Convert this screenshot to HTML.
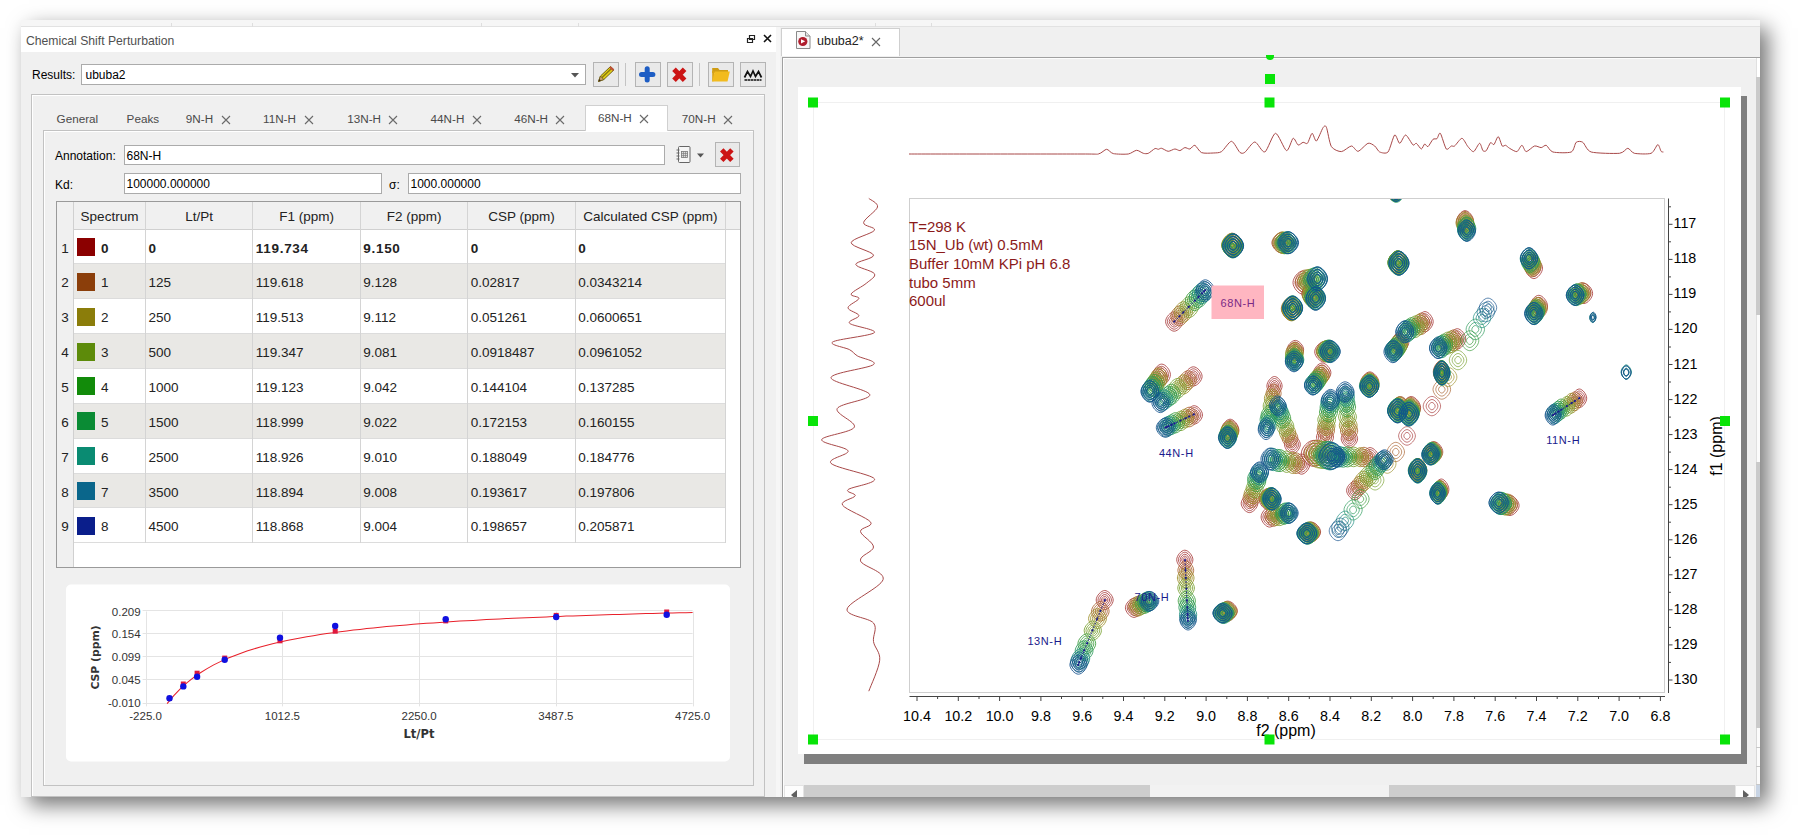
<!DOCTYPE html>
<html>
<head>
<meta charset="utf-8">
<title>Chemical Shift Perturbation</title>
<style>
html,body{margin:0;padding:0;background:#fff;}
body{width:1802px;height:839px;position:relative;overflow:hidden;font-family:"Liberation Sans",sans-serif;font-size:12px;color:#000;}
.abs{position:absolute;}
#win{position:absolute;left:21px;top:20px;width:1739px;height:777px;background:#f0f0f0;box-shadow:8px 8px 20px 0 rgba(0,0,0,0.55);overflow:hidden;}
#win *{box-sizing:border-box;}
#win svg *{box-sizing:content-box;}
.strip{position:absolute;left:0;top:0;width:1739px;height:7px;background:#f6f6f6;border-bottom:1px solid #e2e2e2;}
.titlebar{position:absolute;left:0;top:7px;width:755px;height:25px;background:#fff;}
.titlebar span{position:absolute;left:5px;top:6.500px;font-size:12.200px;color:#505050;}
.inp{position:absolute;background:#fff;border:1px solid #ababab;font-size:12px;line-height:20px;padding-left:2px;white-space:nowrap;}
.btn{position:absolute;width:26px;height:24.500px;border:1px solid #b4b4b4;background:#e9e9e9;}
.btn svg{position:absolute;left:0;top:0;}
.lbl{position:absolute;font-size:12px;white-space:nowrap;}
.tab{position:absolute;font-size:11.700px;color:#4a4a4a;white-space:nowrap;}
.th{font-size:13.500px;text-align:center;line-height:30px;color:#222;white-space:nowrap;}
.td{font-size:13.500px;white-space:nowrap;color:#222;}
.rn{font-size:13.500px;text-align:center;color:#222;}
</style>
</head>
<body>
<div id="win">
  <div class="strip"><i style="position:absolute;left:150px;top:3px;width:1px;height:4px;background:#dedede"></i><i style="position:absolute;left:231px;top:3px;width:1px;height:4px;background:#dedede"></i><i style="position:absolute;left:460px;top:3px;width:1px;height:4px;background:#dedede"></i><i style="position:absolute;left:557px;top:3px;width:1px;height:4px;background:#dedede"></i><i style="position:absolute;left:854px;top:3px;width:1px;height:4px;background:#dedede"></i><i style="position:absolute;left:910px;top:3px;width:1px;height:4px;background:#dedede"></i></div>
  <div class="titlebar"><span>Chemical Shift Perturbation</span>
    <svg class="abs" style="left:724px;top:6px" width="30" height="12" viewBox="0 0 30 12"><path d="M4.500 2.500h5v4h-5zM2.500 5.500h5v4h-5z" fill="#fff" stroke="#222" stroke-width="1.200"/><path d="M19 2l7 7M26 2l-7 7" stroke="#111" stroke-width="1.600"/></svg>
  </div>
  <div class="abs" style="left:755px;top:7px;width:4px;height:770px;background:#f6f6f6;"></div>
  <div id="left" class="abs" style="left:0;top:32px;width:755px;height:745px;overflow:hidden;">
<svg class="abs" style="left:0;top:0" width="755" height="745" viewBox="21 52 755 745">
<rect x="66" y="584.5" width="664" height="177" rx="5" fill="#fff"/>
<path d="M146.5 611.5V706.4" stroke="#e4e4e4" stroke-width="1"/>
<path d="M282.5 611.5V706.4" stroke="#e4e4e4" stroke-width="1"/>
<path d="M419.5 611.5V706.4" stroke="#e4e4e4" stroke-width="1"/>
<path d="M556.5 611.5V706.4" stroke="#e4e4e4" stroke-width="1"/>
<path d="M693.5 611.5V706.4" stroke="#e4e4e4" stroke-width="1"/>
<path d="M142.6 610.5H692.6" stroke="#e4e4e4" stroke-width="1"/>
<path d="M142.6 633.5H692.6" stroke="#e4e4e4" stroke-width="1"/>
<path d="M142.6 656.5H692.6" stroke="#e4e4e4" stroke-width="1"/>
<path d="M142.6 679.5H692.6" stroke="#e4e4e4" stroke-width="1"/>
<path d="M142.6 703.5H692.6" stroke="#e4e4e4" stroke-width="1"/>
<text x="140.6" y="615.5" text-anchor="end" font-size="11.500" fill="#333">0.209</text>
<text x="140.6" y="637.7" text-anchor="end" font-size="11.500" fill="#333">0.154</text>
<text x="140.6" y="660.8" text-anchor="end" font-size="11.500" fill="#333">0.099</text>
<text x="140.6" y="683.9" text-anchor="end" font-size="11.500" fill="#333">0.045</text>
<text x="140.6" y="707.4" text-anchor="end" font-size="11.500" fill="#333">-0.010</text>
<text x="145.6" y="719.500" text-anchor="middle" font-size="11.500" fill="#333">-225.0</text>
<text x="282.4" y="719.500" text-anchor="middle" font-size="11.500" fill="#333">1012.5</text>
<text x="419.1" y="719.500" text-anchor="middle" font-size="11.500" fill="#333">2250.0</text>
<text x="555.9" y="719.500" text-anchor="middle" font-size="11.500" fill="#333">3487.5</text>
<text x="692.6" y="719.500" text-anchor="middle" font-size="11.500" fill="#333">4725.0</text>
<text x="419" y="738" text-anchor="middle" font-size="11.500" font-weight="bold" fill="#333" font-family="'DejaVu Sans','Liberation Sans',sans-serif">Lt/Pt</text>
<text transform="translate(98.500,657.500) rotate(-90)" text-anchor="middle" font-size="10.800" font-weight="bold" fill="#333" font-family="'DejaVu Sans','Liberation Sans',sans-serif">CSP (ppm)</text>
<path d="M167.1 703.7L173.8 695.6L180.5 688.7L187.1 682.6L193.8 677.4L200.4 672.7L207.1 668.6L213.7 664.9L220.4 661.6L227.0 658.6L233.7 655.9L240.3 653.4L247.0 651.1L253.6 649.0L260.3 647.1L266.9 645.3L273.6 643.6L280.2 642.1L286.9 640.6L293.5 639.3L300.2 638.0L306.8 636.8L313.5 635.7L320.1 634.6L326.8 633.6L333.4 632.7L340.1 631.8L346.7 630.9L353.4 630.1L360.0 629.4L366.7 628.6L373.3 627.9L380.0 627.3L386.6 626.6L393.3 626.0L399.9 625.4L406.6 624.9L413.2 624.3L419.9 623.8L426.5 623.3L433.2 622.9L439.9 622.4L446.5 622.0L453.2 621.5L459.8 621.1L466.5 620.7L473.1 620.4L479.8 620.0L486.4 619.6L493.1 619.3L499.7 619.0L506.4 618.6L513.0 618.3L519.7 618.0L526.3 617.7L533.0 617.4L539.6 617.2L546.3 616.9L552.9 616.6L559.6 616.4L566.2 616.1L572.9 615.9L579.5 615.7L586.2 615.4L592.8 615.2L599.5 615.0L606.1 614.8L612.8 614.6L619.4 614.4L626.1 614.2L632.7 614.0L639.4 613.8L646.0 613.6L652.7 613.5L659.3 613.3L666.0 613.1L672.6 613.0L679.3 612.8L685.9 612.7L692.6 612.5" fill="none" stroke="#e8202a" stroke-width="1.050"/>
<rect x="167.0" y="695.9" width="5" height="5" fill="#e0183c"/>
<rect x="180.8" y="681.5" width="5" height="5" fill="#e0183c"/>
<rect x="194.6" y="670.7" width="5" height="5" fill="#e0183c"/>
<rect x="222.2" y="655.6" width="5" height="5" fill="#e0183c"/>
<rect x="277.5" y="638.3" width="5" height="5" fill="#e0183c"/>
<rect x="332.7" y="628.7" width="5" height="5" fill="#e0183c"/>
<rect x="443.2" y="618.4" width="5" height="5" fill="#e0183c"/>
<rect x="553.7" y="612.9" width="5" height="5" fill="#e0183c"/>
<rect x="664.2" y="609.5" width="5" height="5" fill="#e0183c"/>
<circle cx="169.5" cy="698.2" r="3.200" fill="#1010e0"/>
<circle cx="183.3" cy="686.4" r="3.200" fill="#1010e0"/>
<circle cx="197.1" cy="676.7" r="3.200" fill="#1010e0"/>
<circle cx="224.7" cy="659.7" r="3.200" fill="#1010e0"/>
<circle cx="280.0" cy="637.7" r="3.200" fill="#1010e0"/>
<circle cx="335.2" cy="626.0" r="3.200" fill="#1010e0"/>
<circle cx="445.7" cy="619.3" r="3.200" fill="#1010e0"/>
<circle cx="556.2" cy="617.0" r="3.200" fill="#1010e0"/>
<circle cx="666.7" cy="614.8" r="3.200" fill="#1010e0"/>
</svg>
<div class="lbl" style="left:11px;top:16px;">Results:</div>
<div class="inp" style="left:60px;top:12px;width:505px;height:21px;line-height:21px;padding-left:3.500px;">ububa2<svg style="position:absolute;right:6px;top:8px" width="8" height="5"><path d="M0 0h8L4 4.5z" fill="#555"/></svg></div>
<div class="btn" style="left:572px;top:10.2px;"><svg width="24" height="22" viewBox="0 0 24 22"><path d="M4.500 18.500l2-5.500L16.500 3.500l3.500 3.300L9.800 16.500z" fill="#e6d018" stroke="#6e6210" stroke-width="1"/><path d="M7.500 15L18 5" stroke="#8a7c0e" stroke-width="1.600"/><path d="M4.500 18.500l2-5.500 3.300 3.500z" fill="#c9a06a" stroke="#6e5a20" stroke-width=".8"/><path d="M4.500 18.500l.9-2.400 1.500 1.500z" fill="#3a2a10"/><path d="M16 4l3.500 3.300" stroke="#c0503a" stroke-width="2.200"/></svg></div>
<div class="btn" style="left:614px;top:10.2px;"><svg width="24" height="22" viewBox="0 0 24 22"><path d="M11.200 5.700v11.400M5.500 11.400h11.400" stroke="#1d5dc4" stroke-width="5" stroke-linecap="round" fill="none"/></svg></div>
<div class="btn" style="left:646px;top:10.2px;"><svg width="24" height="22" viewBox="0 0 24 22"><path d="M6 6.200l10.600 11M16.600 6.200l-10.600 11" stroke="#cc1414" stroke-width="5" stroke-linecap="butt" fill="none"/></svg></div>
<div class="btn" style="left:687px;top:10.2px;"><svg width="24" height="22" viewBox="0 0 24 22"><path d="M3.200 5h5.800l1.500 2h8.500v3H3.200z" fill="#cf9c14"/><path d="M3.200 18.500V8h2v10z" fill="#d8a317"/><path d="M3.200 18.500l2.400-10h15.200l-2.300 10z" fill="#f2bb1e"/></svg></div>
<div class="btn" style="left:719px;top:10.2px;"><svg width="24" height="22" viewBox="0 0 24 22"><path d="M3.500 14.500l3-6 3 5 2.500-5.500 2.500 5.500 3-5 3 6" fill="none" stroke="#111" stroke-width="1.700" stroke-linejoin="miter"/><path d="M3.500 17h17" stroke="#111" stroke-width="1.700" stroke-dasharray="2.600 .5"/></svg></div>
<div class="abs" style="left:604.3px;top:11px;width:1px;height:23px;background:#c4c4c4;"></div>
<div class="abs" style="left:678px;top:11px;width:1px;height:23px;background:#c4c4c4;"></div>
<div class="abs" style="left:10px;top:41.5px;width:734px;height:703.0px;border:1px solid #c2c2c2;box-shadow:inset 1px 1px 0 #fff;"></div>
<div class="abs" style="left:22px;top:77.5px;width:710.5px;height:656.0px;border:1px solid #c2c2c2;box-shadow:inset 1px 1px 0 #fff;"></div>
<div class="abs" style="left:564px;top:53px;width:83px;height:26px;background:#fff;border:1px solid #d0d0d0;border-bottom:none;"></div>
<div class="tab" style="left:35.6px;top:60px;">General</div>
<div class="tab" style="left:105.6px;top:60px;">Peaks</div>
<div class="tab" style="left:164.8px;top:60px;">9N-H</div>
<svg class="abs" style="left:199.5px;top:63.0px" width="10" height="10"><path d="M1 1l8 8M9 1l-8 8" stroke="#6a6a6a" stroke-width="1.100" fill="none"/></svg>
<div class="tab" style="left:242px;top:60px;">11N-H</div>
<svg class="abs" style="left:283px;top:63.0px" width="10" height="10"><path d="M1 1l8 8M9 1l-8 8" stroke="#6a6a6a" stroke-width="1.100" fill="none"/></svg>
<div class="tab" style="left:326.2px;top:60px;">13N-H</div>
<svg class="abs" style="left:367px;top:63.0px" width="10" height="10"><path d="M1 1l8 8M9 1l-8 8" stroke="#6a6a6a" stroke-width="1.100" fill="none"/></svg>
<div class="tab" style="left:409.6px;top:60px;">44N-H</div>
<svg class="abs" style="left:450.5px;top:63.0px" width="10" height="10"><path d="M1 1l8 8M9 1l-8 8" stroke="#6a6a6a" stroke-width="1.100" fill="none"/></svg>
<div class="tab" style="left:493.2px;top:60px;">46N-H</div>
<svg class="abs" style="left:534px;top:63.0px" width="10" height="10"><path d="M1 1l8 8M9 1l-8 8" stroke="#6a6a6a" stroke-width="1.100" fill="none"/></svg>
<div class="tab" style="left:577px;top:59px;">68N-H</div>
<svg class="abs" style="left:618px;top:62.0px" width="10" height="10"><path d="M1 1l8 8M9 1l-8 8" stroke="#6a6a6a" stroke-width="1.100" fill="none"/></svg>
<div class="tab" style="left:660.8px;top:60px;">70N-H</div>
<svg class="abs" style="left:701.5px;top:63.0px" width="10" height="10"><path d="M1 1l8 8M9 1l-8 8" stroke="#6a6a6a" stroke-width="1.100" fill="none"/></svg>
<div class="lbl" style="left:34px;top:96.5px;">Annotation:</div>
<div class="inp" style="left:102.5px;top:92.5px;width:541.0px;height:20px;">68N-H</div>
<svg class="abs" style="left:654px;top:94px" width="32" height="18" viewBox="0 0 32 18"><rect x="3.500" y=".5" width="11.500" height="16" rx="1" fill="#f6f6f6" stroke="#666"/><rect x="6.500" y="5.500" width="6" height="6" fill="#ddd" stroke="#777" stroke-width=".8"/><path d="M8.500 5.500v6M10.500 5.500v6M6.500 7.500h6M6.500 9.500h6" stroke="#777" stroke-width=".6"/><path d="M1.500 4h3M1.500 7h3M1.500 10h3M1.500 13h3" stroke="#666" stroke-width="1"/><path d="M22 7.500h7l-3.500 4z" fill="#555"/></svg>
<div class="btn" style="left:693.5px;top:90px;width:25px;height:25px;"><svg width="23" height="23" viewBox="0 0 24 22"><path d="M6 6.200l10.600 11M16.600 6.200l-10.600 11" stroke="#cc1414" stroke-width="5" stroke-linecap="butt" fill="none"/></svg></div>
<div class="lbl" style="left:34px;top:125.5px;">Kd:</div>
<div class="inp" style="left:102.5px;top:121px;width:258.0px;height:20.500px;">100000.000000</div>
<div class="lbl" style="left:368px;top:125.5px;">σ:</div>
<div class="inp" style="left:386.5px;top:121px;width:333.0px;height:20.500px;">1000.000000</div>
<div class="abs" style="left:34.5px;top:149px;width:685.0px;height:366.5px;background:#fff;border:1px solid #9a9a9a;"></div>
<div class="abs" style="left:35.5px;top:150px;width:683.0px;height:27.5px;background:#f0f0f0;border-bottom:1px solid #d0d0d0;"></div>
<div class="abs" style="left:35.5px;top:150px;width:17.0px;height:364.5px;background:#f0f0f0;border-right:1px solid #d0d0d0;"></div>
<div class="abs th" style="left:52.5px;top:150px;width:72.0px;height:27.5px;">Spectrum</div>
<div class="abs th" style="left:124.5px;top:150px;width:107.3px;height:27.5px;">Lt/Pt</div>
<div class="abs th" style="left:231.8px;top:150px;width:107.5px;height:27.5px;">F1 (ppm)</div>
<div class="abs th" style="left:339.3px;top:150px;width:107.5px;height:27.5px;">F2 (ppm)</div>
<div class="abs th" style="left:446.8px;top:150px;width:107.5px;height:27.5px;">CSP (ppm)</div>
<div class="abs th" style="left:554.3px;top:150px;width:150.2px;height:27.5px;">Calculated CSP (ppm)</div>
<div class="abs" style="left:52.5px;top:177.5px;width:652.0px;height:34.86px;background:#fff;border-bottom:1px solid #dcdcdc;"></div>
<div class="abs rn" style="left:35.5px;top:177.5px;width:17.0px;height:34.86px;line-height:37.86px;">1</div>
<div class="abs" style="left:55.7px;top:186.0px;width:18px;height:18px;background:#8b0000;"></div>
<div class="abs td" style="left:80.0px;top:177.5px;height:34.86px;line-height:37.86px;font-weight:bold;letter-spacing:.7px;">0</div>
<div class="abs td" style="left:127.5px;top:177.5px;height:34.86px;line-height:37.86px;font-weight:bold;letter-spacing:.7px;">0</div>
<div class="abs td" style="left:234.8px;top:177.5px;height:34.86px;line-height:37.86px;font-weight:bold;letter-spacing:.7px;">119.734</div>
<div class="abs td" style="left:342.3px;top:177.5px;height:34.86px;line-height:37.86px;font-weight:bold;letter-spacing:.7px;">9.150</div>
<div class="abs td" style="left:449.8px;top:177.5px;height:34.86px;line-height:37.86px;font-weight:bold;letter-spacing:.7px;">0</div>
<div class="abs td" style="left:557.3px;top:177.5px;height:34.86px;line-height:37.86px;font-weight:bold;letter-spacing:.7px;">0</div>
<div class="abs" style="left:52.5px;top:212.4px;width:652.0px;height:34.86px;background:#e9e8e5;border-bottom:1px solid #dcdcdc;"></div>
<div class="abs rn" style="left:35.5px;top:212.4px;width:17.0px;height:34.86px;line-height:37.86px;">2</div>
<div class="abs" style="left:55.7px;top:220.9px;width:18px;height:18px;background:#8b3e0a;"></div>
<div class="abs td" style="left:80.0px;top:212.4px;height:34.86px;line-height:37.86px;">1</div>
<div class="abs td" style="left:127.5px;top:212.4px;height:34.86px;line-height:37.86px;">125</div>
<div class="abs td" style="left:234.8px;top:212.4px;height:34.86px;line-height:37.86px;">119.618</div>
<div class="abs td" style="left:342.3px;top:212.4px;height:34.86px;line-height:37.86px;">9.128</div>
<div class="abs td" style="left:449.8px;top:212.4px;height:34.86px;line-height:37.86px;">0.02817</div>
<div class="abs td" style="left:557.3px;top:212.4px;height:34.86px;line-height:37.86px;">0.0343214</div>
<div class="abs" style="left:52.5px;top:247.2px;width:652.0px;height:34.86px;background:#fff;border-bottom:1px solid #dcdcdc;"></div>
<div class="abs rn" style="left:35.5px;top:247.2px;width:17.0px;height:34.86px;line-height:37.86px;">3</div>
<div class="abs" style="left:55.7px;top:255.7px;width:18px;height:18px;background:#8b7d0a;"></div>
<div class="abs td" style="left:80.0px;top:247.2px;height:34.86px;line-height:37.86px;">2</div>
<div class="abs td" style="left:127.5px;top:247.2px;height:34.86px;line-height:37.86px;">250</div>
<div class="abs td" style="left:234.8px;top:247.2px;height:34.86px;line-height:37.86px;">119.513</div>
<div class="abs td" style="left:342.3px;top:247.2px;height:34.86px;line-height:37.86px;">9.112</div>
<div class="abs td" style="left:449.8px;top:247.2px;height:34.86px;line-height:37.86px;">0.051261</div>
<div class="abs td" style="left:557.3px;top:247.2px;height:34.86px;line-height:37.86px;">0.0600651</div>
<div class="abs" style="left:52.5px;top:282.1px;width:652.0px;height:34.86px;background:#e9e8e5;border-bottom:1px solid #dcdcdc;"></div>
<div class="abs rn" style="left:35.5px;top:282.1px;width:17.0px;height:34.86px;line-height:37.86px;">4</div>
<div class="abs" style="left:55.7px;top:290.6px;width:18px;height:18px;background:#5d8b0a;"></div>
<div class="abs td" style="left:80.0px;top:282.1px;height:34.86px;line-height:37.86px;">3</div>
<div class="abs td" style="left:127.5px;top:282.1px;height:34.86px;line-height:37.86px;">500</div>
<div class="abs td" style="left:234.8px;top:282.1px;height:34.86px;line-height:37.86px;">119.347</div>
<div class="abs td" style="left:342.3px;top:282.1px;height:34.86px;line-height:37.86px;">9.081</div>
<div class="abs td" style="left:449.8px;top:282.1px;height:34.86px;line-height:37.86px;">0.0918487</div>
<div class="abs td" style="left:557.3px;top:282.1px;height:34.86px;line-height:37.86px;">0.0961052</div>
<div class="abs" style="left:52.5px;top:316.9px;width:652.0px;height:34.86px;background:#fff;border-bottom:1px solid #dcdcdc;"></div>
<div class="abs rn" style="left:35.5px;top:316.9px;width:17.0px;height:34.86px;line-height:37.86px;">5</div>
<div class="abs" style="left:55.7px;top:325.4px;width:18px;height:18px;background:#128b0a;"></div>
<div class="abs td" style="left:80.0px;top:316.9px;height:34.86px;line-height:37.86px;">4</div>
<div class="abs td" style="left:127.5px;top:316.9px;height:34.86px;line-height:37.86px;">1000</div>
<div class="abs td" style="left:234.8px;top:316.9px;height:34.86px;line-height:37.86px;">119.123</div>
<div class="abs td" style="left:342.3px;top:316.9px;height:34.86px;line-height:37.86px;">9.042</div>
<div class="abs td" style="left:449.8px;top:316.9px;height:34.86px;line-height:37.86px;">0.144104</div>
<div class="abs td" style="left:557.3px;top:316.9px;height:34.86px;line-height:37.86px;">0.137285</div>
<div class="abs" style="left:52.5px;top:351.8px;width:652.0px;height:34.86px;background:#e9e8e5;border-bottom:1px solid #dcdcdc;"></div>
<div class="abs rn" style="left:35.5px;top:351.8px;width:17.0px;height:34.86px;line-height:37.86px;">6</div>
<div class="abs" style="left:55.7px;top:360.3px;width:18px;height:18px;background:#0a8b34;"></div>
<div class="abs td" style="left:80.0px;top:351.8px;height:34.86px;line-height:37.86px;">5</div>
<div class="abs td" style="left:127.5px;top:351.8px;height:34.86px;line-height:37.86px;">1500</div>
<div class="abs td" style="left:234.8px;top:351.8px;height:34.86px;line-height:37.86px;">118.999</div>
<div class="abs td" style="left:342.3px;top:351.8px;height:34.86px;line-height:37.86px;">9.022</div>
<div class="abs td" style="left:449.8px;top:351.8px;height:34.86px;line-height:37.86px;">0.172153</div>
<div class="abs td" style="left:557.3px;top:351.8px;height:34.86px;line-height:37.86px;">0.160155</div>
<div class="abs" style="left:52.5px;top:386.7px;width:652.0px;height:34.86px;background:#fff;border-bottom:1px solid #dcdcdc;"></div>
<div class="abs rn" style="left:35.5px;top:386.7px;width:17.0px;height:34.86px;line-height:37.86px;">7</div>
<div class="abs" style="left:55.7px;top:395.2px;width:18px;height:18px;background:#0a8b72;"></div>
<div class="abs td" style="left:80.0px;top:386.7px;height:34.86px;line-height:37.86px;">6</div>
<div class="abs td" style="left:127.5px;top:386.7px;height:34.86px;line-height:37.86px;">2500</div>
<div class="abs td" style="left:234.8px;top:386.7px;height:34.86px;line-height:37.86px;">118.926</div>
<div class="abs td" style="left:342.3px;top:386.7px;height:34.86px;line-height:37.86px;">9.010</div>
<div class="abs td" style="left:449.8px;top:386.7px;height:34.86px;line-height:37.86px;">0.188049</div>
<div class="abs td" style="left:557.3px;top:386.7px;height:34.86px;line-height:37.86px;">0.184776</div>
<div class="abs" style="left:52.5px;top:421.5px;width:652.0px;height:34.86px;background:#e9e8e5;border-bottom:1px solid #dcdcdc;"></div>
<div class="abs rn" style="left:35.5px;top:421.5px;width:17.0px;height:34.86px;line-height:37.86px;">8</div>
<div class="abs" style="left:55.7px;top:430.0px;width:18px;height:18px;background:#0a668b;"></div>
<div class="abs td" style="left:80.0px;top:421.5px;height:34.86px;line-height:37.86px;">7</div>
<div class="abs td" style="left:127.5px;top:421.5px;height:34.86px;line-height:37.86px;">3500</div>
<div class="abs td" style="left:234.8px;top:421.5px;height:34.86px;line-height:37.86px;">118.894</div>
<div class="abs td" style="left:342.3px;top:421.5px;height:34.86px;line-height:37.86px;">9.008</div>
<div class="abs td" style="left:449.8px;top:421.5px;height:34.86px;line-height:37.86px;">0.193617</div>
<div class="abs td" style="left:557.3px;top:421.5px;height:34.86px;line-height:37.86px;">0.197806</div>
<div class="abs" style="left:52.5px;top:456.4px;width:652.0px;height:34.86px;background:#fff;border-bottom:1px solid #dcdcdc;"></div>
<div class="abs rn" style="left:35.5px;top:456.4px;width:17.0px;height:34.86px;line-height:37.86px;">9</div>
<div class="abs" style="left:55.7px;top:464.9px;width:18px;height:18px;background:#0a1e8b;"></div>
<div class="abs td" style="left:80.0px;top:456.4px;height:34.86px;line-height:37.86px;">8</div>
<div class="abs td" style="left:127.5px;top:456.4px;height:34.86px;line-height:37.86px;">4500</div>
<div class="abs td" style="left:234.8px;top:456.4px;height:34.86px;line-height:37.86px;">118.868</div>
<div class="abs td" style="left:342.3px;top:456.4px;height:34.86px;line-height:37.86px;">9.004</div>
<div class="abs td" style="left:449.8px;top:456.4px;height:34.86px;line-height:37.86px;">0.198657</div>
<div class="abs td" style="left:557.3px;top:456.4px;height:34.86px;line-height:37.86px;">0.205871</div>
<div class="abs" style="left:124.0px;top:150px;width:1px;height:341.2px;background:#d4d4d4;"></div>
<div class="abs" style="left:231.3px;top:150px;width:1px;height:341.2px;background:#d4d4d4;"></div>
<div class="abs" style="left:338.8px;top:150px;width:1px;height:341.2px;background:#d4d4d4;"></div>
<div class="abs" style="left:446.3px;top:150px;width:1px;height:341.2px;background:#d4d4d4;"></div>
<div class="abs" style="left:553.8px;top:150px;width:1px;height:341.2px;background:#d4d4d4;"></div>
<div class="abs" style="left:704.0px;top:150px;width:1px;height:341.2px;background:#d4d4d4;"></div>
  </div>
  <div id="right" class="abs" style="left:759px;top:7px;width:980px;height:770px;overflow:hidden;">
<div class="abs" style="left:1px;top:1px;width:119px;height:28px;background:#fff;border:1px solid #cfcfcf;border-bottom:none;"></div>
<svg class="abs" style="left:15px;top:3px" width="17" height="20" viewBox="0 0 17 20"><path d="M1.500 1.500h9l4.500 4.500v12.500h-13.500z" fill="#f7f7f7" stroke="#8a8a8a"/><path d="M10.500 1.500v4.500h4.500" fill="#e4e4e4" stroke="#8a8a8a"/><circle cx="7.800" cy="11.500" r="4.600" fill="#b01e2e"/><path d="M6 9.300l4.200 2-4.200 2.300z" fill="#fff"/></svg>
<div class="lbl" style="left:37px;top:7px;font-size:12.500px;color:#222;">ububa2*</div>
<svg class="abs" style="left:91px;top:9.5px" width="10" height="10"><path d="M1 1l8 8M9 1l-8 8" stroke="#666" stroke-width="1.100" fill="none"/></svg>
<div class="abs" style="left:2px;top:30px;width:981px;height:743px;border:1px solid #a0a0a0;background:#f0f0f0;box-shadow:inset 1px 1px 0 #fdfdfd;"></div>
<div class="abs" style="left:485.5px;top:28px;width:8px;height:5px;border-radius:0 0 4px 4px;background:#08e408;"></div>
<div class="abs" style="left:484.5px;top:47px;width:10px;height:10px;background:#08e408;"></div>
<div class="abs" style="left:24px;top:69px;width:943px;height:668px;background:#7f7f7f;"></div>
<div id="page" class="abs" style="left:18px;top:60px;width:943px;height:667px;background:#fff;overflow:hidden;"><svg class="abs" style="left:0;top:0" width="943" height="667" viewBox="798 87 943 667" font-family="'Liberation Sans',sans-serif">
<rect x="813.500" y="102.500" width="911" height="637" fill="none" stroke="#f0f0f0"/>
<rect x="909.5" y="198.5" width="755.0" height="494.0" fill="#fff" stroke="#cfcfcf"/>
<clipPath id="cp"><rect x="910.0" y="199.0" width="754.0" height="493.0"/></clipPath>
<g clip-path="url(#cp)" fill="none" stroke-width=".85">
<g stroke="#a83c3c">
<path d="M1182.8 321.5c0 4.2-4.9 9.7-8.6 9.7s-8.6-5.5-8.6-9.7 4.9-9.7 8.6-9.7 8.6 5.5 8.6 9.7zM1181 321.5c0 3.3-3.9 7.7-6.8 7.7s-6.8-4.4-6.8-7.7 3.9-7.7 6.8-7.7 6.8 4.4 6.8 7.7zM1179.2 321.5c0 2.4-2.8 5.6-5 5.6s-5-3.2-5-5.6 2.8-5.6 5-5.6 5 3.2 5 5.6zM1177.5 321.5c0 1.6-1.9 3.7-3.3 3.7s-3.3-2.1-3.3-3.7 1.9-3.7 3.3-3.7 3.3 2.1 3.3 3.7zM1176 321.5c0 .8-1 1.9-1.7 1.9s-1.7-1.1-1.7-1.9 1-1.9 1.7-1.9 1.7 1.1 1.7 1.9z"/>
<path d="M1242.1 244.6c0 4.9-5.7 11.4-9.9 11.4s-9.9-6.5-9.9-11.4 5.7-11.4 9.9-11.4 9.9 6.5 9.9 11.4zM1240 244.6c0 3.9-4.5 9-7.8 9s-7.8-5.1-7.8-9 4.5-9 7.8-9 7.8 5.1 7.8 9zM1237.9 244.6c0 2.8-3.3 6.6-5.8 6.6s-5.8-3.8-5.8-6.6 3.3-6.6 5.8-6.6 5.8 3.8 5.8 6.6zM1235.9 244.6c0 1.9-2.2 4.3-3.8 4.3s-3.8-2.5-3.8-4.3 2.2-4.3 3.8-4.3 3.8 2.5 3.8 4.3zM1234.1 244.6c0 1-1.1 2.3-2 2.3s-2-1.3-2-2.3 1.1-2.3 2-2.3 2 1.3 2 2.3z"/>
<path d="M1290.1 242.8c0 4.3-5.2 10-9.1 10s-9.1-5.7-9.1-10 5.2-10 9.1-10 9.1 5.7 9.1 10zM1288.2 242.8c0 3.4-4.1 7.9-7.2 7.9s-7.2-4.5-7.2-7.9 4.1-7.9 7.2-7.9 7.2 4.5 7.2 7.9zM1286.3 242.8c0 2.5-3 5.8-5.3 5.8s-5.3-3.3-5.3-5.8 3-5.8 5.3-5.8 5.3 3.3 5.3 5.8zM1284.5 242.8c0 1.6-2 3.8-3.5 3.8s-3.5-2.2-3.5-3.8 2-3.8 3.5-3.8 3.5 2.2 3.5 3.8zM1282.9 242.8c0 .9-1 2-1.8 2s-1.8-1.1-1.8-2 1-2 1.8-2 1.8 1.1 1.8 2z"/>
<path d="M1406.7 262c0 4.8-5.3 11.1-9.2 11.1s-9.2-6.3-9.2-11.1 5.3-11.1 9.2-11.1 9.2 6.3 9.2 11.1zM1404.8 262c0 3.8-4.2 8.8-7.3 8.8s-7.3-5-7.3-8.8 4.2-8.8 7.3-8.8 7.3 5 7.3 8.8zM1402.9 262c0 2.8-3.1 6.4-5.4 6.4s-5.4-3.7-5.4-6.4 3.1-6.4 5.4-6.4 5.4 3.7 5.4 6.4zM1401 262c0 1.8-2 4.2-3.5 4.2s-3.5-2.4-3.5-4.2 2-4.2 3.5-4.2 3.5 2.4 3.5 4.2zM1399.3 262c0 1-1.1 2.2-1.8 2.2s-1.8-1.3-1.8-2.2 1.1-2.2 1.8-2.2 1.8 1.3 1.8 2.2z"/>
<path d="M1312.2 282.6c0 5-5.5 11.5-9.6 11.5s-9.6-6.6-9.6-11.5 5.5-11.5 9.6-11.5 9.6 6.6 9.6 11.5zM1310.2 282.6c0 3.9-4.3 9.1-7.6 9.1s-7.6-5.2-7.6-9.1 4.3-9.1 7.6-9.1 7.6 5.2 7.6 9.1zM1308.1 282.6c0 2.9-3.2 6.7-5.6 6.7s-5.6-3.8-5.6-6.7 3.2-6.7 5.6-6.7 5.6 3.8 5.6 6.7zM1306.2 282.6c0 1.9-2.1 4.4-3.6 4.4s-3.6-2.5-3.6-4.4 2.1-4.4 3.6-4.4 3.6 2.5 3.6 4.4zM1304.5 282.6c0 1-1.1 2.3-1.9 2.3s-1.9-1.3-1.9-2.3 1.1-2.3 1.9-2.3 1.9 1.3 1.9 2.3z"/>
<path d="M1320.3 293.4c0 4.7-5.2 11-9.2 11s-9.2-6.3-9.2-11 5.2-11 9.2-11 9.2 6.3 9.2 11zM1318.4 293.4c0 3.7-4.1 8.7-7.3 8.7s-7.3-5-7.3-8.7 4.1-8.7 7.3-8.7 7.3 5 7.3 8.7zM1316.5 293.4c0 2.8-3 6.4-5.3 6.4s-5.3-3.6-5.3-6.4 3-6.4 5.3-6.4 5.3 3.6 5.3 6.4zM1314.6 293.4c0 1.8-2 4.2-3.5 4.2s-3.5-2.4-3.5-4.2 2-4.2 3.5-4.2 3.5 2.4 3.5 4.2zM1313 293.4c0 .9-1 2.2-1.8 2.2s-1.8-1.3-1.8-2.2 1-2.2 1.8-2.2 1.8 1.3 1.8 2.2z"/>
<path d="M1300.7 309.2c0 4.9-5.4 11.3-9.4 11.3s-9.4-6.4-9.4-11.3 5.4-11.3 9.4-11.3 9.4 6.4 9.4 11.3zM1298.7 309.2c0 3.8-4.2 8.9-7.4 8.9s-7.4-5.1-7.4-8.9 4.2-8.9 7.4-8.9 7.4 5.1 7.4 8.9zM1296.7 309.2c0 2.8-3.1 6.6-5.5 6.6s-5.5-3.7-5.5-6.6 3.1-6.6 5.5-6.6 5.5 3.7 5.5 6.6zM1294.8 309.2c0 1.8-2 4.3-3.6 4.3s-3.6-2.4-3.6-4.3 2-4.3 3.6-4.3 3.6 2.4 3.6 4.3zM1293.1 309.2c0 1-1.1 2.3-1.9 2.3s-1.9-1.3-1.9-2.3 1.1-2.3 1.9-2.3 1.9 1.3 1.9 2.3z"/>
<path d="M1433.2 321.7c0 4.3-4.7 10.1-8.2 10.1s-8.2-5.7-8.2-10.1 4.7-10.1 8.2-10.1 8.2 5.7 8.2 10.1zM1431.5 321.7c0 3.4-3.7 7.9-6.5 7.9s-6.5-4.5-6.5-7.9 3.7-7.9 6.5-7.9 6.5 4.5 6.5 7.9zM1429.7 321.7c0 2.5-2.7 5.8-4.8 5.8s-4.8-3.3-4.8-5.8 2.7-5.8 4.8-5.8 4.8 3.3 4.8 5.8zM1428.1 321.7c0 1.6-1.8 3.8-3.1 3.8s-3.1-2.2-3.1-3.8 1.8-3.8 3.1-3.8 3.1 2.2 3.1 3.8zM1426.6 321.7c0 .9-.9 2-1.6 2s-1.6-1.1-1.6-2 .9-2 1.6-2 1.6 1.1 1.6 2z"/>
<path d="M1402 192.4c0 3.6-4.2 8.4-7.4 8.4s-7.4-4.8-7.4-8.4 4.2-8.4 7.4-8.4 7.4 4.8 7.4 8.4zM1400.4 192.4c0 2.8-3.3 6.6-5.9 6.6s-5.9-3.8-5.9-6.6 3.3-6.6 5.9-6.6 5.9 3.8 5.9 6.6zM1398.8 192.4c0 2.1-2.5 4.8-4.3 4.8s-4.3-2.8-4.3-4.8 2.5-4.8 4.3-4.8 4.3 2.8 4.3 4.8zM1397.4 192.4c0 1.4-1.6 3.2-2.8 3.2s-2.8-1.8-2.8-3.2 1.6-3.2 2.8-3.2 2.8 1.8 2.8 3.2zM1396 192.4c0 .7-.8 1.7-1.5 1.7s-1.5-1-1.5-1.7 .8-1.7 1.5-1.7 1.5 1 1.5 1.7z"/>
<path d="M1473.5 220.9c0 4.4-4.8 10.3-8.4 10.3s-8.4-5.9-8.4-10.3 4.8-10.3 8.4-10.3 8.4 5.9 8.4 10.3zM1471.7 220.9c0 3.5-3.8 8.2-6.7 8.2s-6.7-4.6-6.7-8.2 3.8-8.2 6.7-8.2 6.7 4.6 6.7 8.2zM1469.9 220.9c0 2.6-2.8 6-4.9 6s-4.9-3.4-4.9-6 2.8-6 4.9-6 4.9 3.4 4.9 6zM1468.2 220.9c0 1.7-1.8 3.9-3.2 3.9s-3.2-2.2-3.2-3.9 1.8-3.9 3.2-3.9 3.2 2.2 3.2 3.9zM1466.7 220.9c0 .9-1 2.1-1.7 2.1s-1.7-1.2-1.7-2.1 1-2.1 1.7-2.1 1.7 1.2 1.7 2.1z"/>
<path d="M1542.5 268.1c0 4.5-4.9 10.5-8.6 10.5s-8.6-6-8.6-10.5 4.9-10.5 8.6-10.5 8.6 6 8.6 10.5zM1540.7 268.1c0 3.6-3.9 8.3-6.8 8.3s-6.8-4.7-6.8-8.3 3.9-8.3 6.8-8.3 6.8 4.7 6.8 8.3zM1538.9 268.1c0 2.6-2.8 6.1-5 6.1s-5-3.5-5-6.1 2.8-6.1 5-6.1 5 3.5 5 6.1zM1537.2 268.1c0 1.7-1.9 4-3.3 4s-3.3-2.3-3.3-4 1.9-4 3.3-4 3.3 2.3 3.3 4zM1535.6 268.1c0 .9-1 2.1-1.7 2.1s-1.7-1.2-1.7-2.1 1-2.1 1.7-2.1 1.7 1.2 1.7 2.1z"/>
<path d="M1592.6 293.4c0 4.3-4.9 10.1-8.6 10.1s-8.6-5.7-8.6-10.1 4.9-10.1 8.6-10.1 8.6 5.7 8.6 10.1zM1590.8 293.4c0 3.4-3.9 7.9-6.8 7.9s-6.8-4.5-6.8-7.9 3.9-7.9 6.8-7.9 6.8 4.5 6.8 7.9zM1588.9 293.4c0 2.5-2.9 5.8-5 5.8s-5-3.3-5-5.8 2.9-5.8 5-5.8 5 3.3 5 5.8zM1587.2 293.4c0 1.6-1.9 3.8-3.3 3.8s-3.3-2.2-3.3-3.8 1.9-3.8 3.3-3.8 3.3 2.2 3.3 3.8zM1585.7 293.4c0 .9-1 2-1.7 2s-1.7-1.1-1.7-2 1-2 1.7-2 1.7 1.1 1.7 2z"/>
<path d="M1547.5 305.9c0 4.6-4.9 10.6-8.7 10.6s-8.7-6-8.7-10.6 4.9-10.6 8.7-10.6 8.7 6 8.7 10.6zM1545.6 305.9c0 3.6-3.9 8.4-6.8 8.4s-6.8-4.8-6.8-8.4 3.9-8.4 6.8-8.4 6.8 4.8 6.8 8.4zM1543.8 305.9c0 2.6-2.9 6.1-5 6.1s-5-3.5-5-6.1 2.9-6.1 5-6.1 5 3.5 5 6.1zM1542.1 305.9c0 1.7-1.9 4-3.3 4s-3.3-2.3-3.3-4 1.9-4 3.3-4 3.3 2.3 3.3 4zM1540.5 305.9c0 .9-1 2.1-1.7 2.1s-1.7-1.2-1.7-2.1 1-2.1 1.7-2.1 1.7 1.2 1.7 2.1z"/>
<path d="M1440.6 406.1c0 4.2-5 9.7-8.7 9.7s-8.7-5.5-8.7-9.7 5-9.7 8.7-9.7 8.7 5.5 8.7 9.7zM1437.9 406.1c0 2.8-3.4 6.6-5.9 6.6s-5.9-3.8-5.9-6.6 3.4-6.6 5.9-6.6 5.9 3.8 5.9 6.6zM1435.2 406.1c0 1.6-1.9 3.7-3.3 3.7s-3.3-2.1-3.3-3.7 1.9-3.7 3.3-3.7 3.3 2.1 3.3 3.7z" stroke-opacity=".8"/>
<path d="M1415.4 435.9c0 4-4.8 9.3-8.4 9.3s-8.4-5.3-8.4-9.3 4.8-9.3 8.4-9.3 8.4 5.3 8.4 9.3zM1412.7 435.9c0 2.7-3.2 6.3-5.7 6.3s-5.7-3.6-5.7-6.3 3.2-6.3 5.7-6.3 5.7 3.6 5.7 6.3zM1410.2 435.9c0 1.5-1.8 3.5-3.2 3.5s-3.2-2-3.2-3.5 1.8-3.5 3.2-3.5 3.2 2 3.2 3.5z" stroke-opacity=".8"/>
<path d="M1465.7 338.9c0 4.4-4.8 10.2-8.4 10.2s-8.4-5.8-8.4-10.2 4.8-10.2 8.4-10.2 8.4 5.8 8.4 10.2zM1463.9 338.9c0 3.5-3.8 8.1-6.6 8.1s-6.6-4.6-6.6-8.1 3.8-8.1 6.6-8.1 6.6 4.6 6.6 8.1zM1462.1 338.9c0 2.6-2.8 5.9-4.9 5.9s-4.9-3.4-4.9-5.9 2.8-5.9 4.9-5.9 4.9 3.4 4.9 5.9zM1460.5 338.9c0 1.7-1.8 3.9-3.2 3.9s-3.2-2.2-3.2-3.9 1.8-3.9 3.2-3.9 3.2 2.2 3.2 3.9zM1459 338.9c0 .9-1 2-1.7 2s-1.7-1.2-1.7-2 1-2 1.7-2 1.7 1.2 1.7 2z"/>
<path d="M1170.4 374.7c0 4.6-4.9 10.6-8.7 10.6s-8.7-6-8.7-10.6 4.9-10.6 8.7-10.6 8.7 6 8.7 10.6zM1168.5 374.7c0 3.6-3.9 8.4-6.9 8.4s-6.9-4.8-6.9-8.4 3.9-8.4 6.9-8.4 6.9 4.8 6.9 8.4zM1166.7 374.7c0 2.6-2.9 6.2-5 6.2s-5-3.5-5-6.2 2.9-6.2 5-6.2 5 3.5 5 6.2zM1165 374.7c0 1.7-1.9 4-3.3 4s-3.3-2.3-3.3-4 1.9-4 3.3-4 3.3 2.3 3.3 4zM1163.4 374.7c0 .9-1 2.1-1.7 2.1s-1.7-1.2-1.7-2.1 1-2.1 1.7-2.1 1.7 1.2 1.7 2.1z"/>
<path d="M1202.1 376.4c0 4.1-4.9 9.6-8.7 9.6s-8.7-5.5-8.7-9.6 4.9-9.6 8.7-9.6 8.7 5.5 8.7 9.6zM1200.3 376.4c0 3.3-3.9 7.6-6.8 7.6s-6.8-4.3-6.8-7.6 3.9-7.6 6.8-7.6 6.8 4.3 6.8 7.6zM1198.5 376.4c0 2.4-2.9 5.6-5 5.6s-5-3.2-5-5.6 2.9-5.6 5-5.6 5 3.2 5 5.6zM1196.8 376.4c0 1.6-1.9 3.7-3.3 3.7s-3.3-2.1-3.3-3.7 1.9-3.7 3.3-3.7 3.3 2.1 3.3 3.7zM1195.2 376.4c0 .8-1 1.9-1.7 1.9s-1.7-1.1-1.7-1.9 1-1.9 1.7-1.9 1.7 1.1 1.7 1.9z"/>
<path d="M1202.5 414.9c0 4-4.7 9.2-8.3 9.2s-8.3-5.2-8.3-9.2 4.7-9.2 8.3-9.2 8.3 5.2 8.3 9.2zM1200.8 414.9c0 3.1-3.7 7.3-6.5 7.3s-6.5-4.1-6.5-7.3 3.7-7.3 6.5-7.3 6.5 4.1 6.5 7.3zM1199.1 414.9c0 2.3-2.7 5.3-4.8 5.3s-4.8-3-4.8-5.3 2.7-5.3 4.8-5.3 4.8 3 4.8 5.3zM1197.4 414.9c0 1.5-1.8 3.5-3.1 3.5s-3.1-2-3.1-3.5 1.8-3.5 3.1-3.5 3.1 2 3.1 3.5zM1195.9 414.9c0 .8-.9 1.8-1.7 1.8s-1.7-1-1.7-1.8 .9-1.8 1.7-1.8 1.7 1 1.7 1.8z"/>
<path d="M1238.8 429.8c0 4.6-4.9 10.6-8.7 10.6s-8.7-6-8.7-10.6 4.9-10.6 8.7-10.6 8.7 6 8.7 10.6zM1237 429.8c0 3.6-3.9 8.4-6.9 8.4s-6.9-4.8-6.9-8.4 3.9-8.4 6.9-8.4 6.9 4.8 6.9 8.4zM1235.2 429.8c0 2.6-2.9 6.2-5 6.2s-5-3.5-5-6.2 2.9-6.2 5-6.2 5 3.5 5 6.2zM1233.5 429.8c0 1.7-1.9 4-3.3 4s-3.3-2.3-3.3-4 1.9-4 3.3-4 3.3 2.3 3.3 4zM1231.9 429.8c0 .9-1 2.1-1.7 2.1s-1.7-1.2-1.7-2.1 1-2.1 1.7-2.1 1.7 1.2 1.7 2.1z"/>
<path d="M1303.6 349.6c0 4-4.7 9.2-8.3 9.2s-8.3-5.3-8.3-9.2 4.7-9.2 8.3-9.2 8.3 5.3 8.3 9.2zM1301.9 349.6c0 3.1-3.7 7.3-6.6 7.3s-6.6-4.2-6.6-7.3 3.7-7.3 6.6-7.3 6.6 4.2 6.6 7.3zM1300.1 349.6c0 2.3-2.7 5.4-4.8 5.4s-4.8-3.1-4.8-5.4 2.7-5.4 4.8-5.4 4.8 3.1 4.8 5.4zM1298.5 349.6c0 1.5-1.8 3.5-3.2 3.5s-3.2-2-3.2-3.5 1.8-3.5 3.2-3.5 3.2 2 3.2 3.5zM1297 349.6c0 .8-.9 1.8-1.7 1.8s-1.7-1.1-1.7-1.8 .9-1.8 1.7-1.8 1.7 1.1 1.7 1.8z"/>
<path d="M1333.3 351.8c0 4.4-5.3 10.2-9.3 10.2s-9.3-5.8-9.3-10.2 5.3-10.2 9.3-10.2 9.3 5.8 9.3 10.2zM1331.4 351.8c0 3.5-4.2 8.1-7.3 8.1s-7.3-4.6-7.3-8.1 4.2-8.1 7.3-8.1 7.3 4.6 7.3 8.1zM1329.4 351.8c0 2.5-3.1 5.9-5.4 5.9s-5.4-3.4-5.4-5.9 3.1-5.9 5.4-5.9 5.4 3.4 5.4 5.9zM1327.6 351.8c0 1.7-2 3.9-3.5 3.9s-3.5-2.2-3.5-3.9 2-3.9 3.5-3.9 3.5 2.2 3.5 3.9zM1325.9 351.8c0 .9-1.1 2-1.9 2s-1.9-1.2-1.9-2 1.1-2 1.9-2 1.9 1.2 1.9 2z"/>
<path d="M1330.9 372.7c0 4.2-5 9.7-8.7 9.7s-8.7-5.5-8.7-9.7 5-9.7 8.7-9.7 8.7 5.5 8.7 9.7zM1329.1 372.7c0 3.3-3.9 7.7-6.9 7.7s-6.9-4.4-6.9-7.7 3.9-7.7 6.9-7.7 6.9 4.4 6.9 7.7zM1327.2 372.7c0 2.4-2.9 5.6-5.1 5.6s-5.1-3.2-5.1-5.6 2.9-5.6 5.1-5.6 5.1 3.2 5.1 5.6zM1325.5 372.7c0 1.6-1.9 3.7-3.3 3.7s-3.3-2.1-3.3-3.7 1.9-3.7 3.3-3.7 3.3 2.1 3.3 3.7zM1323.9 372.7c0 .8-1 1.9-1.7 1.9s-1.7-1.1-1.7-1.9 1-1.9 1.7-1.9 1.7 1.1 1.7 1.9z"/>
<path d="M1408.9 341.8c0 4.4-4.8 10.3-8.4 10.3s-8.4-5.9-8.4-10.3 4.8-10.3 8.4-10.3 8.4 5.9 8.4 10.3zM1407.1 341.8c0 3.5-3.8 8.1-6.6 8.1s-6.6-4.6-6.6-8.1 3.8-8.1 6.6-8.1 6.6 4.6 6.6 8.1zM1405.3 341.8c0 2.6-2.8 6-4.9 6s-4.9-3.4-4.9-6 2.8-6 4.9-6 4.9 3.4 4.9 6zM1403.6 341.8c0 1.7-1.8 3.9-3.2 3.9s-3.2-2.2-3.2-3.9 1.8-3.9 3.2-3.9 3.2 2.2 3.2 3.9zM1402.1 341.8c0 .9-1 2.1-1.7 2.1s-1.7-1.2-1.7-2.1 1-2.1 1.7-2.1 1.7 1.2 1.7 2.1z"/>
<path d="M1378.9 382.4c0 4.5-5.2 10.5-9.1 10.5s-9.1-6-9.1-10.5 5.2-10.5 9.1-10.5 9.1 6 9.1 10.5zM1376.9 382.4c0 3.6-4.1 8.3-7.2 8.3s-7.2-4.7-7.2-8.3 4.1-8.3 7.2-8.3 7.2 4.7 7.2 8.3zM1375 382.4c0 2.6-3 6.1-5.3 6.1s-5.3-3.5-5.3-6.1 3-6.1 5.3-6.1 5.3 3.5 5.3 6.1zM1373.2 382.4c0 1.7-2 4-3.5 4s-3.5-2.3-3.5-4 2-4 3.5-4 3.5 2.3 3.5 4zM1371.6 382.4c0 .9-1 2.1-1.8 2.1s-1.8-1.2-1.8-2.1 1-2.1 1.8-2.1 1.8 1.2 1.8 2.1z"/>
<path d="M1282.1 386c0 4.1-4.3 9.5-7.6 9.5s-7.6-5.4-7.6-9.5 4.3-9.5 7.6-9.5 7.6 5.4 7.6 9.5zM1280.5 386c0 3.2-3.4 7.5-6 7.5s-6-4.3-6-7.5 3.4-7.5 6-7.5 6 4.3 6 7.5zM1278.9 386c0 2.4-2.5 5.5-4.4 5.5s-4.4-3.1-4.4-5.5 2.5-5.5 4.4-5.5 4.4 3.1 4.4 5.5zM1277.4 386c0 1.5-1.6 3.6-2.9 3.6s-2.9-2.1-2.9-3.6 1.6-3.6 2.9-3.6 2.9 2.1 2.9 3.6zM1276.1 386c0 .8-.9 1.9-1.5 1.9s-1.5-1.1-1.5-1.9 .9-1.9 1.5-1.9 1.5 1.1 1.5 1.9z"/>
<path d="M1300.3 444.5c0 4-4.5 9.3-7.9 9.3s-7.9-5.3-7.9-9.3 4.5-9.3 7.9-9.3 7.9 5.3 7.9 9.3zM1298.6 444.5c0 3.2-3.6 7.3-6.2 7.3s-6.2-4.2-6.2-7.3 3.6-7.3 6.2-7.3 6.2 4.2 6.2 7.3zM1297 444.5c0 2.3-2.6 5.4-4.6 5.4s-4.6-3.1-4.6-5.4 2.6-5.4 4.6-5.4 4.6 3.1 4.6 5.4zM1295.4 444.5c0 1.5-1.7 3.5-3 3.5s-3-2-3-3.5 1.7-3.5 3-3.5 3 2 3 3.5zM1294 444.5c0 .8-.9 1.9-1.6 1.9s-1.6-1.1-1.6-1.9 .9-1.9 1.6-1.9 1.6 1.1 1.6 1.9z"/>
<path d="M1333.5 437.1c0 4-4.8 9.4-8.5 9.4s-8.5-5.4-8.5-9.4 4.8-9.4 8.5-9.4 8.5 5.4 8.5 9.4zM1331.7 437.1c0 3.2-3.8 7.4-6.7 7.4s-6.7-4.2-6.7-7.4 3.8-7.4 6.7-7.4 6.7 4.2 6.7 7.4zM1329.9 437.1c0 2.3-2.8 5.5-4.9 5.5s-4.9-3.1-4.9-5.5 2.8-5.5 4.9-5.5 4.9 3.1 4.9 5.5zM1328.2 437.1c0 1.5-1.8 3.6-3.2 3.6s-3.2-2-3.2-3.6 1.8-3.6 3.2-3.6 3.2 2 3.2 3.6zM1326.7 437.1c0 .8-1 1.9-1.7 1.9s-1.7-1.1-1.7-1.9 1-1.9 1.7-1.9 1.7 1.1 1.7 1.9z"/>
<path d="M1357.6 438.7c0 3.9-4.7 9.1-8.2 9.1s-8.2-5.2-8.2-9.1 4.7-9.1 8.2-9.1 8.2 5.2 8.2 9.1zM1355.9 438.7c0 3.1-3.7 7.2-6.5 7.2s-6.5-4.1-6.5-7.2 3.7-7.2 6.5-7.2 6.5 4.1 6.5 7.2zM1354.2 438.7c0 2.3-2.7 5.3-4.8 5.3s-4.8-3-4.8-5.3 2.7-5.3 4.8-5.3 4.8 3 4.8 5.3zM1352.5 438.7c0 1.5-1.8 3.5-3.1 3.5s-3.1-2-3.1-3.5 1.8-3.5 3.1-3.5 3.1 2 3.1 3.5zM1351 438.7c0 .8-.9 1.8-1.6 1.8s-1.6-1-1.6-1.8 .9-1.8 1.6-1.8 1.6 1 1.6 1.8z"/>
<path d="M1309.9 464.1c0 4.4-4.7 10.1-8.3 10.1s-8.3-5.8-8.3-10.1 4.7-10.1 8.3-10.1 8.3 5.8 8.3 10.1zM1308.2 464.1c0 3.4-3.7 8-6.6 8s-6.6-4.6-6.6-8 3.7-8 6.6-8 6.6 4.6 6.6 8zM1306.4 464.1c0 2.5-2.7 5.9-4.8 5.9s-4.8-3.4-4.8-5.9 2.7-5.9 4.8-5.9 4.8 3.4 4.8 5.9zM1304.8 464.1c0 1.7-1.8 3.9-3.2 3.9s-3.2-2.2-3.2-3.9 1.8-3.9 3.2-3.9 3.2 2.2 3.2 3.9zM1303.3 464.1c0 .9-.9 2-1.7 2s-1.7-1.2-1.7-2 .9-2 1.7-2 1.7 1.2 1.7 2z"/>
<path d="M1257.8 503.4c0 4-4.7 9.2-8.3 9.2s-8.3-5.2-8.3-9.2 4.7-9.2 8.3-9.2 8.3 5.2 8.3 9.2zM1256.1 503.4c0 3.1-3.7 7.3-6.5 7.3s-6.5-4.1-6.5-7.3 3.7-7.3 6.5-7.3 6.5 4.1 6.5 7.3zM1254.3 503.4c0 2.3-2.7 5.3-4.8 5.3s-4.8-3-4.8-5.3 2.7-5.3 4.8-5.3 4.8 3 4.8 5.3zM1252.7 503.4c0 1.5-1.8 3.5-3.1 3.5s-3.1-2-3.1-3.5 1.8-3.5 3.1-3.5 3.1 2 3.1 3.5zM1251.2 503.4c0 .8-.9 1.8-1.7 1.8s-1.7-1-1.7-1.8 .9-1.8 1.7-1.8 1.7 1 1.7 1.8z"/>
<path d="M1325.5 453.4c0 5.6-6.9 13-12.1 13s-12.1-7.4-12.1-13 6.9-13 12.1-13 12.1 7.4 12.1 13zM1323 453.4c0 4.4-5.4 10.3-9.5 10.3s-9.5-5.9-9.5-10.3 5.4-10.3 9.5-10.3 9.5 5.9 9.5 10.3zM1320.5 453.4c0 3.2-4 7.5-7 7.5s-7-4.3-7-7.5 4-7.5 7-7.5 7 4.3 7 7.5zM1318 453.4c0 2.1-2.6 4.9-4.6 4.9s-4.6-2.8-4.6-4.9 2.6-4.9 4.6-4.9 4.6 2.8 4.6 4.9zM1315.9 453.4c0 1.1-1.4 2.6-2.4 2.6s-2.4-1.5-2.4-2.6 1.4-2.6 2.4-2.6 2.4 1.5 2.4 2.6z"/>
<path d="M1363.4 490.5c0 4-4.8 9.3-8.4 9.3s-8.4-5.3-8.4-9.3 4.8-9.3 8.4-9.3 8.4 5.3 8.4 9.3zM1361.6 490.5c0 3.2-3.8 7.4-6.6 7.4s-6.6-4.2-6.6-7.4 3.8-7.4 6.6-7.4 6.6 4.2 6.6 7.4zM1359.8 490.5c0 2.3-2.8 5.4-4.9 5.4s-4.9-3.1-4.9-5.4 2.8-5.4 4.9-5.4 4.9 3.1 4.9 5.4zM1358.2 490.5c0 1.5-1.8 3.5-3.2 3.5s-3.2-2-3.2-3.5 1.8-3.5 3.2-3.5 3.2 2 3.2 3.5zM1356.6 490.5c0 .8-1 1.9-1.7 1.9s-1.7-1.1-1.7-1.9 1-1.9 1.7-1.9 1.7 1.1 1.7 1.9z"/>
<path d="M1378.6 457.1c0 4.1-4.9 9.5-8.5 9.5s-8.5-5.4-8.5-9.5 4.9-9.5 8.5-9.5 8.5 5.4 8.5 9.5zM1376.8 457.1c0 3.2-3.8 7.5-6.7 7.5s-6.7-4.3-6.7-7.5 3.8-7.5 6.7-7.5 6.7 4.3 6.7 7.5zM1375 457.1c0 2.4-2.8 5.5-5 5.5s-5-3.1-5-5.5 2.8-5.5 5-5.5 5 3.1 5 5.5zM1373.3 457.1c0 1.6-1.8 3.6-3.2 3.6s-3.2-2.1-3.2-3.6 1.8-3.6 3.2-3.6 3.2 2.1 3.2 3.6zM1371.8 457.1c0 .8-1 1.9-1.7 1.9s-1.7-1.1-1.7-1.9 1-1.9 1.7-1.9 1.7 1.1 1.7 1.9z"/>
<path d="M1409.9 408c0 4.9-5.4 11.4-9.5 11.4s-9.5-6.5-9.5-11.4 5.4-11.4 9.5-11.4 9.5 6.5 9.5 11.4zM1407.9 408c0 3.9-4.3 9-7.5 9s-7.5-5.1-7.5-9 4.3-9 7.5-9 7.5 5.1 7.5 9zM1405.9 408c0 2.8-3.1 6.6-5.5 6.6s-5.5-3.8-5.5-6.6 3.1-6.6 5.5-6.6 5.5 3.8 5.5 6.6zM1404 408c0 1.9-2.1 4.3-3.6 4.3s-3.6-2.5-3.6-4.3 2.1-4.3 3.6-4.3 3.6 2.5 3.6 4.3zM1402.3 408c0 1-1.1 2.3-1.9 2.3s-1.9-1.3-1.9-2.3 1.1-2.3 1.9-2.3 1.9 1.3 1.9 2.3z"/>
<path d="M1420.6 407.7c0 4.8-5.3 11.2-9.4 11.2s-9.4-6.4-9.4-11.2 5.3-11.2 9.4-11.2 9.4 6.4 9.4 11.2zM1418.6 407.7c0 3.8-4.2 8.9-7.4 8.9s-7.4-5.1-7.4-8.9 4.2-8.9 7.4-8.9 7.4 5.1 7.4 8.9zM1416.6 407.7c0 2.8-3.1 6.5-5.4 6.5s-5.4-3.7-5.4-6.5 3.1-6.5 5.4-6.5 5.4 3.7 5.4 6.5zM1414.8 407.7c0 1.8-2 4.3-3.6 4.3s-3.6-2.4-3.6-4.3 2-4.3 3.6-4.3 3.6 2.4 3.6 4.3zM1413.1 407.7c0 1-1.1 2.2-1.9 2.2s-1.9-1.3-1.9-2.2 1.1-2.2 1.9-2.2 1.9 1.3 1.9 2.2z"/>
<path d="M1442.8 452c0 4.4-4.8 10.2-8.4 10.2s-8.4-5.8-8.4-10.2 4.8-10.2 8.4-10.2 8.4 5.8 8.4 10.2zM1441.1 452c0 3.5-3.8 8.1-6.6 8.1s-6.6-4.6-6.6-8.1 3.8-8.1 6.6-8.1 6.6 4.6 6.6 8.1zM1439.3 452c0 2.5-2.8 5.9-4.8 5.9s-4.8-3.4-4.8-5.9 2.8-5.9 4.8-5.9 4.8 3.4 4.8 5.9zM1437.7 452c0 1.7-1.8 3.9-3.2 3.9s-3.2-2.2-3.2-3.9 1.8-3.9 3.2-3.9 3.2 2.2 3.2 3.9zM1436.1 452c0 .9-1 2-1.7 2s-1.7-1.2-1.7-2 1-2 1.7-2 1.7 1.2 1.7 2z"/>
<path d="M1426 469.9c0 4.9-4.8 11.3-8.5 11.3s-8.5-6.4-8.5-11.3 4.8-11.3 8.5-11.3 8.5 6.4 8.5 11.3zM1424.2 469.9c0 3.8-3.8 8.9-6.7 8.9s-6.7-5.1-6.7-8.9 3.8-8.9 6.7-8.9 6.7 5.1 6.7 8.9zM1422.4 469.9c0 2.8-2.8 6.6-4.9 6.6s-4.9-3.7-4.9-6.6 2.8-6.6 4.9-6.6 4.9 3.7 4.9 6.6zM1420.7 469.9c0 1.8-1.8 4.3-3.2 4.3s-3.2-2.5-3.2-4.3 1.8-4.3 3.2-4.3 3.2 2.5 3.2 4.3zM1419.2 469.9c0 1-1 2.3-1.7 2.3s-1.7-1.3-1.7-2.3 1-2.3 1.7-2.3 1.7 1.3 1.7 2.3z"/>
<path d="M1276 499.1c0 4.5-4.8 10.4-8.5 10.4s-8.5-5.9-8.5-10.4 4.8-10.4 8.5-10.4 8.5 5.9 8.5 10.4zM1274.2 499.1c0 3.5-3.8 8.2-6.7 8.2s-6.7-4.7-6.7-8.2 3.8-8.2 6.7-8.2 6.7 4.7 6.7 8.2zM1272.5 499.1c0 2.6-2.8 6-4.9 6s-4.9-3.4-4.9-6 2.8-6 4.9-6 4.9 3.4 4.9 6zM1270.8 499.1c0 1.7-1.8 3.9-3.2 3.9s-3.2-2.3-3.2-3.9 1.8-3.9 3.2-3.9 3.2 2.3 3.2 3.9zM1269.2 499.1c0 .9-1 2.1-1.7 2.1s-1.7-1.2-1.7-2.1 1-2.1 1.7-2.1 1.7 1.2 1.7 2.1z"/>
<path d="M1278.1 517.1c0 4.3-4.9 10-8.5 10s-8.5-5.7-8.5-10 4.9-10 8.5-10 8.5 5.7 8.5 10zM1276.3 517.1c0 3.4-3.8 7.9-6.7 7.9s-6.7-4.5-6.7-7.9 3.8-7.9 6.7-7.9 6.7 4.5 6.7 7.9zM1274.5 517.1c0 2.5-2.8 5.8-4.9 5.8s-4.9-3.3-4.9-5.8 2.8-5.8 4.9-5.8 4.9 3.3 4.9 5.8zM1272.8 517.1c0 1.6-1.8 3.8-3.2 3.8s-3.2-2.2-3.2-3.8 1.8-3.8 3.2-3.8 3.2 2.2 3.2 3.8zM1271.3 517.1c0 .9-1 2-1.7 2s-1.7-1.1-1.7-2 1-2 1.7-2 1.7 1.1 1.7 2z"/>
<path d="M1320.6 531.9c0 4.2-5.3 9.8-9.4 9.8s-9.4-5.6-9.4-9.8 5.3-9.8 9.4-9.8 9.4 5.6 9.4 9.8zM1318.6 531.9c0 3.3-4.2 7.8-7.4 7.8s-7.4-4.4-7.4-7.8 4.2-7.8 7.4-7.8 7.4 4.4 7.4 7.8zM1316.6 531.9c0 2.5-3.1 5.7-5.4 5.7s-5.4-3.3-5.4-5.7 3.1-5.7 5.4-5.7 5.4 3.3 5.4 5.7zM1314.7 531.9c0 1.6-2 3.7-3.6 3.7s-3.6-2.1-3.6-3.7 2-3.7 3.6-3.7 3.6 2.1 3.6 3.7zM1313.1 531.9c0 .8-1.1 2-1.9 2s-1.9-1.1-1.9-2 1.1-2 1.9-2 1.9 1.1 1.9 2z"/>
<path d="M1448.9 489.5c0 4.5-4.3 10.5-7.6 10.5s-7.6-6-7.6-10.5 4.3-10.5 7.6-10.5 7.6 6 7.6 10.5zM1447.3 489.5c0 3.6-3.4 8.3-6 8.3s-6-4.7-6-8.3 3.4-8.3 6-8.3 6 4.7 6 8.3zM1445.7 489.5c0 2.6-2.5 6.1-4.4 6.1s-4.4-3.5-4.4-6.1 2.5-6.1 4.4-6.1 4.4 3.5 4.4 6.1zM1444.1 489.5c0 1.7-1.7 4-2.9 4s-2.9-2.3-2.9-4 1.7-4 2.9-4 2.9 2.3 2.9 4zM1442.8 489.5c0 .9-.9 2.1-1.5 2.1s-1.5-1.2-1.5-2.1 .9-2.1 1.5-2.1 1.5 1.2 1.5 2.1z"/>
<path d="M1519.1 505.5c0 4.3-5.2 10-9.1 10s-9.1-5.7-9.1-10 5.2-10 9.1-10 9.1 5.7 9.1 10zM1517.2 505.5c0 3.4-4.1 7.9-7.2 7.9s-7.2-4.5-7.2-7.9 4.1-7.9 7.2-7.9 7.2 4.5 7.2 7.9zM1515.3 505.5c0 2.5-3 5.8-5.3 5.8s-5.3-3.3-5.3-5.8 3-5.8 5.3-5.8 5.3 3.3 5.3 5.8zM1513.4 505.5c0 1.6-2 3.8-3.5 3.8s-3.5-2.2-3.5-3.8 2-3.8 3.5-3.8 3.5 2.2 3.5 3.8zM1511.8 505.5c0 .9-1 2-1.8 2s-1.8-1.1-1.8-2 1-2 1.8-2 1.8 1.1 1.8 2z"/>
<path d="M1586.7 398.3c0 4-4.2 9.3-7.4 9.3s-7.4-5.3-7.4-9.3 4.2-9.3 7.4-9.3 7.4 5.3 7.4 9.3zM1585.1 398.3c0 3.1-3.3 7.3-5.8 7.3s-5.8-4.2-5.8-7.3 3.3-7.3 5.8-7.3 5.8 4.2 5.8 7.3zM1583.5 398.3c0 2.3-2.4 5.4-4.3 5.4s-4.3-3.1-4.3-5.4 2.4-5.4 4.3-5.4 4.3 3.1 4.3 5.4zM1582.1 398.3c0 1.5-1.6 3.5-2.8 3.5s-2.8-2-2.8-3.5 1.6-3.5 2.8-3.5 2.8 2 2.8 3.5zM1580.7 398.3c0 .8-.8 1.9-1.5 1.9s-1.5-1.1-1.5-1.9 .8-1.9 1.5-1.9 1.5 1.1 1.5 1.9z"/>
<path d="M1448.3 371.9c0 4.8-4.2 11.2-7.5 11.2s-7.5-6.4-7.5-11.2 4.2-11.2 7.5-11.2 7.5 6.4 7.5 11.2zM1446.7 371.9c0 3.8-3.4 8.8-5.9 8.8s-5.9-5-5.9-8.8 3.4-8.8 5.9-8.8 5.9 5 5.9 8.8zM1445.1 371.9c0 2.8-2.5 6.5-4.3 6.5s-4.3-3.7-4.3-6.5 2.5-6.5 4.3-6.5 4.3 3.7 4.3 6.5zM1443.6 371.9c0 1.8-1.6 4.2-2.8 4.2s-2.8-2.4-2.8-4.2 1.6-4.2 2.8-4.2 2.8 2.4 2.8 4.2zM1442.3 371.9c0 1-.8 2.2-1.5 2.2s-1.5-1.3-1.5-2.2 .8-2.2 1.5-2.2 1.5 1.3 1.5 2.2z"/>
<path d="M1113.2 600c0 4.1-4.9 9.5-8.5 9.5s-8.5-5.4-8.5-9.5 4.9-9.5 8.5-9.5 8.5 5.4 8.5 9.5zM1111.4 600c0 3.2-3.8 7.5-6.7 7.5s-6.7-4.3-6.7-7.5 3.8-7.5 6.7-7.5 6.7 4.3 6.7 7.5zM1109.6 600c0 2.4-2.8 5.5-4.9 5.5s-4.9-3.1-4.9-5.5 2.8-5.5 4.9-5.5 4.9 3.1 4.9 5.5zM1107.9 600c0 1.5-1.8 3.6-3.2 3.6s-3.2-2-3.2-3.6 1.8-3.6 3.2-3.6 3.2 2 3.2 3.6zM1106.4 600c0 .8-1 1.9-1.7 1.9s-1.7-1.1-1.7-1.9 1-1.9 1.7-1.9 1.7 1.1 1.7 1.9z"/>
<path d="M1142.6 607.8c0 4.1-4.9 9.6-8.6 9.6s-8.6-5.5-8.6-9.6 4.9-9.6 8.6-9.6 8.6 5.5 8.6 9.6zM1140.8 607.8c0 3.2-3.9 7.6-6.8 7.6s-6.8-4.3-6.8-7.6 3.9-7.6 6.8-7.6 6.8 4.3 6.8 7.6zM1139 607.8c0 2.4-2.8 5.5-5 5.5s-5-3.2-5-5.5 2.8-5.5 5-5.5 5 3.2 5 5.5zM1137.3 607.8c0 1.6-1.9 3.6-3.3 3.6s-3.3-2.1-3.3-3.6 1.9-3.6 3.3-3.6 3.3 2.1 3.3 3.6zM1135.7 607.8c0 .8-1 1.9-1.7 1.9s-1.7-1.1-1.7-1.9 1-1.9 1.7-1.9 1.7 1.1 1.7 1.9z"/>
<path d="M1192.9 559.7c0 4.1-4.6 9.5-8.1 9.5s-8.1-5.4-8.1-9.5 4.6-9.5 8.1-9.5 8.1 5.4 8.1 9.5zM1191.2 559.7c0 3.2-3.7 7.5-6.4 7.5s-6.4-4.3-6.4-7.5 3.7-7.5 6.4-7.5 6.4 4.3 6.4 7.5zM1189.5 559.7c0 2.4-2.7 5.5-4.7 5.5s-4.7-3.2-4.7-5.5 2.7-5.5 4.7-5.5 4.7 3.2 4.7 5.5zM1187.9 559.7c0 1.6-1.8 3.6-3.1 3.6s-3.1-2.1-3.1-3.6 1.8-3.6 3.1-3.6 3.1 2.1 3.1 3.6zM1186.4 559.7c0 .8-.9 1.9-1.6 1.9s-1.6-1.1-1.6-1.9 .9-1.9 1.6-1.9 1.6 1.1 1.6 1.9z"/>
<path d="M1237.3 610.7c0 4.1-5.5 9.6-9.6 9.6s-9.6-5.5-9.6-9.6 5.5-9.6 9.6-9.6 9.6 5.5 9.6 9.6zM1235.3 610.7c0 3.3-4.3 7.6-7.6 7.6s-7.6-4.3-7.6-7.6 4.3-7.6 7.6-7.6 7.6 4.3 7.6 7.6zM1233.3 610.7c0 2.4-3.2 5.6-5.6 5.6s-5.6-3.2-5.6-5.6 3.2-5.6 5.6-5.6 5.6 3.2 5.6 5.6zM1231.4 610.7c0 1.6-2.1 3.6-3.6 3.6s-3.6-2.1-3.6-3.6 2.1-3.6 3.6-3.6 3.6 2.1 3.6 3.6zM1229.7 610.7c0 .8-1.1 1.9-1.9 1.9s-1.9-1.1-1.9-1.9 1.1-1.9 1.9-1.9 1.9 1.1 1.9 1.9z"/>
</g>
<g stroke="#a8602c">
<path d="M1188.4 315.9c0 4.3-5 10-8.8 10s-8.8-5.7-8.8-10 5-10 8.8-10 8.8 5.7 8.8 10zM1186.6 315.9c0 3.4-4 7.9-7 7.9s-7-4.5-7-7.9 4-7.9 7-7.9 7 4.5 7 7.9zM1184.7 315.9c0 2.5-2.9 5.8-5.1 5.8s-5.1-3.3-5.1-5.8 2.9-5.8 5.1-5.8 5.1 3.3 5.1 5.8zM1182.9 315.9c0 1.6-1.9 3.8-3.4 3.8s-3.4-2.2-3.4-3.8 1.9-3.8 3.4-3.8 3.4 2.2 3.4 3.8zM1181.4 315.9c0 .9-1 2-1.8 2s-1.8-1.1-1.8-2 1-2 1.8-2 1.8 1.1 1.8 2z"/>
<path d="M1241.9 245.5c0 4.9-5.6 11.3-9.9 11.3s-9.9-6.4-9.9-11.3 5.6-11.3 9.9-11.3 9.9 6.4 9.9 11.3zM1239.8 245.5c0 3.8-4.5 8.9-7.8 8.9s-7.8-5.1-7.8-8.9 4.5-8.9 7.8-8.9 7.8 5.1 7.8 8.9zM1237.7 245.5c0 2.8-3.3 6.6-5.7 6.6s-5.7-3.7-5.7-6.6 3.3-6.6 5.7-6.6 5.7 3.7 5.7 6.6zM1235.8 245.5c0 1.8-2.1 4.3-3.8 4.3s-3.8-2.4-3.8-4.3 2.1-4.3 3.8-4.3 3.8 2.4 3.8 4.3zM1234 245.5c0 1-1.1 2.3-2 2.3s-2-1.3-2-2.3 1.1-2.3 2-2.3 2 1.3 2 2.3z"/>
<path d="M1291.8 242.7c0 4.5-5.4 10.4-9.5 10.4s-9.5-5.9-9.5-10.4 5.4-10.4 9.5-10.4 9.5 5.9 9.5 10.4zM1289.8 242.7c0 3.5-4.3 8.2-7.5 8.2s-7.5-4.7-7.5-8.2 4.3-8.2 7.5-8.2 7.5 4.7 7.5 8.2zM1287.8 242.7c0 2.6-3.1 6.1-5.5 6.1s-5.5-3.4-5.5-6.1 3.1-6.1 5.5-6.1 5.5 3.4 5.5 6.1zM1285.9 242.7c0 1.7-2.1 4-3.6 4s-3.6-2.3-3.6-4 2.1-4 3.6-4 3.6 2.3 3.6 4zM1284.2 242.7c0 .9-1.1 2.1-1.9 2.1s-1.9-1.2-1.9-2.1 1.1-2.1 1.9-2.1 1.9 1.2 1.9 2.1z"/>
<path d="M1406.9 262.6c0 4.9-5.4 11.3-9.4 11.3s-9.4-6.4-9.4-11.3 5.4-11.3 9.4-11.3 9.4 6.4 9.4 11.3zM1404.9 262.6c0 3.8-4.2 8.9-7.4 8.9s-7.4-5.1-7.4-8.9 4.2-8.9 7.4-8.9 7.4 5.1 7.4 8.9zM1402.9 262.6c0 2.8-3.1 6.6-5.5 6.6s-5.5-3.7-5.5-6.6 3.1-6.6 5.5-6.6 5.5 3.7 5.5 6.6zM1401.1 262.6c0 1.8-2 4.3-3.6 4.3s-3.6-2.4-3.6-4.3 2-4.3 3.6-4.3 3.6 2.4 3.6 4.3zM1399.4 262.6c0 1-1.1 2.3-1.9 2.3s-1.9-1.3-1.9-2.3 1.1-2.3 1.9-2.3 1.9 1.3 1.9 2.3z"/>
<path d="M1314.4 281.5c0 4.9-5.4 11.4-9.5 11.4s-9.5-6.5-9.5-11.4 5.4-11.4 9.5-11.4 9.5 6.5 9.5 11.4zM1312.4 281.5c0 3.9-4.3 9-7.5 9s-7.5-5.1-7.5-9 4.3-9 7.5-9 7.5 5.1 7.5 9zM1310.4 281.5c0 2.8-3.1 6.6-5.5 6.6s-5.5-3.8-5.5-6.6 3.1-6.6 5.5-6.6 5.5 3.8 5.5 6.6zM1308.5 281.5c0 1.9-2.1 4.3-3.6 4.3s-3.6-2.5-3.6-4.3 2.1-4.3 3.6-4.3 3.6 2.5 3.6 4.3zM1306.8 281.5c0 1-1.1 2.3-1.9 2.3s-1.9-1.3-1.9-2.3 1.1-2.3 1.9-2.3 1.9 1.3 1.9 2.3z"/>
<path d="M1321.1 294.3c0 4.9-5.4 11.4-9.5 11.4s-9.5-6.5-9.5-11.4 5.4-11.4 9.5-11.4 9.5 6.5 9.5 11.4zM1319.1 294.3c0 3.9-4.3 9-7.5 9s-7.5-5.2-7.5-9 4.3-9 7.5-9 7.5 5.2 7.5 9zM1317.1 294.3c0 2.9-3.2 6.6-5.5 6.6s-5.5-3.8-5.5-6.6 3.2-6.6 5.5-6.6 5.5 3.8 5.5 6.6zM1315.2 294.3c0 1.9-2.1 4.3-3.6 4.3s-3.6-2.5-3.6-4.3 2.1-4.3 3.6-4.3 3.6 2.5 3.6 4.3zM1313.4 294.3c0 1-1.1 2.3-1.9 2.3s-1.9-1.3-1.9-2.3 1.1-2.3 1.9-2.3 1.9 1.3 1.9 2.3z"/>
<path d="M1300.7 308.6c0 5-5.5 11.7-9.7 11.7s-9.7-6.7-9.7-11.7 5.5-11.7 9.7-11.7 9.7 6.7 9.7 11.7zM1298.6 308.6c0 4-4.4 9.2-7.7 9.2s-7.7-5.3-7.7-9.2 4.4-9.2 7.7-9.2 7.7 5.3 7.7 9.2zM1296.6 308.6c0 2.9-3.2 6.8-5.6 6.8s-5.6-3.9-5.6-6.8 3.2-6.8 5.6-6.8 5.6 3.9 5.6 6.8zM1294.7 308.6c0 1.9-2.1 4.4-3.7 4.4s-3.7-2.5-3.7-4.4 2.1-4.4 3.7-4.4 3.7 2.5 3.7 4.4zM1292.9 308.6c0 1-1.1 2.3-1.9 2.3s-1.9-1.3-1.9-2.3 1.1-2.3 1.9-2.3 1.9 1.3 1.9 2.3z"/>
<path d="M1430.2 323.7c0 4.6-5 10.7-8.7 10.7s-8.7-6.1-8.7-10.7 5-10.7 8.7-10.7 8.7 6.1 8.7 10.7zM1428.4 323.7c0 3.6-3.9 8.4-6.9 8.4s-6.9-4.8-6.9-8.4 3.9-8.4 6.9-8.4 6.9 4.8 6.9 8.4zM1426.6 323.7c0 2.7-2.9 6.2-5.1 6.2s-5.1-3.5-5.1-6.2 2.9-6.2 5.1-6.2 5.1 3.5 5.1 6.2zM1424.8 323.7c0 1.7-1.9 4.1-3.3 4.1s-3.3-2.3-3.3-4.1 1.9-4.1 3.3-4.1 3.3 2.3 3.3 4.1zM1423.2 323.7c0 .9-1 2.1-1.7 2.1s-1.7-1.2-1.7-2.1 1-2.1 1.7-2.1 1.7 1.2 1.7 2.1z"/>
<path d="M1402.3 192c0 3.6-4.3 8.5-7.5 8.5s-7.5-4.8-7.5-8.5 4.3-8.5 7.5-8.5 7.5 4.8 7.5 8.5zM1400.8 192c0 2.9-3.4 6.7-6 6.7s-6-3.8-6-6.7 3.4-6.7 6-6.7 6 3.8 6 6.7zM1399.2 192c0 2.1-2.5 4.9-4.4 4.9s-4.4-2.8-4.4-4.9 2.5-4.9 4.4-4.9 4.4 2.8 4.4 4.9zM1397.7 192c0 1.4-1.6 3.2-2.9 3.2s-2.9-1.8-2.9-3.2 1.6-3.2 2.9-3.2 2.9 1.8 2.9 3.2zM1396.3 192c0 .7-.9 1.7-1.5 1.7s-1.5-1-1.5-1.7 .9-1.7 1.5-1.7 1.5 1 1.5 1.7z"/>
<path d="M1473.6 222.1c0 4.6-5 10.7-8.7 10.7s-8.7-6.1-8.7-10.7 5-10.7 8.7-10.7 8.7 6.1 8.7 10.7zM1471.8 222.1c0 3.6-3.9 8.4-6.9 8.4s-6.9-4.8-6.9-8.4 3.9-8.4 6.9-8.4 6.9 4.8 6.9 8.4zM1470 222.1c0 2.7-2.9 6.2-5.1 6.2s-5.1-3.5-5.1-6.2 2.9-6.2 5.1-6.2 5.1 3.5 5.1 6.2zM1468.2 222.1c0 1.7-1.9 4.1-3.3 4.1s-3.3-2.3-3.3-4.1 1.9-4.1 3.3-4.1 3.3 2.3 3.3 4.1zM1466.7 222.1c0 .9-1 2.1-1.7 2.1s-1.7-1.2-1.7-2.1 1-2.1 1.7-2.1 1.7 1.2 1.7 2.1z"/>
<path d="M1541.1 266.4c0 4.5-4.9 10.4-8.5 10.4s-8.5-5.9-8.5-10.4 4.9-10.4 8.5-10.4 8.5 5.9 8.5 10.4zM1539.4 266.4c0 3.5-3.8 8.2-6.7 8.2s-6.7-4.7-6.7-8.2 3.8-8.2 6.7-8.2 6.7 4.7 6.7 8.2zM1537.6 266.4c0 2.6-2.8 6-4.9 6s-4.9-3.4-4.9-6 2.8-6 4.9-6 4.9 3.4 4.9 6zM1535.9 266.4c0 1.7-1.8 4-3.2 4s-3.2-2.3-3.2-4 1.8-4 3.2-4 3.2 2.3 3.2 4zM1534.3 266.4c0 .9-1 2.1-1.7 2.1s-1.7-1.2-1.7-2.1 1-2.1 1.7-2.1 1.7 1.2 1.7 2.1z"/>
<path d="M1590.9 292.8c0 4.4-5 10.3-8.8 10.3s-8.8-5.8-8.8-10.3 5-10.3 8.8-10.3 8.8 5.8 8.8 10.3zM1589 292.8c0 3.5-4 8.1-6.9 8.1s-6.9-4.6-6.9-8.1 4-8.1 6.9-8.1 6.9 4.6 6.9 8.1zM1587.2 292.8c0 2.6-2.9 6-5.1 6s-5.1-3.4-5.1-6 2.9-6 5.1-6 5.1 3.4 5.1 6zM1585.4 292.8c0 1.7-1.9 3.9-3.3 3.9s-3.3-2.2-3.3-3.9 1.9-3.9 3.3-3.9 3.3 2.2 3.3 3.9zM1583.8 292.8c0 .9-1 2.1-1.8 2.1s-1.8-1.2-1.8-2.1 1-2.1 1.8-2.1 1.8 1.2 1.8 2.1z"/>
<path d="M1547.4 308.1c0 4.6-5 10.8-8.8 10.8s-8.8-6.1-8.8-10.8 5-10.8 8.8-10.8 8.8 6.1 8.8 10.8zM1545.6 308.1c0 3.7-4 8.5-7 8.5s-7-4.8-7-8.5 4-8.5 7-8.5 7 4.8 7 8.5zM1543.7 308.1c0 2.7-2.9 6.2-5.1 6.2s-5.1-3.6-5.1-6.2 2.9-6.2 5.1-6.2 5.1 3.6 5.1 6.2zM1542 308.1c0 1.8-1.9 4.1-3.3 4.1s-3.3-2.3-3.3-4.1 1.9-4.1 3.3-4.1 3.3 2.3 3.3 4.1zM1540.4 308.1c0 .9-1 2.2-1.8 2.2s-1.8-1.2-1.8-2.2 1-2.2 1.8-2.2 1.8 1.2 1.8 2.2z"/>
<path d="M1450.6 389.4c0 4.2-5 9.8-8.8 9.8s-8.8-5.6-8.8-9.8 5-9.8 8.8-9.8 8.8 5.6 8.8 9.8zM1447.8 389.4c0 2.9-3.4 6.7-6 6.7s-6-3.8-6-6.7 3.4-6.7 6-6.7 6 3.8 6 6.7zM1445.1 389.4c0 1.6-1.9 3.7-3.3 3.7s-3.3-2.1-3.3-3.7 1.9-3.7 3.3-3.7 3.3 2.1 3.3 3.7z" stroke-opacity=".8"/>
<path d="M1404.5 452c0 4.2-5 9.7-8.7 9.7s-8.7-5.5-8.7-9.7 5-9.7 8.7-9.7 8.7 5.5 8.7 9.7zM1401.7 452c0 2.8-3.4 6.6-5.9 6.6s-5.9-3.7-5.9-6.6 3.4-6.6 5.9-6.6 5.9 3.7 5.9 6.6zM1399.1 452c0 1.6-1.9 3.7-3.3 3.7s-3.3-2.1-3.3-3.7 1.9-3.7 3.3-3.7 3.3 2.1 3.3 3.7z" stroke-opacity=".8"/>
<path d="M1462.4 340.3c0 4.5-4.9 10.5-8.6 10.5s-8.6-6-8.6-10.5 4.9-10.5 8.6-10.5 8.6 6 8.6 10.5zM1460.6 340.3c0 3.6-3.9 8.3-6.8 8.3s-6.8-4.7-6.8-8.3 3.9-8.3 6.8-8.3 6.8 4.7 6.8 8.3zM1458.8 340.3c0 2.6-2.8 6.1-5 6.1s-5-3.5-5-6.1 2.8-6.1 5-6.1 5 3.5 5 6.1zM1457 340.3c0 1.7-1.9 4-3.3 4s-3.3-2.3-3.3-4 1.9-4 3.3-4 3.3 2.3 3.3 4zM1455.5 340.3c0 .9-1 2.1-1.7 2.1s-1.7-1.2-1.7-2.1 1-2.1 1.7-2.1 1.7 1.2 1.7 2.1z"/>
<path d="M1167.6 377.3c0 4.4-4.8 10.3-8.4 10.3s-8.4-5.9-8.4-10.3 4.8-10.3 8.4-10.3 8.4 5.9 8.4 10.3zM1165.8 377.3c0 3.5-3.8 8.1-6.7 8.1s-6.7-4.6-6.7-8.1 3.8-8.1 6.7-8.1 6.7 4.6 6.7 8.1zM1164 377.3c0 2.6-2.8 6-4.9 6s-4.9-3.4-4.9-6 2.8-6 4.9-6 4.9 3.4 4.9 6zM1162.3 377.3c0 1.7-1.8 3.9-3.2 3.9s-3.2-2.2-3.2-3.9 1.8-3.9 3.2-3.9 3.2 2.2 3.2 3.9zM1160.8 377.3c0 .9-1 2.1-1.7 2.1s-1.7-1.2-1.7-2.1 1-2.1 1.7-2.1 1.7 1.2 1.7 2.1z"/>
<path d="M1196.3 380.2c0 4-4.8 9.4-8.5 9.4s-8.5-5.4-8.5-9.4 4.8-9.4 8.5-9.4 8.5 5.4 8.5 9.4zM1194.6 380.2c0 3.2-3.8 7.4-6.7 7.4s-6.7-4.2-6.7-7.4 3.8-7.4 6.7-7.4 6.7 4.2 6.7 7.4zM1192.8 380.2c0 2.3-2.8 5.4-4.9 5.4s-4.9-3.1-4.9-5.4 2.8-5.4 4.9-5.4 4.9 3.1 4.9 5.4zM1191.1 380.2c0 1.5-1.8 3.6-3.2 3.6s-3.2-2-3.2-3.6 1.8-3.6 3.2-3.6 3.2 2 3.2 3.6zM1189.6 380.2c0 .8-1 1.9-1.7 1.9s-1.7-1.1-1.7-1.9 1-1.9 1.7-1.9 1.7 1.1 1.7 1.9z"/>
<path d="M1198.1 417c0 4.2-5 9.8-8.8 9.8s-8.8-5.6-8.8-9.8 5-9.8 8.8-9.8 8.8 5.6 8.8 9.8zM1196.3 417c0 3.3-4 7.7-6.9 7.7s-6.9-4.4-6.9-7.7 4-7.7 6.9-7.7 6.9 4.4 6.9 7.7zM1194.4 417c0 2.4-2.9 5.7-5.1 5.7s-5.1-3.2-5.1-5.7 2.9-5.7 5.1-5.7 5.1 3.2 5.1 5.7zM1192.7 417c0 1.6-1.9 3.7-3.3 3.7s-3.3-2.1-3.3-3.7 1.9-3.7 3.3-3.7 3.3 2.1 3.3 3.7zM1191.1 417c0 .8-1 2-1.8 2s-1.8-1.1-1.8-2 1-2 1.8-2 1.8 1.1 1.8 2z"/>
<path d="M1238.8 431.1c0 4.6-5 10.7-8.8 10.7s-8.8-6.1-8.8-10.7 5-10.7 8.8-10.7 8.8 6.1 8.8 10.7zM1237 431.1c0 3.6-4 8.5-6.9 8.5s-6.9-4.8-6.9-8.5 4-8.5 6.9-8.5 6.9 4.8 6.9 8.5zM1235.1 431.1c0 2.7-2.9 6.2-5.1 6.2s-5.1-3.5-5.1-6.2 2.9-6.2 5.1-6.2 5.1 3.5 5.1 6.2zM1233.4 431.1c0 1.8-1.9 4.1-3.3 4.1s-3.3-2.3-3.3-4.1 1.9-4.1 3.3-4.1 3.3 2.3 3.3 4.1zM1231.8 431.1c0 .9-1 2.1-1.8 2.1s-1.8-1.2-1.8-2.1 1-2.1 1.8-2.1 1.8 1.2 1.8 2.1z"/>
<path d="M1303.4 351.3c0 4-4.7 9.2-8.3 9.2s-8.3-5.3-8.3-9.2 4.7-9.2 8.3-9.2 8.3 5.3 8.3 9.2zM1301.6 351.3c0 3.1-3.7 7.3-6.6 7.3s-6.6-4.2-6.6-7.3 3.7-7.3 6.6-7.3 6.6 4.2 6.6 7.3zM1299.9 351.3c0 2.3-2.7 5.4-4.8 5.4s-4.8-3.1-4.8-5.4 2.7-5.4 4.8-5.4 4.8 3.1 4.8 5.4zM1298.2 351.3c0 1.5-1.8 3.5-3.2 3.5s-3.2-2-3.2-3.5 1.8-3.5 3.2-3.5 3.2 2 3.2 3.5zM1296.7 351.3c0 .8-.9 1.8-1.7 1.8s-1.7-1.1-1.7-1.8 .9-1.8 1.7-1.8 1.7 1.1 1.7 1.8z"/>
<path d="M1335 351.4c0 4.4-5.4 10.3-9.4 10.3s-9.4-5.9-9.4-10.3 5.4-10.3 9.4-10.3 9.4 5.9 9.4 10.3zM1333.1 351.4c0 3.5-4.2 8.2-7.4 8.2s-7.4-4.7-7.4-8.2 4.2-8.2 7.4-8.2 7.4 4.7 7.4 8.2zM1331.1 351.4c0 2.6-3.1 6-5.5 6s-5.5-3.4-5.5-6 3.1-6 5.5-6 5.5 3.4 5.5 6zM1329.2 351.4c0 1.7-2 3.9-3.6 3.9s-3.6-2.2-3.6-3.9 2-3.9 3.6-3.9 3.6 2.2 3.6 3.9zM1327.5 351.4c0 .9-1.1 2.1-1.9 2.1s-1.9-1.2-1.9-2.1 1.1-2.1 1.9-2.1 1.9 1.2 1.9 2.1z"/>
<path d="M1330 374.7c0 4.1-4.9 9.5-8.5 9.5s-8.5-5.4-8.5-9.5 4.9-9.5 8.5-9.5 8.5 5.4 8.5 9.5zM1328.2 374.7c0 3.2-3.8 7.5-6.7 7.5s-6.7-4.3-6.7-7.5 3.8-7.5 6.7-7.5 6.7 4.3 6.7 7.5zM1326.4 374.7c0 2.4-2.8 5.5-4.9 5.5s-4.9-3.1-4.9-5.5 2.8-5.5 4.9-5.5 4.9 3.1 4.9 5.5zM1324.7 374.7c0 1.5-1.8 3.6-3.2 3.6s-3.2-2.1-3.2-3.6 1.8-3.6 3.2-3.6 3.2 2.1 3.2 3.6zM1323.2 374.7c0 .8-1 1.9-1.7 1.9s-1.7-1.1-1.7-1.9 1-1.9 1.7-1.9 1.7 1.1 1.7 1.9z"/>
<path d="M1407.8 343.9c0 4.5-4.8 10.4-8.5 10.4s-8.5-5.9-8.5-10.4 4.8-10.4 8.5-10.4 8.5 5.9 8.5 10.4zM1406 343.9c0 3.5-3.8 8.2-6.7 8.2s-6.7-4.7-6.7-8.2 3.8-8.2 6.7-8.2 6.7 4.7 6.7 8.2zM1404.2 343.9c0 2.6-2.8 6-4.9 6s-4.9-3.4-4.9-6 2.8-6 4.9-6 4.9 3.4 4.9 6zM1402.5 343.9c0 1.7-1.8 3.9-3.2 3.9s-3.2-2.2-3.2-3.9 1.8-3.9 3.2-3.9 3.2 2.2 3.2 3.9zM1401 343.9c0 .9-1 2.1-1.7 2.1s-1.7-1.2-1.7-2.1 1-2.1 1.7-2.1 1.7 1.2 1.7 2.1z"/>
<path d="M1378.7 383.4c0 4.5-5.1 10.5-9 10.5s-9-6-9-10.5 5.1-10.5 9-10.5 9 6 9 10.5zM1376.8 383.4c0 3.6-4.1 8.3-7.1 8.3s-7.1-4.7-7.1-8.3 4.1-8.3 7.1-8.3 7.1 4.7 7.1 8.3zM1374.9 383.4c0 2.6-3 6.1-5.2 6.1s-5.2-3.5-5.2-6.1 3-6.1 5.2-6.1 5.2 3.5 5.2 6.1zM1373.1 383.4c0 1.7-2 4-3.4 4s-3.4-2.3-3.4-4 2-4 3.4-4 3.4 2.3 3.4 4zM1371.5 383.4c0 .9-1 2.1-1.8 2.1s-1.8-1.2-1.8-2.1 1-2.1 1.8-2.1 1.8 1.2 1.8 2.1z"/>
<path d="M1281.1 393.4c0 4-4.3 9.3-7.5 9.3s-7.5-5.3-7.5-9.3 4.3-9.3 7.5-9.3 7.5 5.3 7.5 9.3zM1279.5 393.4c0 3.2-3.4 7.4-5.9 7.4s-5.9-4.2-5.9-7.4 3.4-7.4 5.9-7.4 5.9 4.2 5.9 7.4zM1277.9 393.4c0 2.3-2.5 5.4-4.3 5.4s-4.3-3.1-4.3-5.4 2.5-5.4 4.3-5.4 4.3 3.1 4.3 5.4zM1276.4 393.4c0 1.5-1.6 3.5-2.8 3.5s-2.8-2-2.8-3.5 1.6-3.5 2.8-3.5 2.8 2 2.8 3.5zM1275.1 393.4c0 .8-.9 1.9-1.5 1.9s-1.5-1.1-1.5-1.9 .9-1.9 1.5-1.9 1.5 1.1 1.5 1.9z"/>
<path d="M1297.8 438c0 4-4.5 9.3-7.9 9.3s-7.9-5.3-7.9-9.3 4.5-9.3 7.9-9.3 7.9 5.3 7.9 9.3zM1296.2 438c0 3.2-3.6 7.4-6.3 7.4s-6.3-4.2-6.3-7.4 3.6-7.4 6.3-7.4 6.3 4.2 6.3 7.4zM1294.5 438c0 2.3-2.6 5.4-4.6 5.4s-4.6-3.1-4.6-5.4 2.6-5.4 4.6-5.4 4.6 3.1 4.6 5.4zM1292.9 438c0 1.5-1.7 3.5-3 3.5s-3-2-3-3.5 1.7-3.5 3-3.5 3 2 3 3.5zM1291.5 438c0 .8-.9 1.9-1.6 1.9s-1.6-1.1-1.6-1.9 .9-1.9 1.6-1.9 1.6 1.1 1.6 1.9z"/>
<path d="M1334.5 430.4c0 4.2-5 9.7-8.7 9.7s-8.7-5.5-8.7-9.7 5-9.7 8.7-9.7 8.7 5.5 8.7 9.7zM1332.7 430.4c0 3.3-3.9 7.7-6.9 7.7s-6.9-4.4-6.9-7.7 3.9-7.7 6.9-7.7 6.9 4.4 6.9 7.7zM1330.9 430.4c0 2.4-2.9 5.6-5.1 5.6s-5.1-3.2-5.1-5.6 2.9-5.6 5.1-5.6 5.1 3.2 5.1 5.6zM1329.1 430.4c0 1.6-1.9 3.7-3.3 3.7s-3.3-2.1-3.3-3.7 1.9-3.7 3.3-3.7 3.3 2.1 3.3 3.7zM1327.5 430.4c0 .8-1 1.9-1.7 1.9s-1.7-1.1-1.7-1.9 1-1.9 1.7-1.9 1.7 1.1 1.7 1.9z"/>
<path d="M1357.7 430.8c0 4.1-4.9 9.6-8.6 9.6s-8.6-5.5-8.6-9.6 4.9-9.6 8.6-9.6 8.6 5.5 8.6 9.6zM1355.9 430.8c0 3.3-3.9 7.6-6.8 7.6s-6.8-4.3-6.8-7.6 3.9-7.6 6.8-7.6 6.8 4.3 6.8 7.6zM1354 430.8c0 2.4-2.9 5.6-5 5.6s-5-3.2-5-5.6 2.9-5.6 5-5.6 5 3.2 5 5.6zM1352.3 430.8c0 1.6-1.9 3.6-3.3 3.6s-3.3-2.1-3.3-3.6 1.9-3.6 3.3-3.6 3.3 2.1 3.3 3.6zM1350.8 430.8c0 .8-1 1.9-1.7 1.9s-1.7-1.1-1.7-1.9 1-1.9 1.7-1.9 1.7 1.1 1.7 1.9z"/>
<path d="M1304.6 463.2c0 4.4-4.8 10.3-8.4 10.3s-8.4-5.9-8.4-10.3 4.8-10.3 8.4-10.3 8.4 5.9 8.4 10.3zM1302.8 463.2c0 3.5-3.8 8.2-6.7 8.2s-6.7-4.6-6.7-8.2 3.8-8.2 6.7-8.2 6.7 4.6 6.7 8.2zM1301.1 463.2c0 2.6-2.8 6-4.9 6s-4.9-3.4-4.9-6 2.8-6 4.9-6 4.9 3.4 4.9 6zM1299.4 463.2c0 1.7-1.8 3.9-3.2 3.9s-3.2-2.2-3.2-3.9 1.8-3.9 3.2-3.9 3.2 2.2 3.2 3.9zM1297.9 463.2c0 .9-1 2.1-1.7 2.1s-1.7-1.2-1.7-2.1 1-2.1 1.7-2.1 1.7 1.2 1.7 2.1z"/>
<path d="M1260.1 498c0 4.1-4.9 9.5-8.5 9.5s-8.5-5.4-8.5-9.5 4.9-9.5 8.5-9.5 8.5 5.4 8.5 9.5zM1258.3 498c0 3.2-3.8 7.5-6.7 7.5s-6.7-4.3-6.7-7.5 3.8-7.5 6.7-7.5 6.7 4.3 6.7 7.5zM1256.5 498c0 2.4-2.8 5.5-4.9 5.5s-4.9-3.1-4.9-5.5 2.8-5.5 4.9-5.5 4.9 3.1 4.9 5.5zM1254.8 498c0 1.5-1.8 3.6-3.2 3.6s-3.2-2.1-3.2-3.6 1.8-3.6 3.2-3.6 3.2 2.1 3.2 3.6zM1253.3 498c0 .8-1 1.9-1.7 1.9s-1.7-1.1-1.7-1.9 1-1.9 1.7-1.9 1.7 1.1 1.7 1.9z"/>
<path d="M1327.7 453.1c0 5.6-6.8 12.9-12 12.9s-12-7.4-12-12.9 6.8-12.9 12-12.9 12 7.4 12 12.9zM1325.2 453.1c0 4.4-5.4 10.2-9.5 10.2s-9.5-5.8-9.5-10.2 5.4-10.2 9.5-10.2 9.5 5.8 9.5 10.2zM1322.7 453.1c0 3.2-4 7.5-7 7.5s-7-4.3-7-7.5 4-7.5 7-7.5 7 4.3 7 7.5zM1320.3 453.1c0 2.1-2.6 4.9-4.6 4.9s-4.6-2.8-4.6-4.9 2.6-4.9 4.6-4.9 4.6 2.8 4.6 4.9zM1318.1 453.1c0 1.1-1.4 2.6-2.4 2.6s-2.4-1.5-2.4-2.6 1.4-2.6 2.4-2.6 2.4 1.5 2.4 2.6z"/>
<path d="M1367.9 485.7c0 4-4.8 9.3-8.4 9.3s-8.4-5.3-8.4-9.3 4.8-9.3 8.4-9.3 8.4 5.3 8.4 9.3zM1366.1 485.7c0 3.2-3.8 7.3-6.6 7.3s-6.6-4.2-6.6-7.3 3.8-7.3 6.6-7.3 6.6 4.2 6.6 7.3zM1364.4 485.7c0 2.3-2.8 5.4-4.9 5.4s-4.9-3.1-4.9-5.4 2.8-5.4 4.9-5.4 4.9 3.1 4.9 5.4zM1362.7 485.7c0 1.5-1.8 3.5-3.2 3.5s-3.2-2-3.2-3.5 1.8-3.5 3.2-3.5 3.2 2 3.2 3.5zM1361.2 485.7c0 .8-1 1.9-1.7 1.9s-1.7-1.1-1.7-1.9 1-1.9 1.7-1.9 1.7 1.1 1.7 1.9z"/>
<path d="M1372.7 457c0 4.2-5 9.7-8.8 9.7s-8.8-5.5-8.8-9.7 5-9.7 8.8-9.7 8.8 5.5 8.8 9.7zM1370.8 457c0 3.3-3.9 7.7-6.9 7.7s-6.9-4.4-6.9-7.7 3.9-7.7 6.9-7.7 6.9 4.4 6.9 7.7zM1369 457c0 2.4-2.9 5.6-5.1 5.6s-5.1-3.2-5.1-5.6 2.9-5.6 5.1-5.6 5.1 3.2 5.1 5.6zM1367.2 457c0 1.6-1.9 3.7-3.3 3.7s-3.3-2.1-3.3-3.7 1.9-3.7 3.3-3.7 3.3 2.1 3.3 3.7zM1365.7 457c0 .8-1 1.9-1.8 1.9s-1.8-1.1-1.8-1.9 1-1.9 1.8-1.9 1.8 1.1 1.8 1.9z"/>
<path d="M1408.8 408.4c0 4.9-5.4 11.3-9.4 11.3s-9.4-6.4-9.4-11.3 5.4-11.3 9.4-11.3 9.4 6.4 9.4 11.3zM1406.8 408.4c0 3.8-4.2 8.9-7.4 8.9s-7.4-5.1-7.4-8.9 4.2-8.9 7.4-8.9 7.4 5.1 7.4 8.9zM1404.8 408.4c0 2.8-3.1 6.5-5.5 6.5s-5.5-3.7-5.5-6.5 3.1-6.5 5.5-6.5 5.5 3.7 5.5 6.5zM1402.9 408.4c0 1.8-2 4.3-3.6 4.3s-3.6-2.4-3.6-4.3 2-4.3 3.6-4.3 3.6 2.4 3.6 4.3zM1401.2 408.4c0 1-1.1 2.3-1.9 2.3s-1.9-1.3-1.9-2.3 1.1-2.3 1.9-2.3 1.9 1.3 1.9 2.3z"/>
<path d="M1420.3 408.9c0 5-5.5 11.5-9.6 11.5s-9.6-6.6-9.6-11.5 5.5-11.5 9.6-11.5 9.6 6.6 9.6 11.5zM1418.3 408.9c0 3.9-4.3 9.1-7.6 9.1s-7.6-5.2-7.6-9.1 4.3-9.1 7.6-9.1 7.6 5.2 7.6 9.1zM1416.3 408.9c0 2.9-3.2 6.7-5.6 6.7s-5.6-3.8-5.6-6.7 3.2-6.7 5.6-6.7 5.6 3.8 5.6 6.7zM1414.4 408.9c0 1.9-2.1 4.4-3.7 4.4s-3.7-2.5-3.7-4.4 2.1-4.4 3.7-4.4 3.7 2.5 3.7 4.4zM1412.6 408.9c0 1-1.1 2.3-1.9 2.3s-1.9-1.3-1.9-2.3 1.1-2.3 1.9-2.3 1.9 1.3 1.9 2.3z"/>
<path d="M1441.6 452c0 4.4-4.8 10.3-8.4 10.3s-8.4-5.9-8.4-10.3 4.8-10.3 8.4-10.3 8.4 5.9 8.4 10.3zM1439.9 452c0 3.5-3.8 8.1-6.6 8.1s-6.6-4.6-6.6-8.1 3.8-8.1 6.6-8.1 6.6 4.6 6.6 8.1zM1438.1 452c0 2.6-2.8 6-4.9 6s-4.9-3.4-4.9-6 2.8-6 4.9-6 4.9 3.4 4.9 6zM1436.4 452c0 1.7-1.8 3.9-3.2 3.9s-3.2-2.2-3.2-3.9 1.8-3.9 3.2-3.9 3.2 2.2 3.2 3.9zM1434.9 452c0 .9-1 2.1-1.7 2.1s-1.7-1.2-1.7-2.1 1-2.1 1.7-2.1 1.7 1.2 1.7 2.1z"/>
<path d="M1426.7 470c0 4.9-4.9 11.5-8.6 11.5s-8.6-6.5-8.6-11.5 4.9-11.5 8.6-11.5 8.6 6.5 8.6 11.5zM1424.9 470c0 3.9-3.9 9.1-6.8 9.1s-6.8-5.2-6.8-9.1 3.9-9.1 6.8-9.1 6.8 5.2 6.8 9.1zM1423.1 470c0 2.9-2.8 6.6-5 6.6s-5-3.8-5-6.6 2.8-6.6 5-6.6 5 3.8 5 6.6zM1421.3 470c0 1.9-1.9 4.4-3.3 4.4s-3.3-2.5-3.3-4.4 1.9-4.4 3.3-4.4 3.3 2.5 3.3 4.4zM1419.8 470c0 1-1 2.3-1.7 2.3s-1.7-1.3-1.7-2.3 1-2.3 1.7-2.3 1.7 1.3 1.7 2.3z"/>
<path d="M1276.7 498.9c0 4.4-4.8 10.2-8.3 10.2s-8.3-5.8-8.3-10.2 4.8-10.2 8.3-10.2 8.3 5.8 8.3 10.2zM1274.9 498.9c0 3.5-3.8 8.1-6.6 8.1s-6.6-4.6-6.6-8.1 3.8-8.1 6.6-8.1 6.6 4.6 6.6 8.1zM1273.2 498.9c0 2.5-2.8 5.9-4.8 5.9s-4.8-3.4-4.8-5.9 2.8-5.9 4.8-5.9 4.8 3.4 4.8 5.9zM1271.5 498.9c0 1.7-1.8 3.9-3.2 3.9s-3.2-2.2-3.2-3.9 1.8-3.9 3.2-3.9 3.2 2.2 3.2 3.9zM1270 498.9c0 .9-1 2-1.7 2s-1.7-1.2-1.7-2 1-2 1.7-2 1.7 1.2 1.7 2z"/>
<path d="M1282.2 516.2c0 4.3-4.9 10.1-8.6 10.1s-8.6-5.7-8.6-10.1 4.9-10.1 8.6-10.1 8.6 5.7 8.6 10.1zM1280.4 516.2c0 3.4-3.9 7.9-6.8 7.9s-6.8-4.5-6.8-7.9 3.9-7.9 6.8-7.9 6.8 4.5 6.8 7.9zM1278.6 516.2c0 2.5-2.9 5.8-5 5.8s-5-3.3-5-5.8 2.9-5.8 5-5.8 5 3.3 5 5.8zM1276.9 516.2c0 1.6-1.9 3.8-3.3 3.8s-3.3-2.2-3.3-3.8 1.9-3.8 3.3-3.8 3.3 2.2 3.3 3.8zM1275.3 516.2c0 .9-1 2-1.7 2s-1.7-1.1-1.7-2 1-2 1.7-2 1.7 1.1 1.7 2z"/>
<path d="M1320.1 532.2c0 4.4-5.5 10.2-9.7 10.2s-9.7-5.8-9.7-10.2 5.5-10.2 9.7-10.2 9.7 5.8 9.7 10.2zM1318 532.2c0 3.5-4.4 8-7.7 8s-7.7-4.6-7.7-8 4.4-8 7.7-8 7.7 4.6 7.7 8zM1316 532.2c0 2.5-3.2 5.9-5.6 5.9s-5.6-3.4-5.6-5.9 3.2-5.9 5.6-5.9 5.6 3.4 5.6 5.9zM1314 532.2c0 1.7-2.1 3.9-3.7 3.9s-3.7-2.2-3.7-3.9 2.1-3.9 3.7-3.9 3.7 2.2 3.7 3.9zM1312.3 532.2c0 .9-1.1 2-1.9 2s-1.9-1.2-1.9-2 1.1-2 1.9-2 1.9 1.2 1.9 2z"/>
<path d="M1447.9 490.8c0 4.5-4.3 10.4-7.6 10.4s-7.6-5.9-7.6-10.4 4.3-10.4 7.6-10.4 7.6 5.9 7.6 10.4zM1446.3 490.8c0 3.5-3.4 8.2-6 8.2s-6-4.7-6-8.2 3.4-8.2 6-8.2 6 4.7 6 8.2zM1444.8 490.8c0 2.6-2.5 6-4.4 6s-4.4-3.4-4.4-6 2.5-6 4.4-6 4.4 3.4 4.4 6zM1443.2 490.8c0 1.7-1.6 3.9-2.9 3.9s-2.9-2.2-2.9-3.9 1.6-3.9 2.9-3.9 2.9 2.2 2.9 3.9zM1441.9 490.8c0 .9-.9 2.1-1.5 2.1s-1.5-1.2-1.5-2.1 .9-2.1 1.5-2.1 1.5 1.2 1.5 2.1z"/>
<path d="M1517.6 504.6c0 4.5-5.4 10.4-9.5 10.4s-9.5-5.9-9.5-10.4 5.4-10.4 9.5-10.4 9.5 5.9 9.5 10.4zM1515.6 504.6c0 3.5-4.3 8.2-7.5 8.2s-7.5-4.7-7.5-8.2 4.3-8.2 7.5-8.2 7.5 4.7 7.5 8.2zM1513.6 504.6c0 2.6-3.1 6-5.5 6s-5.5-3.4-5.5-6 3.1-6 5.5-6 5.5 3.4 5.5 6zM1511.7 504.6c0 1.7-2.1 4-3.6 4s-3.6-2.3-3.6-4 2.1-4 3.6-4 3.6 2.3 3.6 4zM1510 504.6c0 .9-1.1 2.1-1.9 2.1s-1.9-1.2-1.9-2.1 1.1-2.1 1.9-2.1 1.9 1.2 1.9 2.1z"/>
<path d="M1582.4 401.3c0 4-4.3 9.4-7.5 9.4s-7.5-5.3-7.5-9.4 4.3-9.4 7.5-9.4 7.5 5.3 7.5 9.4zM1580.8 401.3c0 3.2-3.4 7.4-5.9 7.4s-5.9-4.2-5.9-7.4 3.4-7.4 5.9-7.4 5.9 4.2 5.9 7.4zM1579.2 401.3c0 2.3-2.5 5.4-4.3 5.4s-4.3-3.1-4.3-5.4 2.5-5.4 4.3-5.4 4.3 3.1 4.3 5.4zM1577.7 401.3c0 1.5-1.6 3.6-2.8 3.6s-2.8-2-2.8-3.6 1.6-3.6 2.8-3.6 2.8 2 2.8 3.6zM1576.4 401.3c0 .8-.9 1.9-1.5 1.9s-1.5-1.1-1.5-1.9 .9-1.9 1.5-1.9 1.5 1.1 1.5 1.9z"/>
<path d="M1448.7 372.6c0 4.9-4.3 11.4-7.6 11.4s-7.6-6.5-7.6-11.4 4.3-11.4 7.6-11.4 7.6 6.5 7.6 11.4zM1447.1 372.6c0 3.9-3.4 9-6 9s-6-5.1-6-9 3.4-9 6-9 6 5.1 6 9zM1445.5 372.6c0 2.8-2.5 6.6-4.4 6.6s-4.4-3.8-4.4-6.6 2.5-6.6 4.4-6.6 4.4 3.8 4.4 6.6zM1444 372.6c0 1.9-1.6 4.3-2.9 4.3s-2.9-2.5-2.9-4.3 1.6-4.3 2.9-4.3 2.9 2.5 2.9 4.3zM1442.6 372.6c0 1-.9 2.3-1.5 2.3s-1.5-1.3-1.5-2.3 .9-2.3 1.5-2.3 1.5 1.3 1.5 2.3z"/>
<path d="M1109.1 611.3c0 4.2-5 9.8-8.8 9.8s-8.8-5.6-8.8-9.8 5-9.8 8.8-9.8 8.8 5.6 8.8 9.8zM1107.3 611.3c0 3.3-4 7.7-7 7.7s-7-4.4-7-7.7 4-7.7 7-7.7 7 4.4 7 7.7zM1105.4 611.3c0 2.4-2.9 5.7-5.1 5.7s-5.1-3.2-5.1-5.7 2.9-5.7 5.1-5.7 5.1 3.2 5.1 5.7zM1103.7 611.3c0 1.6-1.9 3.7-3.3 3.7s-3.3-2.1-3.3-3.7 1.9-3.7 3.3-3.7 3.3 2.1 3.3 3.7zM1102.1 611.3c0 .8-1 2-1.8 2s-1.8-1.1-1.8-2 1-2 1.8-2 1.8 1.1 1.8 2z"/>
<path d="M1145.5 606.5c0 4.2-5 9.7-8.7 9.7s-8.7-5.5-8.7-9.7 5-9.7 8.7-9.7 8.7 5.5 8.7 9.7zM1143.7 606.5c0 3.3-3.9 7.7-6.9 7.7s-6.9-4.4-6.9-7.7 3.9-7.7 6.9-7.7 6.9 4.4 6.9 7.7zM1141.9 606.5c0 2.4-2.9 5.6-5.1 5.6s-5.1-3.2-5.1-5.6 2.9-5.6 5.1-5.6 5.1 3.2 5.1 5.6zM1140.1 606.5c0 1.6-1.9 3.7-3.3 3.7s-3.3-2.1-3.3-3.7 1.9-3.7 3.3-3.7 3.3 2.1 3.3 3.7zM1138.5 606.5c0 .8-1 1.9-1.7 1.9s-1.7-1.1-1.7-1.9 1-1.9 1.7-1.9 1.7 1.1 1.7 1.9z"/>
<path d="M1193.7 570.3c0 4-4.5 9.3-7.9 9.3s-7.9-5.3-7.9-9.3 4.5-9.3 7.9-9.3 7.9 5.3 7.9 9.3zM1192 570.3c0 3.2-3.6 7.3-6.2 7.3s-6.2-4.2-6.2-7.3 3.6-7.3 6.2-7.3 6.2 4.2 6.2 7.3zM1190.4 570.3c0 2.3-2.6 5.4-4.6 5.4s-4.6-3.1-4.6-5.4 2.6-5.4 4.6-5.4 4.6 3.1 4.6 5.4zM1188.8 570.3c0 1.5-1.7 3.5-3 3.5s-3-2-3-3.5 1.7-3.5 3-3.5 3 2 3 3.5zM1187.4 570.3c0 .8-.9 1.9-1.6 1.9s-1.6-1.1-1.6-1.9 .9-1.9 1.6-1.9 1.6 1.1 1.6 1.9z"/>
<path d="M1237.1 611.6c0 4.2-5.6 9.8-9.8 9.8s-9.8-5.6-9.8-9.8 5.6-9.8 9.8-9.8 9.8 5.6 9.8 9.8zM1235 611.6c0 3.3-4.4 7.7-7.7 7.7s-7.7-4.4-7.7-7.7 4.4-7.7 7.7-7.7 7.7 4.4 7.7 7.7zM1233 611.6c0 2.4-3.2 5.7-5.7 5.7s-5.7-3.2-5.7-5.7 3.2-5.7 5.7-5.7 5.7 3.2 5.7 5.7zM1231 611.6c0 1.6-2.1 3.7-3.7 3.7s-3.7-2.1-3.7-3.7 2.1-3.7 3.7-3.7 3.7 2.1 3.7 3.7zM1229.3 611.6c0 .8-1.1 2-2 2s-2-1.1-2-2 1.1-2 2-2 2 1.1 2 2z"/>
</g>
<g stroke="#9c8e28">
<path d="M1192.4 312c0 4.4-5.2 10.3-9.1 10.3s-9.1-5.9-9.1-10.3 5.2-10.3 9.1-10.3 9.1 5.9 9.1 10.3zM1190.5 312c0 3.5-4.1 8.1-7.2 8.1s-7.2-4.6-7.2-8.1 4.1-8.1 7.2-8.1 7.2 4.6 7.2 8.1zM1188.6 312c0 2.6-3 6-5.3 6s-5.3-3.4-5.3-6 3-6 5.3-6 5.3 3.4 5.3 6zM1186.8 312c0 1.7-2 3.9-3.5 3.9s-3.5-2.2-3.5-3.9 2-3.9 3.5-3.9 3.5 2.2 3.5 3.9zM1185.2 312c0 .9-1 2.1-1.8 2.1s-1.8-1.2-1.8-2.1 1-2.1 1.8-2.1 1.8 1.2 1.8 2.1zM1184.3 312c0 .5-.6 1.1-1 1.1s-1-.6-1-1.1 .6-1.1 1-1.1 1 .6 1 1.1z"/>
<path d="M1242 244.9c0 5-5.8 11.6-10.2 11.6s-10.2-6.6-10.2-11.6 5.8-11.6 10.2-11.6 10.2 6.6 10.2 11.6zM1239.8 244.9c0 4-4.6 9.2-8 9.2s-8-5.2-8-9.2 4.6-9.2 8-9.2 8 5.2 8 9.2zM1237.7 244.9c0 2.9-3.4 6.7-5.9 6.7s-5.9-3.8-5.9-6.7 3.4-6.7 5.9-6.7 5.9 3.8 5.9 6.7zM1235.7 244.9c0 1.9-2.2 4.4-3.9 4.4s-3.9-2.5-3.9-4.4 2.2-4.4 3.9-4.4 3.9 2.5 3.9 4.4zM1233.8 244.9c0 1-1.2 2.3-2 2.3s-2-1.3-2-2.3 1.2-2.3 2-2.3 2 1.3 2 2.3zM1232.9 244.9c0 .6-.6 1.3-1.1 1.3s-1.1-.7-1.1-1.3 .6-1.3 1.1-1.3 1.1 .7 1.1 1.3z"/>
<path d="M1292.3 242.6c0 4.6-5.6 10.8-9.8 10.8s-9.8-6.1-9.8-10.8 5.6-10.8 9.8-10.8 9.8 6.1 9.8 10.8zM1290.2 242.6c0 3.7-4.4 8.5-7.7 8.5s-7.7-4.9-7.7-8.5 4.4-8.5 7.7-8.5 7.7 4.9 7.7 8.5zM1288.2 242.6c0 2.7-3.2 6.3-5.7 6.3s-5.7-3.6-5.7-6.3 3.2-6.3 5.7-6.3 5.7 3.6 5.7 6.3zM1286.2 242.6c0 1.8-2.1 4.1-3.7 4.1s-3.7-2.3-3.7-4.1 2.1-4.1 3.7-4.1 3.7 2.3 3.7 4.1zM1284.4 242.6c0 .9-1.1 2.2-2 2.2s-2-1.2-2-2.2 1.1-2.2 2-2.2 2 1.2 2 2.2zM1283.5 242.6c0 .5-.6 1.2-1.1 1.2s-1.1-.7-1.1-1.2 .6-1.2 1.1-1.2 1.1 .7 1.1 1.2z"/>
<path d="M1407.4 262.1c0 4.9-5.4 11.3-9.4 11.3s-9.4-6.4-9.4-11.3 5.4-11.3 9.4-11.3 9.4 6.4 9.4 11.3zM1405.4 262.1c0 3.8-4.2 8.9-7.4 8.9s-7.4-5.1-7.4-8.9 4.2-8.9 7.4-8.9 7.4 5.1 7.4 8.9zM1403.4 262.1c0 2.8-3.1 6.5-5.5 6.5s-5.5-3.7-5.5-6.5 3.1-6.5 5.5-6.5 5.5 3.7 5.5 6.5zM1401.5 262.1c0 1.8-2 4.3-3.6 4.3s-3.6-2.4-3.6-4.3 2-4.3 3.6-4.3 3.6 2.4 3.6 4.3zM1399.8 262.1c0 1-1.1 2.3-1.9 2.3s-1.9-1.3-1.9-2.3 1.1-2.3 1.9-2.3 1.9 1.3 1.9 2.3zM1399 262.1c0 .5-.6 1.2-1 1.2s-1-.7-1-1.2 .6-1.2 1-1.2 1 .7 1 1.2z"/>
<path d="M1316.8 281c0 4.8-5.3 11.2-9.4 11.2s-9.4-6.4-9.4-11.2 5.3-11.2 9.4-11.2 9.4 6.4 9.4 11.2zM1314.8 281c0 3.8-4.2 8.9-7.4 8.9s-7.4-5.1-7.4-8.9 4.2-8.9 7.4-8.9 7.4 5.1 7.4 8.9zM1312.8 281c0 2.8-3.1 6.5-5.4 6.5s-5.4-3.7-5.4-6.5 3.1-6.5 5.4-6.5 5.4 3.7 5.4 6.5zM1311 281c0 1.8-2 4.3-3.6 4.3s-3.6-2.4-3.6-4.3 2-4.3 3.6-4.3 3.6 2.4 3.6 4.3zM1309.3 281c0 1-1.1 2.2-1.9 2.2s-1.9-1.3-1.9-2.2 1.1-2.2 1.9-2.2 1.9 1.3 1.9 2.2zM1308.4 281c0 .5-.6 1.2-1 1.2s-1-.7-1-1.2 .6-1.2 1-1.2 1 .7 1 1.2z"/>
<path d="M1322.5 295c0 5.1-5.6 11.8-9.8 11.8s-9.8-6.7-9.8-11.8 5.6-11.8 9.8-11.8 9.8 6.7 9.8 11.8zM1320.4 295c0 4-4.4 9.3-7.8 9.3s-7.8-5.3-7.8-9.3 4.4-9.3 7.8-9.3 7.8 5.3 7.8 9.3zM1318.3 295c0 2.9-3.3 6.9-5.7 6.9s-5.7-3.9-5.7-6.9 3.3-6.9 5.7-6.9 5.7 3.9 5.7 6.9zM1316.4 295c0 1.9-2.1 4.5-3.7 4.5s-3.7-2.6-3.7-4.5 2.1-4.5 3.7-4.5 3.7 2.6 3.7 4.5zM1314.6 295c0 1-1.1 2.4-2 2.4s-2-1.3-2-2.4 1.1-2.4 2-2.4 2 1.3 2 2.4zM1313.7 295c0 .6-.6 1.3-1.1 1.3s-1.1-.7-1.1-1.3 .6-1.3 1.1-1.3 1.1 .7 1.1 1.3z"/>
<path d="M1301.5 309c0 5.1-5.6 11.9-9.9 11.9s-9.9-6.8-9.9-11.9 5.6-11.9 9.9-11.9 9.9 6.8 9.9 11.9zM1299.4 309c0 4-4.5 9.4-7.8 9.4s-7.8-5.4-7.8-9.4 4.5-9.4 7.8-9.4 7.8 5.4 7.8 9.4zM1297.3 309c0 3-3.3 6.9-5.7 6.9s-5.7-3.9-5.7-6.9 3.3-6.9 5.7-6.9 5.7 3.9 5.7 6.9zM1295.3 309c0 1.9-2.1 4.5-3.8 4.5s-3.8-2.6-3.8-4.5 2.1-4.5 3.8-4.5 3.8 2.6 3.8 4.5zM1293.6 309c0 1-1.1 2.4-2 2.4s-2-1.4-2-2.4 1.1-2.4 2-2.4 2 1.4 2 2.4zM1292.7 309c0 .6-.6 1.3-1.1 1.3s-1.1-.7-1.1-1.3 .6-1.3 1.1-1.3 1.1 .7 1.1 1.3z"/>
<path d="M1427.5 324.7c0 4.4-4.8 10.3-8.4 10.3s-8.4-5.9-8.4-10.3 4.8-10.3 8.4-10.3 8.4 5.9 8.4 10.3zM1425.8 324.7c0 3.5-3.8 8.1-6.7 8.1s-6.7-4.6-6.7-8.1 3.8-8.1 6.7-8.1 6.7 4.6 6.7 8.1zM1424 324.7c0 2.6-2.8 6-4.9 6s-4.9-3.4-4.9-6 2.8-6 4.9-6 4.9 3.4 4.9 6zM1422.3 324.7c0 1.7-1.8 3.9-3.2 3.9s-3.2-2.2-3.2-3.9 1.8-3.9 3.2-3.9 3.2 2.2 3.2 3.9zM1420.8 324.7c0 .9-1 2.1-1.7 2.1s-1.7-1.2-1.7-2.1 1-2.1 1.7-2.1 1.7 1.2 1.7 2.1zM1420 324.7c0 .5-.5 1.1-.9 1.1s-.9-.6-.9-1.1 .5-1.1 .9-1.1 .9 .6 .9 1.1z"/>
<path d="M1402.7 192.5c0 3.8-4.5 8.8-7.8 8.8s-7.8-5-7.8-8.8 4.5-8.8 7.8-8.8 7.8 5 7.8 8.8zM1401.1 192.5c0 3-3.5 6.9-6.2 6.9s-6.2-4-6.2-6.9 3.5-6.9 6.2-6.9 6.2 4 6.2 6.9zM1399.4 192.5c0 2.2-2.6 5.1-4.5 5.1s-4.5-2.9-4.5-5.1 2.6-5.1 4.5-5.1 4.5 2.9 4.5 5.1zM1397.9 192.5c0 1.4-1.7 3.3-3 3.3s-3-1.9-3-3.3 1.7-3.3 3-3.3 3 1.9 3 3.3zM1396.5 192.5c0 .8-.9 1.8-1.6 1.8s-1.6-1-1.6-1.8 .9-1.8 1.6-1.8 1.6 1 1.6 1.8zM1395.8 192.5c0 .4-.5 1-.9 1s-.9-.6-.9-1 .5-1 .9-1 .9 .6 .9 1z"/>
<path d="M1473.9 223.4c0 4.7-5.1 10.9-8.9 10.9s-8.9-6.2-8.9-10.9 5.1-10.9 8.9-10.9 8.9 6.2 8.9 10.9zM1472 223.4c0 3.7-4 8.6-7 8.6s-7-4.9-7-8.6 4-8.6 7-8.6 7 4.9 7 8.6zM1470.1 223.4c0 2.7-2.9 6.3-5.2 6.3s-5.2-3.6-5.2-6.3 2.9-6.3 5.2-6.3 5.2 3.6 5.2 6.3zM1468.3 223.4c0 1.8-1.9 4.1-3.4 4.1s-3.4-2.4-3.4-4.1 1.9-4.1 3.4-4.1 3.4 2.4 3.4 4.1zM1466.7 223.4c0 .9-1 2.2-1.8 2.2s-1.8-1.2-1.8-2.2 1-2.2 1.8-2.2 1.8 1.2 1.8 2.2zM1465.9 223.4c0 .5-.6 1.2-1 1.2s-1-.7-1-1.2 .6-1.2 1-1.2 1 .7 1 1.2z"/>
<path d="M1541.1 264.9c0 4.6-5 10.6-8.7 10.6s-8.7-6.1-8.7-10.6 5-10.6 8.7-10.6 8.7 6.1 8.7 10.6zM1539.3 264.9c0 3.6-3.9 8.4-6.9 8.4s-6.9-4.8-6.9-8.4 3.9-8.4 6.9-8.4 6.9 4.8 6.9 8.4zM1537.5 264.9c0 2.7-2.9 6.2-5.1 6.2s-5.1-3.5-5.1-6.2 2.9-6.2 5.1-6.2 5.1 3.5 5.1 6.2zM1535.7 264.9c0 1.7-1.9 4-3.3 4s-3.3-2.3-3.3-4 1.9-4 3.3-4 3.3 2.3 3.3 4zM1534.2 264.9c0 .9-1 2.1-1.7 2.1s-1.7-1.2-1.7-2.1 1-2.1 1.7-2.1 1.7 1.2 1.7 2.1zM1533.4 264.9c0 .5-.5 1.2-1 1.2s-1-.7-1-1.2 .5-1.2 1-1.2 1 .7 1 1.2z"/>
<path d="M1589.5 293.7c0 4.3-4.8 9.9-8.5 9.9s-8.5-5.7-8.5-9.9 4.8-9.9 8.5-9.9 8.5 5.7 8.5 9.9zM1587.7 293.7c0 3.4-3.8 7.8-6.7 7.8s-6.7-4.5-6.7-7.8 3.8-7.8 6.7-7.8 6.7 4.5 6.7 7.8zM1585.9 293.7c0 2.5-2.8 5.8-4.9 5.8s-4.9-3.3-4.9-5.8 2.8-5.8 4.9-5.8 4.9 3.3 4.9 5.8zM1584.2 293.7c0 1.6-1.8 3.8-3.2 3.8s-3.2-2.1-3.2-3.8 1.8-3.8 3.2-3.8 3.2 2.1 3.2 3.8zM1582.7 293.7c0 .9-1 2-1.7 2s-1.7-1.1-1.7-2 1-2 1.7-2 1.7 1.1 1.7 2zM1581.9 293.7c0 .5-.5 1.1-.9 1.1s-.9-.6-.9-1.1 .5-1.1 .9-1.1 .9 .6 .9 1.1z"/>
<path d="M1546.2 308.4c0 4.6-5 10.8-8.8 10.8s-8.8-6.1-8.8-10.8 5-10.8 8.8-10.8 8.8 6.1 8.8 10.8zM1544.4 308.4c0 3.7-4 8.5-7 8.5s-7-4.9-7-8.5 4-8.5 7-8.5 7 4.9 7 8.5zM1542.5 308.4c0 2.7-2.9 6.2-5.1 6.2s-5.1-3.6-5.1-6.2 2.9-6.2 5.1-6.2 5.1 3.6 5.1 6.2zM1540.8 308.4c0 1.8-1.9 4.1-3.3 4.1s-3.3-2.3-3.3-4.1 1.9-4.1 3.3-4.1 3.3 2.3 3.3 4.1zM1539.2 308.4c0 .9-1 2.2-1.8 2.2s-1.8-1.2-1.8-2.2 1-2.2 1.8-2.2 1.8 1.2 1.8 2.2zM1538.4 308.4c0 .5-.6 1.2-1 1.2s-1-.7-1-1.2 .6-1.2 1-1.2 1 .7 1 1.2z"/>
<path d="M1456.9 377c0 4.1-4.9 9.6-8.6 9.6s-8.6-5.4-8.6-9.6 4.9-9.6 8.6-9.6 8.6 5.4 8.6 9.6zM1454.1 377c0 2.8-3.3 6.5-5.8 6.5s-5.8-3.7-5.8-6.5 3.3-6.5 5.8-6.5 5.8 3.7 5.8 6.5zM1451.5 377c0 1.6-1.9 3.6-3.3 3.6s-3.3-2.1-3.3-3.6 1.9-3.6 3.3-3.6 3.3 2.1 3.3 3.6z" stroke-opacity=".8"/>
<path d="M1396 463.7c0 4.1-4.9 9.6-8.7 9.6s-8.7-5.5-8.7-9.6 4.9-9.6 8.7-9.6 8.7 5.5 8.7 9.6zM1393.2 463.7c0 2.8-3.4 6.6-5.9 6.6s-5.9-3.7-5.9-6.6 3.4-6.6 5.9-6.6 5.9 3.7 5.9 6.6zM1390.6 463.7c0 1.6-1.9 3.7-3.3 3.7s-3.3-2.1-3.3-3.7 1.9-3.7 3.3-3.7 3.3 2.1 3.3 3.7z" stroke-opacity=".8"/>
<path d="M1460.1 341.8c0 4.6-5 10.8-8.8 10.8s-8.8-6.1-8.8-10.8 5-10.8 8.8-10.8 8.8 6.1 8.8 10.8zM1458.2 341.8c0 3.7-4 8.5-7 8.5s-7-4.8-7-8.5 4-8.5 7-8.5 7 4.8 7 8.5zM1456.4 341.8c0 2.7-2.9 6.2-5.1 6.2s-5.1-3.6-5.1-6.2 2.9-6.2 5.1-6.2 5.1 3.6 5.1 6.2zM1454.6 341.8c0 1.8-1.9 4.1-3.3 4.1s-3.3-2.3-3.3-4.1 1.9-4.1 3.3-4.1 3.3 2.3 3.3 4.1zM1453 341.8c0 .9-1 2.2-1.8 2.2s-1.8-1.2-1.8-2.2 1-2.2 1.8-2.2 1.8 1.2 1.8 2.2zM1452.2 341.8c0 .5-.6 1.2-1 1.2s-1-.7-1-1.2 .6-1.2 1-1.2 1 .7 1 1.2z"/>
<path d="M1167.1 379.3c0 4.6-5 10.8-8.8 10.8s-8.8-6.1-8.8-10.8 5-10.8 8.8-10.8 8.8 6.1 8.8 10.8zM1165.3 379.3c0 3.7-4 8.5-7 8.5s-7-4.9-7-8.5 4-8.5 7-8.5 7 4.9 7 8.5zM1163.4 379.3c0 2.7-2.9 6.2-5.1 6.2s-5.1-3.6-5.1-6.2 2.9-6.2 5.1-6.2 5.1 3.6 5.1 6.2zM1161.7 379.3c0 1.8-1.9 4.1-3.3 4.1s-3.3-2.3-3.3-4.1 1.9-4.1 3.3-4.1 3.3 2.3 3.3 4.1zM1160.1 379.3c0 .9-1 2.2-1.8 2.2s-1.8-1.2-1.8-2.2 1-2.2 1.8-2.2 1.8 1.2 1.8 2.2zM1159.3 379.3c0 .5-.6 1.2-1 1.2s-1-.7-1-1.2 .6-1.2 1-1.2 1 .7 1 1.2z"/>
<path d="M1192.3 384.4c0 4.1-4.9 9.6-8.7 9.6s-8.7-5.5-8.7-9.6 4.9-9.6 8.7-9.6 8.7 5.5 8.7 9.6zM1190.5 384.4c0 3.3-3.9 7.6-6.8 7.6s-6.8-4.3-6.8-7.6 3.9-7.6 6.8-7.6 6.8 4.3 6.8 7.6zM1188.7 384.4c0 2.4-2.9 5.6-5 5.6s-5-3.2-5-5.6 2.9-5.6 5-5.6 5 3.2 5 5.6zM1186.9 384.4c0 1.6-1.9 3.7-3.3 3.7s-3.3-2.1-3.3-3.7 1.9-3.7 3.3-3.7 3.3 2.1 3.3 3.7zM1185.4 384.4c0 .8-1 1.9-1.7 1.9s-1.7-1.1-1.7-1.9 1-1.9 1.7-1.9 1.7 1.1 1.7 1.9zM1184.6 384.4c0 .5-.5 1.1-1 1.1s-1-.6-1-1.1 .5-1.1 1-1.1 1 .6 1 1.1z"/>
<path d="M1193.6 418.5c0 4.1-4.8 9.4-8.5 9.4s-8.5-5.4-8.5-9.4 4.8-9.4 8.5-9.4 8.5 5.4 8.5 9.4zM1191.8 418.5c0 3.2-3.8 7.4-6.7 7.4s-6.7-4.2-6.7-7.4 3.8-7.4 6.7-7.4 6.7 4.2 6.7 7.4zM1190.1 418.5c0 2.4-2.8 5.5-4.9 5.5s-4.9-3.1-4.9-5.5 2.8-5.5 4.9-5.5 4.9 3.1 4.9 5.5zM1188.4 418.5c0 1.5-1.8 3.6-3.2 3.6s-3.2-2-3.2-3.6 1.8-3.6 3.2-3.6 3.2 2 3.2 3.6zM1186.8 418.5c0 .8-1 1.9-1.7 1.9s-1.7-1.1-1.7-1.9 1-1.9 1.7-1.9 1.7 1.1 1.7 1.9zM1186.1 418.5c0 .4-.5 1-.9 1s-.9-.6-.9-1 .5-1 .9-1 .9 .6 .9 1z"/>
<path d="M1238.2 432.1c0 4.7-5.1 10.9-8.9 10.9s-8.9-6.2-8.9-10.9 5.1-10.9 8.9-10.9 8.9 6.2 8.9 10.9zM1236.3 432.1c0 3.7-4 8.6-7 8.6s-7-4.9-7-8.6 4-8.6 7-8.6 7 4.9 7 8.6zM1234.5 432.1c0 2.7-2.9 6.3-5.2 6.3s-5.2-3.6-5.2-6.3 2.9-6.3 5.2-6.3 5.2 3.6 5.2 6.3zM1232.7 432.1c0 1.8-1.9 4.1-3.4 4.1s-3.4-2.4-3.4-4.1 1.9-4.1 3.4-4.1 3.4 2.4 3.4 4.1zM1231.1 432.1c0 .9-1 2.2-1.8 2.2s-1.8-1.2-1.8-2.2 1-2.2 1.8-2.2 1.8 1.2 1.8 2.2zM1230.3 432.1c0 .5-.6 1.2-1 1.2s-1-.7-1-1.2 .6-1.2 1-1.2 1 .7 1 1.2z"/>
<path d="M1303.2 352.9c0 4.2-5 9.8-8.8 9.8s-8.8-5.6-8.8-9.8 5-9.8 8.8-9.8 8.8 5.6 8.8 9.8zM1301.3 352.9c0 3.3-4 7.7-6.9 7.7s-6.9-4.4-6.9-7.7 4-7.7 6.9-7.7 6.9 4.4 6.9 7.7zM1299.5 352.9c0 2.4-2.9 5.7-5.1 5.7s-5.1-3.2-5.1-5.7 2.9-5.7 5.1-5.7 5.1 3.2 5.1 5.7zM1297.7 352.9c0 1.6-1.9 3.7-3.3 3.7s-3.3-2.1-3.3-3.7 1.9-3.7 3.3-3.7 3.3 2.1 3.3 3.7zM1296.2 352.9c0 .8-1 2-1.8 2s-1.8-1.1-1.8-2 1-2 1.8-2 1.8 1.1 1.8 2zM1295.4 352.9c0 .5-.6 1.1-1 1.1s-1-.6-1-1.1 .6-1.1 1-1.1 1 .6 1 1.1z"/>
<path d="M1335.7 351.2c0 4.5-5.4 10.4-9.5 10.4s-9.5-5.9-9.5-10.4 5.4-10.4 9.5-10.4 9.5 5.9 9.5 10.4zM1333.8 351.2c0 3.5-4.3 8.2-7.5 8.2s-7.5-4.7-7.5-8.2 4.3-8.2 7.5-8.2 7.5 4.7 7.5 8.2zM1331.8 351.2c0 2.6-3.1 6-5.5 6s-5.5-3.4-5.5-6 3.1-6 5.5-6 5.5 3.4 5.5 6zM1329.9 351.2c0 1.7-2 4-3.6 4s-3.6-2.3-3.6-4 2-4 3.6-4 3.6 2.3 3.6 4zM1328.2 351.2c0 .9-1.1 2.1-1.9 2.1s-1.9-1.2-1.9-2.1 1.1-2.1 1.9-2.1 1.9 1.2 1.9 2.1zM1327.3 351.2c0 .5-.6 1.1-1 1.1s-1-.7-1-1.1 .6-1.1 1-1.1 1 .7 1 1.1z"/>
<path d="M1328.5 376.8c0 4.1-4.9 9.5-8.5 9.5s-8.5-5.4-8.5-9.5 4.9-9.5 8.5-9.5 8.5 5.4 8.5 9.5zM1326.8 376.8c0 3.2-3.8 7.5-6.7 7.5s-6.7-4.3-6.7-7.5 3.8-7.5 6.7-7.5 6.7 4.3 6.7 7.5zM1325 376.8c0 2.4-2.8 5.5-4.9 5.5s-4.9-3.1-4.9-5.5 2.8-5.5 4.9-5.5 4.9 3.1 4.9 5.5zM1323.3 376.8c0 1.5-1.8 3.6-3.2 3.6s-3.2-2.1-3.2-3.6 1.8-3.6 3.2-3.6 3.2 2.1 3.2 3.6zM1321.7 376.8c0 .8-1 1.9-1.7 1.9s-1.7-1.1-1.7-1.9 1-1.9 1.7-1.9 1.7 1.1 1.7 1.9zM1321 376.8c0 .4-.5 1-.9 1s-.9-.6-.9-1 .5-1 .9-1 .9 .6 .9 1z"/>
<path d="M1407.4 344.7c0 4.5-4.9 10.5-8.6 10.5s-8.6-6-8.6-10.5 4.9-10.5 8.6-10.5 8.6 6 8.6 10.5zM1405.6 344.7c0 3.6-3.9 8.3-6.8 8.3s-6.8-4.7-6.8-8.3 3.9-8.3 6.8-8.3 6.8 4.7 6.8 8.3zM1403.8 344.7c0 2.6-2.8 6.1-5 6.1s-5-3.5-5-6.1 2.8-6.1 5-6.1 5 3.5 5 6.1zM1402 344.7c0 1.7-1.9 4-3.3 4s-3.3-2.3-3.3-4 1.9-4 3.3-4 3.3 2.3 3.3 4zM1400.5 344.7c0 .9-1 2.1-1.7 2.1s-1.7-1.2-1.7-2.1 1-2.1 1.7-2.1 1.7 1.2 1.7 2.1zM1399.7 344.7c0 .5-.5 1.2-.9 1.2s-.9-.7-.9-1.2 .5-1.2 .9-1.2 .9 .7 .9 1.2z"/>
<path d="M1378.8 383.8c0 4.7-5.3 10.8-9.4 10.8s-9.4-6.2-9.4-10.8 5.3-10.8 9.4-10.8 9.4 6.2 9.4 10.8zM1376.9 383.8c0 3.7-4.2 8.6-7.4 8.6s-7.4-4.9-7.4-8.6 4.2-8.6 7.4-8.6 7.4 4.9 7.4 8.6zM1374.9 383.8c0 2.7-3.1 6.3-5.4 6.3s-5.4-3.6-5.4-6.3 3.1-6.3 5.4-6.3 5.4 3.6 5.4 6.3zM1373 383.8c0 1.8-2 4.1-3.6 4.1s-3.6-2.3-3.6-4.1 2-4.1 3.6-4.1 3.6 2.3 3.6 4.1zM1371.4 383.8c0 .9-1.1 2.2-1.9 2.2s-1.9-1.2-1.9-2.2 1.1-2.2 1.9-2.2 1.9 1.2 1.9 2.2zM1370.5 383.8c0 .5-.6 1.2-1 1.2s-1-.7-1-1.2 .6-1.2 1-1.2 1 .7 1 1.2z"/>
<path d="M1279.6 398.6c0 4.1-4.3 9.5-7.6 9.5s-7.6-5.4-7.6-9.5 4.3-9.5 7.6-9.5 7.6 5.4 7.6 9.5zM1278 398.6c0 3.2-3.4 7.5-6 7.5s-6-4.3-6-7.5 3.4-7.5 6-7.5 6 4.3 6 7.5zM1276.4 398.6c0 2.4-2.5 5.5-4.4 5.5s-4.4-3.1-4.4-5.5 2.5-5.5 4.4-5.5 4.4 3.1 4.4 5.5zM1274.9 398.6c0 1.5-1.6 3.6-2.9 3.6s-2.9-2.1-2.9-3.6 1.6-3.6 2.9-3.6 2.9 2.1 2.9 3.6zM1273.5 398.6c0 .8-.9 1.9-1.5 1.9s-1.5-1.1-1.5-1.9 .9-1.9 1.5-1.9 1.5 1.1 1.5 1.9zM1272.8 398.6c0 .4-.5 1-.8 1s-.8-.6-.8-1 .5-1 .8-1 .8 .6 .8 1z"/>
<path d="M1295.7 432.7c0 4.1-4.6 9.6-8.1 9.6s-8.1-5.5-8.1-9.6 4.6-9.6 8.1-9.6 8.1 5.5 8.1 9.6zM1294 432.7c0 3.3-3.7 7.6-6.4 7.6s-6.4-4.3-6.4-7.6 3.7-7.6 6.4-7.6 6.4 4.3 6.4 7.6zM1292.2 432.7c0 2.4-2.7 5.6-4.7 5.6s-4.7-3.2-4.7-5.6 2.7-5.6 4.7-5.6 4.7 3.2 4.7 5.6zM1290.6 432.7c0 1.6-1.8 3.6-3.1 3.6s-3.1-2.1-3.1-3.6 1.8-3.6 3.1-3.6 3.1 2.1 3.1 3.6zM1289.2 432.7c0 .8-.9 1.9-1.6 1.9s-1.6-1.1-1.6-1.9 .9-1.9 1.6-1.9 1.6 1.1 1.6 1.9zM1288.4 432.7c0 .5-.5 1.1-.9 1.1s-.9-.6-.9-1.1 .5-1.1 .9-1.1 .9 .6 .9 1.1z"/>
<path d="M1335 425.8c0 4.1-4.9 9.5-8.6 9.5s-8.6-5.4-8.6-9.5 4.9-9.5 8.6-9.5 8.6 5.4 8.6 9.5zM1333.2 425.8c0 3.2-3.9 7.5-6.8 7.5s-6.8-4.3-6.8-7.5 3.9-7.5 6.8-7.5 6.8 4.3 6.8 7.5zM1331.4 425.8c0 2.4-2.8 5.5-5 5.5s-5-3.2-5-5.5 2.8-5.5 5-5.5 5 3.2 5 5.5zM1329.7 425.8c0 1.6-1.9 3.6-3.3 3.6s-3.3-2.1-3.3-3.6 1.9-3.6 3.3-3.6 3.3 2.1 3.3 3.6zM1328.2 425.8c0 .8-1 1.9-1.7 1.9s-1.7-1.1-1.7-1.9 1-1.9 1.7-1.9 1.7 1.1 1.7 1.9zM1327.4 425.8c0 .5-.5 1-.9 1s-.9-.6-.9-1 .5-1 .9-1 .9 .6 .9 1z"/>
<path d="M1357.1 425.4c0 4.3-5.1 9.9-8.9 9.9s-8.9-5.7-8.9-9.9 5.1-9.9 8.9-9.9 8.9 5.7 8.9 9.9zM1355.2 425.4c0 3.4-4 7.8-7.1 7.8s-7.1-4.5-7.1-7.8 4-7.8 7.1-7.8 7.1 4.5 7.1 7.8zM1353.4 425.4c0 2.5-3 5.8-5.2 5.8s-5.2-3.3-5.2-5.8 3-5.8 5.2-5.8 5.2 3.3 5.2 5.8zM1351.6 425.4c0 1.6-1.9 3.8-3.4 3.8s-3.4-2.2-3.4-3.8 1.9-3.8 3.4-3.8 3.4 2.2 3.4 3.8zM1350 425.4c0 .9-1 2-1.8 2s-1.8-1.1-1.8-2 1-2 1.8-2 1.8 1.1 1.8 2zM1349.2 425.4c0 .5-.6 1.1-1 1.1s-1-.6-1-1.1 .6-1.1 1-1.1 1 .6 1 1.1z"/>
<path d="M1301.4 462.9c0 4.6-4.9 10.6-8.7 10.6s-8.7-6-8.7-10.6 4.9-10.6 8.7-10.6 8.7 6 8.7 10.6zM1299.6 462.9c0 3.6-3.9 8.4-6.8 8.4s-6.8-4.8-6.8-8.4 3.9-8.4 6.8-8.4 6.8 4.8 6.8 8.4zM1297.8 462.9c0 2.6-2.9 6.1-5 6.1s-5-3.5-5-6.1 2.9-6.1 5-6.1 5 3.5 5 6.1zM1296.1 462.9c0 1.7-1.9 4-3.3 4s-3.3-2.3-3.3-4 1.9-4 3.3-4 3.3 2.3 3.3 4zM1294.5 462.9c0 .9-1 2.1-1.7 2.1s-1.7-1.2-1.7-2.1 1-2.1 1.7-2.1 1.7 1.2 1.7 2.1zM1293.7 462.9c0 .5-.5 1.2-1 1.2s-1-.7-1-1.2 .5-1.2 1-1.2 1 .7 1 1.2z"/>
<path d="M1261.5 494c0 4.2-5 9.7-8.7 9.7s-8.7-5.5-8.7-9.7 5-9.7 8.7-9.7 8.7 5.5 8.7 9.7zM1259.7 494c0 3.3-3.9 7.6-6.9 7.6s-6.9-4.4-6.9-7.6 3.9-7.6 6.9-7.6 6.9 4.4 6.9 7.6zM1257.9 494c0 2.4-2.9 5.6-5 5.6s-5-3.2-5-5.6 2.9-5.6 5-5.6 5 3.2 5 5.6zM1256.1 494c0 1.6-1.9 3.7-3.3 3.7s-3.3-2.1-3.3-3.7 1.9-3.7 3.3-3.7 3.3 2.1 3.3 3.7zM1254.6 494c0 .8-1 1.9-1.7 1.9s-1.7-1.1-1.7-1.9 1-1.9 1.7-1.9 1.7 1.1 1.7 1.9zM1253.8 494c0 .5-.5 1.1-1 1.1s-1-.6-1-1.1 .5-1.1 1-1.1 1 .6 1 1.1z"/>
<path d="M1331.3 454.1c0 5.9-7.3 13.8-12.8 13.8s-12.8-7.9-12.8-13.8 7.3-13.8 12.8-13.8 12.8 7.9 12.8 13.8zM1328.6 454.1c0 4.7-5.8 10.9-10.1 10.9s-10.1-6.2-10.1-10.9 5.8-10.9 10.1-10.9 10.1 6.2 10.1 10.9zM1325.9 454.1c0 3.4-4.2 8-7.4 8s-7.4-4.6-7.4-8 4.2-8 7.4-8 7.4 4.6 7.4 8zM1323.3 454.1c0 2.3-2.8 5.2-4.9 5.2s-4.9-3-4.9-5.2 2.8-5.2 4.9-5.2 4.9 3 4.9 5.2zM1321 454.1c0 1.2-1.5 2.8-2.6 2.8s-2.6-1.6-2.6-2.8 1.5-2.8 2.6-2.8 2.6 1.6 2.6 2.8zM1319.9 454.1c0 .7-.8 1.5-1.4 1.5s-1.4-.9-1.4-1.5 .8-1.5 1.4-1.5 1.4 .9 1.4 1.5z"/>
<path d="M1372.5 481c0 4.3-5.1 9.9-8.9 9.9s-8.9-5.7-8.9-9.9 5.1-9.9 8.9-9.9 8.9 5.7 8.9 9.9zM1370.7 481c0 3.4-4 7.8-7.1 7.8s-7.1-4.5-7.1-7.8 4-7.8 7.1-7.8 7.1 4.5 7.1 7.8zM1368.8 481c0 2.5-3 5.8-5.2 5.8s-5.2-3.3-5.2-5.8 3-5.8 5.2-5.8 5.2 3.3 5.2 5.8zM1367 481c0 1.6-1.9 3.8-3.4 3.8s-3.4-2.1-3.4-3.8 1.9-3.8 3.4-3.8 3.4 2.1 3.4 3.8zM1365.4 481c0 .9-1 2-1.8 2s-1.8-1.1-1.8-2 1-2 1.8-2 1.8 1.1 1.8 2zM1364.6 481c0 .5-.6 1.1-1 1.1s-1-.6-1-1.1 .6-1.1 1-1.1 1 .6 1 1.1z"/>
<path d="M1368.8 457.2c0 4.1-4.9 9.5-8.5 9.5s-8.5-5.4-8.5-9.5 4.9-9.5 8.5-9.5 8.5 5.4 8.5 9.5zM1367 457.2c0 3.2-3.8 7.5-6.7 7.5s-6.7-4.3-6.7-7.5 3.8-7.5 6.7-7.5 6.7 4.3 6.7 7.5zM1365.2 457.2c0 2.4-2.8 5.5-4.9 5.5s-4.9-3.1-4.9-5.5 2.8-5.5 4.9-5.5 4.9 3.1 4.9 5.5zM1363.5 457.2c0 1.5-1.8 3.6-3.2 3.6s-3.2-2.1-3.2-3.6 1.8-3.6 3.2-3.6 3.2 2.1 3.2 3.6zM1362 457.2c0 .8-1 1.9-1.7 1.9s-1.7-1.1-1.7-1.9 1-1.9 1.7-1.9 1.7 1.1 1.7 1.9zM1361.2 457.2c0 .4-.5 1-.9 1s-.9-.6-.9-1 .5-1 .9-1 .9 .6 .9 1z"/>
<path d="M1409.5 408.7c0 5.1-5.7 11.9-9.9 11.9s-9.9-6.8-9.9-11.9 5.7-11.9 9.9-11.9 9.9 6.8 9.9 11.9zM1407.4 408.7c0 4-4.5 9.4-7.8 9.4s-7.8-5.4-7.8-9.4 4.5-9.4 7.8-9.4 7.8 5.4 7.8 9.4zM1405.3 408.7c0 3-3.3 6.9-5.8 6.9s-5.8-3.9-5.8-6.9 3.3-6.9 5.8-6.9 5.8 3.9 5.8 6.9zM1403.3 408.7c0 1.9-2.1 4.5-3.8 4.5s-3.8-2.6-3.8-4.5 2.1-4.5 3.8-4.5 3.8 2.6 3.8 4.5zM1401.5 408.7c0 1-1.1 2.4-2 2.4s-2-1.4-2-2.4 1.1-2.4 2-2.4 2 1.4 2 2.4zM1400.7 408.7c0 .6-.6 1.3-1.1 1.3s-1.1-.7-1.1-1.3 .6-1.3 1.1-1.3 1.1 .7 1.1 1.3z"/>
<path d="M1419.5 409.5c0 4.9-5.4 11.3-9.5 11.3s-9.5-6.5-9.5-11.3 5.4-11.3 9.5-11.3 9.5 6.5 9.5 11.3zM1417.6 409.5c0 3.9-4.3 9-7.5 9s-7.5-5.1-7.5-9 4.3-9 7.5-9 7.5 5.1 7.5 9zM1415.6 409.5c0 2.8-3.1 6.6-5.5 6.6s-5.5-3.8-5.5-6.6 3.1-6.6 5.5-6.6 5.5 3.8 5.5 6.6zM1413.7 409.5c0 1.9-2 4.3-3.6 4.3s-3.6-2.5-3.6-4.3 2-4.3 3.6-4.3 3.6 2.5 3.6 4.3zM1412 409.5c0 1-1.1 2.3-1.9 2.3s-1.9-1.3-1.9-2.3 1.1-2.3 1.9-2.3 1.9 1.3 1.9 2.3zM1411.1 409.5c0 .5-.6 1.2-1 1.2s-1-.7-1-1.2 .6-1.2 1-1.2 1 .7 1 1.2z"/>
<path d="M1442.1 453.1c0 4.6-5 10.7-8.8 10.7s-8.8-6.1-8.8-10.7 5-10.7 8.8-10.7 8.8 6.1 8.8 10.7zM1440.3 453.1c0 3.6-4 8.5-6.9 8.5s-6.9-4.8-6.9-8.5 4-8.5 6.9-8.5 6.9 4.8 6.9 8.5zM1438.4 453.1c0 2.7-2.9 6.2-5.1 6.2s-5.1-3.6-5.1-6.2 2.9-6.2 5.1-6.2 5.1 3.6 5.1 6.2zM1436.7 453.1c0 1.8-1.9 4.1-3.3 4.1s-3.3-2.3-3.3-4.1 1.9-4.1 3.3-4.1 3.3 2.3 3.3 4.1zM1435.1 453.1c0 .9-1 2.1-1.8 2.1s-1.8-1.2-1.8-2.1 1-2.1 1.8-2.1 1.8 1.2 1.8 2.1zM1434.3 453.1c0 .5-.6 1.2-1 1.2s-1-.7-1-1.2 .6-1.2 1-1.2 1 .7 1 1.2z"/>
<path d="M1426.7 470.1c0 4.9-4.9 11.4-8.5 11.4s-8.5-6.5-8.5-11.4 4.9-11.4 8.5-11.4 8.5 6.5 8.5 11.4zM1424.9 470.1c0 3.9-3.8 9-6.7 9s-6.7-5.1-6.7-9 3.8-9 6.7-9 6.7 5.1 6.7 9zM1423.1 470.1c0 2.8-2.8 6.6-5 6.6s-5-3.8-5-6.6 2.8-6.6 5-6.6 5 3.8 5 6.6zM1421.4 470.1c0 1.9-1.9 4.3-3.2 4.3s-3.2-2.5-3.2-4.3 1.9-4.3 3.2-4.3 3.2 2.5 3.2 4.3zM1419.8 470.1c0 1-1 2.3-1.7 2.3s-1.7-1.3-1.7-2.3 1-2.3 1.7-2.3 1.7 1.3 1.7 2.3zM1419.1 470.1c0 .5-.5 1.3-.9 1.3s-.9-.7-.9-1.3 .5-1.3 .9-1.3 .9 .7 .9 1.3z"/>
<path d="M1278 498.6c0 4.5-4.9 10.6-8.6 10.6s-8.6-6-8.6-10.6 4.9-10.6 8.6-10.6 8.6 6 8.6 10.6zM1276.2 498.6c0 3.6-3.9 8.3-6.8 8.3s-6.8-4.8-6.8-8.3 3.9-8.3 6.8-8.3 6.8 4.8 6.8 8.3zM1274.4 498.6c0 2.6-2.9 6.1-5 6.1s-5-3.5-5-6.1 2.9-6.1 5-6.1 5 3.5 5 6.1zM1272.7 498.6c0 1.7-1.9 4-3.3 4s-3.3-2.3-3.3-4 1.9-4 3.3-4 3.3 2.3 3.3 4zM1271.1 498.6c0 .9-1 2.1-1.7 2.1s-1.7-1.2-1.7-2.1 1-2.1 1.7-2.1 1.7 1.2 1.7 2.1zM1270.3 498.6c0 .5-.5 1.2-.9 1.2s-.9-.7-.9-1.2 .5-1.2 .9-1.2 .9 .7 .9 1.2z"/>
<path d="M1284.6 515.6c0 4.2-4.8 9.9-8.5 9.9s-8.5-5.6-8.5-9.9 4.8-9.9 8.5-9.9 8.5 5.6 8.5 9.9zM1282.9 515.6c0 3.4-3.8 7.8-6.7 7.8s-6.7-4.4-6.7-7.8 3.8-7.8 6.7-7.8 6.7 4.4 6.7 7.8zM1281.1 515.6c0 2.5-2.8 5.7-4.9 5.7s-4.9-3.3-4.9-5.7 2.8-5.7 4.9-5.7 4.9 3.3 4.9 5.7zM1279.4 515.6c0 1.6-1.8 3.7-3.2 3.7s-3.2-2.1-3.2-3.7 1.8-3.7 3.2-3.7 3.2 2.1 3.2 3.7zM1277.9 515.6c0 .8-1 2-1.7 2s-1.7-1.1-1.7-2 1-2 1.7-2 1.7 1.1 1.7 2zM1277.1 515.6c0 .5-.5 1.1-.9 1.1s-.9-.6-.9-1.1 .5-1.1 .9-1.1 .9 .6 .9 1.1z"/>
<path d="M1319.3 532.6c0 4.3-5.4 10-9.6 10s-9.6-5.7-9.6-10 5.4-10 9.6-10 9.6 5.7 9.6 10zM1317.3 532.6c0 3.4-4.3 7.9-7.5 7.9s-7.5-4.5-7.5-7.9 4.3-7.9 7.5-7.9 7.5 4.5 7.5 7.9zM1315.3 532.6c0 2.5-3.2 5.8-5.5 5.8s-5.5-3.3-5.5-5.8 3.2-5.8 5.5-5.8 5.5 3.3 5.5 5.8zM1313.4 532.6c0 1.6-2.1 3.8-3.6 3.8s-3.6-2.2-3.6-3.8 2.1-3.8 3.6-3.8 3.6 2.2 3.6 3.8zM1311.6 532.6c0 .9-1.1 2-1.9 2s-1.9-1.1-1.9-2 1.1-2 1.9-2 1.9 1.1 1.9 2zM1310.8 532.6c0 .5-.6 1.1-1.1 1.1s-1.1-.6-1.1-1.1 .6-1.1 1.1-1.1 1.1 .6 1.1 1.1z"/>
<path d="M1447.2 491c0 4.4-4.3 10.3-7.5 10.3s-7.5-5.9-7.5-10.3 4.3-10.3 7.5-10.3 7.5 5.9 7.5 10.3zM1445.7 491c0 3.5-3.4 8.1-5.9 8.1s-5.9-4.6-5.9-8.1 3.4-8.1 5.9-8.1 5.9 4.6 5.9 8.1zM1444.1 491c0 2.6-2.5 6-4.3 6s-4.3-3.4-4.3-6 2.5-6 4.3-6 4.3 3.4 4.3 6zM1442.6 491c0 1.7-1.6 3.9-2.8 3.9s-2.8-2.2-2.8-3.9 1.6-3.9 2.8-3.9 2.8 2.2 2.8 3.9zM1441.2 491c0 .9-.9 2.1-1.5 2.1s-1.5-1.2-1.5-2.1 .9-2.1 1.5-2.1 1.5 1.2 1.5 2.1zM1440.6 491c0 .5-.5 1.1-.8 1.1s-.8-.6-.8-1.1 .5-1.1 .8-1.1 .8 .6 .8 1.1z"/>
<path d="M1515.8 504.5c0 4.6-5.5 10.6-9.6 10.6s-9.6-6-9.6-10.6 5.5-10.6 9.6-10.6 9.6 6 9.6 10.6zM1513.8 504.5c0 3.6-4.3 8.4-7.6 8.4s-7.6-4.8-7.6-8.4 4.3-8.4 7.6-8.4 7.6 4.8 7.6 8.4zM1511.8 504.5c0 2.6-3.2 6.1-5.6 6.1s-5.6-3.5-5.6-6.1 3.2-6.1 5.6-6.1 5.6 3.5 5.6 6.1zM1509.8 504.5c0 1.7-2.1 4-3.7 4s-3.7-2.3-3.7-4 2.1-4 3.7-4 3.7 2.3 3.7 4zM1508.1 504.5c0 .9-1.1 2.1-1.9 2.1s-1.9-1.2-1.9-2.1 1.1-2.1 1.9-2.1 1.9 1.2 1.9 2.1zM1507.2 504.5c0 .5-.6 1.2-1.1 1.2s-1.1-.7-1.1-1.2 .6-1.2 1.1-1.2 1.1 .7 1.1 1.2z"/>
<path d="M1579.3 403.2c0 4.3-4.5 9.9-7.9 9.9s-7.9-5.7-7.9-9.9 4.5-9.9 7.9-9.9 7.9 5.7 7.9 9.9zM1577.7 403.2c0 3.4-3.6 7.8-6.3 7.8s-6.3-4.5-6.3-7.8 3.6-7.8 6.3-7.8 6.3 4.5 6.3 7.8zM1576 403.2c0 2.5-2.6 5.7-4.6 5.7s-4.6-3.3-4.6-5.7 2.6-5.7 4.6-5.7 4.6 3.3 4.6 5.7zM1574.4 403.2c0 1.6-1.7 3.8-3 3.8s-3-2.1-3-3.8 1.7-3.8 3-3.8 3 2.1 3 3.8zM1573 403.2c0 .9-.9 2-1.6 2s-1.6-1.1-1.6-2 .9-2 1.6-2 1.6 1.1 1.6 2zM1572.3 403.2c0 .5-.5 1.1-.9 1.1s-.9-.6-.9-1.1 .5-1.1 .9-1.1 .9 .6 .9 1.1z"/>
<path d="M1449.1 372c0 4.9-4.3 11.4-7.6 11.4s-7.6-6.5-7.6-11.4 4.3-11.4 7.6-11.4 7.6 6.5 7.6 11.4zM1447.5 372c0 3.9-3.4 9-6 9s-6-5.1-6-9 3.4-9 6-9 6 5.1 6 9zM1445.9 372c0 2.8-2.5 6.6-4.4 6.6s-4.4-3.8-4.4-6.6 2.5-6.6 4.4-6.6 4.4 3.8 4.4 6.6zM1444.3 372c0 1.9-1.6 4.3-2.9 4.3s-2.9-2.5-2.9-4.3 1.6-4.3 2.9-4.3 2.9 2.5 2.9 4.3zM1443 372c0 1-.9 2.3-1.5 2.3s-1.5-1.3-1.5-2.3 .9-2.3 1.5-2.3 1.5 1.3 1.5 2.3zM1442.3 372c0 .5-.5 1.3-.8 1.3s-.8-.7-.8-1.3 .5-1.3 .8-1.3 .8 .7 .8 1.3z"/>
<path d="M1106.4 618.6c0 4.2-5.1 9.9-8.9 9.9s-8.9-5.6-8.9-9.9 5.1-9.9 8.9-9.9 8.9 5.6 8.9 9.9zM1104.5 618.6c0 3.4-4 7.8-7 7.8s-7-4.4-7-7.8 4-7.8 7-7.8 7 4.4 7 7.8zM1102.7 618.6c0 2.5-2.9 5.7-5.2 5.7s-5.2-3.3-5.2-5.7 2.9-5.7 5.2-5.7 5.2 3.3 5.2 5.7zM1100.9 618.6c0 1.6-1.9 3.8-3.4 3.8s-3.4-2.1-3.4-3.8 1.9-3.8 3.4-3.8 3.4 2.1 3.4 3.8zM1099.3 618.6c0 .8-1 2-1.8 2s-1.8-1.1-1.8-2 1-2 1.8-2 1.8 1.1 1.8 2zM1098.5 618.6c0 .5-.6 1.1-1 1.1s-1-.6-1-1.1 .6-1.1 1-1.1 1 .6 1 1.1z"/>
<path d="M1147.7 606c0 4.3-5.1 9.9-8.9 9.9s-8.9-5.6-8.9-9.9 5.1-9.9 8.9-9.9 8.9 5.6 8.9 9.9zM1145.9 606c0 3.4-4 7.8-7 7.8s-7-4.5-7-7.8 4-7.8 7-7.8 7 4.5 7 7.8zM1144 606c0 2.5-2.9 5.7-5.2 5.7s-5.2-3.3-5.2-5.7 2.9-5.7 5.2-5.7 5.2 3.3 5.2 5.7zM1142.2 606c0 1.6-1.9 3.8-3.4 3.8s-3.4-2.1-3.4-3.8 1.9-3.8 3.4-3.8 3.4 2.1 3.4 3.8zM1140.6 606c0 .9-1 2-1.8 2s-1.8-1.1-1.8-2 1-2 1.8-2 1.8 1.1 1.8 2zM1139.8 606c0 .5-.6 1.1-1 1.1s-1-.6-1-1.1 .6-1.1 1-1.1 1 .6 1 1.1z"/>
<path d="M1194 578c0 4.2-4.7 9.8-8.3 9.8s-8.3-5.6-8.3-9.8 4.7-9.8 8.3-9.8 8.3 5.6 8.3 9.8zM1192.2 578c0 3.3-3.7 7.7-6.6 7.7s-6.6-4.4-6.6-7.7 3.7-7.7 6.6-7.7 6.6 4.4 6.6 7.7zM1190.5 578c0 2.4-2.8 5.7-4.8 5.7s-4.8-3.2-4.8-5.7 2.8-5.7 4.8-5.7 4.8 3.2 4.8 5.7zM1188.8 578c0 1.6-1.8 3.7-3.2 3.7s-3.2-2.1-3.2-3.7 1.8-3.7 3.2-3.7 3.2 2.1 3.2 3.7zM1187.3 578c0 .8-.9 2-1.7 2s-1.7-1.1-1.7-2 .9-2 1.7-2 1.7 1.1 1.7 2zM1186.6 578c0 .5-.5 1.1-.9 1.1s-.9-.6-.9-1.1 .5-1.1 .9-1.1 .9 .6 .9 1.1z"/>
<path d="M1236.3 611.5c0 4.2-5.5 9.7-9.7 9.7s-9.7-5.5-9.7-9.7 5.5-9.7 9.7-9.7 9.7 5.5 9.7 9.7zM1234.3 611.5c0 3.3-4.4 7.7-7.7 7.7s-7.7-4.4-7.7-7.7 4.4-7.7 7.7-7.7 7.7 4.4 7.7 7.7zM1232.3 611.5c0 2.4-3.2 5.6-5.6 5.6s-5.6-3.2-5.6-5.6 3.2-5.6 5.6-5.6 5.6 3.2 5.6 5.6zM1230.3 611.5c0 1.6-2.1 3.7-3.7 3.7s-3.7-2.1-3.7-3.7 2.1-3.7 3.7-3.7 3.7 2.1 3.7 3.7zM1228.6 611.5c0 .8-1.1 1.9-1.9 1.9s-1.9-1.1-1.9-1.9 1.1-1.9 1.9-1.9 1.9 1.1 1.9 1.9zM1227.7 611.5c0 .5-.6 1.1-1.1 1.1s-1.1-.6-1.1-1.1 .6-1.1 1.1-1.1 1.1 .6 1.1 1.1z"/>
</g>
<g stroke="#78a030">
<path d="M1198.4 307.1c0 4.5-5.3 10.4-9.2 10.4s-9.2-5.9-9.2-10.4 5.3-10.4 9.2-10.4 9.2 5.9 9.2 10.4zM1196.5 307.1c0 3.5-4.2 8.2-7.3 8.2s-7.3-4.7-7.3-8.2 4.2-8.2 7.3-8.2 7.3 4.7 7.3 8.2zM1194.5 307.1c0 2.6-3 6-5.3 6s-5.3-3.4-5.3-6 3-6 5.3-6 5.3 3.4 5.3 6zM1192.7 307.1c0 1.7-2 4-3.5 4s-3.5-2.3-3.5-4 2-4 3.5-4 3.5 2.3 3.5 4zM1191 307.1c0 .9-1.1 2.1-1.8 2.1s-1.8-1.2-1.8-2.1 1.1-2.1 1.8-2.1 1.8 1.2 1.8 2.1zM1190.2 307.1c0 .5-.6 1.1-1 1.1s-1-.7-1-1.1 .6-1.1 1-1.1 1 .7 1 1.1z"/>
<path d="M1242.4 245.5c0 5-5.9 11.7-10.3 11.7s-10.3-6.7-10.3-11.7 5.9-11.7 10.3-11.7 10.3 6.7 10.3 11.7zM1240.2 245.5c0 4-4.6 9.3-8.1 9.3s-8.1-5.3-8.1-9.3 4.6-9.3 8.1-9.3 8.1 5.3 8.1 9.3zM1238 245.5c0 2.9-3.4 6.8-6 6.8s-6-3.9-6-6.8 3.4-6.8 6-6.8 6 3.9 6 6.8zM1236 245.5c0 1.9-2.2 4.5-3.9 4.5s-3.9-2.5-3.9-4.5 2.2-4.5 3.9-4.5 3.9 2.5 3.9 4.5zM1234.1 245.5c0 1-1.2 2.3-2.1 2.3s-2.1-1.3-2.1-2.3 1.2-2.3 2.1-2.3 2.1 1.3 2.1 2.3zM1233.2 245.5c0 .6-.6 1.3-1.1 1.3s-1.1-.7-1.1-1.3 .6-1.3 1.1-1.3 1.1 .7 1.1 1.3z"/>
<path d="M1294.1 243.2c0 4.6-5.5 10.6-9.7 10.6s-9.7-6.1-9.7-10.6 5.5-10.6 9.7-10.6 9.7 6.1 9.7 10.6zM1292.1 243.2c0 3.6-4.4 8.4-7.6 8.4s-7.6-4.8-7.6-8.4 4.4-8.4 7.6-8.4 7.6 4.8 7.6 8.4zM1290.1 243.2c0 2.7-3.2 6.2-5.6 6.2s-5.6-3.5-5.6-6.2 3.2-6.2 5.6-6.2 5.6 3.5 5.6 6.2zM1288.1 243.2c0 1.7-2.1 4-3.7 4s-3.7-2.3-3.7-4 2.1-4 3.7-4 3.7 2.3 3.7 4zM1286.4 243.2c0 .9-1.1 2.1-1.9 2.1s-1.9-1.2-1.9-2.1 1.1-2.1 1.9-2.1 1.9 1.2 1.9 2.1zM1285.5 243.2c0 .5-.6 1.2-1.1 1.2s-1.1-.7-1.1-1.2 .6-1.2 1.1-1.2 1.1 .7 1.1 1.2z"/>
<path d="M1407.4 262.8c0 5.1-5.6 11.8-9.8 11.8s-9.8-6.7-9.8-11.8 5.6-11.8 9.8-11.8 9.8 6.7 9.8 11.8zM1405.4 262.8c0 4-4.4 9.3-7.7 9.3s-7.7-5.3-7.7-9.3 4.4-9.3 7.7-9.3 7.7 5.3 7.7 9.3zM1403.3 262.8c0 2.9-3.2 6.8-5.7 6.8s-5.7-3.9-5.7-6.8 3.2-6.8 5.7-6.8 5.7 3.9 5.7 6.8zM1401.3 262.8c0 1.9-2.1 4.5-3.7 4.5s-3.7-2.5-3.7-4.5 2.1-4.5 3.7-4.5 3.7 2.5 3.7 4.5zM1399.6 262.8c0 1-1.1 2.4-2 2.4s-2-1.3-2-2.4 1.1-2.4 2-2.4 2 1.3 2 2.4zM1398.7 262.8c0 .6-.6 1.3-1.1 1.3s-1.1-.7-1.1-1.3 .6-1.3 1.1-1.3 1.1 .7 1.1 1.3z"/>
<path d="M1319.3 281.1c0 5.1-5.6 11.8-9.8 11.8s-9.8-6.7-9.8-11.8 5.6-11.8 9.8-11.8 9.8 6.7 9.8 11.8zM1317.2 281.1c0 4-4.4 9.3-7.8 9.3s-7.8-5.3-7.8-9.3 4.4-9.3 7.8-9.3 7.8 5.3 7.8 9.3zM1315.1 281.1c0 2.9-3.3 6.8-5.7 6.8s-5.7-3.9-5.7-6.8 3.3-6.8 5.7-6.8 5.7 3.9 5.7 6.8zM1313.2 281.1c0 1.9-2.1 4.5-3.7 4.5s-3.7-2.6-3.7-4.5 2.1-4.5 3.7-4.5 3.7 2.6 3.7 4.5zM1311.4 281.1c0 1-1.1 2.4-2 2.4s-2-1.3-2-2.4 1.1-2.4 2-2.4 2 1.3 2 2.4zM1310.5 281.1c0 .6-.6 1.3-1.1 1.3s-1.1-.7-1.1-1.3 .6-1.3 1.1-1.3 1.1 .7 1.1 1.3z"/>
<path d="M1322.8 296.1c0 5.1-5.6 11.8-9.9 11.8s-9.9-6.7-9.9-11.8 5.6-11.8 9.9-11.8 9.9 6.7 9.9 11.8zM1320.7 296.1c0 4-4.4 9.3-7.8 9.3s-7.8-5.3-7.8-9.3 4.4-9.3 7.8-9.3 7.8 5.3 7.8 9.3zM1318.7 296.1c0 2.9-3.3 6.9-5.7 6.9s-5.7-3.9-5.7-6.9 3.3-6.9 5.7-6.9 5.7 3.9 5.7 6.9zM1316.7 296.1c0 1.9-2.1 4.5-3.7 4.5s-3.7-2.6-3.7-4.5 2.1-4.5 3.7-4.5 3.7 2.6 3.7 4.5zM1314.9 296.1c0 1-1.1 2.4-2 2.4s-2-1.3-2-2.4 1.1-2.4 2-2.4 2 1.3 2 2.4zM1314 296.1c0 .6-.6 1.3-1.1 1.3s-1.1-.7-1.1-1.3 .6-1.3 1.1-1.3 1.1 .7 1.1 1.3z"/>
<path d="M1301.2 308.7c0 4.9-5.4 11.5-9.5 11.5s-9.5-6.5-9.5-11.5 5.4-11.5 9.5-11.5 9.5 6.5 9.5 11.5zM1299.2 308.7c0 3.9-4.3 9-7.5 9s-7.5-5.2-7.5-9 4.3-9 7.5-9 7.5 5.2 7.5 9zM1297.2 308.7c0 2.9-3.2 6.6-5.5 6.6s-5.5-3.8-5.5-6.6 3.2-6.6 5.5-6.6 5.5 3.8 5.5 6.6zM1295.3 308.7c0 1.9-2.1 4.4-3.6 4.4s-3.6-2.5-3.6-4.4 2.1-4.4 3.6-4.4 3.6 2.5 3.6 4.4zM1293.5 308.7c0 1-1.1 2.3-1.9 2.3s-1.9-1.3-1.9-2.3 1.1-2.3 1.9-2.3 1.9 1.3 1.9 2.3zM1292.7 308.7c0 .5-.6 1.3-1 1.3s-1-.7-1-1.3 .6-1.3 1-1.3 1 .7 1 1.3z"/>
<path d="M1424.2 326.7c0 4.6-5 10.8-8.8 10.8s-8.8-6.2-8.8-10.8 5-10.8 8.8-10.8 8.8 6.2 8.8 10.8zM1422.3 326.7c0 3.7-4 8.5-7 8.5s-7-4.9-7-8.5 4-8.5 7-8.5 7 4.9 7 8.5zM1420.5 326.7c0 2.7-2.9 6.3-5.1 6.3s-5.1-3.6-5.1-6.3 2.9-6.3 5.1-6.3 5.1 3.6 5.1 6.3zM1418.7 326.7c0 1.8-1.9 4.1-3.4 4.1s-3.4-2.3-3.4-4.1 1.9-4.1 3.4-4.1 3.4 2.3 3.4 4.1zM1417.1 326.7c0 .9-1 2.2-1.8 2.2s-1.8-1.2-1.8-2.2 1-2.2 1.8-2.2 1.8 1.2 1.8 2.2zM1416.3 326.7c0 .5-.6 1.2-1 1.2s-1-.7-1-1.2 .6-1.2 1-1.2 1 .7 1 1.2z"/>
<path d="M1403.1 192.1c0 3.8-4.4 8.8-7.8 8.8s-7.8-5-7.8-8.8 4.4-8.8 7.8-8.8 7.8 5 7.8 8.8zM1401.4 192.1c0 3-3.5 6.9-6.2 6.9s-6.2-3.9-6.2-6.9 3.5-6.9 6.2-6.9 6.2 3.9 6.2 6.9zM1399.8 192.1c0 2.2-2.6 5.1-4.5 5.1s-4.5-2.9-4.5-5.1 2.6-5.1 4.5-5.1 4.5 2.9 4.5 5.1zM1398.2 192.1c0 1.4-1.7 3.3-3 3.3s-3-1.9-3-3.3 1.7-3.3 3-3.3 3 1.9 3 3.3zM1396.8 192.1c0 .8-.9 1.8-1.6 1.8s-1.6-1-1.6-1.8 .9-1.8 1.6-1.8 1.6 1 1.6 1.8zM1396.1 192.1c0 .4-.5 1-.9 1s-.9-.5-.9-1 .5-1 .9-1 .9 .5 .9 1z"/>
<path d="M1474.5 225.7c0 4.5-4.9 10.5-8.6 10.5s-8.6-6-8.6-10.5 4.9-10.5 8.6-10.5 8.6 6 8.6 10.5zM1472.7 225.7c0 3.6-3.9 8.3-6.8 8.3s-6.8-4.7-6.8-8.3 3.9-8.3 6.8-8.3 6.8 4.7 6.8 8.3zM1470.9 225.7c0 2.6-2.8 6.1-5 6.1s-5-3.5-5-6.1 2.8-6.1 5-6.1 5 3.5 5 6.1zM1469.2 225.7c0 1.7-1.9 4-3.2 4s-3.2-2.3-3.2-4 1.9-4 3.2-4 3.2 2.3 3.2 4zM1467.7 225.7c0 .9-1 2.1-1.7 2.1s-1.7-1.2-1.7-2.1 1-2.1 1.7-2.1 1.7 1.2 1.7 2.1zM1466.9 225.7c0 .5-.5 1.1-.9 1.1s-.9-.7-.9-1.1 .5-1.1 .9-1.1 .9 .7 .9 1.1z"/>
<path d="M1540.3 263.2c0 4.6-5 10.8-8.8 10.8s-8.8-6.1-8.8-10.8 5-10.8 8.8-10.8 8.8 6.1 8.8 10.8zM1538.5 263.2c0 3.7-4 8.5-7 8.5s-7-4.8-7-8.5 4-8.5 7-8.5 7 4.8 7 8.5zM1536.6 263.2c0 2.7-2.9 6.2-5.1 6.2s-5.1-3.6-5.1-6.2 2.9-6.2 5.1-6.2 5.1 3.6 5.1 6.2zM1534.8 263.2c0 1.8-1.9 4.1-3.3 4.1s-3.3-2.3-3.3-4.1 1.9-4.1 3.3-4.1 3.3 2.3 3.3 4.1zM1533.3 263.2c0 .9-1 2.2-1.8 2.2s-1.8-1.2-1.8-2.2 1-2.2 1.8-2.2 1.8 1.2 1.8 2.2zM1532.5 263.2c0 .5-.6 1.2-1 1.2s-1-.7-1-1.2 .6-1.2 1-1.2 1 .7 1 1.2z"/>
<path d="M1588.1 294.3c0 4.3-4.9 10.1-8.7 10.1s-8.7-5.8-8.7-10.1 4.9-10.1 8.7-10.1 8.7 5.8 8.7 10.1zM1586.3 294.3c0 3.4-3.9 8-6.8 8s-6.8-4.5-6.8-8 3.9-8 6.8-8 6.8 4.5 6.8 8zM1584.5 294.3c0 2.5-2.9 5.9-5 5.9s-5-3.3-5-5.9 2.9-5.9 5-5.9 5 3.3 5 5.9zM1582.7 294.3c0 1.7-1.9 3.8-3.3 3.8s-3.3-2.2-3.3-3.8 1.9-3.8 3.3-3.8 3.3 2.2 3.3 3.8zM1581.2 294.3c0 .9-1 2-1.7 2s-1.7-1.2-1.7-2 1-2 1.7-2 1.7 1.2 1.7 2zM1580.4 294.3c0 .5-.5 1.1-1 1.1s-1-.6-1-1.1 .5-1.1 1-1.1 1 .6 1 1.1z"/>
<path d="M1545.1 309.6c0 4.5-4.9 10.4-8.5 10.4s-8.5-5.9-8.5-10.4 4.9-10.4 8.5-10.4 8.5 5.9 8.5 10.4zM1543.3 309.6c0 3.5-3.8 8.2-6.7 8.2s-6.7-4.7-6.7-8.2 3.8-8.2 6.7-8.2 6.7 4.7 6.7 8.2zM1541.5 309.6c0 2.6-2.8 6.1-5 6.1s-5-3.4-5-6.1 2.8-6.1 5-6.1 5 3.4 5 6.1zM1539.8 309.6c0 1.7-1.8 4-3.2 4s-3.2-2.3-3.2-4 1.8-4 3.2-4 3.2 2.3 3.2 4zM1538.3 309.6c0 .9-1 2.1-1.7 2.1s-1.7-1.2-1.7-2.1 1-2.1 1.7-2.1 1.7 1.2 1.7 2.1zM1537.5 309.6c0 .5-.5 1.1-.9 1.1s-.9-.7-.9-1.1 .5-1.1 .9-1.1 .9 .7 .9 1.1z"/>
<path d="M1466.7 360.1c0 4.2-5 9.7-8.7 9.7s-8.7-5.5-8.7-9.7 5-9.7 8.7-9.7 8.7 5.5 8.7 9.7zM1463.9 360.1c0 2.8-3.4 6.6-5.9 6.6s-5.9-3.7-5.9-6.6 3.4-6.6 5.9-6.6 5.9 3.7 5.9 6.6zM1461.3 360.1c0 1.6-1.9 3.7-3.3 3.7s-3.3-2.1-3.3-3.7 1.9-3.7 3.3-3.7 3.3 2.1 3.3 3.7z" stroke-opacity=".8"/>
<path d="M1383.9 480.2c0 4.2-5 9.8-8.8 9.8s-8.8-5.6-8.8-9.8 5-9.8 8.8-9.8 8.8 5.6 8.8 9.8zM1381 480.2c0 2.9-3.4 6.7-6 6.7s-6-3.8-6-6.7 3.4-6.7 6-6.7 6 3.8 6 6.7zM1378.4 480.2c0 1.6-1.9 3.7-3.3 3.7s-3.3-2.1-3.3-3.7 1.9-3.7 3.3-3.7 3.3 2.1 3.3 3.7z" stroke-opacity=".8"/>
<path d="M1456.8 343.1c0 4.7-5.1 11-9 11s-9-6.3-9-11 5.1-11 9-11 9 6.3 9 11zM1454.9 343.1c0 3.7-4 8.7-7.1 8.7s-7.1-4.9-7.1-8.7 4-8.7 7.1-8.7 7.1 4.9 7.1 8.7zM1453 343.1c0 2.7-3 6.4-5.2 6.4s-5.2-3.6-5.2-6.4 3-6.4 5.2-6.4 5.2 3.6 5.2 6.4zM1451.3 343.1c0 1.8-1.9 4.2-3.4 4.2s-3.4-2.4-3.4-4.2 1.9-4.2 3.4-4.2 3.4 2.4 3.4 4.2zM1449.6 343.1c0 .9-1 2.2-1.8 2.2s-1.8-1.3-1.8-2.2 1-2.2 1.8-2.2 1.8 1.3 1.8 2.2zM1448.8 343.1c0 .5-.6 1.2-1 1.2s-1-.7-1-1.2 .6-1.2 1-1.2 1 .7 1 1.2z"/>
<path d="M1164.3 382.6c0 4.5-4.9 10.5-8.6 10.5s-8.6-6-8.6-10.5 4.9-10.5 8.6-10.5 8.6 6 8.6 10.5zM1162.5 382.6c0 3.6-3.9 8.3-6.8 8.3s-6.8-4.7-6.8-8.3 3.9-8.3 6.8-8.3 6.8 4.7 6.8 8.3zM1160.7 382.6c0 2.6-2.8 6.1-5 6.1s-5-3.5-5-6.1 2.8-6.1 5-6.1 5 3.5 5 6.1zM1159 382.6c0 1.7-1.9 4-3.3 4s-3.3-2.3-3.3-4 1.9-4 3.3-4 3.3 2.3 3.3 4zM1157.5 382.6c0 .9-1 2.1-1.7 2.1s-1.7-1.2-1.7-2.1 1-2.1 1.7-2.1 1.7 1.2 1.7 2.1zM1156.7 382.6c0 .5-.5 1.2-.9 1.2s-.9-.7-.9-1.2 .5-1.2 .9-1.2 .9 .7 .9 1.2z"/>
<path d="M1186.4 388.4c0 4.3-5.1 9.9-8.9 9.9s-8.9-5.6-8.9-9.9 5.1-9.9 8.9-9.9 8.9 5.6 8.9 9.9zM1184.5 388.4c0 3.4-4 7.8-7 7.8s-7-4.5-7-7.8 4-7.8 7-7.8 7 4.5 7 7.8zM1182.7 388.4c0 2.5-2.9 5.7-5.2 5.7s-5.2-3.3-5.2-5.7 2.9-5.7 5.2-5.7 5.2 3.3 5.2 5.7zM1180.9 388.4c0 1.6-1.9 3.8-3.4 3.8s-3.4-2.1-3.4-3.8 1.9-3.8 3.4-3.8 3.4 2.1 3.4 3.8zM1179.3 388.4c0 .9-1 2-1.8 2s-1.8-1.1-1.8-2 1-2 1.8-2 1.8 1.1 1.8 2zM1178.5 388.4c0 .5-.6 1.1-1 1.1s-1-.6-1-1.1 .6-1.1 1-1.1 1 .6 1 1.1z"/>
<path d="M1189.5 420.9c0 4.2-5 9.7-8.7 9.7s-8.7-5.5-8.7-9.7 5-9.7 8.7-9.7 8.7 5.5 8.7 9.7zM1187.7 420.9c0 3.3-3.9 7.7-6.9 7.7s-6.9-4.4-6.9-7.7 3.9-7.7 6.9-7.7 6.9 4.4 6.9 7.7zM1185.9 420.9c0 2.4-2.9 5.6-5.1 5.6s-5.1-3.2-5.1-5.6 2.9-5.6 5.1-5.6 5.1 3.2 5.1 5.6zM1184.1 420.9c0 1.6-1.9 3.7-3.3 3.7s-3.3-2.1-3.3-3.7 1.9-3.7 3.3-3.7 3.3 2.1 3.3 3.7zM1182.5 420.9c0 .8-1 1.9-1.7 1.9s-1.7-1.1-1.7-1.9 1-1.9 1.7-1.9 1.7 1.1 1.7 1.9zM1181.7 420.9c0 .5-.5 1.1-1 1.1s-1-.6-1-1.1 .5-1.1 1-1.1 1 .6 1 1.1z"/>
<path d="M1237.8 433.3c0 4.7-5.1 10.9-8.9 10.9s-8.9-6.2-8.9-10.9 5.1-10.9 8.9-10.9 8.9 6.2 8.9 10.9zM1235.9 433.3c0 3.7-4 8.6-7 8.6s-7-4.9-7-8.6 4-8.6 7-8.6 7 4.9 7 8.6zM1234.1 433.3c0 2.7-2.9 6.3-5.2 6.3s-5.2-3.6-5.2-6.3 2.9-6.3 5.2-6.3 5.2 3.6 5.2 6.3zM1232.3 433.3c0 1.8-1.9 4.1-3.4 4.1s-3.4-2.4-3.4-4.1 1.9-4.1 3.4-4.1 3.4 2.4 3.4 4.1zM1230.7 433.3c0 .9-1 2.2-1.8 2.2s-1.8-1.2-1.8-2.2 1-2.2 1.8-2.2 1.8 1.2 1.8 2.2zM1229.9 433.3c0 .5-.6 1.2-1 1.2s-1-.7-1-1.2 .6-1.2 1-1.2 1 .7 1 1.2z"/>
<path d="M1303 355.4c0 4.2-5 9.7-8.7 9.7s-8.7-5.5-8.7-9.7 5-9.7 8.7-9.7 8.7 5.5 8.7 9.7zM1301.1 355.4c0 3.3-3.9 7.7-6.9 7.7s-6.9-4.4-6.9-7.7 3.9-7.7 6.9-7.7 6.9 4.4 6.9 7.7zM1299.3 355.4c0 2.4-2.9 5.6-5.1 5.6s-5.1-3.2-5.1-5.6 2.9-5.6 5.1-5.6 5.1 3.2 5.1 5.6zM1297.5 355.4c0 1.6-1.9 3.7-3.3 3.7s-3.3-2.1-3.3-3.7 1.9-3.7 3.3-3.7 3.3 2.1 3.3 3.7zM1296 355.4c0 .8-1 1.9-1.7 1.9s-1.7-1.1-1.7-1.9 1-1.9 1.7-1.9 1.7 1.1 1.7 1.9zM1295.2 355.4c0 .5-.5 1.1-1 1.1s-1-.6-1-1.1 .5-1.1 1-1.1 1 .6 1 1.1z"/>
<path d="M1336.7 351.2c0 4.6-5.6 10.8-9.8 10.8s-9.8-6.1-9.8-10.8 5.6-10.8 9.8-10.8 9.8 6.1 9.8 10.8zM1334.7 351.2c0 3.7-4.4 8.5-7.7 8.5s-7.7-4.9-7.7-8.5 4.4-8.5 7.7-8.5 7.7 4.9 7.7 8.5zM1332.6 351.2c0 2.7-3.2 6.3-5.7 6.3s-5.7-3.6-5.7-6.3 3.2-6.3 5.7-6.3 5.7 3.6 5.7 6.3zM1330.6 351.2c0 1.8-2.1 4.1-3.7 4.1s-3.7-2.3-3.7-4.1 2.1-4.1 3.7-4.1 3.7 2.3 3.7 4.1zM1328.9 351.2c0 .9-1.1 2.2-2 2.2s-2-1.2-2-2.2 1.1-2.2 2-2.2 2 1.2 2 2.2zM1328 351.2c0 .5-.6 1.2-1.1 1.2s-1.1-.7-1.1-1.2 .6-1.2 1.1-1.2 1.1 .7 1.1 1.2z"/>
<path d="M1326.6 379c0 4.3-5.1 9.9-8.9 9.9s-8.9-5.7-8.9-9.9 5.1-9.9 8.9-9.9 8.9 5.7 8.9 9.9zM1324.8 379c0 3.4-4 7.8-7.1 7.8s-7.1-4.5-7.1-7.8 4-7.8 7.1-7.8 7.1 4.5 7.1 7.8zM1322.9 379c0 2.5-3 5.8-5.2 5.8s-5.2-3.3-5.2-5.8 3-5.8 5.2-5.8 5.2 3.3 5.2 5.8zM1321.1 379c0 1.6-1.9 3.8-3.4 3.8s-3.4-2.2-3.4-3.8 1.9-3.8 3.4-3.8 3.4 2.2 3.4 3.8zM1319.5 379c0 .9-1 2-1.8 2s-1.8-1.1-1.8-2 1-2 1.8-2 1.8 1.1 1.8 2zM1318.7 379c0 .5-.6 1.1-1 1.1s-1-.6-1-1.1 .6-1.1 1-1.1 1 .6 1 1.1z"/>
<path d="M1406.7 346.3c0 4.7-5.1 11-9 11s-9-6.3-9-11 5.1-11 9-11 9 6.3 9 11zM1404.8 346.3c0 3.7-4.1 8.7-7.1 8.7s-7.1-5-7.1-8.7 4.1-8.7 7.1-8.7 7.1 5 7.1 8.7zM1402.9 346.3c0 2.7-3 6.4-5.2 6.4s-5.2-3.6-5.2-6.4 3-6.4 5.2-6.4 5.2 3.6 5.2 6.4zM1401.1 346.3c0 1.8-1.9 4.2-3.4 4.2s-3.4-2.4-3.4-4.2 1.9-4.2 3.4-4.2 3.4 2.4 3.4 4.2zM1399.5 346.3c0 .9-1 2.2-1.8 2.2s-1.8-1.3-1.8-2.2 1-2.2 1.8-2.2 1.8 1.3 1.8 2.2zM1398.7 346.3c0 .5-.6 1.2-1 1.2s-1-.7-1-1.2 .6-1.2 1-1.2 1 .7 1 1.2z"/>
<path d="M1378.8 384.8c0 4.6-5.3 10.8-9.3 10.8s-9.3-6.1-9.3-10.8 5.3-10.8 9.3-10.8 9.3 6.1 9.3 10.8zM1376.8 384.8c0 3.7-4.2 8.5-7.3 8.5s-7.3-4.9-7.3-8.5 4.2-8.5 7.3-8.5 7.3 4.9 7.3 8.5zM1374.9 384.8c0 2.7-3.1 6.2-5.4 6.2s-5.4-3.6-5.4-6.2 3.1-6.2 5.4-6.2 5.4 3.6 5.4 6.2zM1373 384.8c0 1.8-2 4.1-3.5 4.1s-3.5-2.3-3.5-4.1 2-4.1 3.5-4.1 3.5 2.3 3.5 4.1zM1371.3 384.8c0 .9-1.1 2.2-1.9 2.2s-1.9-1.2-1.9-2.2 1.1-2.2 1.9-2.2 1.9 1.2 1.9 2.2zM1370.5 384.8c0 .5-.6 1.2-1 1.2s-1-.7-1-1.2 .6-1.2 1-1.2 1 .7 1 1.2z"/>
<path d="M1279.2 406.1c0 4.3-4.6 10-8 10s-8-5.7-8-10 4.6-10 8-10 8 5.7 8 10zM1277.5 406.1c0 3.4-3.6 7.9-6.3 7.9s-6.3-4.5-6.3-7.9 3.6-7.9 6.3-7.9 6.3 4.5 6.3 7.9zM1275.8 406.1c0 2.5-2.7 5.8-4.7 5.8s-4.7-3.3-4.7-5.8 2.7-5.8 4.7-5.8 4.7 3.3 4.7 5.8zM1274.2 406.1c0 1.6-1.7 3.8-3.1 3.8s-3.1-2.2-3.1-3.8 1.7-3.8 3.1-3.8 3.1 2.2 3.1 3.8zM1272.8 406.1c0 .9-.9 2-1.6 2s-1.6-1.1-1.6-2 .9-2 1.6-2 1.6 1.1 1.6 2zM1272.1 406.1c0 .5-.5 1.1-.9 1.1s-.9-.6-.9-1.1 .5-1.1 .9-1.1 .9 .6 .9 1.1z"/>
<path d="M1293.8 426.3c0 4.3-4.8 10-8.5 10s-8.5-5.7-8.5-10 4.8-10 8.5-10 8.5 5.7 8.5 10zM1292.1 426.3c0 3.4-3.8 7.9-6.7 7.9s-6.7-4.5-6.7-7.9 3.8-7.9 6.7-7.9 6.7 4.5 6.7 7.9zM1290.3 426.3c0 2.5-2.8 5.8-4.9 5.8s-4.9-3.3-4.9-5.8 2.8-5.8 4.9-5.8 4.9 3.3 4.9 5.8zM1288.6 426.3c0 1.6-1.8 3.8-3.2 3.8s-3.2-2.2-3.2-3.8 1.8-3.8 3.2-3.8 3.2 2.2 3.2 3.8zM1287 426.3c0 .9-1 2-1.7 2s-1.7-1.1-1.7-2 1-2 1.7-2 1.7 1.1 1.7 2zM1286.3 426.3c0 .5-.5 1.1-.9 1.1s-.9-.6-.9-1.1 .5-1.1 .9-1.1 .9 .6 .9 1.1z"/>
<path d="M1335.6 419.7c0 4.3-5.1 9.9-8.9 9.9s-8.9-5.6-8.9-9.9 5.1-9.9 8.9-9.9 8.9 5.6 8.9 9.9zM1333.7 419.7c0 3.4-4 7.8-7 7.8s-7-4.5-7-7.8 4-7.8 7-7.8 7 4.5 7 7.8zM1331.9 419.7c0 2.5-2.9 5.7-5.2 5.7s-5.2-3.3-5.2-5.7 2.9-5.7 5.2-5.7 5.2 3.3 5.2 5.7zM1330.1 419.7c0 1.6-1.9 3.8-3.4 3.8s-3.4-2.1-3.4-3.8 1.9-3.8 3.4-3.8 3.4 2.1 3.4 3.8zM1328.5 419.7c0 .9-1 2-1.8 2s-1.8-1.1-1.8-2 1-2 1.8-2 1.8 1.1 1.8 2zM1327.7 419.7c0 .5-.6 1.1-1 1.1s-1-.6-1-1.1 .6-1.1 1-1.1 1 .6 1 1.1z"/>
<path d="M1356.4 416.9c0 4.2-5.1 9.9-8.9 9.9s-8.9-5.6-8.9-9.9 5.1-9.9 8.9-9.9 8.9 5.6 8.9 9.9zM1354.5 416.9c0 3.3-4 7.8-7 7.8s-7-4.4-7-7.8 4-7.8 7-7.8 7 4.4 7 7.8zM1352.7 416.9c0 2.5-2.9 5.7-5.1 5.7s-5.1-3.3-5.1-5.7 2.9-5.7 5.1-5.7 5.1 3.3 5.1 5.7zM1350.9 416.9c0 1.6-1.9 3.7-3.4 3.7s-3.4-2.1-3.4-3.7 1.9-3.7 3.4-3.7 3.4 2.1 3.4 3.7zM1349.3 416.9c0 .8-1 2-1.8 2s-1.8-1.1-1.8-2 1-2 1.8-2 1.8 1.1 1.8 2zM1348.5 416.9c0 .5-.6 1.1-1 1.1s-1-.6-1-1.1 .6-1.1 1-1.1 1 .6 1 1.1z"/>
<path d="M1295.4 461.7c0 4.6-5 10.7-8.8 10.7s-8.8-6.1-8.8-10.7 5-10.7 8.8-10.7 8.8 6.1 8.8 10.7zM1293.5 461.7c0 3.6-3.9 8.5-6.9 8.5s-6.9-4.8-6.9-8.5 3.9-8.5 6.9-8.5 6.9 4.8 6.9 8.5zM1291.7 461.7c0 2.7-2.9 6.2-5.1 6.2s-5.1-3.5-5.1-6.2 2.9-6.2 5.1-6.2 5.1 3.5 5.1 6.2zM1289.9 461.7c0 1.8-1.9 4.1-3.3 4.1s-3.3-2.3-3.3-4.1 1.9-4.1 3.3-4.1 3.3 2.3 3.3 4.1zM1288.3 461.7c0 .9-1 2.1-1.8 2.1s-1.8-1.2-1.8-2.1 1-2.1 1.8-2.1 1.8 1.2 1.8 2.1zM1287.6 461.7c0 .5-.5 1.2-1 1.2s-1-.7-1-1.2 .5-1.2 1-1.2 1 .7 1 1.2z"/>
<path d="M1263.1 488.4c0 4.1-4.9 9.5-8.5 9.5s-8.5-5.4-8.5-9.5 4.9-9.5 8.5-9.5 8.5 5.4 8.5 9.5zM1261.3 488.4c0 3.2-3.8 7.5-6.7 7.5s-6.7-4.3-6.7-7.5 3.8-7.5 6.7-7.5 6.7 4.3 6.7 7.5zM1259.5 488.4c0 2.4-2.8 5.5-4.9 5.5s-4.9-3.1-4.9-5.5 2.8-5.5 4.9-5.5 4.9 3.1 4.9 5.5zM1257.8 488.4c0 1.5-1.8 3.6-3.2 3.6s-3.2-2.1-3.2-3.6 1.8-3.6 3.2-3.6 3.2 2.1 3.2 3.6zM1256.2 488.4c0 .8-1 1.9-1.7 1.9s-1.7-1.1-1.7-1.9 1-1.9 1.7-1.9 1.7 1.1 1.7 1.9zM1255.5 488.4c0 .4-.5 1-.9 1s-.9-.6-.9-1 .5-1 .9-1 .9 .6 .9 1z"/>
<path d="M1334.6 454.9c0 5.9-7.2 13.6-12.6 13.6s-12.6-7.8-12.6-13.6 7.2-13.6 12.6-13.6 12.6 7.8 12.6 13.6zM1331.9 454.9c0 4.6-5.7 10.8-10 10.8s-10-6.1-10-10.8 5.7-10.8 10-10.8 10 6.1 10 10.8zM1329.3 454.9c0 3.4-4.2 7.9-7.3 7.9s-7.3-4.5-7.3-7.9 4.2-7.9 7.3-7.9 7.3 4.5 7.3 7.9zM1326.7 454.9c0 2.2-2.7 5.2-4.8 5.2s-4.8-2.9-4.8-5.2 2.7-5.2 4.8-5.2 4.8 2.9 4.8 5.2zM1324.5 454.9c0 1.2-1.4 2.7-2.5 2.7s-2.5-1.6-2.5-2.7 1.4-2.7 2.5-2.7 2.5 1.6 2.5 2.7zM1323.3 454.9c0 .6-.8 1.5-1.4 1.5s-1.4-.9-1.4-1.5 .8-1.5 1.4-1.5 1.4 .9 1.4 1.5z"/>
<path d="M1377.5 476.1c0 4.3-5.1 10-9 10s-9-5.7-9-10 5.1-10 9-10 9 5.7 9 10zM1375.6 476.1c0 3.4-4.1 7.9-7.1 7.9s-7.1-4.5-7.1-7.9 4.1-7.9 7.1-7.9 7.1 4.5 7.1 7.9zM1373.7 476.1c0 2.5-3 5.8-5.2 5.8s-5.2-3.3-5.2-5.8 3-5.8 5.2-5.8 5.2 3.3 5.2 5.8zM1371.9 476.1c0 1.6-1.9 3.8-3.4 3.8s-3.4-2.2-3.4-3.8 1.9-3.8 3.4-3.8 3.4 2.2 3.4 3.8zM1370.3 476.1c0 .9-1 2-1.8 2s-1.8-1.1-1.8-2 1-2 1.8-2 1.8 1.1 1.8 2zM1369.4 476.1c0 .5-.6 1.1-1 1.1s-1-.6-1-1.1 .6-1.1 1-1.1 1 .6 1 1.1z"/>
<path d="M1362.5 456.9c0 4.2-5 9.8-8.9 9.8s-8.9-5.6-8.9-9.8 5-9.8 8.9-9.8 8.9 5.6 8.9 9.8zM1360.7 456.9c0 3.3-4 7.8-7 7.8s-7-4.4-7-7.8 4-7.8 7-7.8 7 4.4 7 7.8zM1358.8 456.9c0 2.5-2.9 5.7-5.1 5.7s-5.1-3.3-5.1-5.7 2.9-5.7 5.1-5.7 5.1 3.3 5.1 5.7zM1357 456.9c0 1.6-1.9 3.7-3.4 3.7s-3.4-2.1-3.4-3.7 1.9-3.7 3.4-3.7 3.4 2.1 3.4 3.7zM1355.4 456.9c0 .8-1 2-1.8 2s-1.8-1.1-1.8-2 1-2 1.8-2 1.8 1.1 1.8 2zM1354.6 456.9c0 .5-.6 1.1-1 1.1s-1-.6-1-1.1 .6-1.1 1-1.1 1 .6 1 1.1z"/>
<path d="M1407.9 409.6c0 5-5.5 11.5-9.6 11.5s-9.6-6.6-9.6-11.5 5.5-11.5 9.6-11.5 9.6 6.6 9.6 11.5zM1405.9 409.6c0 3.9-4.3 9.1-7.6 9.1s-7.6-5.2-7.6-9.1 4.3-9.1 7.6-9.1 7.6 5.2 7.6 9.1zM1403.9 409.6c0 2.9-3.2 6.7-5.6 6.7s-5.6-3.8-5.6-6.7 3.2-6.7 5.6-6.7 5.6 3.8 5.6 6.7zM1402 409.6c0 1.9-2.1 4.4-3.6 4.4s-3.6-2.5-3.6-4.4 2.1-4.4 3.6-4.4 3.6 2.5 3.6 4.4zM1400.2 409.6c0 1-1.1 2.3-1.9 2.3s-1.9-1.3-1.9-2.3 1.1-2.3 1.9-2.3 1.9 1.3 1.9 2.3zM1399.4 409.6c0 .5-.6 1.3-1.1 1.3s-1.1-.7-1.1-1.3 .6-1.3 1.1-1.3 1.1 .7 1.1 1.3z"/>
<path d="M1419.8 411.3c0 5.2-5.7 12-10 12s-10-6.9-10-12 5.7-12 10-12 10 6.9 10 12zM1417.7 411.3c0 4.1-4.5 9.5-7.9 9.5s-7.9-5.4-7.9-9.5 4.5-9.5 7.9-9.5 7.9 5.4 7.9 9.5zM1415.6 411.3c0 3-3.3 7-5.8 7s-5.8-4-5.8-7 3.3-7 5.8-7 5.8 4 5.8 7zM1413.6 411.3c0 2-2.2 4.6-3.8 4.6s-3.8-2.6-3.8-4.6 2.2-4.6 3.8-4.6 3.8 2.6 3.8 4.6zM1411.8 411.3c0 1-1.1 2.4-2 2.4s-2-1.4-2-2.4 1.1-2.4 2-2.4 2 1.4 2 2.4zM1410.9 411.3c0 .6-.6 1.3-1.1 1.3s-1.1-.8-1.1-1.3 .6-1.3 1.1-1.3 1.1 .8 1.1 1.3z"/>
<path d="M1440.9 453.5c0 4.7-5.1 10.9-8.9 10.9s-8.9-6.2-8.9-10.9 5.1-10.9 8.9-10.9 8.9 6.2 8.9 10.9zM1439 453.5c0 3.7-4 8.6-7 8.6s-7-4.9-7-8.6 4-8.6 7-8.6 7 4.9 7 8.6zM1437.2 453.5c0 2.7-2.9 6.3-5.2 6.3s-5.2-3.6-5.2-6.3 2.9-6.3 5.2-6.3 5.2 3.6 5.2 6.3zM1435.4 453.5c0 1.8-1.9 4.1-3.4 4.1s-3.4-2.4-3.4-4.1 1.9-4.1 3.4-4.1 3.4 2.4 3.4 4.1zM1433.8 453.5c0 .9-1 2.2-1.8 2.2s-1.8-1.2-1.8-2.2 1-2.2 1.8-2.2 1.8 1.2 1.8 2.2zM1433 453.5c0 .5-.6 1.2-1 1.2s-1-.7-1-1.2 .6-1.2 1-1.2 1 .7 1 1.2z"/>
<path d="M1426.9 470.7c0 5.1-5 11.8-8.8 11.8s-8.8-6.7-8.8-11.8 5-11.8 8.8-11.8 8.8 6.7 8.8 11.8zM1425 470.7c0 4-4 9.3-7 9.3s-7-5.3-7-9.3 4-9.3 7-9.3 7 5.3 7 9.3zM1423.2 470.7c0 2.9-2.9 6.8-5.1 6.8s-5.1-3.9-5.1-6.8 2.9-6.8 5.1-6.8 5.1 3.9 5.1 6.8zM1421.4 470.7c0 1.9-1.9 4.5-3.4 4.5s-3.4-2.6-3.4-4.5 1.9-4.5 3.4-4.5 3.4 2.6 3.4 4.5zM1419.8 470.7c0 1-1 2.4-1.8 2.4s-1.8-1.3-1.8-2.4 1-2.4 1.8-2.4 1.8 1.3 1.8 2.4zM1419 470.7c0 .6-.6 1.3-1 1.3s-1-.7-1-1.3 .6-1.3 1-1.3 1 .7 1 1.3z"/>
<path d="M1278.6 499.3c0 4.7-5.1 10.9-8.9 10.9s-8.9-6.2-8.9-10.9 5.1-10.9 8.9-10.9 8.9 6.2 8.9 10.9zM1276.8 499.3c0 3.7-4 8.6-7 8.6s-7-4.9-7-8.6 4-8.6 7-8.6 7 4.9 7 8.6zM1274.9 499.3c0 2.7-2.9 6.3-5.2 6.3s-5.2-3.6-5.2-6.3 2.9-6.3 5.2-6.3 5.2 3.6 5.2 6.3zM1273.1 499.3c0 1.8-1.9 4.1-3.4 4.1s-3.4-2.4-3.4-4.1 1.9-4.1 3.4-4.1 3.4 2.4 3.4 4.1zM1271.5 499.3c0 .9-1 2.2-1.8 2.2s-1.8-1.2-1.8-2.2 1-2.2 1.8-2.2 1.8 1.2 1.8 2.2zM1270.7 499.3c0 .5-.6 1.2-1 1.2s-1-.7-1-1.2 .6-1.2 1-1.2 1 .7 1 1.2z"/>
<path d="M1288.7 515.1c0 4.5-5.1 10.5-9 10.5s-9-6-9-10.5 5.1-10.5 9-10.5 9 6 9 10.5zM1286.8 515.1c0 3.6-4.1 8.3-7.1 8.3s-7.1-4.7-7.1-8.3 4.1-8.3 7.1-8.3 7.1 4.7 7.1 8.3zM1284.9 515.1c0 2.6-3 6.1-5.2 6.1s-5.2-3.5-5.2-6.1 3-6.1 5.2-6.1 5.2 3.5 5.2 6.1zM1283.1 515.1c0 1.7-2 4-3.4 4s-3.4-2.3-3.4-4 2-4 3.4-4 3.4 2.3 3.4 4zM1281.5 515.1c0 .9-1 2.1-1.8 2.1s-1.8-1.2-1.8-2.1 1-2.1 1.8-2.1 1.8 1.2 1.8 2.1zM1280.7 515.1c0 .5-.6 1.2-1 1.2s-1-.7-1-1.2 .6-1.2 1-1.2 1 .7 1 1.2z"/>
<path d="M1318.8 532.3c0 4.5-5.7 10.4-9.9 10.4s-9.9-5.9-9.9-10.4 5.7-10.4 9.9-10.4 9.9 5.9 9.9 10.4zM1316.7 532.3c0 3.5-4.5 8.2-7.8 8.2s-7.8-4.7-7.8-8.2 4.5-8.2 7.8-8.2 7.8 4.7 7.8 8.2zM1314.6 532.3c0 2.6-3.3 6-5.8 6s-5.8-3.4-5.8-6 3.3-6 5.8-6 5.8 3.4 5.8 6zM1312.6 532.3c0 1.7-2.1 4-3.8 4s-3.8-2.3-3.8-4 2.1-4 3.8-4 3.8 2.3 3.8 4zM1310.8 532.3c0 .9-1.1 2.1-2 2.1s-2-1.2-2-2.1 1.1-2.1 2-2.1 2 1.2 2 2.1zM1309.9 532.3c0 .5-.6 1.1-1.1 1.1s-1.1-.7-1.1-1.1 .6-1.1 1.1-1.1 1.1 .7 1.1 1.1z"/>
<path d="M1446.4 491.3c0 4.5-4.3 10.4-7.6 10.4s-7.6-5.9-7.6-10.4 4.3-10.4 7.6-10.4 7.6 5.9 7.6 10.4zM1444.8 491.3c0 3.5-3.4 8.2-6 8.2s-6-4.7-6-8.2 3.4-8.2 6-8.2 6 4.7 6 8.2zM1443.3 491.3c0 2.6-2.5 6.1-4.4 6.1s-4.4-3.4-4.4-6.1 2.5-6.1 4.4-6.1 4.4 3.4 4.4 6.1zM1441.7 491.3c0 1.7-1.6 4-2.9 4s-2.9-2.3-2.9-4 1.6-4 2.9-4 2.9 2.3 2.9 4zM1440.4 491.3c0 .9-.9 2.1-1.5 2.1s-1.5-1.2-1.5-2.1 .9-2.1 1.5-2.1 1.5 1.2 1.5 2.1zM1439.7 491.3c0 .5-.5 1.1-.8 1.1s-.8-.7-.8-1.1 .5-1.1 .8-1.1 .8 .7 .8 1.1z"/>
<path d="M1514 504.3c0 4.5-5.4 10.5-9.6 10.5s-9.6-6-9.6-10.5 5.4-10.5 9.6-10.5 9.6 6 9.6 10.5zM1512 504.3c0 3.6-4.3 8.3-7.5 8.3s-7.5-4.7-7.5-8.3 4.3-8.3 7.5-8.3 7.5 4.7 7.5 8.3zM1510 504.3c0 2.6-3.2 6.1-5.5 6.1s-5.5-3.5-5.5-6.1 3.2-6.1 5.5-6.1 5.5 3.5 5.5 6.1zM1508.1 504.3c0 1.7-2.1 4-3.6 4s-3.6-2.3-3.6-4 2.1-4 3.6-4 3.6 2.3 3.6 4zM1506.4 504.3c0 .9-1.1 2.1-1.9 2.1s-1.9-1.2-1.9-2.1 1.1-2.1 1.9-2.1 1.9 1.2 1.9 2.1zM1505.5 504.3c0 .5-.6 1.2-1.1 1.2s-1.1-.7-1.1-1.2 .6-1.2 1.1-1.2 1.1 .7 1.1 1.2z"/>
<path d="M1574.6 406.3c0 4.2-4.5 9.8-7.8 9.8s-7.8-5.6-7.8-9.8 4.5-9.8 7.8-9.8 7.8 5.6 7.8 9.8zM1572.9 406.3c0 3.3-3.5 7.7-6.2 7.7s-6.2-4.4-6.2-7.7 3.5-7.7 6.2-7.7 6.2 4.4 6.2 7.7zM1571.3 406.3c0 2.4-2.6 5.7-4.5 5.7s-4.5-3.2-4.5-5.7 2.6-5.7 4.5-5.7 4.5 3.2 4.5 5.7zM1569.7 406.3c0 1.6-1.7 3.7-3 3.7s-3-2.1-3-3.7 1.7-3.7 3-3.7 3 2.1 3 3.7zM1568.3 406.3c0 .8-.9 2-1.6 2s-1.6-1.1-1.6-2 .9-2 1.6-2 1.6 1.1 1.6 2zM1567.6 406.3c0 .5-.5 1.1-.9 1.1s-.9-.6-.9-1.1 .5-1.1 .9-1.1 .9 .6 .9 1.1z"/>
<path d="M1449.5 372.6c0 5-4.4 11.7-7.8 11.7s-7.8-6.7-7.8-11.7 4.4-11.7 7.8-11.7 7.8 6.7 7.8 11.7zM1447.9 372.6c0 4-3.5 9.2-6.2 9.2s-6.2-5.3-6.2-9.2 3.5-9.2 6.2-9.2 6.2 5.3 6.2 9.2zM1446.2 372.6c0 2.9-2.6 6.8-4.5 6.8s-4.5-3.9-4.5-6.8 2.6-6.8 4.5-6.8 4.5 3.9 4.5 6.8zM1444.7 372.6c0 1.9-1.7 4.4-3 4.4s-3-2.5-3-4.4 1.7-4.4 3-4.4 3 2.5 3 4.4zM1443.3 372.6c0 1-.9 2.3-1.6 2.3s-1.6-1.3-1.6-2.3 .9-2.3 1.6-2.3 1.6 1.3 1.6 2.3zM1442.6 372.6c0 .6-.5 1.3-.9 1.3s-.9-.7-.9-1.3 .5-1.3 .9-1.3 .9 .7 .9 1.3z"/>
<path d="M1101.4 630.6c0 4.1-4.9 9.6-8.6 9.6s-8.6-5.5-8.6-9.6 4.9-9.6 8.6-9.6 8.6 5.5 8.6 9.6zM1099.6 630.6c0 3.3-3.9 7.6-6.8 7.6s-6.8-4.3-6.8-7.6 3.9-7.6 6.8-7.6 6.8 4.3 6.8 7.6zM1097.8 630.6c0 2.4-2.8 5.5-5 5.5s-5-3.2-5-5.5 2.8-5.5 5-5.5 5 3.2 5 5.5zM1096.1 630.6c0 1.6-1.9 3.6-3.3 3.6s-3.3-2.1-3.3-3.6 1.9-3.6 3.3-3.6 3.3 2.1 3.3 3.6zM1094.6 630.6c0 .8-1 1.9-1.7 1.9s-1.7-1.1-1.7-1.9 1-1.9 1.7-1.9 1.7 1.1 1.7 1.9zM1093.8 630.6c0 .5-.5 1.1-.9 1.1s-.9-.6-.9-1.1 .5-1.1 .9-1.1 .9 .6 .9 1.1z"/>
<path d="M1150.2 604.6c0 4.2-5 9.7-8.7 9.7s-8.7-5.5-8.7-9.7 5-9.7 8.7-9.7 8.7 5.5 8.7 9.7zM1148.4 604.6c0 3.3-3.9 7.6-6.9 7.6s-6.9-4.4-6.9-7.6 3.9-7.6 6.9-7.6 6.9 4.4 6.9 7.6zM1146.5 604.6c0 2.4-2.9 5.6-5.1 5.6s-5.1-3.2-5.1-5.6 2.9-5.6 5.1-5.6 5.1 3.2 5.1 5.6zM1144.8 604.6c0 1.6-1.9 3.7-3.3 3.7s-3.3-2.1-3.3-3.7 1.9-3.7 3.3-3.7 3.3 2.1 3.3 3.7zM1143.2 604.6c0 .8-1 1.9-1.7 1.9s-1.7-1.1-1.7-1.9 1-1.9 1.7-1.9 1.7 1.1 1.7 1.9zM1142.4 604.6c0 .5-.5 1.1-1 1.1s-1-.6-1-1.1 .5-1.1 1-1.1 1 .6 1 1.1z"/>
<path d="M1194.4 588c0 4.2-4.8 9.8-8.3 9.8s-8.3-5.6-8.3-9.8 4.8-9.8 8.3-9.8 8.3 5.6 8.3 9.8zM1192.7 588c0 3.3-3.8 7.8-6.6 7.8s-6.6-4.4-6.6-7.8 3.8-7.8 6.6-7.8 6.6 4.4 6.6 7.8zM1190.9 588c0 2.4-2.8 5.7-4.8 5.7s-4.8-3.2-4.8-5.7 2.8-5.7 4.8-5.7 4.8 3.2 4.8 5.7zM1189.2 588c0 1.6-1.8 3.7-3.2 3.7s-3.2-2.1-3.2-3.7 1.8-3.7 3.2-3.7 3.2 2.1 3.2 3.7zM1187.7 588c0 .8-1 2-1.7 2s-1.7-1.1-1.7-2 1-2 1.7-2 1.7 1.1 1.7 2zM1187 588c0 .5-.5 1.1-.9 1.1s-.9-.6-.9-1.1 .5-1.1 .9-1.1 .9 .6 .9 1.1z"/>
<path d="M1235.2 611.8c0 4.1-5.5 9.6-9.6 9.6s-9.6-5.5-9.6-9.6 5.5-9.6 9.6-9.6 9.6 5.5 9.6 9.6zM1233.1 611.8c0 3.3-4.3 7.6-7.6 7.6s-7.6-4.3-7.6-7.6 4.3-7.6 7.6-7.6 7.6 4.3 7.6 7.6zM1231.1 611.8c0 2.4-3.2 5.6-5.6 5.6s-5.6-3.2-5.6-5.6 3.2-5.6 5.6-5.6 5.6 3.2 5.6 5.6zM1229.2 611.8c0 1.6-2.1 3.6-3.6 3.6s-3.6-2.1-3.6-3.6 2.1-3.6 3.6-3.6 3.6 2.1 3.6 3.6zM1227.5 611.8c0 .8-1.1 1.9-1.9 1.9s-1.9-1.1-1.9-1.9 1.1-1.9 1.9-1.9 1.9 1.1 1.9 1.9zM1226.6 611.8c0 .5-.6 1.1-1.1 1.1s-1.1-.6-1.1-1.1 .6-1.1 1.1-1.1 1.1 .6 1.1 1.1z"/>
</g>
<g stroke="#3c9c3c">
<path d="M1203.8 300.3c0 4.4-5.2 10.3-9.2 10.3s-9.2-5.9-9.2-10.3 5.2-10.3 9.2-10.3 9.2 5.9 9.2 10.3zM1201.9 300.3c0 3.5-4.1 8.2-7.2 8.2s-7.2-4.7-7.2-8.2 4.1-8.2 7.2-8.2 7.2 4.7 7.2 8.2zM1200 300.3c0 2.6-3 6-5.3 6s-5.3-3.4-5.3-6 3-6 5.3-6 5.3 3.4 5.3 6zM1198.1 300.3c0 1.7-2 3.9-3.5 3.9s-3.5-2.2-3.5-3.9 2-3.9 3.5-3.9 3.5 2.2 3.5 3.9zM1196.5 300.3c0 .9-1 2.1-1.8 2.1s-1.8-1.2-1.8-2.1 1-2.1 1.8-2.1 1.8 1.2 1.8 2.1z"/>
<path d="M1242.7 245.3c0 5-5.8 11.6-10.2 11.6s-10.2-6.6-10.2-11.6 5.8-11.6 10.2-11.6 10.2 6.6 10.2 11.6zM1240.6 245.3c0 3.9-4.6 9.2-8 9.2s-8-5.2-8-9.2 4.6-9.2 8-9.2 8 5.2 8 9.2zM1238.5 245.3c0 2.9-3.4 6.7-5.9 6.7s-5.9-3.8-5.9-6.7 3.4-6.7 5.9-6.7 5.9 3.8 5.9 6.7zM1236.4 245.3c0 1.9-2.2 4.4-3.9 4.4s-3.9-2.5-3.9-4.4 2.2-4.4 3.9-4.4 3.9 2.5 3.9 4.4zM1234.6 245.3c0 1-1.2 2.3-2 2.3s-2-1.3-2-2.3 1.2-2.3 2-2.3 2 1.3 2 2.3z"/>
<path d="M1295 242.7c0 4.5-5.5 10.6-9.6 10.6s-9.6-6-9.6-10.6 5.5-10.6 9.6-10.6 9.6 6 9.6 10.6zM1293 242.7c0 3.6-4.3 8.3-7.6 8.3s-7.6-4.8-7.6-8.3 4.3-8.3 7.6-8.3 7.6 4.8 7.6 8.3zM1290.9 242.7c0 2.6-3.2 6.1-5.6 6.1s-5.6-3.5-5.6-6.1 3.2-6.1 5.6-6.1 5.6 3.5 5.6 6.1zM1289 242.7c0 1.7-2.1 4-3.6 4s-3.6-2.3-3.6-4 2.1-4 3.6-4 3.6 2.3 3.6 4zM1287.3 242.7c0 .9-1.1 2.1-1.9 2.1s-1.9-1.2-1.9-2.1 1.1-2.1 1.9-2.1 1.9 1.2 1.9 2.1z"/>
<path d="M1407.8 262.5c0 5.1-5.6 11.8-9.9 11.8s-9.9-6.8-9.9-11.8 5.6-11.8 9.9-11.8 9.9 6.8 9.9 11.8zM1405.7 262.5c0 4-4.4 9.4-7.8 9.4s-7.8-5.3-7.8-9.4 4.4-9.4 7.8-9.4 7.8 5.3 7.8 9.4zM1403.6 262.5c0 3-3.3 6.9-5.7 6.9s-5.7-3.9-5.7-6.9 3.3-6.9 5.7-6.9 5.7 3.9 5.7 6.9zM1401.6 262.5c0 1.9-2.1 4.5-3.8 4.5s-3.8-2.6-3.8-4.5 2.1-4.5 3.8-4.5 3.8 2.6 3.8 4.5zM1399.9 262.5c0 1-1.1 2.4-2 2.4s-2-1.4-2-2.4 1.1-2.4 2-2.4 2 1.4 2 2.4z"/>
<path d="M1322.6 280.2c0 5.1-5.6 11.8-9.8 11.8s-9.8-6.7-9.8-11.8 5.6-11.8 9.8-11.8 9.8 6.7 9.8 11.8zM1320.5 280.2c0 4-4.4 9.3-7.8 9.3s-7.8-5.3-7.8-9.3 4.4-9.3 7.8-9.3 7.8 5.3 7.8 9.3zM1318.4 280.2c0 2.9-3.3 6.9-5.7 6.9s-5.7-3.9-5.7-6.9 3.3-6.9 5.7-6.9 5.7 3.9 5.7 6.9zM1316.5 280.2c0 1.9-2.1 4.5-3.7 4.5s-3.7-2.6-3.7-4.5 2.1-4.5 3.7-4.5 3.7 2.6 3.7 4.5zM1314.7 280.2c0 1-1.1 2.4-2 2.4s-2-1.3-2-2.4 1.1-2.4 2-2.4 2 1.3 2 2.4z"/>
<path d="M1323.8 296.7c0 5-5.5 11.5-9.6 11.5s-9.6-6.6-9.6-11.5 5.5-11.5 9.6-11.5 9.6 6.6 9.6 11.5zM1321.8 296.7c0 3.9-4.3 9.1-7.6 9.1s-7.6-5.2-7.6-9.1 4.3-9.1 7.6-9.1 7.6 5.2 7.6 9.1zM1319.8 296.7c0 2.9-3.2 6.7-5.6 6.7s-5.6-3.8-5.6-6.7 3.2-6.7 5.6-6.7 5.6 3.8 5.6 6.7zM1317.9 296.7c0 1.9-2.1 4.4-3.7 4.4s-3.7-2.5-3.7-4.4 2.1-4.4 3.7-4.4 3.7 2.5 3.7 4.4zM1316.2 296.7c0 1-1.1 2.3-1.9 2.3s-1.9-1.3-1.9-2.3 1.1-2.3 1.9-2.3 1.9 1.3 1.9 2.3z"/>
<path d="M1302.2 308c0 5-5.5 11.5-9.6 11.5s-9.6-6.6-9.6-11.5 5.5-11.5 9.6-11.5 9.6 6.6 9.6 11.5zM1300.2 308c0 3.9-4.3 9.1-7.6 9.1s-7.6-5.2-7.6-9.1 4.3-9.1 7.6-9.1 7.6 5.2 7.6 9.1zM1298.2 308c0 2.9-3.2 6.7-5.6 6.7s-5.6-3.8-5.6-6.7 3.2-6.7 5.6-6.7 5.6 3.8 5.6 6.7zM1296.2 308c0 1.9-2.1 4.4-3.6 4.4s-3.6-2.5-3.6-4.4 2.1-4.4 3.6-4.4 3.6 2.5 3.6 4.4zM1294.5 308c0 1-1.1 2.3-1.9 2.3s-1.9-1.3-1.9-2.3 1.1-2.3 1.9-2.3 1.9 1.3 1.9 2.3z"/>
<path d="M1419.9 328.3c0 4.6-4.9 10.6-8.7 10.6s-8.7-6-8.7-10.6 4.9-10.6 8.7-10.6 8.7 6 8.7 10.6zM1418.1 328.3c0 3.6-3.9 8.4-6.9 8.4s-6.9-4.8-6.9-8.4 3.9-8.4 6.9-8.4 6.9 4.8 6.9 8.4zM1416.3 328.3c0 2.6-2.9 6.1-5 6.1s-5-3.5-5-6.1 2.9-6.1 5-6.1 5 3.5 5 6.1zM1414.6 328.3c0 1.7-1.9 4-3.3 4s-3.3-2.3-3.3-4 1.9-4 3.3-4 3.3 2.3 3.3 4zM1413 328.3c0 .9-1 2.1-1.7 2.1s-1.7-1.2-1.7-2.1 1-2.1 1.7-2.1 1.7 1.2 1.7 2.1z"/>
<path d="M1403.5 192.3c0 3.9-4.5 9-8 9s-8-5.1-8-9 4.5-9 8-9 8 5.1 8 9zM1401.8 192.3c0 3-3.6 7.1-6.3 7.1s-6.3-4-6.3-7.1 3.6-7.1 6.3-7.1 6.3 4 6.3 7.1zM1400.1 192.3c0 2.2-2.6 5.2-4.6 5.2s-4.6-3-4.6-5.2 2.6-5.2 4.6-5.2 4.6 3 4.6 5.2zM1398.5 192.3c0 1.5-1.7 3.4-3 3.4s-3-1.9-3-3.4 1.7-3.4 3-3.4 3 1.9 3 3.4zM1397.1 192.3c0 .8-.9 1.8-1.6 1.8s-1.6-1-1.6-1.8 .9-1.8 1.6-1.8 1.6 1 1.6 1.8z"/>
<path d="M1475 227.3c0 4.5-4.9 10.6-8.7 10.6s-8.7-6-8.7-10.6 4.9-10.6 8.7-10.6 8.7 6 8.7 10.6zM1473.2 227.3c0 3.6-3.9 8.4-6.8 8.4s-6.8-4.8-6.8-8.4 3.9-8.4 6.8-8.4 6.8 4.8 6.8 8.4zM1471.4 227.3c0 2.6-2.9 6.1-5 6.1s-5-3.5-5-6.1 2.9-6.1 5-6.1 5 3.5 5 6.1zM1469.6 227.3c0 1.7-1.9 4-3.3 4s-3.3-2.3-3.3-4 1.9-4 3.3-4 3.3 2.3 3.3 4zM1468.1 227.3c0 .9-1 2.1-1.7 2.1s-1.7-1.2-1.7-2.1 1-2.1 1.7-2.1 1.7 1.2 1.7 2.1z"/>
<path d="M1539.3 261.6c0 4.8-5.2 11.1-9 11.1s-9-6.3-9-11.1 5.2-11.1 9-11.1 9 6.3 9 11.1zM1537.4 261.6c0 3.8-4.1 8.7-7.1 8.7s-7.1-5-7.1-8.7 4.1-8.7 7.1-8.7 7.1 5 7.1 8.7zM1535.5 261.6c0 2.8-3 6.4-5.2 6.4s-5.2-3.7-5.2-6.4 3-6.4 5.2-6.4 5.2 3.7 5.2 6.4zM1533.7 261.6c0 1.8-2 4.2-3.4 4.2s-3.4-2.4-3.4-4.2 2-4.2 3.4-4.2 3.4 2.4 3.4 4.2zM1532.1 261.6c0 1-1 2.2-1.8 2.2s-1.8-1.3-1.8-2.2 1-2.2 1.8-2.2 1.8 1.3 1.8 2.2z"/>
<path d="M1586.2 294c0 4.4-5 10.2-8.8 10.2s-8.8-5.8-8.8-10.2 5-10.2 8.8-10.2 8.8 5.8 8.8 10.2zM1584.4 294c0 3.5-4 8.1-6.9 8.1s-6.9-4.6-6.9-8.1 4-8.1 6.9-8.1 6.9 4.6 6.9 8.1zM1582.5 294c0 2.6-2.9 5.9-5.1 5.9s-5.1-3.4-5.1-5.9 2.9-5.9 5.1-5.9 5.1 3.4 5.1 5.9zM1580.8 294c0 1.7-1.9 3.9-3.3 3.9s-3.3-2.2-3.3-3.9 1.9-3.9 3.3-3.9 3.3 2.2 3.3 3.9zM1579.2 294c0 .9-1 2-1.8 2s-1.8-1.2-1.8-2 1-2 1.8-2 1.8 1.2 1.8 2z"/>
<path d="M1544.6 311.3c0 4.8-5.2 11.1-9.1 11.1s-9.1-6.3-9.1-11.1 5.2-11.1 9.1-11.1 9.1 6.3 9.1 11.1zM1542.7 311.3c0 3.8-4.1 8.7-7.2 8.7s-7.2-5-7.2-8.7 4.1-8.7 7.2-8.7 7.2 5 7.2 8.7zM1540.8 311.3c0 2.8-3 6.4-5.3 6.4s-5.3-3.7-5.3-6.4 3-6.4 5.3-6.4 5.3 3.7 5.3 6.4zM1539 311.3c0 1.8-2 4.2-3.4 4.2s-3.4-2.4-3.4-4.2 2-4.2 3.4-4.2 3.4 2.4 3.4 4.2zM1537.3 311.3c0 1-1 2.2-1.8 2.2s-1.8-1.3-1.8-2.2 1-2.2 1.8-2.2 1.8 1.3 1.8 2.2z"/>
<path d="M1478.8 340.7c0 4.3-5.1 10-9 10s-9-5.7-9-10 5.1-10 9-10 9 5.7 9 10zM1475.9 340.7c0 2.9-3.5 6.8-6.1 6.8s-6.1-3.9-6.1-6.8 3.5-6.8 6.1-6.8 6.1 3.9 6.1 6.8zM1473.2 340.7c0 1.6-1.9 3.8-3.4 3.8s-3.4-2.2-3.4-3.8 1.9-3.8 3.4-3.8 3.4 2.2 3.4 3.8z" stroke-opacity=".8"/>
<path d="M1369.1 499c0 4.1-4.9 9.6-8.6 9.6s-8.6-5.5-8.6-9.6 4.9-9.6 8.6-9.6 8.6 5.5 8.6 9.6zM1366.4 499c0 2.8-3.3 6.5-5.9 6.5s-5.9-3.7-5.9-6.5 3.3-6.5 5.9-6.5 5.9 3.7 5.9 6.5zM1363.8 499c0 1.6-1.9 3.6-3.3 3.6s-3.3-2.1-3.3-3.6 1.9-3.6 3.3-3.6 3.3 2.1 3.3 3.6z" stroke-opacity=".8"/>
<path d="M1452.6 344.8c0 4.6-5 10.7-8.7 10.7s-8.7-6.1-8.7-10.7 5-10.7 8.7-10.7 8.7 6.1 8.7 10.7zM1450.8 344.8c0 3.6-3.9 8.4-6.9 8.4s-6.9-4.8-6.9-8.4 3.9-8.4 6.9-8.4 6.9 4.8 6.9 8.4zM1449 344.8c0 2.7-2.9 6.2-5.1 6.2s-5.1-3.5-5.1-6.2 2.9-6.2 5.1-6.2 5.1 3.5 5.1 6.2zM1447.2 344.8c0 1.7-1.9 4-3.3 4s-3.3-2.3-3.3-4 1.9-4 3.3-4 3.3 2.3 3.3 4zM1445.7 344.8c0 .9-1 2.1-1.7 2.1s-1.7-1.2-1.7-2.1 1-2.1 1.7-2.1 1.7 1.2 1.7 2.1z"/>
<path d="M1163.2 385.5c0 4.7-5.1 11-9 11s-9-6.3-9-11 5.1-11 9-11 9 6.3 9 11zM1161.3 385.5c0 3.7-4 8.7-7.1 8.7s-7.1-4.9-7.1-8.7 4-8.7 7.1-8.7 7.1 4.9 7.1 8.7zM1159.4 385.5c0 2.7-3 6.4-5.2 6.4s-5.2-3.6-5.2-6.4 3-6.4 5.2-6.4 5.2 3.6 5.2 6.4zM1157.6 385.5c0 1.8-1.9 4.2-3.4 4.2s-3.4-2.4-3.4-4.2 1.9-4.2 3.4-4.2 3.4 2.4 3.4 4.2zM1156 385.5c0 .9-1 2.2-1.8 2.2s-1.8-1.3-1.8-2.2 1-2.2 1.8-2.2 1.8 1.3 1.8 2.2z"/>
<path d="M1180.4 394.4c0 4.4-5.2 10.2-9.1 10.2s-9.1-5.8-9.1-10.2 5.2-10.2 9.1-10.2 9.1 5.8 9.1 10.2zM1178.5 394.4c0 3.5-4.1 8-7.2 8s-7.2-4.6-7.2-8 4.1-8 7.2-8 7.2 4.6 7.2 8zM1176.6 394.4c0 2.5-3 5.9-5.3 5.9s-5.3-3.4-5.3-5.9 3-5.9 5.3-5.9 5.3 3.4 5.3 5.9zM1174.8 394.4c0 1.7-2 3.9-3.5 3.9s-3.5-2.2-3.5-3.9 2-3.9 3.5-3.9 3.5 2.2 3.5 3.9zM1173.1 394.4c0 .9-1 2-1.8 2s-1.8-1.2-1.8-2 1-2 1.8-2 1.8 1.2 1.8 2z"/>
<path d="M1184.4 422.8c0 4.4-5.2 10.1-9.1 10.1s-9.1-5.8-9.1-10.1 5.2-10.1 9.1-10.1 9.1 5.8 9.1 10.1zM1182.5 422.8c0 3.4-4.1 8-7.2 8s-7.2-4.6-7.2-8 4.1-8 7.2-8 7.2 4.6 7.2 8zM1180.6 422.8c0 2.5-3 5.9-5.3 5.9s-5.3-3.3-5.3-5.9 3-5.9 5.3-5.9 5.3 3.3 5.3 5.9zM1178.7 422.8c0 1.7-2 3.8-3.5 3.8s-3.5-2.2-3.5-3.8 2-3.8 3.5-3.8 3.5 2.2 3.5 3.8zM1177.1 422.8c0 .9-1 2-1.8 2s-1.8-1.2-1.8-2 1-2 1.8-2 1.8 1.2 1.8 2z"/>
<path d="M1237.1 435.8c0 4.6-5 10.7-8.8 10.7s-8.8-6.1-8.8-10.7 5-10.7 8.8-10.7 8.8 6.1 8.8 10.7zM1235.3 435.8c0 3.6-4 8.5-6.9 8.5s-6.9-4.8-6.9-8.5 4-8.5 6.9-8.5 6.9 4.8 6.9 8.5zM1233.4 435.8c0 2.7-2.9 6.2-5.1 6.2s-5.1-3.6-5.1-6.2 2.9-6.2 5.1-6.2 5.1 3.6 5.1 6.2zM1231.7 435.8c0 1.8-1.9 4.1-3.3 4.1s-3.3-2.3-3.3-4.1 1.9-4.1 3.3-4.1 3.3 2.3 3.3 4.1zM1230.1 435.8c0 .9-1 2.1-1.8 2.1s-1.8-1.2-1.8-2.1 1-2.1 1.8-2.1 1.8 1.2 1.8 2.1z"/>
<path d="M1302.8 358.2c0 4.1-4.9 9.6-8.7 9.6s-8.7-5.5-8.7-9.6 4.9-9.6 8.7-9.6 8.7 5.5 8.7 9.6zM1301 358.2c0 3.3-3.9 7.6-6.8 7.6s-6.8-4.3-6.8-7.6 3.9-7.6 6.8-7.6 6.8 4.3 6.8 7.6zM1299.2 358.2c0 2.4-2.9 5.6-5 5.6s-5-3.2-5-5.6 2.9-5.6 5-5.6 5 3.2 5 5.6zM1297.4 358.2c0 1.6-1.9 3.7-3.3 3.7s-3.3-2.1-3.3-3.7 1.9-3.7 3.3-3.7 3.3 2.1 3.3 3.7zM1295.9 358.2c0 .8-1 1.9-1.7 1.9s-1.7-1.1-1.7-1.9 1-1.9 1.7-1.9 1.7 1.1 1.7 1.9z"/>
<path d="M1337.9 351.2c0 4.6-5.5 10.6-9.6 10.6s-9.6-6-9.6-10.6 5.5-10.6 9.6-10.6 9.6 6 9.6 10.6zM1335.9 351.2c0 3.6-4.3 8.4-7.6 8.4s-7.6-4.8-7.6-8.4 4.3-8.4 7.6-8.4 7.6 4.8 7.6 8.4zM1333.9 351.2c0 2.6-3.2 6.2-5.6 6.2s-5.6-3.5-5.6-6.2 3.2-6.2 5.6-6.2 5.6 3.5 5.6 6.2zM1331.9 351.2c0 1.7-2.1 4-3.7 4s-3.7-2.3-3.7-4 2.1-4 3.7-4 3.7 2.3 3.7 4zM1330.2 351.2c0 .9-1.1 2.1-1.9 2.1s-1.9-1.2-1.9-2.1 1.1-2.1 1.9-2.1 1.9 1.2 1.9 2.1z"/>
<path d="M1325.7 381c0 4.3-5.1 10-9 10s-9-5.7-9-10 5.1-10 9-10 9 5.7 9 10zM1323.8 381c0 3.4-4 7.9-7.1 7.9s-7.1-4.5-7.1-7.9 4-7.9 7.1-7.9 7.1 4.5 7.1 7.9zM1321.9 381c0 2.5-3 5.8-5.2 5.8s-5.2-3.3-5.2-5.8 3-5.8 5.2-5.8 5.2 3.3 5.2 5.8zM1320.1 381c0 1.6-1.9 3.8-3.4 3.8s-3.4-2.2-3.4-3.8 1.9-3.8 3.4-3.8 3.4 2.2 3.4 3.8zM1318.5 381c0 .9-1 2-1.8 2s-1.8-1.1-1.8-2 1-2 1.8-2 1.8 1.1 1.8 2z"/>
<path d="M1405 348.6c0 4.7-5.1 11-9 11s-9-6.3-9-11 5.1-11 9-11 9 6.3 9 11zM1403.1 348.6c0 3.7-4.1 8.7-7.1 8.7s-7.1-5-7.1-8.7 4.1-8.7 7.1-8.7 7.1 5 7.1 8.7zM1401.2 348.6c0 2.7-3 6.4-5.2 6.4s-5.2-3.6-5.2-6.4 3-6.4 5.2-6.4 5.2 3.6 5.2 6.4zM1399.4 348.6c0 1.8-2 4.2-3.4 4.2s-3.4-2.4-3.4-4.2 2-4.2 3.4-4.2 3.4 2.4 3.4 4.2zM1397.8 348.6c0 .9-1 2.2-1.8 2.2s-1.8-1.3-1.8-2.2 1-2.2 1.8-2.2 1.8 1.3 1.8 2.2z"/>
<path d="M1379.2 385.3c0 4.7-5.4 10.9-9.4 10.9s-9.4-6.2-9.4-10.9 5.4-10.9 9.4-10.9 9.4 6.2 9.4 10.9zM1377.3 385.3c0 3.7-4.2 8.6-7.4 8.6s-7.4-4.9-7.4-8.6 4.2-8.6 7.4-8.6 7.4 4.9 7.4 8.6zM1375.3 385.3c0 2.7-3.1 6.3-5.5 6.3s-5.5-3.6-5.5-6.3 3.1-6.3 5.5-6.3 5.5 3.6 5.5 6.3zM1373.4 385.3c0 1.8-2 4.1-3.6 4.1s-3.6-2.4-3.6-4.1 2-4.1 3.6-4.1 3.6 2.4 3.6 4.1zM1371.7 385.3c0 .9-1.1 2.2-1.9 2.2s-1.9-1.2-1.9-2.2 1.1-2.2 1.9-2.2 1.9 1.2 1.9 2.2z"/>
<path d="M1276.9 415.3c0 4.2-4.5 9.8-7.9 9.8s-7.9-5.6-7.9-9.8 4.5-9.8 7.9-9.8 7.9 5.6 7.9 9.8zM1275.2 415.3c0 3.3-3.5 7.8-6.2 7.8s-6.2-4.4-6.2-7.8 3.5-7.8 6.2-7.8 6.2 4.4 6.2 7.8zM1273.6 415.3c0 2.5-2.6 5.7-4.6 5.7s-4.6-3.2-4.6-5.7 2.6-5.7 4.6-5.7 4.6 3.2 4.6 5.7zM1272 415.3c0 1.6-1.7 3.7-3 3.7s-3-2.1-3-3.7 1.7-3.7 3-3.7 3 2.1 3 3.7zM1270.6 415.3c0 .8-.9 2-1.6 2s-1.6-1.1-1.6-2 .9-2 1.6-2 1.6 1.1 1.6 2z"/>
<path d="M1290.7 418.2c0 4.2-4.8 9.9-8.4 9.9s-8.4-5.6-8.4-9.9 4.8-9.9 8.4-9.9 8.4 5.6 8.4 9.9zM1288.9 418.2c0 3.4-3.8 7.8-6.6 7.8s-6.6-4.4-6.6-7.8 3.8-7.8 6.6-7.8 6.6 4.4 6.6 7.8zM1287.2 418.2c0 2.5-2.8 5.7-4.9 5.7s-4.9-3.3-4.9-5.7 2.8-5.7 4.9-5.7 4.9 3.3 4.9 5.7zM1285.5 418.2c0 1.6-1.8 3.7-3.2 3.7s-3.2-2.1-3.2-3.7 1.8-3.7 3.2-3.7 3.2 2.1 3.2 3.7zM1284 418.2c0 .8-1 2-1.7 2s-1.7-1.1-1.7-2 1-2 1.7-2 1.7 1.1 1.7 2z"/>
<path d="M1337.5 412c0 4.3-5.1 10-9 10s-9-5.7-9-10 5.1-10 9-10 9 5.7 9 10zM1335.6 412c0 3.4-4.1 7.9-7.1 7.9s-7.1-4.5-7.1-7.9 4.1-7.9 7.1-7.9 7.1 4.5 7.1 7.9zM1333.7 412c0 2.5-3 5.8-5.2 5.8s-5.2-3.3-5.2-5.8 3-5.8 5.2-5.8 5.2 3.3 5.2 5.8zM1331.9 412c0 1.6-2 3.8-3.4 3.8s-3.4-2.2-3.4-3.8 2-3.8 3.4-3.8 3.4 2.2 3.4 3.8zM1330.3 412c0 .9-1 2-1.8 2s-1.8-1.1-1.8-2 1-2 1.8-2 1.8 1.1 1.8 2z"/>
<path d="M1355.6 407c0 4.2-5 9.8-8.8 9.8s-8.8-5.6-8.8-9.8 5-9.8 8.8-9.8 8.8 5.6 8.8 9.8zM1353.7 407c0 3.3-4 7.8-7 7.8s-7-4.4-7-7.8 4-7.8 7-7.8 7 4.4 7 7.8zM1351.9 407c0 2.4-2.9 5.7-5.1 5.7s-5.1-3.2-5.1-5.7 2.9-5.7 5.1-5.7 5.1 3.2 5.1 5.7zM1350.1 407c0 1.6-1.9 3.7-3.4 3.7s-3.4-2.1-3.4-3.7 1.9-3.7 3.4-3.7 3.4 2.1 3.4 3.7zM1348.5 407c0 .8-1 2-1.8 2s-1.8-1.1-1.8-2 1-2 1.8-2 1.8 1.1 1.8 2z"/>
<path d="M1289.1 460.6c0 4.7-5.1 11-9 11s-9-6.3-9-11 5.1-11 9-11 9 6.3 9 11zM1287.2 460.6c0 3.7-4.1 8.7-7.1 8.7s-7.1-5-7.1-8.7 4.1-8.7 7.1-8.7 7.1 5 7.1 8.7zM1285.3 460.6c0 2.7-3 6.4-5.2 6.4s-5.2-3.6-5.2-6.4 3-6.4 5.2-6.4 5.2 3.6 5.2 6.4zM1283.5 460.6c0 1.8-2 4.2-3.4 4.2s-3.4-2.4-3.4-4.2 2-4.2 3.4-4.2 3.4 2.4 3.4 4.2zM1281.9 460.6c0 .9-1 2.2-1.8 2.2s-1.8-1.3-1.8-2.2 1-2.2 1.8-2.2 1.8 1.3 1.8 2.2z"/>
<path d="M1265.7 481.6c0 4.3-5.1 10-9 10s-9-5.7-9-10 5.1-10 9-10 9 5.7 9 10zM1263.8 481.6c0 3.4-4.1 7.9-7.1 7.9s-7.1-4.5-7.1-7.9 4.1-7.9 7.1-7.9 7.1 4.5 7.1 7.9zM1261.9 481.6c0 2.5-3 5.8-5.2 5.8s-5.2-3.3-5.2-5.8 3-5.8 5.2-5.8 5.2 3.3 5.2 5.8zM1260.1 481.6c0 1.6-2 3.8-3.4 3.8s-3.4-2.2-3.4-3.8 2-3.8 3.4-3.8 3.4 2.2 3.4 3.8zM1258.5 481.6c0 .9-1 2-1.8 2s-1.8-1.1-1.8-2 1-2 1.8-2 1.8 1.1 1.8 2z"/>
<path d="M1338.7 455.1c0 5.9-7.2 13.6-12.6 13.6s-12.6-7.8-12.6-13.6 7.2-13.6 12.6-13.6 12.6 7.8 12.6 13.6zM1336 455.1c0 4.6-5.7 10.8-10 10.8s-10-6.1-10-10.8 5.7-10.8 10-10.8 10 6.1 10 10.8zM1333.3 455.1c0 3.4-4.2 7.9-7.3 7.9s-7.3-4.5-7.3-7.9 4.2-7.9 7.3-7.9 7.3 4.5 7.3 7.9zM1330.8 455.1c0 2.2-2.7 5.2-4.8 5.2s-4.8-2.9-4.8-5.2 2.7-5.2 4.8-5.2 4.8 2.9 4.8 5.2zM1328.5 455.1c0 1.2-1.4 2.7-2.5 2.7s-2.5-1.6-2.5-2.7 1.4-2.7 2.5-2.7 2.5 1.6 2.5 2.7z"/>
<path d="M1384.2 469.4c0 4.3-5.2 10.1-9.1 10.1s-9.1-5.8-9.1-10.1 5.2-10.1 9.1-10.1 9.1 5.8 9.1 10.1zM1382.3 469.4c0 3.4-4.1 8-7.2 8s-7.2-4.6-7.2-8 4.1-8 7.2-8 7.2 4.6 7.2 8zM1380.4 469.4c0 2.5-3 5.9-5.3 5.9s-5.3-3.3-5.3-5.9 3-5.9 5.3-5.9 5.3 3.3 5.3 5.9zM1378.6 469.4c0 1.7-2 3.8-3.5 3.8s-3.5-2.2-3.5-3.8 2-3.8 3.5-3.8 3.5 2.2 3.5 3.8zM1376.9 469.4c0 .9-1 2-1.8 2s-1.8-1.2-1.8-2 1-2 1.8-2 1.8 1.2 1.8 2z"/>
<path d="M1356.7 456.8c0 4.4-5.2 10.1-9.1 10.1s-9.1-5.8-9.1-10.1 5.2-10.1 9.1-10.1 9.1 5.8 9.1 10.1zM1354.7 456.8c0 3.4-4.1 8-7.2 8s-7.2-4.6-7.2-8 4.1-8 7.2-8 7.2 4.6 7.2 8zM1352.8 456.8c0 2.5-3 5.9-5.3 5.9s-5.3-3.3-5.3-5.9 3-5.9 5.3-5.9 5.3 3.3 5.3 5.9zM1351 456.8c0 1.7-2 3.8-3.5 3.8s-3.5-2.2-3.5-3.8 2-3.8 3.5-3.8 3.5 2.2 3.5 3.8zM1349.4 456.8c0 .9-1 2-1.8 2s-1.8-1.2-1.8-2 1-2 1.8-2 1.8 1.2 1.8 2z"/>
<path d="M1407.6 410.2c0 5.1-5.6 11.8-9.8 11.8s-9.8-6.7-9.8-11.8 5.6-11.8 9.8-11.8 9.8 6.7 9.8 11.8zM1405.5 410.2c0 4-4.4 9.3-7.7 9.3s-7.7-5.3-7.7-9.3 4.4-9.3 7.7-9.3 7.7 5.3 7.7 9.3zM1403.5 410.2c0 2.9-3.2 6.8-5.7 6.8s-5.7-3.9-5.7-6.8 3.2-6.8 5.7-6.8 5.7 3.9 5.7 6.8zM1401.5 410.2c0 1.9-2.1 4.5-3.7 4.5s-3.7-2.5-3.7-4.5 2.1-4.5 3.7-4.5 3.7 2.5 3.7 4.5zM1399.7 410.2c0 1-1.1 2.4-2 2.4s-2-1.3-2-2.4 1.1-2.4 2-2.4 2 1.3 2 2.4z"/>
<path d="M1419.2 412.3c0 5.2-5.8 12.2-10.2 12.2s-10.2-6.9-10.2-12.2 5.8-12.2 10.2-12.2 10.2 6.9 10.2 12.2zM1417.1 412.3c0 4.1-4.6 9.6-8 9.6s-8-5.5-8-9.6 4.6-9.6 8-9.6 8 5.5 8 9.6zM1415 412.3c0 3-3.4 7.1-5.9 7.1s-5.9-4-5.9-7.1 3.4-7.1 5.9-7.1 5.9 4 5.9 7.1zM1412.9 412.3c0 2-2.2 4.6-3.9 4.6s-3.9-2.6-3.9-4.6 2.2-4.6 3.9-4.6 3.9 2.6 3.9 4.6zM1411.1 412.3c0 1-1.2 2.4-2 2.4s-2-1.4-2-2.4 1.2-2.4 2-2.4 2 1.4 2 2.4z"/>
<path d="M1439.9 453.7c0 4.6-4.9 10.6-8.7 10.6s-8.7-6-8.7-10.6 4.9-10.6 8.7-10.6 8.7 6 8.7 10.6zM1438.1 453.7c0 3.6-3.9 8.4-6.9 8.4s-6.9-4.8-6.9-8.4 3.9-8.4 6.9-8.4 6.9 4.8 6.9 8.4zM1436.3 453.7c0 2.6-2.9 6.2-5 6.2s-5-3.5-5-6.2 2.9-6.2 5-6.2 5 3.5 5 6.2zM1434.5 453.7c0 1.7-1.9 4-3.3 4s-3.3-2.3-3.3-4 1.9-4 3.3-4 3.3 2.3 3.3 4zM1433 453.7c0 .9-1 2.1-1.7 2.1s-1.7-1.2-1.7-2.1 1-2.1 1.7-2.1 1.7 1.2 1.7 2.1z"/>
<path d="M1425.8 470.3c0 5-5 11.7-8.8 11.7s-8.8-6.7-8.8-11.7 5-11.7 8.8-11.7 8.8 6.7 8.8 11.7zM1423.9 470.3c0 4-3.9 9.2-6.9 9.2s-6.9-5.3-6.9-9.2 3.9-9.2 6.9-9.2 6.9 5.3 6.9 9.2zM1422.1 470.3c0 2.9-2.9 6.8-5.1 6.8s-5.1-3.9-5.1-6.8 2.9-6.8 5.1-6.8 5.1 3.9 5.1 6.8zM1420.3 470.3c0 1.9-1.9 4.4-3.3 4.4s-3.3-2.5-3.3-4.4 1.9-4.4 3.3-4.4 3.3 2.5 3.3 4.4zM1418.8 470.3c0 1-1 2.3-1.8 2.3s-1.8-1.3-1.8-2.3 1-2.3 1.8-2.3 1.8 1.3 1.8 2.3z"/>
<path d="M1279.7 498.5c0 4.7-5.1 11-9 11s-9-6.2-9-11 5.1-11 9-11 9 6.2 9 11zM1277.8 498.5c0 3.7-4 8.7-7.1 8.7s-7.1-4.9-7.1-8.7 4-8.7 7.1-8.7 7.1 4.9 7.1 8.7zM1276 498.5c0 2.7-3 6.4-5.2 6.4s-5.2-3.6-5.2-6.4 3-6.4 5.2-6.4 5.2 3.6 5.2 6.4zM1274.2 498.5c0 1.8-1.9 4.2-3.4 4.2s-3.4-2.4-3.4-4.2 1.9-4.2 3.4-4.2 3.4 2.4 3.4 4.2zM1272.5 498.5c0 .9-1 2.2-1.8 2.2s-1.8-1.2-1.8-2.2 1-2.2 1.8-2.2 1.8 1.2 1.8 2.2z"/>
<path d="M1292.6 514.1c0 4.4-5 10.2-8.7 10.2s-8.7-5.8-8.7-10.2 5-10.2 8.7-10.2 8.7 5.8 8.7 10.2zM1290.7 514.1c0 3.5-3.9 8.1-6.9 8.1s-6.9-4.6-6.9-8.1 3.9-8.1 6.9-8.1 6.9 4.6 6.9 8.1zM1288.9 514.1c0 2.5-2.9 5.9-5.1 5.9s-5.1-3.4-5.1-5.9 2.9-5.9 5.1-5.9 5.1 3.4 5.1 5.9zM1287.1 514.1c0 1.7-1.9 3.9-3.3 3.9s-3.3-2.2-3.3-3.9 1.9-3.9 3.3-3.9 3.3 2.2 3.3 3.9zM1285.6 514.1c0 .9-1 2-1.7 2s-1.7-1.2-1.7-2 1-2 1.7-2 1.7 1.2 1.7 2z"/>
<path d="M1317.8 533.3c0 4.5-5.7 10.4-9.9 10.4s-9.9-5.9-9.9-10.4 5.7-10.4 9.9-10.4 9.9 5.9 9.9 10.4zM1315.7 533.3c0 3.5-4.5 8.2-7.8 8.2s-7.8-4.7-7.8-8.2 4.5-8.2 7.8-8.2 7.8 4.7 7.8 8.2zM1313.6 533.3c0 2.6-3.3 6-5.8 6s-5.8-3.4-5.8-6 3.3-6 5.8-6 5.8 3.4 5.8 6zM1311.6 533.3c0 1.7-2.1 4-3.8 4s-3.8-2.3-3.8-4 2.1-4 3.8-4 3.8 2.3 3.8 4zM1309.8 533.3c0 .9-1.1 2.1-2 2.1s-2-1.2-2-2.1 1.1-2.1 2-2.1 2 1.2 2 2.1z"/>
<path d="M1446.8 492.4c0 4.7-4.5 10.9-8 10.9s-8-6.2-8-10.9 4.5-10.9 8-10.9 8 6.2 8 10.9zM1445.1 492.4c0 3.7-3.6 8.6-6.3 8.6s-6.3-4.9-6.3-8.6 3.6-8.6 6.3-8.6 6.3 4.9 6.3 8.6zM1443.4 492.4c0 2.7-2.6 6.3-4.6 6.3s-4.6-3.6-4.6-6.3 2.6-6.3 4.6-6.3 4.6 3.6 4.6 6.3zM1441.8 492.4c0 1.8-1.7 4.2-3 4.2s-3-2.4-3-4.2 1.7-4.2 3-4.2 3 2.4 3 4.2zM1440.4 492.4c0 .9-.9 2.2-1.6 2.2s-1.6-1.2-1.6-2.2 .9-2.2 1.6-2.2 1.6 1.2 1.6 2.2z"/>
<path d="M1511.6 503.2c0 4.6-5.5 10.7-9.7 10.7s-9.7-6.1-9.7-10.7 5.5-10.7 9.7-10.7 9.7 6.1 9.7 10.7zM1509.5 503.2c0 3.6-4.4 8.4-7.7 8.4s-7.7-4.8-7.7-8.4 4.4-8.4 7.7-8.4 7.7 4.8 7.7 8.4zM1507.5 503.2c0 2.7-3.2 6.2-5.6 6.2s-5.6-3.5-5.6-6.2 3.2-6.2 5.6-6.2 5.6 3.5 5.6 6.2zM1505.6 503.2c0 1.7-2.1 4.1-3.7 4.1s-3.7-2.3-3.7-4.1 2.1-4.1 3.7-4.1 3.7 2.3 3.7 4.1zM1503.8 503.2c0 .9-1.1 2.1-1.9 2.1s-1.9-1.2-1.9-2.1 1.1-2.1 1.9-2.1 1.9 1.2 1.9 2.1z"/>
<path d="M1569.2 409.1c0 4.3-4.6 10.1-8.1 10.1s-8.1-5.7-8.1-10.1 4.6-10.1 8.1-10.1 8.1 5.7 8.1 10.1zM1567.5 409.1c0 3.4-3.6 8-6.4 8s-6.4-4.5-6.4-8 3.6-8 6.4-8 6.4 4.5 6.4 8zM1565.8 409.1c0 2.5-2.7 5.8-4.7 5.8s-4.7-3.3-4.7-5.8 2.7-5.8 4.7-5.8 4.7 3.3 4.7 5.8zM1564.2 409.1c0 1.6-1.7 3.8-3.1 3.8s-3.1-2.2-3.1-3.8 1.7-3.8 3.1-3.8 3.1 2.2 3.1 3.8zM1562.7 409.1c0 .9-.9 2-1.6 2s-1.6-1.1-1.6-2 .9-2 1.6-2 1.6 1.1 1.6 2z"/>
<path d="M1449.8 372.5c0 5-4.4 11.6-7.8 11.6s-7.8-6.6-7.8-11.6 4.4-11.6 7.8-11.6 7.8 6.6 7.8 11.6zM1448.2 372.5c0 4-3.5 9.2-6.1 9.2s-6.1-5.2-6.1-9.2 3.5-9.2 6.1-9.2 6.1 5.2 6.1 9.2zM1446.6 372.5c0 2.9-2.6 6.8-4.5 6.8s-4.5-3.8-4.5-6.8 2.6-6.8 4.5-6.8 4.5 3.8 4.5 6.8zM1445 372.5c0 1.9-1.7 4.4-2.9 4.4s-2.9-2.5-2.9-4.4 1.7-4.4 2.9-4.4 2.9 2.5 2.9 4.4zM1443.6 372.5c0 1-.9 2.3-1.6 2.3s-1.6-1.3-1.6-2.3 .9-2.3 1.6-2.3 1.6 1.3 1.6 2.3z"/>
<path d="M1095.7 643.7c0 4.2-5.1 9.9-8.9 9.9s-8.9-5.6-8.9-9.9 5.1-9.9 8.9-9.9 8.9 5.6 8.9 9.9zM1093.8 643.7c0 3.3-4 7.8-7 7.8s-7-4.4-7-7.8 4-7.8 7-7.8 7 4.4 7 7.8zM1092 643.7c0 2.5-2.9 5.7-5.1 5.7s-5.1-3.3-5.1-5.7 2.9-5.7 5.1-5.7 5.1 3.3 5.1 5.7zM1090.2 643.7c0 1.6-1.9 3.7-3.4 3.7s-3.4-2.1-3.4-3.7 1.9-3.7 3.4-3.7 3.4 2.1 3.4 3.7zM1088.6 643.7c0 .8-1 2-1.8 2s-1.8-1.1-1.8-2 1-2 1.8-2 1.8 1.1 1.8 2z"/>
<path d="M1153.7 603.5c0 4.3-5.1 9.9-9 9.9s-9-5.7-9-9.9 5.1-9.9 9-9.9 9 5.7 9 9.9zM1151.9 603.5c0 3.4-4 7.9-7.1 7.9s-7.1-4.5-7.1-7.9 4-7.9 7.1-7.9 7.1 4.5 7.1 7.9zM1150 603.5c0 2.5-3 5.8-5.2 5.8s-5.2-3.3-5.2-5.8 3-5.8 5.2-5.8 5.2 3.3 5.2 5.8zM1148.2 603.5c0 1.6-1.9 3.8-3.4 3.8s-3.4-2.2-3.4-3.8 1.9-3.8 3.4-3.8 3.4 2.2 3.4 3.8zM1146.6 603.5c0 .9-1 2-1.8 2s-1.8-1.1-1.8-2 1-2 1.8-2 1.8 1.1 1.8 2z"/>
<path d="M1195.4 600.8c0 4.3-4.9 10.1-8.6 10.1s-8.6-5.8-8.6-10.1 4.9-10.1 8.6-10.1 8.6 5.8 8.6 10.1zM1193.6 600.8c0 3.4-3.9 8-6.8 8s-6.8-4.5-6.8-8 3.9-8 6.8-8 6.8 4.5 6.8 8zM1191.8 600.8c0 2.5-2.8 5.9-5 5.9s-5-3.3-5-5.9 2.8-5.9 5-5.9 5 3.3 5 5.9zM1190 600.8c0 1.7-1.9 3.8-3.3 3.8s-3.3-2.2-3.3-3.8 1.9-3.8 3.3-3.8 3.3 2.2 3.3 3.8zM1188.5 600.8c0 .9-1 2-1.7 2s-1.7-1.2-1.7-2 1-2 1.7-2 1.7 1.2 1.7 2z"/>
<path d="M1233.6 612.9c0 4.2-5.6 9.8-9.8 9.8s-9.8-5.6-9.8-9.8 5.6-9.8 9.8-9.8 9.8 5.6 9.8 9.8zM1231.5 612.9c0 3.3-4.4 7.8-7.8 7.8s-7.8-4.4-7.8-7.8 4.4-7.8 7.8-7.8 7.8 4.4 7.8 7.8zM1229.5 612.9c0 2.5-3.3 5.7-5.7 5.7s-5.7-3.3-5.7-5.7 3.3-5.7 5.7-5.7 5.7 3.3 5.7 5.7zM1227.5 612.9c0 1.6-2.1 3.7-3.7 3.7s-3.7-2.1-3.7-3.7 2.1-3.7 3.7-3.7 3.7 2.1 3.7 3.7zM1225.7 612.9c0 .8-1.1 2-2 2s-2-1.1-2-2 1.1-2 2-2 2 1.1 2 2z"/>
</g>
<g stroke="#289858">
<path d="M1208.1 296.8c0 4.5-5.3 10.6-9.4 10.6s-9.4-6-9.4-10.6 5.3-10.6 9.4-10.6 9.4 6 9.4 10.6zM1206.1 296.8c0 3.6-4.2 8.3-7.4 8.3s-7.4-4.8-7.4-8.3 4.2-8.3 7.4-8.3 7.4 4.8 7.4 8.3zM1204.1 296.8c0 2.6-3.1 6.1-5.4 6.1s-5.4-3.5-5.4-6.1 3.1-6.1 5.4-6.1 5.4 3.5 5.4 6.1zM1202.3 296.8c0 1.7-2 4-3.6 4s-3.6-2.3-3.6-4 2-4 3.6-4 3.6 2.3 3.6 4zM1200.6 296.8c0 .9-1.1 2.1-1.9 2.1s-1.9-1.2-1.9-2.1 1.1-2.1 1.9-2.1 1.9 1.2 1.9 2.1z"/>
<path d="M1243.3 246c0 5.2-6 12-10.5 12s-10.5-6.9-10.5-12 6-12 10.5-12 10.5 6.9 10.5 12zM1241.1 246c0 4.1-4.7 9.5-8.3 9.5s-8.3-5.4-8.3-9.5 4.7-9.5 8.3-9.5 8.3 5.4 8.3 9.5zM1238.8 246c0 3-3.5 7-6.1 7s-6.1-4-6.1-7 3.5-7 6.1-7 6.1 4 6.1 7zM1236.7 246c0 2-2.3 4.6-4 4.6s-4-2.6-4-4.6 2.3-4.6 4-4.6 4 2.6 4 4.6zM1234.8 246c0 1-1.2 2.4-2.1 2.4s-2.1-1.4-2.1-2.4 1.2-2.4 2.1-2.4 2.1 1.4 2.1 2.4z"/>
<path d="M1296.2 243c0 4.6-5.6 10.7-9.7 10.7s-9.7-6.1-9.7-10.7 5.6-10.7 9.7-10.7 9.7 6.1 9.7 10.7zM1294.2 243c0 3.6-4.4 8.5-7.7 8.5s-7.7-4.8-7.7-8.5 4.4-8.5 7.7-8.5 7.7 4.8 7.7 8.5zM1292.1 243c0 2.7-3.2 6.2-5.7 6.2s-5.7-3.5-5.7-6.2 3.2-6.2 5.7-6.2 5.7 3.5 5.7 6.2zM1290.2 243c0 1.8-2.1 4.1-3.7 4.1s-3.7-2.3-3.7-4.1 2.1-4.1 3.7-4.1 3.7 2.3 3.7 4.1zM1288.4 243c0 .9-1.1 2.1-1.9 2.1s-1.9-1.2-1.9-2.1 1.1-2.1 1.9-2.1 1.9 1.2 1.9 2.1z"/>
<path d="M1408.4 263.3c0 5-5.6 11.7-9.7 11.7s-9.7-6.7-9.7-11.7 5.6-11.7 9.7-11.7 9.7 6.7 9.7 11.7zM1406.3 263.3c0 4-4.4 9.2-7.7 9.2s-7.7-5.3-7.7-9.2 4.4-9.2 7.7-9.2 7.7 5.3 7.7 9.2zM1404.3 263.3c0 2.9-3.2 6.8-5.7 6.8s-5.7-3.9-5.7-6.8 3.2-6.8 5.7-6.8 5.7 3.9 5.7 6.8zM1402.3 263.3c0 1.9-2.1 4.4-3.7 4.4s-3.7-2.5-3.7-4.4 2.1-4.4 3.7-4.4 3.7 2.5 3.7 4.4zM1400.6 263.3c0 1-1.1 2.3-1.9 2.3s-1.9-1.3-1.9-2.3 1.1-2.3 1.9-2.3 1.9 1.3 1.9 2.3z"/>
<path d="M1324.6 279.6c0 5.1-5.7 11.9-10 11.9s-10-6.8-10-11.9 5.7-11.9 10-11.9 10 6.8 10 11.9zM1322.5 279.6c0 4.1-4.5 9.4-7.9 9.4s-7.9-5.4-7.9-9.4 4.5-9.4 7.9-9.4 7.9 5.4 7.9 9.4zM1320.4 279.6c0 3-3.3 6.9-5.8 6.9s-5.8-3.9-5.8-6.9 3.3-6.9 5.8-6.9 5.8 3.9 5.8 6.9zM1318.4 279.6c0 2-2.2 4.5-3.8 4.5s-3.8-2.6-3.8-4.5 2.2-4.5 3.8-4.5 3.8 2.6 3.8 4.5zM1316.6 279.6c0 1-1.1 2.4-2 2.4s-2-1.4-2-2.4 1.1-2.4 2-2.4 2 1.4 2 2.4z"/>
<path d="M1324.6 297.9c0 5.1-5.6 11.8-9.8 11.8s-9.8-6.7-9.8-11.8 5.6-11.8 9.8-11.8 9.8 6.7 9.8 11.8zM1322.5 297.9c0 4-4.4 9.3-7.8 9.3s-7.8-5.3-7.8-9.3 4.4-9.3 7.8-9.3 7.8 5.3 7.8 9.3zM1320.4 297.9c0 2.9-3.2 6.8-5.7 6.8s-5.7-3.9-5.7-6.8 3.2-6.8 5.7-6.8 5.7 3.9 5.7 6.8zM1318.5 297.9c0 1.9-2.1 4.5-3.7 4.5s-3.7-2.6-3.7-4.5 2.1-4.5 3.7-4.5 3.7 2.6 3.7 4.5zM1316.7 297.9c0 1-1.1 2.4-2 2.4s-2-1.3-2-2.4 1.1-2.4 2-2.4 2 1.3 2 2.4z"/>
<path d="M1302.2 307.7c0 5.1-5.6 11.9-9.9 11.9s-9.9-6.8-9.9-11.9 5.6-11.9 9.9-11.9 9.9 6.8 9.9 11.9zM1300.1 307.7c0 4-4.5 9.4-7.8 9.4s-7.8-5.4-7.8-9.4 4.5-9.4 7.8-9.4 7.8 5.4 7.8 9.4zM1298 307.7c0 3-3.3 6.9-5.7 6.9s-5.7-3.9-5.7-6.9 3.3-6.9 5.7-6.9 5.7 3.9 5.7 6.9zM1296 307.7c0 1.9-2.1 4.5-3.8 4.5s-3.8-2.6-3.8-4.5 2.1-4.5 3.8-4.5 3.8 2.6 3.8 4.5zM1294.2 307.7c0 1-1.1 2.4-2 2.4s-2-1.4-2-2.4 1.1-2.4 2-2.4 2 1.4 2 2.4z"/>
<path d="M1417.6 330.2c0 4.6-5 10.8-8.8 10.8s-8.8-6.2-8.8-10.8 5-10.8 8.8-10.8 8.8 6.2 8.8 10.8zM1415.7 330.2c0 3.7-4 8.5-7 8.5s-7-4.9-7-8.5 4-8.5 7-8.5 7 4.9 7 8.5zM1413.9 330.2c0 2.7-2.9 6.3-5.1 6.3s-5.1-3.6-5.1-6.3 2.9-6.3 5.1-6.3 5.1 3.6 5.1 6.3zM1412.1 330.2c0 1.8-1.9 4.1-3.4 4.1s-3.4-2.3-3.4-4.1 1.9-4.1 3.4-4.1 3.4 2.3 3.4 4.1zM1410.5 330.2c0 .9-1 2.2-1.8 2.2s-1.8-1.2-1.8-2.2 1-2.2 1.8-2.2 1.8 1.2 1.8 2.2z"/>
<path d="M1404.3 193.3c0 3.9-4.6 9.1-8.1 9.1s-8.1-5.2-8.1-9.1 4.6-9.1 8.1-9.1 8.1 5.2 8.1 9.1zM1402.6 193.3c0 3.1-3.7 7.2-6.4 7.2s-6.4-4.1-6.4-7.2 3.7-7.2 6.4-7.2 6.4 4.1 6.4 7.2zM1400.9 193.3c0 2.3-2.7 5.3-4.7 5.3s-4.7-3-4.7-5.3 2.7-5.3 4.7-5.3 4.7 3 4.7 5.3zM1399.2 193.3c0 1.5-1.8 3.5-3.1 3.5s-3.1-2-3.1-3.5 1.8-3.5 3.1-3.5 3.1 2 3.1 3.5zM1397.8 193.3c0 .8-.9 1.8-1.6 1.8s-1.6-1-1.6-1.8 .9-1.8 1.6-1.8 1.6 1 1.6 1.8z"/>
<path d="M1475.8 228.7c0 4.8-5.2 11.1-9.1 11.1s-9.1-6.3-9.1-11.1 5.2-11.1 9.1-11.1 9.1 6.3 9.1 11.1zM1473.9 228.7c0 3.8-4.1 8.7-7.2 8.7s-7.2-5-7.2-8.7 4.1-8.7 7.2-8.7 7.2 5 7.2 8.7zM1472 228.7c0 2.8-3 6.4-5.3 6.4s-5.3-3.7-5.3-6.4 3-6.4 5.3-6.4 5.3 3.7 5.3 6.4zM1470.2 228.7c0 1.8-2 4.2-3.4 4.2s-3.4-2.4-3.4-4.2 2-4.2 3.4-4.2 3.4 2.4 3.4 4.2zM1468.6 228.7c0 1-1 2.2-1.8 2.2s-1.8-1.3-1.8-2.2 1-2.2 1.8-2.2 1.8 1.3 1.8 2.2z"/>
<path d="M1539.2 260.4c0 4.7-5.1 10.9-9 10.9s-9-6.2-9-10.9 5.1-10.9 9-10.9 9 6.2 9 10.9zM1537.3 260.4c0 3.7-4 8.6-7.1 8.6s-7.1-4.9-7.1-8.6 4-8.6 7.1-8.6 7.1 4.9 7.1 8.6zM1535.4 260.4c0 2.7-3 6.3-5.2 6.3s-5.2-3.6-5.2-6.3 3-6.3 5.2-6.3 5.2 3.6 5.2 6.3zM1533.6 260.4c0 1.8-1.9 4.2-3.4 4.2s-3.4-2.4-3.4-4.2 1.9-4.2 3.4-4.2 3.4 2.4 3.4 4.2zM1532 260.4c0 .9-1 2.2-1.8 2.2s-1.8-1.2-1.8-2.2 1-2.2 1.8-2.2 1.8 1.2 1.8 2.2z"/>
<path d="M1585.8 294.8c0 4.6-5.3 10.8-9.2 10.8s-9.2-6.1-9.2-10.8 5.3-10.8 9.2-10.8 9.2 6.1 9.2 10.8zM1583.9 294.8c0 3.7-4.2 8.5-7.3 8.5s-7.3-4.9-7.3-8.5 4.2-8.5 7.3-8.5 7.3 4.9 7.3 8.5zM1582 294.8c0 2.7-3.1 6.3-5.4 6.3s-5.4-3.6-5.4-6.3 3.1-6.3 5.4-6.3 5.4 3.6 5.4 6.3zM1580.1 294.8c0 1.8-2 4.1-3.5 4.1s-3.5-2.3-3.5-4.1 2-4.1 3.5-4.1 3.5 2.3 3.5 4.1zM1578.4 294.8c0 .9-1.1 2.2-1.8 2.2s-1.8-1.2-1.8-2.2 1.1-2.2 1.8-2.2 1.8 1.2 1.8 2.2z"/>
<path d="M1544.2 312.7c0 4.7-5.1 10.9-8.9 10.9s-8.9-6.2-8.9-10.9 5.1-10.9 8.9-10.9 8.9 6.2 8.9 10.9zM1542.3 312.7c0 3.7-4 8.6-7.1 8.6s-7.1-4.9-7.1-8.6 4-8.6 7.1-8.6 7.1 4.9 7.1 8.6zM1540.5 312.7c0 2.7-3 6.3-5.2 6.3s-5.2-3.6-5.2-6.3 3-6.3 5.2-6.3 5.2 3.6 5.2 6.3zM1538.7 312.7c0 1.8-1.9 4.2-3.4 4.2s-3.4-2.4-3.4-4.2 1.9-4.2 3.4-4.2 3.4 2.4 3.4 4.2zM1537.1 312.7c0 .9-1 2.2-1.8 2.2s-1.8-1.2-1.8-2.2 1-2.2 1.8-2.2 1.8 1.2 1.8 2.2z"/>
<path d="M1484.5 329.4c0 4.4-5.3 10.3-9.2 10.3s-9.2-5.8-9.2-10.3 5.3-10.3 9.2-10.3 9.2 5.8 9.2 10.3zM1481.5 329.4c0 3-3.6 7-6.3 7s-6.3-4-6.3-7 3.6-7 6.3-7 6.3 4 6.3 7zM1478.8 329.4c0 1.7-2 3.9-3.5 3.9s-3.5-2.2-3.5-3.9 2-3.9 3.5-3.9 3.5 2.2 3.5 3.9z" stroke-opacity=".8"/>
<path d="M1362.2 509.9c0 4.4-5.2 10.1-9.1 10.1s-9.1-5.8-9.1-10.1 5.2-10.1 9.1-10.1 9.1 5.8 9.1 10.1zM1359.3 509.9c0 3-3.5 6.9-6.2 6.9s-6.2-3.9-6.2-6.9 3.5-6.9 6.2-6.9 6.2 3.9 6.2 6.9zM1356.6 509.9c0 1.7-2 3.9-3.5 3.9s-3.5-2.2-3.5-3.9 2-3.9 3.5-3.9 3.5 2.2 3.5 3.9z" stroke-opacity=".8"/>
<path d="M1450.9 346.6c0 4.8-5.2 11.1-9.1 11.1s-9.1-6.3-9.1-11.1 5.2-11.1 9.1-11.1 9.1 6.3 9.1 11.1zM1449 346.6c0 3.8-4.1 8.8-7.2 8.8s-7.2-5-7.2-8.8 4.1-8.8 7.2-8.8 7.2 5 7.2 8.8zM1447.1 346.6c0 2.8-3 6.4-5.3 6.4s-5.3-3.7-5.3-6.4 3-6.4 5.3-6.4 5.3 3.7 5.3 6.4zM1445.3 346.6c0 1.8-2 4.2-3.4 4.2s-3.4-2.4-3.4-4.2 2-4.2 3.4-4.2 3.4 2.4 3.4 4.2zM1443.6 346.6c0 1-1 2.2-1.8 2.2s-1.8-1.3-1.8-2.2 1-2.2 1.8-2.2 1.8 1.3 1.8 2.2z"/>
<path d="M1161.4 387.5c0 4.7-5.1 10.9-8.9 10.9s-8.9-6.2-8.9-10.9 5.1-10.9 8.9-10.9 8.9 6.2 8.9 10.9zM1159.5 387.5c0 3.7-4 8.6-7 8.6s-7-4.9-7-8.6 4-8.6 7-8.6 7 4.9 7 8.6zM1157.6 387.5c0 2.7-2.9 6.3-5.1 6.3s-5.1-3.6-5.1-6.3 2.9-6.3 5.1-6.3 5.1 3.6 5.1 6.3zM1155.9 387.5c0 1.8-1.9 4.1-3.4 4.1s-3.4-2.4-3.4-4.1 1.9-4.1 3.4-4.1 3.4 2.4 3.4 4.1zM1154.3 387.5c0 .9-1 2.2-1.8 2.2s-1.8-1.2-1.8-2.2 1-2.2 1.8-2.2 1.8 1.2 1.8 2.2z"/>
<path d="M1177.1 396.8c0 4.4-5.2 10.1-9.1 10.1s-9.1-5.8-9.1-10.1 5.2-10.1 9.1-10.1 9.1 5.8 9.1 10.1zM1175.2 396.8c0 3.4-4.1 8-7.2 8s-7.2-4.6-7.2-8 4.1-8 7.2-8 7.2 4.6 7.2 8zM1173.3 396.8c0 2.5-3 5.9-5.3 5.9s-5.3-3.4-5.3-5.9 3-5.9 5.3-5.9 5.3 3.4 5.3 5.9zM1171.4 396.8c0 1.7-2 3.9-3.5 3.9s-3.5-2.2-3.5-3.9 2-3.9 3.5-3.9 3.5 2.2 3.5 3.9zM1169.8 396.8c0 .9-1 2-1.8 2s-1.8-1.2-1.8-2 1-2 1.8-2 1.8 1.2 1.8 2z"/>
<path d="M1180.2 424.7c0 4.2-5 9.8-8.8 9.8s-8.8-5.6-8.8-9.8 5-9.8 8.8-9.8 8.8 5.6 8.8 9.8zM1178.4 424.7c0 3.3-4 7.7-6.9 7.7s-6.9-4.4-6.9-7.7 4-7.7 6.9-7.7 6.9 4.4 6.9 7.7zM1176.5 424.7c0 2.4-2.9 5.7-5.1 5.7s-5.1-3.2-5.1-5.7 2.9-5.7 5.1-5.7 5.1 3.2 5.1 5.7zM1174.8 424.7c0 1.6-1.9 3.7-3.3 3.7s-3.3-2.1-3.3-3.7 1.9-3.7 3.3-3.7 3.3 2.1 3.3 3.7zM1173.2 424.7c0 .8-1 2-1.8 2s-1.8-1.1-1.8-2 1-2 1.8-2 1.8 1.1 1.8 2z"/>
<path d="M1236.3 436.6c0 4.6-5 10.7-8.8 10.7s-8.8-6.1-8.8-10.7 5-10.7 8.8-10.7 8.8 6.1 8.8 10.7zM1234.5 436.6c0 3.6-3.9 8.5-6.9 8.5s-6.9-4.8-6.9-8.5 3.9-8.5 6.9-8.5 6.9 4.8 6.9 8.5zM1232.7 436.6c0 2.7-2.9 6.2-5.1 6.2s-5.1-3.5-5.1-6.2 2.9-6.2 5.1-6.2 5.1 3.5 5.1 6.2zM1230.9 436.6c0 1.8-1.9 4.1-3.3 4.1s-3.3-2.3-3.3-4.1 1.9-4.1 3.3-4.1 3.3 2.3 3.3 4.1zM1229.3 436.6c0 .9-1 2.1-1.8 2.1s-1.8-1.2-1.8-2.1 1-2.1 1.8-2.1 1.8 1.2 1.8 2.1z"/>
<path d="M1303.8 359.7c0 4.4-5.2 10.1-9.1 10.1s-9.1-5.8-9.1-10.1 5.2-10.1 9.1-10.1 9.1 5.8 9.1 10.1zM1301.9 359.7c0 3.4-4.1 8-7.2 8s-7.2-4.6-7.2-8 4.1-8 7.2-8 7.2 4.6 7.2 8zM1300 359.7c0 2.5-3 5.9-5.3 5.9s-5.3-3.3-5.3-5.9 3-5.9 5.3-5.9 5.3 3.3 5.3 5.9zM1298.2 359.7c0 1.7-2 3.8-3.5 3.8s-3.5-2.2-3.5-3.8 2-3.8 3.5-3.8 3.5 2.2 3.5 3.8zM1296.5 359.7c0 .9-1 2-1.8 2s-1.8-1.2-1.8-2 1-2 1.8-2 1.8 1.2 1.8 2z"/>
<path d="M1339.1 351.1c0 4.8-5.8 11.2-10.2 11.2s-10.2-6.4-10.2-11.2 5.8-11.2 10.2-11.2 10.2 6.4 10.2 11.2zM1337 351.1c0 3.8-4.6 8.9-8.1 8.9s-8.1-5.1-8.1-8.9 4.6-8.9 8.1-8.9 8.1 5.1 8.1 8.9zM1334.8 351.1c0 2.8-3.4 6.5-5.9 6.5s-5.9-3.7-5.9-6.5 3.4-6.5 5.9-6.5 5.9 3.7 5.9 6.5zM1332.8 351.1c0 1.8-2.2 4.3-3.9 4.3s-3.9-2.4-3.9-4.3 2.2-4.3 3.9-4.3 3.9 2.4 3.9 4.3zM1330.9 351.1c0 1-1.2 2.2-2 2.2s-2-1.3-2-2.2 1.2-2.2 2-2.2 2 1.3 2 2.2z"/>
<path d="M1324.1 382.9c0 4.3-5.1 9.9-8.9 9.9s-8.9-5.6-8.9-9.9 5.1-9.9 8.9-9.9 8.9 5.6 8.9 9.9zM1322.2 382.9c0 3.4-4 7.8-7 7.8s-7-4.5-7-7.8 4-7.8 7-7.8 7 4.5 7 7.8zM1320.3 382.9c0 2.5-2.9 5.7-5.2 5.7s-5.2-3.3-5.2-5.7 2.9-5.7 5.2-5.7 5.2 3.3 5.2 5.7zM1318.6 382.9c0 1.6-1.9 3.8-3.4 3.8s-3.4-2.1-3.4-3.8 1.9-3.8 3.4-3.8 3.4 2.1 3.4 3.8zM1317 382.9c0 .9-1 2-1.8 2s-1.8-1.1-1.8-2 1-2 1.8-2 1.8 1.1 1.8 2z"/>
<path d="M1403.8 349.7c0 4.7-5.1 11-9 11s-9-6.3-9-11 5.1-11 9-11 9 6.3 9 11zM1401.9 349.7c0 3.7-4.1 8.7-7.1 8.7s-7.1-5-7.1-8.7 4.1-8.7 7.1-8.7 7.1 5 7.1 8.7zM1400 349.7c0 2.8-3 6.4-5.2 6.4s-5.2-3.6-5.2-6.4 3-6.4 5.2-6.4 5.2 3.6 5.2 6.4zM1398.2 349.7c0 1.8-2 4.2-3.4 4.2s-3.4-2.4-3.4-4.2 2-4.2 3.4-4.2 3.4 2.4 3.4 4.2zM1396.6 349.7c0 .9-1 2.2-1.8 2.2s-1.8-1.3-1.8-2.2 1-2.2 1.8-2.2 1.8 1.3 1.8 2.2z"/>
<path d="M1378.7 386.2c0 4.7-5.3 10.9-9.4 10.9s-9.4-6.2-9.4-10.9 5.3-10.9 9.4-10.9 9.4 6.2 9.4 10.9zM1376.8 386.2c0 3.7-4.2 8.6-7.4 8.6s-7.4-4.9-7.4-8.6 4.2-8.6 7.4-8.6 7.4 4.9 7.4 8.6zM1374.8 386.2c0 2.7-3.1 6.3-5.4 6.3s-5.4-3.6-5.4-6.3 3.1-6.3 5.4-6.3 5.4 3.6 5.4 6.3zM1372.9 386.2c0 1.8-2 4.1-3.6 4.1s-3.6-2.4-3.6-4.1 2-4.1 3.6-4.1 3.6 2.4 3.6 4.1zM1371.2 386.2c0 .9-1.1 2.2-1.9 2.2s-1.9-1.2-1.9-2.2 1.1-2.2 1.9-2.2 1.9 1.2 1.9 2.2z"/>
<path d="M1276.3 419.6c0 4.4-4.6 10.2-8.1 10.2s-8.1-5.8-8.1-10.2 4.6-10.2 8.1-10.2 8.1 5.8 8.1 10.2zM1274.5 419.6c0 3.5-3.7 8-6.4 8s-6.4-4.6-6.4-8 3.7-8 6.4-8 6.4 4.6 6.4 8zM1272.8 419.6c0 2.5-2.7 5.9-4.7 5.9s-4.7-3.4-4.7-5.9 2.7-5.9 4.7-5.9 4.7 3.4 4.7 5.9zM1271.2 419.6c0 1.7-1.8 3.9-3.1 3.9s-3.1-2.2-3.1-3.9 1.8-3.9 3.1-3.9 3.1 2.2 3.1 3.9zM1269.7 419.6c0 .9-.9 2-1.6 2s-1.6-1.2-1.6-2 .9-2 1.6-2 1.6 1.2 1.6 2z"/>
<path d="M1289.1 413.9c0 4.4-4.9 10.2-8.7 10.2s-8.7-5.8-8.7-10.2 4.9-10.2 8.7-10.2 8.7 5.8 8.7 10.2zM1287.3 413.9c0 3.5-3.9 8-6.8 8s-6.8-4.6-6.8-8 3.9-8 6.8-8 6.8 4.6 6.8 8zM1285.5 413.9c0 2.5-2.9 5.9-5 5.9s-5-3.4-5-5.9 2.9-5.9 5-5.9 5 3.4 5 5.9zM1283.8 413.9c0 1.7-1.9 3.9-3.3 3.9s-3.3-2.2-3.3-3.9 1.9-3.9 3.3-3.9 3.3 2.2 3.3 3.9zM1282.2 413.9c0 .9-1 2-1.7 2s-1.7-1.2-1.7-2 1-2 1.7-2 1.7 1.2 1.7 2z"/>
<path d="M1338.1 407.2c0 4.3-5.1 10-9 10s-9-5.7-9-10 5.1-10 9-10 9 5.7 9 10zM1336.2 407.2c0 3.4-4.1 7.9-7.1 7.9s-7.1-4.5-7.1-7.9 4.1-7.9 7.1-7.9 7.1 4.5 7.1 7.9zM1334.3 407.2c0 2.5-3 5.8-5.2 5.8s-5.2-3.3-5.2-5.8 3-5.8 5.2-5.8 5.2 3.3 5.2 5.8zM1332.5 407.2c0 1.6-2 3.8-3.4 3.8s-3.4-2.2-3.4-3.8 2-3.8 3.4-3.8 3.4 2.2 3.4 3.8zM1330.9 407.2c0 .9-1 2-1.8 2s-1.8-1.1-1.8-2 1-2 1.8-2 1.8 1.1 1.8 2z"/>
<path d="M1354.8 402.4c0 4.2-5 9.7-8.8 9.7s-8.8-5.5-8.8-9.7 5-9.7 8.8-9.7 8.8 5.5 8.8 9.7zM1353 402.4c0 3.3-3.9 7.7-6.9 7.7s-6.9-4.4-6.9-7.7 3.9-7.7 6.9-7.7 6.9 4.4 6.9 7.7zM1351.1 402.4c0 2.4-2.9 5.6-5.1 5.6s-5.1-3.2-5.1-5.6 2.9-5.6 5.1-5.6 5.1 3.2 5.1 5.6zM1349.4 402.4c0 1.6-1.9 3.7-3.3 3.7s-3.3-2.1-3.3-3.7 1.9-3.7 3.3-3.7 3.3 2.1 3.3 3.7zM1347.8 402.4c0 .8-1 1.9-1.8 1.9s-1.8-1.1-1.8-1.9 1-1.9 1.8-1.9 1.8 1.1 1.8 1.9z"/>
<path d="M1286.5 460.4c0 4.7-5.1 11-9 11s-9-6.3-9-11 5.1-11 9-11 9 6.3 9 11zM1284.6 460.4c0 3.7-4 8.7-7.1 8.7s-7.1-4.9-7.1-8.7 4-8.7 7.1-8.7 7.1 4.9 7.1 8.7zM1282.7 460.4c0 2.7-3 6.4-5.2 6.4s-5.2-3.6-5.2-6.4 3-6.4 5.2-6.4 5.2 3.6 5.2 6.4zM1280.9 460.4c0 1.8-1.9 4.2-3.4 4.2s-3.4-2.4-3.4-4.2 1.9-4.2 3.4-4.2 3.4 2.4 3.4 4.2zM1279.3 460.4c0 .9-1 2.2-1.8 2.2s-1.8-1.3-1.8-2.2 1-2.2 1.8-2.2 1.8 1.3 1.8 2.2z"/>
<path d="M1266.3 478.2c0 4.4-5.3 10.3-9.3 10.3s-9.3-5.9-9.3-10.3 5.3-10.3 9.3-10.3 9.3 5.9 9.3 10.3zM1264.4 478.2c0 3.5-4.2 8.1-7.3 8.1s-7.3-4.6-7.3-8.1 4.2-8.1 7.3-8.1 7.3 4.6 7.3 8.1zM1262.5 478.2c0 2.6-3.1 6-5.4 6s-5.4-3.4-5.4-6 3.1-6 5.4-6 5.4 3.4 5.4 6zM1260.6 478.2c0 1.7-2 3.9-3.5 3.9s-3.5-2.2-3.5-3.9 2-3.9 3.5-3.9 3.5 2.2 3.5 3.9zM1258.9 478.2c0 .9-1.1 2.1-1.9 2.1s-1.9-1.2-1.9-2.1 1.1-2.1 1.9-2.1 1.9 1.2 1.9 2.1z"/>
<path d="M1340.3 455.2c0 5.8-7.2 13.6-12.6 13.6s-12.6-7.7-12.6-13.6 7.2-13.6 12.6-13.6 12.6 7.7 12.6 13.6zM1337.7 455.2c0 4.6-5.7 10.7-10 10.7s-10-6.1-10-10.7 5.7-10.7 10-10.7 10 6.1 10 10.7zM1335 455.2c0 3.4-4.2 7.9-7.3 7.9s-7.3-4.5-7.3-7.9 4.2-7.9 7.3-7.9 7.3 4.5 7.3 7.9zM1332.5 455.2c0 2.2-2.7 5.2-4.8 5.2s-4.8-2.9-4.8-5.2 2.7-5.2 4.8-5.2 4.8 2.9 4.8 5.2zM1330.2 455.2c0 1.2-1.4 2.7-2.5 2.7s-2.5-1.5-2.5-2.7 1.4-2.7 2.5-2.7 2.5 1.5 2.5 2.7z"/>
<path d="M1386.8 465.6c0 4.2-5 9.7-8.8 9.7s-8.8-5.5-8.8-9.7 5-9.7 8.8-9.7 8.8 5.5 8.8 9.7zM1385 465.6c0 3.3-3.9 7.7-6.9 7.7s-6.9-4.4-6.9-7.7 3.9-7.7 6.9-7.7 6.9 4.4 6.9 7.7zM1383.2 465.6c0 2.4-2.9 5.6-5.1 5.6s-5.1-3.2-5.1-5.6 2.9-5.6 5.1-5.6 5.1 3.2 5.1 5.6zM1381.4 465.6c0 1.6-1.9 3.7-3.3 3.7s-3.3-2.1-3.3-3.7 1.9-3.7 3.3-3.7 3.3 2.1 3.3 3.7zM1379.8 465.6c0 .8-1 1.9-1.8 1.9s-1.8-1.1-1.8-1.9 1-1.9 1.8-1.9 1.8 1.1 1.8 1.9z"/>
<path d="M1352.2 457.3c0 4.3-5.1 9.9-8.9 9.9s-8.9-5.6-8.9-9.9 5.1-9.9 8.9-9.9 8.9 5.6 8.9 9.9zM1350.3 457.3c0 3.4-4 7.8-7 7.8s-7-4.5-7-7.8 4-7.8 7-7.8 7 4.5 7 7.8zM1348.5 457.3c0 2.5-2.9 5.7-5.2 5.7s-5.2-3.3-5.2-5.7 2.9-5.7 5.2-5.7 5.2 3.3 5.2 5.7zM1346.7 457.3c0 1.6-1.9 3.8-3.4 3.8s-3.4-2.1-3.4-3.8 1.9-3.8 3.4-3.8 3.4 2.1 3.4 3.8zM1345.1 457.3c0 .9-1 2-1.8 2s-1.8-1.1-1.8-2 1-2 1.8-2 1.8 1.1 1.8 2z"/>
<path d="M1407.6 410.2c0 5.1-5.7 11.9-10 11.9s-10-6.8-10-11.9 5.7-11.9 10-11.9 10 6.8 10 11.9zM1405.5 410.2c0 4.1-4.5 9.4-7.9 9.4s-7.9-5.4-7.9-9.4 4.5-9.4 7.9-9.4 7.9 5.4 7.9 9.4zM1403.4 410.2c0 3-3.3 6.9-5.8 6.9s-5.8-3.9-5.8-6.9 3.3-6.9 5.8-6.9 5.8 3.9 5.8 6.9zM1401.4 410.2c0 2-2.2 4.5-3.8 4.5s-3.8-2.6-3.8-4.5 2.2-4.5 3.8-4.5 3.8 2.6 3.8 4.5zM1399.6 410.2c0 1-1.1 2.4-2 2.4s-2-1.4-2-2.4 1.1-2.4 2-2.4 2 1.4 2 2.4z"/>
<path d="M1419.3 413.1c0 5.1-5.7 11.9-10 11.9s-10-6.8-10-11.9 5.7-11.9 10-11.9 10 6.8 10 11.9zM1417.2 413.1c0 4.1-4.5 9.4-7.9 9.4s-7.9-5.4-7.9-9.4 4.5-9.4 7.9-9.4 7.9 5.4 7.9 9.4zM1415.1 413.1c0 3-3.3 6.9-5.8 6.9s-5.8-4-5.8-6.9 3.3-6.9 5.8-6.9 5.8 4 5.8 6.9zM1413.1 413.1c0 2-2.2 4.5-3.8 4.5s-3.8-2.6-3.8-4.5 2.2-4.5 3.8-4.5 3.8 2.6 3.8 4.5zM1411.3 413.1c0 1-1.1 2.4-2 2.4s-2-1.4-2-2.4 1.1-2.4 2-2.4 2 1.4 2 2.4z"/>
<path d="M1440.8 453.6c0 4.8-5.3 11.3-9.2 11.3s-9.2-6.4-9.2-11.3 5.3-11.3 9.2-11.3 9.2 6.4 9.2 11.3zM1438.9 453.6c0 3.8-4.2 8.9-7.3 8.9s-7.3-5.1-7.3-8.9 4.2-8.9 7.3-8.9 7.3 5.1 7.3 8.9zM1436.9 453.6c0 2.8-3 6.5-5.3 6.5s-5.3-3.7-5.3-6.5 3-6.5 5.3-6.5 5.3 3.7 5.3 6.5zM1435.1 453.6c0 1.8-2 4.3-3.5 4.3s-3.5-2.4-3.5-4.3 2-4.3 3.5-4.3 3.5 2.4 3.5 4.3zM1433.4 453.6c0 1-1.1 2.3-1.8 2.3s-1.8-1.3-1.8-2.3 1.1-2.3 1.8-2.3 1.8 1.3 1.8 2.3z"/>
<path d="M1426.4 471.1c0 5-5 11.7-8.8 11.7s-8.8-6.7-8.8-11.7 5-11.7 8.8-11.7 8.8 6.7 8.8 11.7zM1424.6 471.1c0 4-4 9.3-7 9.3s-7-5.3-7-9.3 4-9.3 7-9.3 7 5.3 7 9.3zM1422.7 471.1c0 2.9-2.9 6.8-5.1 6.8s-5.1-3.9-5.1-6.8 2.9-6.8 5.1-6.8 5.1 3.9 5.1 6.8zM1421 471.1c0 1.9-1.9 4.5-3.3 4.5s-3.3-2.5-3.3-4.5 1.9-4.5 3.3-4.5 3.3 2.5 3.3 4.5zM1419.4 471.1c0 1-1 2.3-1.8 2.3s-1.8-1.3-1.8-2.3 1-2.3 1.8-2.3 1.8 1.3 1.8 2.3z"/>
<path d="M1280.4 499.1c0 4.7-5.1 11-9 11s-9-6.3-9-11 5.1-11 9-11 9 6.3 9 11zM1278.6 499.1c0 3.7-4.1 8.7-7.1 8.7s-7.1-5-7.1-8.7 4.1-8.7 7.1-8.7 7.1 5 7.1 8.7zM1276.7 499.1c0 2.7-3 6.4-5.2 6.4s-5.2-3.6-5.2-6.4 3-6.4 5.2-6.4 5.2 3.6 5.2 6.4zM1274.9 499.1c0 1.8-2 4.2-3.4 4.2s-3.4-2.4-3.4-4.2 2-4.2 3.4-4.2 3.4 2.4 3.4 4.2zM1273.2 499.1c0 .9-1 2.2-1.8 2.2s-1.8-1.3-1.8-2.2 1-2.2 1.8-2.2 1.8 1.3 1.8 2.2z"/>
<path d="M1294.1 513.4c0 4.5-5.1 10.4-8.9 10.4s-8.9-5.9-8.9-10.4 5.1-10.4 8.9-10.4 8.9 5.9 8.9 10.4zM1292.2 513.4c0 3.5-4 8.2-7 8.2s-7-4.7-7-8.2 4-8.2 7-8.2 7 4.7 7 8.2zM1290.4 513.4c0 2.6-2.9 6-5.2 6s-5.2-3.4-5.2-6 2.9-6 5.2-6 5.2 3.4 5.2 6zM1288.6 513.4c0 1.7-1.9 3.9-3.4 3.9s-3.4-2.2-3.4-3.9 1.9-3.9 3.4-3.9 3.4 2.2 3.4 3.9zM1287 513.4c0 .9-1 2.1-1.8 2.1s-1.8-1.2-1.8-2.1 1-2.1 1.8-2.1 1.8 1.2 1.8 2.1z"/>
<path d="M1317.9 533.6c0 4.6-5.7 10.6-10.1 10.6s-10.1-6-10.1-10.6 5.7-10.6 10.1-10.6 10.1 6 10.1 10.6zM1315.8 533.6c0 3.6-4.5 8.4-8 8.4s-8-4.8-8-8.4 4.5-8.4 8-8.4 8 4.8 8 8.4zM1313.7 533.6c0 2.6-3.3 6.1-5.8 6.1s-5.8-3.5-5.8-6.1 3.3-6.1 5.8-6.1 5.8 3.5 5.8 6.1zM1311.7 533.6c0 1.7-2.2 4-3.8 4s-3.8-2.3-3.8-4 2.2-4 3.8-4 3.8 2.3 3.8 4zM1309.8 533.6c0 .9-1.1 2.1-2 2.1s-2-1.2-2-2.1 1.1-2.1 2-2.1 2 1.2 2 2.1z"/>
<path d="M1446.3 493.2c0 4.7-4.6 11-8 11s-8-6.3-8-11 4.6-11 8-11 8 6.3 8 11zM1444.6 493.2c0 3.7-3.6 8.7-6.3 8.7s-6.3-4.9-6.3-8.7 3.6-8.7 6.3-8.7 6.3 4.9 6.3 8.7zM1442.9 493.2c0 2.7-2.6 6.4-4.6 6.4s-4.6-3.6-4.6-6.4 2.6-6.4 4.6-6.4 4.6 3.6 4.6 6.4zM1441.3 493.2c0 1.8-1.7 4.2-3 4.2s-3-2.4-3-4.2 1.7-4.2 3-4.2 3 2.4 3 4.2zM1439.9 493.2c0 .9-.9 2.2-1.6 2.2s-1.6-1.3-1.6-2.2 .9-2.2 1.6-2.2 1.6 1.3 1.6 2.2z"/>
<path d="M1511.2 503.4c0 4.8-5.8 11.2-10.2 11.2s-10.2-6.4-10.2-11.2 5.8-11.2 10.2-11.2 10.2 6.4 10.2 11.2zM1509.1 503.4c0 3.8-4.6 8.9-8 8.9s-8-5-8-8.9 4.6-8.9 8-8.9 8 5 8 8.9zM1506.9 503.4c0 2.8-3.4 6.5-5.9 6.5s-5.9-3.7-5.9-6.5 3.4-6.5 5.9-6.5 5.9 3.7 5.9 6.5zM1504.9 503.4c0 1.8-2.2 4.3-3.9 4.3s-3.9-2.4-3.9-4.3 2.2-4.3 3.9-4.3 3.9 2.4 3.9 4.3zM1503.1 503.4c0 1-1.2 2.2-2 2.2s-2-1.3-2-2.2 1.2-2.2 2-2.2 2 1.3 2 2.2z"/>
<path d="M1566.2 411.2c0 4.3-4.6 10-8 10s-8-5.7-8-10 4.6-10 8-10 8 5.7 8 10zM1564.5 411.2c0 3.4-3.6 7.9-6.3 7.9s-6.3-4.5-6.3-7.9 3.6-7.9 6.3-7.9 6.3 4.5 6.3 7.9zM1562.8 411.2c0 2.5-2.6 5.8-4.6 5.8s-4.6-3.3-4.6-5.8 2.6-5.8 4.6-5.8 4.6 3.3 4.6 5.8zM1561.2 411.2c0 1.6-1.7 3.8-3 3.8s-3-2.2-3-3.8 1.7-3.8 3-3.8 3 2.2 3 3.8zM1559.8 411.2c0 .9-.9 2-1.6 2s-1.6-1.1-1.6-2 .9-2 1.6-2 1.6 1.1 1.6 2z"/>
<path d="M1450.1 373c0 5.3-4.7 12.4-8.2 12.4s-8.2-7-8.2-12.4 4.7-12.4 8.2-12.4 8.2 7 8.2 12.4zM1448.3 373c0 4.2-3.7 9.8-6.5 9.8s-6.5-5.6-6.5-9.8 3.7-9.8 6.5-9.8 6.5 5.6 6.5 9.8zM1446.6 373c0 3.1-2.7 7.2-4.8 7.2s-4.8-4.1-4.8-7.2 2.7-7.2 4.8-7.2 4.8 4.1 4.8 7.2zM1445 373c0 2-1.8 4.7-3.1 4.7s-3.1-2.7-3.1-4.7 1.8-4.7 3.1-4.7 3.1 2.7 3.1 4.7zM1443.5 373c0 1.1-.9 2.5-1.6 2.5s-1.6-1.4-1.6-2.5 .9-2.5 1.6-2.5 1.6 1.4 1.6 2.5z"/>
<path d="M1093 650.8c0 4.3-5.1 9.9-8.9 9.9s-8.9-5.6-8.9-9.9 5.1-9.9 8.9-9.9 8.9 5.6 8.9 9.9zM1091.1 650.8c0 3.4-4 7.8-7 7.8s-7-4.5-7-7.8 4-7.8 7-7.8 7 4.5 7 7.8zM1089.3 650.8c0 2.5-2.9 5.7-5.2 5.7s-5.2-3.3-5.2-5.7 2.9-5.7 5.2-5.7 5.2 3.3 5.2 5.7zM1087.5 650.8c0 1.6-1.9 3.8-3.4 3.8s-3.4-2.1-3.4-3.8 1.9-3.8 3.4-3.8 3.4 2.1 3.4 3.8zM1085.9 650.8c0 .9-1 2-1.8 2s-1.8-1.1-1.8-2 1-2 1.8-2 1.8 1.1 1.8 2z"/>
<path d="M1155.8 602.1c0 4.3-5.1 10-9 10s-9-5.7-9-10 5.1-10 9-10 9 5.7 9 10zM1153.9 602.1c0 3.4-4 7.9-7.1 7.9s-7.1-4.5-7.1-7.9 4-7.9 7.1-7.9 7.1 4.5 7.1 7.9zM1152 602.1c0 2.5-3 5.8-5.2 5.8s-5.2-3.3-5.2-5.8 3-5.8 5.2-5.8 5.2 3.3 5.2 5.8zM1150.2 602.1c0 1.6-1.9 3.8-3.4 3.8s-3.4-2.2-3.4-3.8 1.9-3.8 3.4-3.8 3.4 2.2 3.4 3.8zM1148.6 602.1c0 .9-1 2-1.8 2s-1.8-1.1-1.8-2 1-2 1.8-2 1.8 1.1 1.8 2z"/>
<path d="M1195.7 607.4c0 4.3-4.8 9.9-8.4 9.9s-8.4-5.6-8.4-9.9 4.8-9.9 8.4-9.9 8.4 5.6 8.4 9.9zM1193.9 607.4c0 3.4-3.8 7.8-6.6 7.8s-6.6-4.5-6.6-7.8 3.8-7.8 6.6-7.8 6.6 4.5 6.6 7.8zM1192.2 607.4c0 2.5-2.8 5.7-4.9 5.7s-4.9-3.3-4.9-5.7 2.8-5.7 4.9-5.7 4.9 3.3 4.9 5.7zM1190.5 607.4c0 1.6-1.8 3.8-3.2 3.8s-3.2-2.1-3.2-3.8 1.8-3.8 3.2-3.8 3.2 2.1 3.2 3.8zM1189 607.4c0 .9-1 2-1.7 2s-1.7-1.1-1.7-2 1-2 1.7-2 1.7 1.1 1.7 2z"/>
<path d="M1234 613.3c0 4.4-5.8 10.2-10.2 10.2s-10.2-5.8-10.2-10.2 5.8-10.2 10.2-10.2 10.2 5.8 10.2 10.2zM1231.9 613.3c0 3.5-4.6 8.1-8.1 8.1s-8.1-4.6-8.1-8.1 4.6-8.1 8.1-8.1 8.1 4.6 8.1 8.1zM1229.7 613.3c0 2.5-3.4 5.9-5.9 5.9s-5.9-3.4-5.9-5.9 3.4-5.9 5.9-5.9 5.9 3.4 5.9 5.9zM1227.7 613.3c0 1.7-2.2 3.9-3.9 3.9s-3.9-2.2-3.9-3.9 2.2-3.9 3.9-3.9 3.9 2.2 3.9 3.9zM1225.9 613.3c0 .9-1.2 2-2 2s-2-1.2-2-2 1.2-2 2-2 2 1.2 2 2z"/>
</g>
<g stroke="#188a7c">
<path d="M1210.9 293.4c0 4.5-5.3 10.4-9.3 10.4s-9.3-6-9.3-10.4 5.3-10.4 9.3-10.4 9.3 6 9.3 10.4zM1208.9 293.4c0 3.5-4.2 8.3-7.3 8.3s-7.3-4.7-7.3-8.3 4.2-8.3 7.3-8.3 7.3 4.7 7.3 8.3zM1207 293.4c0 2.6-3.1 6.1-5.4 6.1s-5.4-3.5-5.4-6.1 3.1-6.1 5.4-6.1 5.4 3.5 5.4 6.1zM1205.1 293.4c0 1.7-2 4-3.5 4s-3.5-2.3-3.5-4 2-4 3.5-4 3.5 2.3 3.5 4z"/>
<path d="M1243.3 245.7c0 5.1-5.9 11.9-10.4 11.9s-10.4-6.8-10.4-11.9 5.9-11.9 10.4-11.9 10.4 6.8 10.4 11.9zM1241.1 245.7c0 4-4.7 9.4-8.2 9.4s-8.2-5.4-8.2-9.4 4.7-9.4 8.2-9.4 8.2 5.4 8.2 9.4zM1238.9 245.7c0 3-3.4 6.9-6 6.9s-6-3.9-6-6.9 3.4-6.9 6-6.9 6 3.9 6 6.9zM1236.8 245.7c0 1.9-2.3 4.5-4 4.5s-4-2.6-4-4.5 2.3-4.5 4-4.5 4 2.6 4 4.5z"/>
<path d="M1297.9 242.6c0 4.7-5.7 11-10 11s-10-6.3-10-11 5.7-11 10-11 10 6.3 10 11zM1295.8 242.6c0 3.7-4.5 8.7-7.9 8.7s-7.9-5-7.9-8.7 4.5-8.7 7.9-8.7 7.9 5 7.9 8.7zM1293.7 242.6c0 2.7-3.3 6.4-5.8 6.4s-5.8-3.6-5.8-6.4 3.3-6.4 5.8-6.4 5.8 3.6 5.8 6.4zM1291.7 242.6c0 1.8-2.2 4.2-3.8 4.2s-3.8-2.4-3.8-4.2 2.2-4.2 3.8-4.2 3.8 2.4 3.8 4.2z"/>
<path d="M1408.6 263.3c0 5.2-5.7 12-10 12s-10-6.8-10-12 5.7-12 10-12 10 6.8 10 12zM1406.6 263.3c0 4.1-4.5 9.5-7.9 9.5s-7.9-5.4-7.9-9.5 4.5-9.5 7.9-9.5 7.9 5.4 7.9 9.5zM1404.5 263.3c0 3-3.3 6.9-5.8 6.9s-5.8-4-5.8-6.9 3.3-6.9 5.8-6.9 5.8 4 5.8 6.9zM1402.5 263.3c0 2-2.2 4.6-3.8 4.6s-3.8-2.6-3.8-4.6 2.2-4.6 3.8-4.6 3.8 2.6 3.8 4.6z"/>
<path d="M1326.9 279.2c0 5.2-5.8 12.1-10.1 12.1s-10.1-6.9-10.1-12.1 5.8-12.1 10.1-12.1 10.1 6.9 10.1 12.1zM1324.8 279.2c0 4.1-4.6 9.6-8 9.6s-8-5.5-8-9.6 4.6-9.6 8-9.6 8 5.5 8 9.6zM1322.7 279.2c0 3-3.3 7-5.9 7s-5.9-4-5.9-7 3.3-7 5.9-7 5.9 4 5.9 7zM1320.6 279.2c0 2-2.2 4.6-3.8 4.6s-3.8-2.6-3.8-4.6 2.2-4.6 3.8-4.6 3.8 2.6 3.8 4.6z"/>
<path d="M1325.6 297.8c0 5-5.5 11.6-9.7 11.6s-9.7-6.6-9.7-11.6 5.5-11.6 9.7-11.6 9.7 6.6 9.7 11.6zM1323.6 297.8c0 4-4.4 9.2-7.7 9.2s-7.7-5.2-7.7-9.2 4.4-9.2 7.7-9.2 7.7 5.2 7.7 9.2zM1321.5 297.8c0 2.9-3.2 6.7-5.6 6.7s-5.6-3.8-5.6-6.7 3.2-6.7 5.6-6.7 5.6 3.8 5.6 6.7zM1319.6 297.8c0 1.9-2.1 4.4-3.7 4.4s-3.7-2.5-3.7-4.4 2.1-4.4 3.7-4.4 3.7 2.5 3.7 4.4z"/>
<path d="M1302.7 307.8c0 5.1-5.6 11.8-9.8 11.8s-9.8-6.7-9.8-11.8 5.6-11.8 9.8-11.8 9.8 6.7 9.8 11.8zM1300.6 307.8c0 4-4.4 9.3-7.7 9.3s-7.7-5.3-7.7-9.3 4.4-9.3 7.7-9.3 7.7 5.3 7.7 9.3zM1298.5 307.8c0 2.9-3.2 6.8-5.7 6.8s-5.7-3.9-5.7-6.8 3.2-6.8 5.7-6.8 5.7 3.9 5.7 6.8zM1296.6 307.8c0 1.9-2.1 4.5-3.7 4.5s-3.7-2.5-3.7-4.5 2.1-4.5 3.7-4.5 3.7 2.5 3.7 4.5z"/>
<path d="M1415.9 331.5c0 4.6-5 10.7-8.8 10.7s-8.8-6.1-8.8-10.7 5-10.7 8.8-10.7 8.8 6.1 8.8 10.7zM1414 331.5c0 3.6-3.9 8.5-6.9 8.5s-6.9-4.8-6.9-8.5 3.9-8.5 6.9-8.5 6.9 4.8 6.9 8.5zM1412.2 331.5c0 2.7-2.9 6.2-5.1 6.2s-5.1-3.5-5.1-6.2 2.9-6.2 5.1-6.2 5.1 3.5 5.1 6.2zM1410.5 331.5c0 1.8-1.9 4.1-3.3 4.1s-3.3-2.3-3.3-4.1 1.9-4.1 3.3-4.1 3.3 2.3 3.3 4.1z"/>
<path d="M1403.6 192.7c0 3.8-4.5 8.8-7.8 8.8s-7.8-5-7.8-8.8 4.5-8.8 7.8-8.8 7.8 5 7.8 8.8zM1402 192.7c0 3-3.5 6.9-6.2 6.9s-6.2-4-6.2-6.9 3.5-6.9 6.2-6.9 6.2 4 6.2 6.9zM1400.3 192.7c0 2.2-2.6 5.1-4.5 5.1s-4.5-2.9-4.5-5.1 2.6-5.1 4.5-5.1 4.5 2.9 4.5 5.1zM1398.8 192.7c0 1.4-1.7 3.3-3 3.3s-3-1.9-3-3.3 1.7-3.3 3-3.3 3 1.9 3 3.3z"/>
<path d="M1475 230.4c0 4.6-5 10.6-8.7 10.6s-8.7-6.1-8.7-10.6 5-10.6 8.7-10.6 8.7 6.1 8.7 10.6zM1473.2 230.4c0 3.6-3.9 8.4-6.9 8.4s-6.9-4.8-6.9-8.4 3.9-8.4 6.9-8.4 6.9 4.8 6.9 8.4zM1471.4 230.4c0 2.6-2.9 6.2-5 6.2s-5-3.5-5-6.2 2.9-6.2 5-6.2 5 3.5 5 6.2zM1469.6 230.4c0 1.7-1.9 4-3.3 4s-3.3-2.3-3.3-4 1.9-4 3.3-4 3.3 2.3 3.3 4z"/>
<path d="M1537.6 258.5c0 4.6-4.9 10.6-8.7 10.6s-8.7-6-8.7-10.6 4.9-10.6 8.7-10.6 8.7 6 8.7 10.6zM1535.8 258.5c0 3.6-3.9 8.4-6.8 8.4s-6.8-4.8-6.8-8.4 3.9-8.4 6.8-8.4 6.8 4.8 6.8 8.4zM1533.9 258.5c0 2.6-2.9 6.1-5 6.1s-5-3.5-5-6.1 2.9-6.1 5-6.1 5 3.5 5 6.1zM1532.2 258.5c0 1.7-1.9 4-3.3 4s-3.3-2.3-3.3-4 1.9-4 3.3-4 3.3 2.3 3.3 4z"/>
<path d="M1584.2 294.9c0 4.3-4.9 10.1-8.7 10.1s-8.7-5.8-8.7-10.1 4.9-10.1 8.7-10.1 8.7 5.8 8.7 10.1zM1582.4 294.9c0 3.4-3.9 8-6.8 8s-6.8-4.6-6.8-8 3.9-8 6.8-8 6.8 4.6 6.8 8zM1580.5 294.9c0 2.5-2.9 5.9-5 5.9s-5-3.3-5-5.9 2.9-5.9 5-5.9 5 3.3 5 5.9zM1578.8 294.9c0 1.7-1.9 3.8-3.3 3.8s-3.3-2.2-3.3-3.8 1.9-3.8 3.3-3.8 3.3 2.2 3.3 3.8z"/>
<path d="M1543.3 313.5c0 4.8-5.2 11.1-9.1 11.1s-9.1-6.3-9.1-11.1 5.2-11.1 9.1-11.1 9.1 6.3 9.1 11.1zM1541.4 313.5c0 3.8-4.1 8.8-7.2 8.8s-7.2-5-7.2-8.8 4.1-8.8 7.2-8.8 7.2 5 7.2 8.8zM1539.5 313.5c0 2.8-3 6.4-5.3 6.4s-5.3-3.7-5.3-6.4 3-6.4 5.3-6.4 5.3 3.7 5.3 6.4zM1537.7 313.5c0 1.8-2 4.2-3.4 4.2s-3.4-2.4-3.4-4.2 2-4.2 3.4-4.2 3.4 2.4 3.4 4.2z"/>
<path d="M1595.7 317.7c0 2.1-1.6 4.8-2.9 4.8s-2.9-2.7-2.9-4.8 1.6-4.8 2.9-4.8 2.9 2.7 2.9 4.8zM1594.4 317.7c0 1.1-.9 2.6-1.6 2.6s-1.6-1.5-1.6-2.6 .9-2.6 1.6-2.6 1.6 1.5 1.6 2.6z"/>
<path d="M1490.7 318.1c0 4.1-4.9 9.6-8.7 9.6s-8.7-5.5-8.7-9.6 4.9-9.6 8.7-9.6 8.7 5.5 8.7 9.6zM1487.9 318.1c0 2.8-3.4 6.5-5.9 6.5s-5.9-3.7-5.9-6.5 3.4-6.5 5.9-6.5 5.9 3.7 5.9 6.5zM1485.3 318.1c0 1.6-1.9 3.7-3.3 3.7s-3.3-2.1-3.3-3.7 1.9-3.7 3.3-3.7 3.3 2.1 3.3 3.7z" stroke-opacity=".8"/>
<path d="M1353.9 520.8c0 4.2-5 9.7-8.8 9.7s-8.8-5.6-8.8-9.7 5-9.7 8.8-9.7 8.8 5.6 8.8 9.7zM1351.1 520.8c0 2.8-3.4 6.6-6 6.6s-6-3.8-6-6.6 3.4-6.6 6-6.6 6 3.8 6 6.6zM1348.5 520.8c0 1.6-1.9 3.7-3.3 3.7s-3.3-2.1-3.3-3.7 1.9-3.7 3.3-3.7 3.3 2.1 3.3 3.7z" stroke-opacity=".8"/>
<path d="M1449.2 347.1c0 4.6-5 10.7-8.7 10.7s-8.7-6.1-8.7-10.7 5-10.7 8.7-10.7 8.7 6.1 8.7 10.7zM1447.3 347.1c0 3.6-3.9 8.4-6.9 8.4s-6.9-4.8-6.9-8.4 3.9-8.4 6.9-8.4 6.9 4.8 6.9 8.4zM1445.5 347.1c0 2.7-2.9 6.2-5.1 6.2s-5.1-3.5-5.1-6.2 2.9-6.2 5.1-6.2 5.1 3.5 5.1 6.2zM1443.8 347.1c0 1.7-1.9 4.1-3.3 4.1s-3.3-2.3-3.3-4.1 1.9-4.1 3.3-4.1 3.3 2.3 3.3 4.1z"/>
<path d="M1160 390.2c0 4.8-5.2 11.1-9.1 11.1s-9.1-6.3-9.1-11.1 5.2-11.1 9.1-11.1 9.1 6.3 9.1 11.1zM1158.1 390.2c0 3.8-4.1 8.8-7.2 8.8s-7.2-5-7.2-8.8 4.1-8.8 7.2-8.8 7.2 5 7.2 8.8zM1156.1 390.2c0 2.8-3 6.5-5.3 6.5s-5.3-3.7-5.3-6.5 3-6.5 5.3-6.5 5.3 3.7 5.3 6.5zM1154.3 390.2c0 1.8-2 4.2-3.5 4.2s-3.5-2.4-3.5-4.2 2-4.2 3.5-4.2 3.5 2.4 3.5 4.2z"/>
<path d="M1173 399.9c0 4.3-5.1 10-9 10s-9-5.7-9-10 5.1-10 9-10 9 5.7 9 10zM1171.1 399.9c0 3.4-4 7.9-7.1 7.9s-7.1-4.5-7.1-7.9 4-7.9 7.1-7.9 7.1 4.5 7.1 7.9zM1169.2 399.9c0 2.5-3 5.8-5.2 5.8s-5.2-3.3-5.2-5.8 3-5.8 5.2-5.8 5.2 3.3 5.2 5.8zM1167.4 399.9c0 1.6-1.9 3.8-3.4 3.8s-3.4-2.2-3.4-3.8 1.9-3.8 3.4-3.8 3.4 2.2 3.4 3.8z"/>
<path d="M1177.2 426c0 4.1-4.9 9.6-8.7 9.6s-8.7-5.5-8.7-9.6 4.9-9.6 8.7-9.6 8.7 5.5 8.7 9.6zM1175.3 426c0 3.3-3.9 7.6-6.8 7.6s-6.8-4.3-6.8-7.6 3.9-7.6 6.8-7.6 6.8 4.3 6.8 7.6zM1173.5 426c0 2.4-2.9 5.6-5 5.6s-5-3.2-5-5.6 2.9-5.6 5-5.6 5 3.2 5 5.6zM1171.8 426c0 1.6-1.9 3.7-3.3 3.7s-3.3-2.1-3.3-3.7 1.9-3.7 3.3-3.7 3.3 2.1 3.3 3.7z"/>
<path d="M1236.6 437.7c0 4.6-5 10.7-8.7 10.7s-8.7-6.1-8.7-10.7 5-10.7 8.7-10.7 8.7 6.1 8.7 10.7zM1234.8 437.7c0 3.6-3.9 8.4-6.9 8.4s-6.9-4.8-6.9-8.4 3.9-8.4 6.9-8.4 6.9 4.8 6.9 8.4zM1233 437.7c0 2.7-2.9 6.2-5.1 6.2s-5.1-3.5-5.1-6.2 2.9-6.2 5.1-6.2 5.1 3.5 5.1 6.2zM1231.2 437.7c0 1.7-1.9 4.1-3.3 4.1s-3.3-2.3-3.3-4.1 1.9-4.1 3.3-4.1 3.3 2.3 3.3 4.1z"/>
<path d="M1303.2 360.7c0 4.1-4.9 9.6-8.6 9.6s-8.6-5.5-8.6-9.6 4.9-9.6 8.6-9.6 8.6 5.5 8.6 9.6zM1301.4 360.7c0 3.3-3.9 7.6-6.8 7.6s-6.8-4.3-6.8-7.6 3.9-7.6 6.8-7.6 6.8 4.3 6.8 7.6zM1299.6 360.7c0 2.4-2.9 5.6-5 5.6s-5-3.2-5-5.6 2.9-5.6 5-5.6 5 3.2 5 5.6zM1297.9 360.7c0 1.6-1.9 3.7-3.3 3.7s-3.3-2.1-3.3-3.7 1.9-3.7 3.3-3.7 3.3 2.1 3.3 3.7z"/>
<path d="M1339.1 351.3c0 4.6-5.6 10.8-9.8 10.8s-9.8-6.2-9.8-10.8 5.6-10.8 9.8-10.8 9.8 6.2 9.8 10.8zM1337.1 351.3c0 3.7-4.4 8.5-7.7 8.5s-7.7-4.9-7.7-8.5 4.4-8.5 7.7-8.5 7.7 4.9 7.7 8.5zM1335 351.3c0 2.7-3.2 6.3-5.7 6.3s-5.7-3.6-5.7-6.3 3.2-6.3 5.7-6.3 5.7 3.6 5.7 6.3zM1333 351.3c0 1.8-2.1 4.1-3.7 4.1s-3.7-2.3-3.7-4.1 2.1-4.1 3.7-4.1 3.7 2.3 3.7 4.1z"/>
<path d="M1323 384.1c0 4.4-5.2 10.2-9.2 10.2s-9.2-5.8-9.2-10.2 5.2-10.2 9.2-10.2 9.2 5.8 9.2 10.2zM1321.1 384.1c0 3.5-4.1 8-7.2 8s-7.2-4.6-7.2-8 4.1-8 7.2-8 7.2 4.6 7.2 8zM1319.2 384.1c0 2.5-3 5.9-5.3 5.9s-5.3-3.4-5.3-5.9 3-5.9 5.3-5.9 5.3 3.4 5.3 5.9zM1317.3 384.1c0 1.7-2 3.9-3.5 3.9s-3.5-2.2-3.5-3.9 2-3.9 3.5-3.9 3.5 2.2 3.5 3.9z"/>
<path d="M1402.3 350.3c0 4.6-5 10.6-8.7 10.6s-8.7-6.1-8.7-10.6 5-10.6 8.7-10.6 8.7 6.1 8.7 10.6zM1400.5 350.3c0 3.6-3.9 8.4-6.9 8.4s-6.9-4.8-6.9-8.4 3.9-8.4 6.9-8.4 6.9 4.8 6.9 8.4zM1398.7 350.3c0 2.7-2.9 6.2-5 6.2s-5-3.5-5-6.2 2.9-6.2 5-6.2 5 3.5 5 6.2zM1396.9 350.3c0 1.7-1.9 4-3.3 4s-3.3-2.3-3.3-4 1.9-4 3.3-4 3.3 2.3 3.3 4z"/>
<path d="M1378.6 386c0 4.8-5.5 11.1-9.6 11.1s-9.6-6.4-9.6-11.1 5.5-11.1 9.6-11.1 9.6 6.4 9.6 11.1zM1376.6 386c0 3.8-4.3 8.8-7.6 8.8s-7.6-5-7.6-8.8 4.3-8.8 7.6-8.8 7.6 5 7.6 8.8zM1374.6 386c0 2.8-3.2 6.5-5.6 6.5s-5.6-3.7-5.6-6.5 3.2-6.5 5.6-6.5 5.6 3.7 5.6 6.5zM1372.6 386c0 1.8-2.1 4.2-3.7 4.2s-3.7-2.4-3.7-4.2 2.1-4.2 3.7-4.2 3.7 2.4 3.7 4.2z"/>
<path d="M1275.9 425.6c0 4.4-4.6 10.1-8.1 10.1s-8.1-5.8-8.1-10.1 4.6-10.1 8.1-10.1 8.1 5.8 8.1 10.1zM1274.2 425.6c0 3.4-3.7 8-6.4 8s-6.4-4.6-6.4-8 3.7-8 6.4-8 6.4 4.6 6.4 8zM1272.5 425.6c0 2.5-2.7 5.9-4.7 5.9s-4.7-3.4-4.7-5.9 2.7-5.9 4.7-5.9 4.7 3.4 4.7 5.9zM1270.9 425.6c0 1.7-1.8 3.9-3.1 3.9s-3.1-2.2-3.1-3.9 1.8-3.9 3.1-3.9 3.1 2.2 3.1 3.9z"/>
<path d="M1287.4 410.2c0 4.2-4.7 9.7-8.3 9.7s-8.3-5.5-8.3-9.7 4.7-9.7 8.3-9.7 8.3 5.5 8.3 9.7zM1285.6 410.2c0 3.3-3.7 7.7-6.5 7.7s-6.5-4.4-6.5-7.7 3.7-7.7 6.5-7.7 6.5 4.4 6.5 7.7zM1283.9 410.2c0 2.4-2.7 5.6-4.8 5.6s-4.8-3.2-4.8-5.6 2.7-5.6 4.8-5.6 4.8 3.2 4.8 5.6zM1282.3 410.2c0 1.6-1.8 3.7-3.1 3.7s-3.1-2.1-3.1-3.7 1.8-3.7 3.1-3.7 3.1 2.1 3.1 3.7z"/>
<path d="M1338.8 402.8c0 4.2-5.1 9.9-8.9 9.9s-8.9-5.6-8.9-9.9 5.1-9.9 8.9-9.9 8.9 5.6 8.9 9.9zM1336.9 402.8c0 3.4-4 7.8-7 7.8s-7-4.4-7-7.8 4-7.8 7-7.8 7 4.4 7 7.8zM1335.1 402.8c0 2.5-2.9 5.7-5.2 5.7s-5.2-3.3-5.2-5.7 2.9-5.7 5.2-5.7 5.2 3.3 5.2 5.7zM1333.3 402.8c0 1.6-1.9 3.8-3.4 3.8s-3.4-2.1-3.4-3.8 1.9-3.8 3.4-3.8 3.4 2.1 3.4 3.8z"/>
<path d="M1354.4 396.7c0 4.1-4.9 9.6-8.6 9.6s-8.6-5.5-8.6-9.6 4.9-9.6 8.6-9.6 8.6 5.5 8.6 9.6zM1352.6 396.7c0 3.3-3.9 7.6-6.8 7.6s-6.8-4.3-6.8-7.6 3.9-7.6 6.8-7.6 6.8 4.3 6.8 7.6zM1350.7 396.7c0 2.4-2.9 5.6-5 5.6s-5-3.2-5-5.6 2.9-5.6 5-5.6 5 3.2 5 5.6zM1349 396.7c0 1.6-1.9 3.6-3.3 3.6s-3.3-2.1-3.3-3.6 1.9-3.6 3.3-3.6 3.3 2.1 3.3 3.6z"/>
<path d="M1282.4 459.5c0 4.8-5.2 11.1-9 11.1s-9-6.3-9-11.1 5.2-11.1 9-11.1 9 6.3 9 11.1zM1280.5 459.5c0 3.8-4.1 8.7-7.1 8.7s-7.1-5-7.1-8.7 4.1-8.7 7.1-8.7 7.1 5 7.1 8.7zM1278.6 459.5c0 2.8-3 6.4-5.2 6.4s-5.2-3.7-5.2-6.4 3-6.4 5.2-6.4 5.2 3.7 5.2 6.4zM1276.8 459.5c0 1.8-2 4.2-3.4 4.2s-3.4-2.4-3.4-4.2 2-4.2 3.4-4.2 3.4 2.4 3.4 4.2z"/>
<path d="M1267.6 474.8c0 4.3-5.1 9.9-8.9 9.9s-8.9-5.6-8.9-9.9 5.1-9.9 8.9-9.9 8.9 5.6 8.9 9.9zM1265.7 474.8c0 3.4-4 7.8-7 7.8s-7-4.5-7-7.8 4-7.8 7-7.8 7 4.5 7 7.8zM1263.8 474.8c0 2.5-2.9 5.7-5.2 5.7s-5.2-3.3-5.2-5.7 2.9-5.7 5.2-5.7 5.2 3.3 5.2 5.7zM1262 474.8c0 1.6-1.9 3.8-3.4 3.8s-3.4-2.1-3.4-3.8 1.9-3.8 3.4-3.8 3.4 2.1 3.4 3.8z"/>
<path d="M1342.8 455.8c0 6.1-7.5 14.1-13.1 14.1s-13.1-8-13.1-14.1 7.5-14.1 13.1-14.1 13.1 8 13.1 14.1zM1340.1 455.8c0 4.8-5.9 11.1-10.4 11.1s-10.4-6.4-10.4-11.1 5.9-11.1 10.4-11.1 10.4 6.4 10.4 11.1zM1337.3 455.8c0 3.5-4.3 8.2-7.6 8.2s-7.6-4.7-7.6-8.2 4.3-8.2 7.6-8.2 7.6 4.7 7.6 8.2zM1334.7 455.8c0 2.3-2.8 5.4-5 5.4s-5-3.1-5-5.4 2.8-5.4 5-5.4 5 3.1 5 5.4z"/>
<path d="M1391 461.9c0 4.4-5.2 10.1-9.1 10.1s-9.1-5.8-9.1-10.1 5.2-10.1 9.1-10.1 9.1 5.8 9.1 10.1zM1389.1 461.9c0 3.4-4.1 8-7.2 8s-7.2-4.6-7.2-8 4.1-8 7.2-8 7.2 4.6 7.2 8zM1387.2 461.9c0 2.5-3 5.9-5.3 5.9s-5.3-3.4-5.3-5.9 3-5.9 5.3-5.9 5.3 3.4 5.3 5.9zM1385.4 461.9c0 1.7-2 3.9-3.5 3.9s-3.5-2.2-3.5-3.9 2-3.9 3.5-3.9 3.5 2.2 3.5 3.9z"/>
<path d="M1349 456.7c0 4.4-5.2 10.2-9.1 10.2s-9.1-5.8-9.1-10.2 5.2-10.2 9.1-10.2 9.1 5.8 9.1 10.2zM1347.1 456.7c0 3.5-4.1 8-7.2 8s-7.2-4.6-7.2-8 4.1-8 7.2-8 7.2 4.6 7.2 8zM1345.1 456.7c0 2.5-3 5.9-5.3 5.9s-5.3-3.4-5.3-5.9 3-5.9 5.3-5.9 5.3 3.4 5.3 5.9zM1343.3 456.7c0 1.7-2 3.9-3.5 3.9s-3.5-2.2-3.5-3.9 2-3.9 3.5-3.9 3.5 2.2 3.5 3.9z"/>
<path d="M1407 410.6c0 5-5.6 11.7-9.7 11.7s-9.7-6.7-9.7-11.7 5.6-11.7 9.7-11.7 9.7 6.7 9.7 11.7zM1405 410.6c0 4-4.4 9.2-7.7 9.2s-7.7-5.3-7.7-9.2 4.4-9.2 7.7-9.2 7.7 5.3 7.7 9.2zM1402.9 410.6c0 2.9-3.2 6.8-5.6 6.8s-5.6-3.9-5.6-6.8 3.2-6.8 5.6-6.8 5.6 3.9 5.6 6.8zM1401 410.6c0 1.9-2.1 4.4-3.7 4.4s-3.7-2.5-3.7-4.4 2.1-4.4 3.7-4.4 3.7 2.5 3.7 4.4z"/>
<path d="M1419 414c0 5.2-5.8 12.2-10.2 12.2s-10.2-7-10.2-12.2 5.8-12.2 10.2-12.2 10.2 7 10.2 12.2zM1416.9 414c0 4.1-4.6 9.6-8 9.6s-8-5.5-8-9.6 4.6-9.6 8-9.6 8 5.5 8 9.6zM1414.7 414c0 3-3.4 7.1-5.9 7.1s-5.9-4-5.9-7.1 3.4-7.1 5.9-7.1 5.9 4 5.9 7.1zM1412.7 414c0 2-2.2 4.6-3.9 4.6s-3.9-2.6-3.9-4.6 2.2-4.6 3.9-4.6 3.9 2.6 3.9 4.6z"/>
<path d="M1439.1 454.5c0 4.6-4.9 10.6-8.7 10.6s-8.7-6-8.7-10.6 4.9-10.6 8.7-10.6 8.7 6 8.7 10.6zM1437.2 454.5c0 3.6-3.9 8.4-6.9 8.4s-6.9-4.8-6.9-8.4 3.9-8.4 6.9-8.4 6.9 4.8 6.9 8.4zM1435.4 454.5c0 2.6-2.9 6.2-5 6.2s-5-3.5-5-6.2 2.9-6.2 5-6.2 5 3.5 5 6.2zM1433.7 454.5c0 1.7-1.9 4-3.3 4s-3.3-2.3-3.3-4 1.9-4 3.3-4 3.3 2.3 3.3 4z"/>
<path d="M1426.8 471.1c0 5.2-5.2 12.1-9.1 12.1s-9.1-6.9-9.1-12.1 5.2-12.1 9.1-12.1 9.1 6.9 9.1 12.1zM1424.9 471.1c0 4.1-4.1 9.5-7.2 9.5s-7.2-5.4-7.2-9.5 4.1-9.5 7.2-9.5 7.2 5.4 7.2 9.5zM1423 471.1c0 3-3 7-5.2 7s-5.2-4-5.2-7 3-7 5.2-7 5.2 4 5.2 7zM1421.2 471.1c0 2-2 4.6-3.4 4.6s-3.4-2.6-3.4-4.6 2-4.6 3.4-4.6 3.4 2.6 3.4 4.6z"/>
<path d="M1280.8 498.6c0 4.7-5.1 10.9-8.9 10.9s-8.9-6.2-8.9-10.9 5.1-10.9 8.9-10.9 8.9 6.2 8.9 10.9zM1278.9 498.6c0 3.7-4 8.6-7 8.6s-7-4.9-7-8.6 4-8.6 7-8.6 7 4.9 7 8.6zM1277 498.6c0 2.7-2.9 6.3-5.2 6.3s-5.2-3.6-5.2-6.3 2.9-6.3 5.2-6.3 5.2 3.6 5.2 6.3zM1275.2 498.6c0 1.8-1.9 4.1-3.4 4.1s-3.4-2.4-3.4-4.1 1.9-4.1 3.4-4.1 3.4 2.4 3.4 4.1z"/>
<path d="M1296.8 513.1c0 4.5-5.1 10.4-8.9 10.4s-8.9-5.9-8.9-10.4 5.1-10.4 8.9-10.4 8.9 5.9 8.9 10.4zM1294.9 513.1c0 3.5-4 8.2-7 8.2s-7-4.7-7-8.2 4-8.2 7-8.2 7 4.7 7 8.2zM1293.1 513.1c0 2.6-2.9 6-5.2 6s-5.2-3.4-5.2-6 2.9-6 5.2-6 5.2 3.4 5.2 6zM1291.3 513.1c0 1.7-1.9 4-3.4 4s-3.4-2.3-3.4-4 1.9-4 3.4-4 3.4 2.3 3.4 4z"/>
<path d="M1316.6 533.4c0 4.5-5.7 10.4-9.9 10.4s-9.9-5.9-9.9-10.4 5.7-10.4 9.9-10.4 9.9 5.9 9.9 10.4zM1314.5 533.4c0 3.5-4.5 8.2-7.9 8.2s-7.9-4.7-7.9-8.2 4.5-8.2 7.9-8.2 7.9 4.7 7.9 8.2zM1312.5 533.4c0 2.6-3.3 6.1-5.8 6.1s-5.8-3.5-5.8-6.1 3.3-6.1 5.8-6.1 5.8 3.5 5.8 6.1zM1310.5 533.4c0 1.7-2.2 4-3.8 4s-3.8-2.3-3.8-4 2.2-4 3.8-4 3.8 2.3 3.8 4z"/>
<path d="M1445.3 493c0 4.6-4.5 10.8-7.8 10.8s-7.8-6.1-7.8-10.8 4.5-10.8 7.8-10.8 7.8 6.1 7.8 10.8zM1443.7 493c0 3.7-3.5 8.5-6.2 8.5s-6.2-4.9-6.2-8.5 3.5-8.5 6.2-8.5 6.2 4.9 6.2 8.5zM1442 493c0 2.7-2.6 6.3-4.5 6.3s-4.5-3.6-4.5-6.3 2.6-6.3 4.5-6.3 4.5 3.6 4.5 6.3zM1440.5 493c0 1.8-1.7 4.1-3 4.1s-3-2.3-3-4.1 1.7-4.1 3-4.1 3 2.3 3 4.1z"/>
<path d="M1510 503.6c0 4.7-5.7 10.9-9.9 10.9s-9.9-6.2-9.9-10.9 5.7-10.9 9.9-10.9 9.9 6.2 9.9 10.9zM1507.9 503.6c0 3.7-4.5 8.6-7.9 8.6s-7.9-4.9-7.9-8.6 4.5-8.6 7.9-8.6 7.9 4.9 7.9 8.6zM1505.8 503.6c0 2.7-3.3 6.3-5.8 6.3s-5.8-3.6-5.8-6.3 3.3-6.3 5.8-6.3 5.8 3.6 5.8 6.3zM1503.8 503.6c0 1.8-2.2 4.2-3.8 4.2s-3.8-2.4-3.8-4.2 2.2-4.2 3.8-4.2 3.8 2.4 3.8 4.2z"/>
<path d="M1563.8 413.3c0 4.3-4.6 10.1-8.1 10.1s-8.1-5.8-8.1-10.1 4.6-10.1 8.1-10.1 8.1 5.8 8.1 10.1zM1562.1 413.3c0 3.4-3.6 8-6.4 8s-6.4-4.5-6.4-8 3.6-8 6.4-8 6.4 4.5 6.4 8zM1560.4 413.3c0 2.5-2.7 5.9-4.7 5.9s-4.7-3.3-4.7-5.9 2.7-5.9 4.7-5.9 4.7 3.3 4.7 5.9zM1558.8 413.3c0 1.6-1.7 3.8-3.1 3.8s-3.1-2.2-3.1-3.8 1.7-3.8 3.1-3.8 3.1 2.2 3.1 3.8z"/>
<path d="M1631.3 372c0 3.1-2.9 7.1-5.1 7.1s-5.1-4.1-5.1-7.1 2.9-7.1 5.1-7.1 5.1 4.1 5.1 7.1zM1629 372c0 1.7-1.6 3.9-2.8 3.9s-2.8-2.2-2.8-3.9 1.6-3.9 2.8-3.9 2.8 2.2 2.8 3.9z"/>
<path d="M1450 373.1c0 5.1-4.5 11.9-7.9 11.9s-7.9-6.8-7.9-11.9 4.5-11.9 7.9-11.9 7.9 6.8 7.9 11.9zM1448.4 373.1c0 4-3.6 9.4-6.2 9.4s-6.2-5.3-6.2-9.4 3.6-9.4 6.2-9.4 6.2 5.3 6.2 9.4zM1446.7 373.1c0 3-2.6 6.9-4.6 6.9s-4.6-3.9-4.6-6.9 2.6-6.9 4.6-6.9 4.6 3.9 4.6 6.9zM1445.1 373.1c0 1.9-1.7 4.5-3 4.5s-3-2.6-3-4.5 1.7-4.5 3-4.5 3 2.6 3 4.5z"/>
<path d="M1089.7 658.7c0 4.3-5.1 10-9 10s-9-5.7-9-10 5.1-10 9-10 9 5.7 9 10zM1087.8 658.7c0 3.4-4 7.9-7.1 7.9s-7.1-4.5-7.1-7.9 4-7.9 7.1-7.9 7.1 4.5 7.1 7.9zM1085.9 658.7c0 2.5-3 5.8-5.2 5.8s-5.2-3.3-5.2-5.8 3-5.8 5.2-5.8 5.2 3.3 5.2 5.8zM1084.1 658.7c0 1.6-1.9 3.8-3.4 3.8s-3.4-2.2-3.4-3.8 1.9-3.8 3.4-3.8 3.4 2.2 3.4 3.8z"/>
<path d="M1157 601.7c0 4.2-5.1 9.9-8.9 9.9s-8.9-5.6-8.9-9.9 5.1-9.9 8.9-9.9 8.9 5.6 8.9 9.9zM1155.1 601.7c0 3.3-4 7.8-7 7.8s-7-4.4-7-7.8 4-7.8 7-7.8 7 4.4 7 7.8zM1153.3 601.7c0 2.5-2.9 5.7-5.1 5.7s-5.1-3.3-5.1-5.7 2.9-5.7 5.1-5.7 5.1 3.3 5.1 5.7zM1151.5 601.7c0 1.6-1.9 3.7-3.4 3.7s-3.4-2.1-3.4-3.7 1.9-3.7 3.4-3.7 3.4 2.1 3.4 3.7z"/>
<path d="M1196.7 614.7c0 4.3-4.9 10.1-8.6 10.1s-8.6-5.8-8.6-10.1 4.9-10.1 8.6-10.1 8.6 5.8 8.6 10.1zM1194.9 614.7c0 3.4-3.9 8-6.8 8s-6.8-4.6-6.8-8 3.9-8 6.8-8 6.8 4.6 6.8 8zM1193.1 614.7c0 2.5-2.8 5.9-5 5.9s-5-3.3-5-5.9 2.8-5.9 5-5.9 5 3.3 5 5.9zM1191.4 614.7c0 1.7-1.9 3.8-3.3 3.8s-3.3-2.2-3.3-3.8 1.9-3.8 3.3-3.8 3.3 2.2 3.3 3.8z"/>
<path d="M1232.8 612.7c0 4.2-5.6 9.8-9.8 9.8s-9.8-5.6-9.8-9.8 5.6-9.8 9.8-9.8 9.8 5.6 9.8 9.8zM1230.7 612.7c0 3.3-4.4 7.8-7.8 7.8s-7.8-4.4-7.8-7.8 4.4-7.8 7.8-7.8 7.8 4.4 7.8 7.8zM1228.6 612.7c0 2.5-3.3 5.7-5.7 5.7s-5.7-3.3-5.7-5.7 3.3-5.7 5.7-5.7 5.7 3.3 5.7 5.7zM1226.7 612.7c0 1.6-2.1 3.7-3.7 3.7s-3.7-2.1-3.7-3.7 2.1-3.7 3.7-3.7 3.7 2.1 3.7 3.7z"/>
</g>
<g stroke="#0e6482">
<path d="M1213.5 291.6c0 4.4-5.2 10.2-9 10.2s-9-5.8-9-10.2 5.2-10.2 9-10.2 9 5.8 9 10.2zM1211.6 291.6c0 3.5-4.1 8.1-7.1 8.1s-7.1-4.6-7.1-8.1 4.1-8.1 7.1-8.1 7.1 4.6 7.1 8.1zM1209.7 291.6c0 2.5-3 5.9-5.2 5.9s-5.2-3.4-5.2-5.9 3-5.9 5.2-5.9 5.2 3.4 5.2 5.9zM1207.9 291.6c0 1.7-2 3.9-3.4 3.9s-3.4-2.2-3.4-3.9 2-3.9 3.4-3.9 3.4 2.2 3.4 3.9z"/>
<path d="M1243.3 245.8c0 4.9-5.7 11.4-10 11.4s-10-6.5-10-11.4 5.7-11.4 10-11.4 10 6.5 10 11.4zM1241.2 245.8c0 3.9-4.5 9-7.9 9s-7.9-5.1-7.9-9 4.5-9 7.9-9 7.9 5.1 7.9 9zM1239.1 245.8c0 2.8-3.3 6.6-5.8 6.6s-5.8-3.8-5.8-6.6 3.3-6.6 5.8-6.6 5.8 3.8 5.8 6.6zM1237.1 245.8c0 1.9-2.2 4.3-3.8 4.3s-3.8-2.5-3.8-4.3 2.2-4.3 3.8-4.3 3.8 2.5 3.8 4.3z"/>
<path d="M1297.9 242.7c0 4.8-5.7 11.1-10 11.1s-10-6.3-10-11.1 5.7-11.1 10-11.1 10 6.3 10 11.1zM1295.8 242.7c0 3.8-4.5 8.7-7.9 8.7s-7.9-5-7.9-8.7 4.5-8.7 7.9-8.7 7.9 5 7.9 8.7zM1293.7 242.7c0 2.8-3.3 6.4-5.8 6.4s-5.8-3.7-5.8-6.4 3.3-6.4 5.8-6.4 5.8 3.7 5.8 6.4zM1291.7 242.7c0 1.8-2.2 4.2-3.8 4.2s-3.8-2.4-3.8-4.2 2.2-4.2 3.8-4.2 3.8 2.4 3.8 4.2z"/>
<path d="M1409.1 263.3c0 5.1-5.6 11.7-9.8 11.7s-9.8-6.7-9.8-11.7 5.6-11.7 9.8-11.7 9.8 6.7 9.8 11.7zM1407 263.3c0 4-4.4 9.3-7.7 9.3s-7.7-5.3-7.7-9.3 4.4-9.3 7.7-9.3 7.7 5.3 7.7 9.3zM1405 263.3c0 2.9-3.2 6.8-5.7 6.8s-5.7-3.9-5.7-6.8 3.2-6.8 5.7-6.8 5.7 3.9 5.7 6.8zM1403 263.3c0 1.9-2.1 4.5-3.7 4.5s-3.7-2.5-3.7-4.5 2.1-4.5 3.7-4.5 3.7 2.5 3.7 4.5z"/>
<path d="M1327.5 278.7c0 5.1-5.7 12-10 12s-10-6.8-10-12 5.7-12 10-12 10 6.8 10 12zM1325.4 278.7c0 4.1-4.5 9.5-7.9 9.5s-7.9-5.4-7.9-9.5 4.5-9.5 7.9-9.5 7.9 5.4 7.9 9.5zM1323.3 278.7c0 3-3.3 6.9-5.8 6.9s-5.8-4-5.8-6.9 3.3-6.9 5.8-6.9 5.8 4 5.8 6.9zM1321.3 278.7c0 2-2.2 4.6-3.8 4.6s-3.8-2.6-3.8-4.6 2.2-4.6 3.8-4.6 3.8 2.6 3.8 4.6z"/>
<path d="M1325.5 298.4c0 5-5.5 11.6-9.6 11.6s-9.6-6.6-9.6-11.6 5.5-11.6 9.6-11.6 9.6 6.6 9.6 11.6zM1323.4 298.4c0 3.9-4.3 9.1-7.6 9.1s-7.6-5.2-7.6-9.1 4.3-9.1 7.6-9.1 7.6 5.2 7.6 9.1zM1321.4 298.4c0 2.9-3.2 6.7-5.6 6.7s-5.6-3.8-5.6-6.7 3.2-6.7 5.6-6.7 5.6 3.8 5.6 6.7zM1319.5 298.4c0 1.9-2.1 4.4-3.7 4.4s-3.7-2.5-3.7-4.4 2.1-4.4 3.7-4.4 3.7 2.5 3.7 4.4z"/>
<path d="M1302.5 308.3c0 5-5.5 11.6-9.7 11.6s-9.7-6.6-9.7-11.6 5.5-11.6 9.7-11.6 9.7 6.6 9.7 11.6zM1300.4 308.3c0 3.9-4.4 9.2-7.6 9.2s-7.6-5.2-7.6-9.2 4.4-9.2 7.6-9.2 7.6 5.2 7.6 9.2zM1298.4 308.3c0 2.9-3.2 6.7-5.6 6.7s-5.6-3.8-5.6-6.7 3.2-6.7 5.6-6.7 5.6 3.8 5.6 6.7zM1296.5 308.3c0 1.9-2.1 4.4-3.7 4.4s-3.7-2.5-3.7-4.4 2.1-4.4 3.7-4.4 3.7 2.5 3.7 4.4z"/>
<path d="M1413.9 331.4c0 4.6-5 10.8-8.8 10.8s-8.8-6.2-8.8-10.8 5-10.8 8.8-10.8 8.8 6.2 8.8 10.8zM1412 331.4c0 3.7-4 8.5-7 8.5s-7-4.9-7-8.5 4-8.5 7-8.5 7 4.9 7 8.5zM1410.2 331.4c0 2.7-2.9 6.3-5.1 6.3s-5.1-3.6-5.1-6.3 2.9-6.3 5.1-6.3 5.1 3.6 5.1 6.3zM1408.4 331.4c0 1.8-1.9 4.1-3.4 4.1s-3.4-2.3-3.4-4.1 1.9-4.1 3.4-4.1 3.4 2.3 3.4 4.1z"/>
<path d="M1403.8 192.6c0 3.7-4.4 8.7-7.7 8.7s-7.7-5-7.7-8.7 4.4-8.7 7.7-8.7 7.7 5 7.7 8.7zM1402.2 192.6c0 3-3.5 6.9-6.1 6.9s-6.1-3.9-6.1-6.9 3.5-6.9 6.1-6.9 6.1 3.9 6.1 6.9zM1400.6 192.6c0 2.2-2.6 5.1-4.5 5.1s-4.5-2.9-4.5-5.1 2.6-5.1 4.5-5.1 4.5 2.9 4.5 5.1zM1399 192.6c0 1.4-1.7 3.3-2.9 3.3s-2.9-1.9-2.9-3.3 1.7-3.3 2.9-3.3 2.9 1.9 2.9 3.3z"/>
<path d="M1475.1 230.4c0 4.5-4.9 10.5-8.6 10.5s-8.6-6-8.6-10.5 4.9-10.5 8.6-10.5 8.6 6 8.6 10.5zM1473.3 230.4c0 3.6-3.9 8.3-6.8 8.3s-6.8-4.7-6.8-8.3 3.9-8.3 6.8-8.3 6.8 4.7 6.8 8.3zM1471.5 230.4c0 2.6-2.8 6.1-5 6.1s-5-3.5-5-6.1 2.8-6.1 5-6.1 5 3.5 5 6.1zM1469.8 230.4c0 1.7-1.9 4-3.3 4s-3.3-2.3-3.3-4 1.9-4 3.3-4 3.3 2.3 3.3 4z"/>
<path d="M1537.5 258.5c0 4.5-4.9 10.4-8.5 10.4s-8.5-5.9-8.5-10.4 4.9-10.4 8.5-10.4 8.5 5.9 8.5 10.4zM1535.7 258.5c0 3.5-3.8 8.2-6.7 8.2s-6.7-4.7-6.7-8.2 3.8-8.2 6.7-8.2 6.7 4.7 6.7 8.2zM1533.9 258.5c0 2.6-2.8 6-4.9 6s-4.9-3.4-4.9-6 2.8-6 4.9-6 4.9 3.4 4.9 6zM1532.2 258.5c0 1.7-1.8 4-3.2 4s-3.2-2.3-3.2-4 1.8-4 3.2-4 3.2 2.3 3.2 4z"/>
<path d="M1583.9 295.2c0 4.4-5 10.3-8.8 10.3s-8.8-5.9-8.8-10.3 5-10.3 8.8-10.3 8.8 5.9 8.8 10.3zM1582.1 295.2c0 3.5-4 8.1-7 8.1s-7-4.6-7-8.1 4-8.1 7-8.1 7 4.6 7 8.1zM1580.2 295.2c0 2.6-2.9 6-5.1 6s-5.1-3.4-5.1-6 2.9-6 5.1-6 5.1 3.4 5.1 6zM1578.5 295.2c0 1.7-1.9 3.9-3.3 3.9s-3.3-2.2-3.3-3.9 1.9-3.9 3.3-3.9 3.3 2.2 3.3 3.9z"/>
<path d="M1543.1 313.6c0 4.7-5.1 11-9 11s-9-6.2-9-11 5.1-11 9-11 9 6.2 9 11zM1541.2 313.6c0 3.7-4 8.7-7.1 8.7s-7.1-4.9-7.1-8.7 4-8.7 7.1-8.7 7.1 4.9 7.1 8.7zM1539.3 313.6c0 2.7-3 6.4-5.2 6.4s-5.2-3.6-5.2-6.4 3-6.4 5.2-6.4 5.2 3.6 5.2 6.4zM1537.5 313.6c0 1.8-1.9 4.2-3.4 4.2s-3.4-2.4-3.4-4.2 1.9-4.2 3.4-4.2 3.4 2.4 3.4 4.2z"/>
<path d="M1595.6 317.6c0 2.1-1.7 4.9-3 4.9s-3-2.8-3-4.9 1.7-4.9 3-4.9 3 2.8 3 4.9zM1594.2 317.6c0 1.2-.9 2.7-1.6 2.7s-1.6-1.5-1.6-2.7 .9-2.7 1.6-2.7 1.6 1.5 1.6 2.7z"/>
<path d="M1494.5 312.2c0 4.2-5 9.7-8.7 9.7s-8.7-5.5-8.7-9.7 5-9.7 8.7-9.7 8.7 5.5 8.7 9.7zM1491.7 312.2c0 2.8-3.4 6.6-5.9 6.6s-5.9-3.8-5.9-6.6 3.4-6.6 5.9-6.6 5.9 3.8 5.9 6.6zM1489.1 312.2c0 1.6-1.9 3.7-3.3 3.7s-3.3-2.1-3.3-3.7 1.9-3.7 3.3-3.7 3.3 2.1 3.3 3.7z" stroke-opacity=".8"/>
<path d="M1349 527.6c0 4.1-4.9 9.6-8.7 9.6s-8.7-5.5-8.7-9.6 4.9-9.6 8.7-9.6 8.7 5.5 8.7 9.6zM1346.3 527.6c0 2.8-3.4 6.5-5.9 6.5s-5.9-3.7-5.9-6.5 3.4-6.5 5.9-6.5 5.9 3.7 5.9 6.5zM1343.7 527.6c0 1.6-1.9 3.7-3.3 3.7s-3.3-2.1-3.3-3.7 1.9-3.7 3.3-3.7 3.3 2.1 3.3 3.7z" stroke-opacity=".8"/>
<path d="M1447.2 347.6c0 4.6-5 10.8-8.8 10.8s-8.8-6.2-8.8-10.8 5-10.8 8.8-10.8 8.8 6.2 8.8 10.8zM1445.3 347.6c0 3.7-4 8.5-7 8.5s-7-4.9-7-8.5 4-8.5 7-8.5 7 4.9 7 8.5zM1443.5 347.6c0 2.7-2.9 6.3-5.1 6.3s-5.1-3.6-5.1-6.3 2.9-6.3 5.1-6.3 5.1 3.6 5.1 6.3zM1441.7 347.6c0 1.8-1.9 4.1-3.4 4.1s-3.4-2.3-3.4-4.1 1.9-4.1 3.4-4.1 3.4 2.3 3.4 4.1z"/>
<path d="M1158.7 391.2c0 4.6-5 10.6-8.7 10.6s-8.7-6.1-8.7-10.6 5-10.6 8.7-10.6 8.7 6.1 8.7 10.6zM1156.8 391.2c0 3.6-3.9 8.4-6.9 8.4s-6.9-4.8-6.9-8.4 3.9-8.4 6.9-8.4 6.9 4.8 6.9 8.4zM1155 391.2c0 2.7-2.9 6.2-5 6.2s-5-3.5-5-6.2 2.9-6.2 5-6.2 5 3.5 5 6.2zM1153.3 391.2c0 1.7-1.9 4-3.3 4s-3.3-2.3-3.3-4 1.9-4 3.3-4 3.3 2.3 3.3 4z"/>
<path d="M1170.2 401.8c0 4.1-4.9 9.6-8.6 9.6s-8.6-5.5-8.6-9.6 4.9-9.6 8.6-9.6 8.6 5.5 8.6 9.6zM1168.3 401.8c0 3.3-3.9 7.6-6.8 7.6s-6.8-4.3-6.8-7.6 3.9-7.6 6.8-7.6 6.8 4.3 6.8 7.6zM1166.5 401.8c0 2.4-2.8 5.6-5 5.6s-5-3.2-5-5.6 2.8-5.6 5-5.6 5 3.2 5 5.6zM1164.8 401.8c0 1.6-1.9 3.6-3.3 3.6s-3.3-2.1-3.3-3.6 1.9-3.6 3.3-3.6 3.3 2.1 3.3 3.6z"/>
<path d="M1175.1 427.3c0 4.2-5 9.8-8.8 9.8s-8.8-5.6-8.8-9.8 5-9.8 8.8-9.8 8.8 5.6 8.8 9.8zM1173.3 427.3c0 3.3-4 7.7-6.9 7.7s-6.9-4.4-6.9-7.7 4-7.7 6.9-7.7 6.9 4.4 6.9 7.7zM1171.4 427.3c0 2.4-2.9 5.7-5.1 5.7s-5.1-3.2-5.1-5.7 2.9-5.7 5.1-5.7 5.1 3.2 5.1 5.7zM1169.7 427.3c0 1.6-1.9 3.7-3.3 3.7s-3.3-2.1-3.3-3.7 1.9-3.7 3.3-3.7 3.3 2.1 3.3 3.7z"/>
<path d="M1236.2 437.5c0 4.7-5.1 10.8-8.9 10.8s-8.9-6.2-8.9-10.8 5.1-10.8 8.9-10.8 8.9 6.2 8.9 10.8zM1234.4 437.5c0 3.7-4 8.6-7 8.6s-7-4.9-7-8.6 4-8.6 7-8.6 7 4.9 7 8.6zM1232.5 437.5c0 2.7-2.9 6.3-5.1 6.3s-5.1-3.6-5.1-6.3 2.9-6.3 5.1-6.3 5.1 3.6 5.1 6.3zM1230.7 437.5c0 1.8-1.9 4.1-3.4 4.1s-3.4-2.3-3.4-4.1 1.9-4.1 3.4-4.1 3.4 2.3 3.4 4.1z"/>
<path d="M1303.3 361.1c0 4.3-5.2 10-9 10s-9-5.7-9-10 5.2-10 9-10 9 5.7 9 10zM1301.4 361.1c0 3.4-4.1 7.9-7.1 7.9s-7.1-4.5-7.1-7.9 4.1-7.9 7.1-7.9 7.1 4.5 7.1 7.9zM1299.5 361.1c0 2.5-3 5.8-5.2 5.8s-5.2-3.3-5.2-5.8 3-5.8 5.2-5.8 5.2 3.3 5.2 5.8zM1297.7 361.1c0 1.6-2 3.8-3.4 3.8s-3.4-2.2-3.4-3.8 2-3.8 3.4-3.8 3.4 2.2 3.4 3.8z"/>
<path d="M1340.1 351.9c0 4.6-5.5 10.7-9.7 10.7s-9.7-6.1-9.7-10.7 5.5-10.7 9.7-10.7 9.7 6.1 9.7 10.7zM1338 351.9c0 3.6-4.4 8.5-7.7 8.5s-7.7-4.8-7.7-8.5 4.4-8.5 7.7-8.5 7.7 4.8 7.7 8.5zM1336 351.9c0 2.7-3.2 6.2-5.6 6.2s-5.6-3.5-5.6-6.2 3.2-6.2 5.6-6.2 5.6 3.5 5.6 6.2zM1334 351.9c0 1.7-2.1 4.1-3.7 4.1s-3.7-2.3-3.7-4.1 2.1-4.1 3.7-4.1 3.7 2.3 3.7 4.1z"/>
<path d="M1321.5 385.3c0 4.1-4.9 9.5-8.5 9.5s-8.5-5.4-8.5-9.5 4.9-9.5 8.5-9.5 8.5 5.4 8.5 9.5zM1319.7 385.3c0 3.2-3.8 7.5-6.8 7.5s-6.8-4.3-6.8-7.5 3.8-7.5 6.8-7.5 6.8 4.3 6.8 7.5zM1317.9 385.3c0 2.4-2.8 5.5-5 5.5s-5-3.1-5-5.5 2.8-5.5 5-5.5 5 3.1 5 5.5zM1316.2 385.3c0 1.6-1.9 3.6-3.2 3.6s-3.2-2.1-3.2-3.6 1.9-3.6 3.2-3.6 3.2 2.1 3.2 3.6z"/>
<path d="M1402.6 351.4c0 4.6-5 10.7-8.7 10.7s-8.7-6.1-8.7-10.7 5-10.7 8.7-10.7 8.7 6.1 8.7 10.7zM1400.8 351.4c0 3.6-3.9 8.4-6.9 8.4s-6.9-4.8-6.9-8.4 3.9-8.4 6.9-8.4 6.9 4.8 6.9 8.4zM1399 351.4c0 2.7-2.9 6.2-5.1 6.2s-5.1-3.5-5.1-6.2 2.9-6.2 5.1-6.2 5.1 3.5 5.1 6.2zM1397.2 351.4c0 1.7-1.9 4.1-3.3 4.1s-3.3-2.3-3.3-4.1 1.9-4.1 3.3-4.1 3.3 2.3 3.3 4.1z"/>
<path d="M1378.5 386.6c0 4.6-5.2 10.6-9.2 10.6s-9.2-6.1-9.2-10.6 5.2-10.6 9.2-10.6 9.2 6.1 9.2 10.6zM1376.6 386.6c0 3.6-4.1 8.4-7.2 8.4s-7.2-4.8-7.2-8.4 4.1-8.4 7.2-8.4 7.2 4.8 7.2 8.4zM1374.6 386.6c0 2.6-3 6.2-5.3 6.2s-5.3-3.5-5.3-6.2 3-6.2 5.3-6.2 5.3 3.5 5.3 6.2zM1372.8 386.6c0 1.7-2 4-3.5 4s-3.5-2.3-3.5-4 2-4 3.5-4 3.5 2.3 3.5 4z"/>
<path d="M1274.4 427.8c0 4.3-4.6 10-8 10s-8-5.7-8-10 4.6-10 8-10 8 5.7 8 10zM1272.8 427.8c0 3.4-3.6 7.9-6.3 7.9s-6.3-4.5-6.3-7.9 3.6-7.9 6.3-7.9 6.3 4.5 6.3 7.9zM1271.1 427.8c0 2.5-2.6 5.8-4.6 5.8s-4.6-3.3-4.6-5.8 2.6-5.8 4.6-5.8 4.6 3.3 4.6 5.8zM1269.5 427.8c0 1.6-1.7 3.8-3 3.8s-3-2.2-3-3.8 1.7-3.8 3-3.8 3 2.2 3 3.8z"/>
<path d="M1286.6 406.8c0 4.1-4.6 9.5-8.1 9.5s-8.1-5.4-8.1-9.5 4.6-9.5 8.1-9.5 8.1 5.4 8.1 9.5zM1284.9 406.8c0 3.2-3.6 7.5-6.4 7.5s-6.4-4.3-6.4-7.5 3.6-7.5 6.4-7.5 6.4 4.3 6.4 7.5zM1283.2 406.8c0 2.4-2.7 5.5-4.7 5.5s-4.7-3.1-4.7-5.5 2.7-5.5 4.7-5.5 4.7 3.1 4.7 5.5zM1281.6 406.8c0 1.6-1.8 3.6-3.1 3.6s-3.1-2.1-3.1-3.6 1.8-3.6 3.1-3.6 3.1 2.1 3.1 3.6z"/>
<path d="M1339.1 400.7c0 4.3-5.1 10-9 10s-9-5.7-9-10 5.1-10 9-10 9 5.7 9 10zM1337.2 400.7c0 3.4-4.1 7.9-7.1 7.9s-7.1-4.5-7.1-7.9 4.1-7.9 7.1-7.9 7.1 4.5 7.1 7.9zM1335.3 400.7c0 2.5-3 5.8-5.2 5.8s-5.2-3.3-5.2-5.8 3-5.8 5.2-5.8 5.2 3.3 5.2 5.8zM1333.5 400.7c0 1.6-2 3.8-3.4 3.8s-3.4-2.2-3.4-3.8 2-3.8 3.4-3.8 3.4 2.2 3.4 3.8z"/>
<path d="M1353.9 393.3c0 4.1-4.9 9.5-8.6 9.5s-8.6-5.4-8.6-9.5 4.9-9.5 8.6-9.5 8.6 5.4 8.6 9.5zM1352.1 393.3c0 3.2-3.9 7.5-6.8 7.5s-6.8-4.3-6.8-7.5 3.9-7.5 6.8-7.5 6.8 4.3 6.8 7.5zM1350.3 393.3c0 2.4-2.8 5.5-5 5.5s-5-3.1-5-5.5 2.8-5.5 5-5.5 5 3.1 5 5.5zM1348.6 393.3c0 1.6-1.9 3.6-3.3 3.6s-3.3-2.1-3.3-3.6 1.9-3.6 3.3-3.6 3.3 2.1 3.3 3.6z"/>
<path d="M1280.3 459c0 4.7-5.1 11-9 11s-9-6.3-9-11 5.1-11 9-11 9 6.3 9 11zM1278.4 459c0 3.7-4 8.7-7.1 8.7s-7.1-4.9-7.1-8.7 4-8.7 7.1-8.7 7.1 4.9 7.1 8.7zM1276.5 459c0 2.7-3 6.4-5.2 6.4s-5.2-3.6-5.2-6.4 3-6.4 5.2-6.4 5.2 3.6 5.2 6.4zM1274.7 459c0 1.8-1.9 4.2-3.4 4.2s-3.4-2.4-3.4-4.2 1.9-4.2 3.4-4.2 3.4 2.4 3.4 4.2z"/>
<path d="M1268.5 472.8c0 4.3-5.2 10-9 10s-9-5.7-9-10 5.2-10 9-10 9 5.7 9 10zM1266.6 472.8c0 3.4-4.1 7.9-7.1 7.9s-7.1-4.5-7.1-7.9 4.1-7.9 7.1-7.9 7.1 4.5 7.1 7.9zM1264.7 472.8c0 2.5-3 5.8-5.2 5.8s-5.2-3.3-5.2-5.8 3-5.8 5.2-5.8 5.2 3.3 5.2 5.8zM1262.9 472.8c0 1.6-2 3.8-3.4 3.8s-3.4-2.2-3.4-3.8 2-3.8 3.4-3.8 3.4 2.2 3.4 3.8z"/>
<path d="M1343.5 456.3c0 5.8-7.1 13.4-12.5 13.4s-12.5-7.6-12.5-13.4 7.1-13.4 12.5-13.4 12.5 7.6 12.5 13.4zM1340.9 456.3c0 4.6-5.6 10.6-9.8 10.6s-9.8-6-9.8-10.6 5.6-10.6 9.8-10.6 9.8 6 9.8 10.6zM1338.3 456.3c0 3.3-4.1 7.8-7.2 7.8s-7.2-4.4-7.2-7.8 4.1-7.8 7.2-7.8 7.2 4.4 7.2 7.8zM1335.8 456.3c0 2.2-2.7 5.1-4.7 5.1s-4.7-2.9-4.7-5.1 2.7-5.1 4.7-5.1 4.7 2.9 4.7 5.1z"/>
<path d="M1392.1 460.3c0 4.1-4.9 9.5-8.6 9.5s-8.6-5.4-8.6-9.5 4.9-9.5 8.6-9.5 8.6 5.4 8.6 9.5zM1390.3 460.3c0 3.2-3.9 7.5-6.8 7.5s-6.8-4.3-6.8-7.5 3.9-7.5 6.8-7.5 6.8 4.3 6.8 7.5zM1388.5 460.3c0 2.4-2.8 5.5-5 5.5s-5-3.2-5-5.5 2.8-5.5 5-5.5 5 3.2 5 5.5zM1386.7 460.3c0 1.6-1.9 3.6-3.3 3.6s-3.3-2.1-3.3-3.6 1.9-3.6 3.3-3.6 3.3 2.1 3.3 3.6z"/>
<path d="M1346.3 457.4c0 4.2-5 9.7-8.7 9.7s-8.7-5.5-8.7-9.7 5-9.7 8.7-9.7 8.7 5.5 8.7 9.7zM1344.5 457.4c0 3.3-3.9 7.6-6.9 7.6s-6.9-4.4-6.9-7.6 3.9-7.6 6.9-7.6 6.9 4.4 6.9 7.6zM1342.6 457.4c0 2.4-2.9 5.6-5 5.6s-5-3.2-5-5.6 2.9-5.6 5-5.6 5 3.2 5 5.6zM1340.9 457.4c0 1.6-1.9 3.7-3.3 3.7s-3.3-2.1-3.3-3.7 1.9-3.7 3.3-3.7 3.3 2.1 3.3 3.7z"/>
<path d="M1407.6 411c0 5.1-5.7 12-10 12s-10-6.8-10-12 5.7-12 10-12 10 6.8 10 12zM1405.5 411c0 4.1-4.5 9.5-7.9 9.5s-7.9-5.4-7.9-9.5 4.5-9.5 7.9-9.5 7.9 5.4 7.9 9.5zM1403.4 411c0 3-3.3 6.9-5.8 6.9s-5.8-4-5.8-6.9 3.3-6.9 5.8-6.9 5.8 4 5.8 6.9zM1401.4 411c0 2-2.2 4.5-3.8 4.5s-3.8-2.6-3.8-4.5 2.2-4.5 3.8-4.5 3.8 2.6 3.8 4.5z"/>
<path d="M1418.2 413.9c0 4.9-5.4 11.4-9.5 11.4s-9.5-6.5-9.5-11.4 5.4-11.4 9.5-11.4 9.5 6.5 9.5 11.4zM1416.2 413.9c0 3.9-4.3 9-7.5 9s-7.5-5.1-7.5-9 4.3-9 7.5-9 7.5 5.1 7.5 9zM1414.2 413.9c0 2.8-3.1 6.6-5.5 6.6s-5.5-3.8-5.5-6.6 3.1-6.6 5.5-6.6 5.5 3.8 5.5 6.6zM1412.3 413.9c0 1.9-2.1 4.3-3.6 4.3s-3.6-2.5-3.6-4.3 2.1-4.3 3.6-4.3 3.6 2.5 3.6 4.3z"/>
<path d="M1439.6 454c0 4.5-4.9 10.5-8.6 10.5s-8.6-6-8.6-10.5 4.9-10.5 8.6-10.5 8.6 6 8.6 10.5zM1437.8 454c0 3.6-3.9 8.3-6.8 8.3s-6.8-4.7-6.8-8.3 3.9-8.3 6.8-8.3 6.8 4.7 6.8 8.3zM1436 454c0 2.6-2.8 6.1-5 6.1s-5-3.5-5-6.1 2.8-6.1 5-6.1 5 3.5 5 6.1zM1434.3 454c0 1.7-1.9 4-3.3 4s-3.3-2.3-3.3-4 1.9-4 3.3-4 3.3 2.3 3.3 4z"/>
<path d="M1426.6 470.6c0 5.1-5.1 11.9-9 11.9s-9-6.8-9-11.9 5.1-11.9 9-11.9 9 6.8 9 11.9zM1424.7 470.6c0 4.1-4 9.4-7.1 9.4s-7.1-5.4-7.1-9.4 4-9.4 7.1-9.4 7.1 5.4 7.1 9.4zM1422.9 470.6c0 3-3 6.9-5.2 6.9s-5.2-3.9-5.2-6.9 3-6.9 5.2-6.9 5.2 3.9 5.2 6.9zM1421.1 470.6c0 2-1.9 4.5-3.4 4.5s-3.4-2.6-3.4-4.5 1.9-4.5 3.4-4.5 3.4 2.6 3.4 4.5z"/>
<path d="M1280.7 498.7c0 4.7-5.1 11-9 11s-9-6.3-9-11 5.1-11 9-11 9 6.3 9 11zM1278.9 498.7c0 3.7-4.1 8.7-7.1 8.7s-7.1-5-7.1-8.7 4.1-8.7 7.1-8.7 7.1 5 7.1 8.7zM1277 498.7c0 2.7-3 6.4-5.2 6.4s-5.2-3.6-5.2-6.4 3-6.4 5.2-6.4 5.2 3.6 5.2 6.4zM1275.2 498.7c0 1.8-2 4.2-3.4 4.2s-3.4-2.4-3.4-4.2 2-4.2 3.4-4.2 3.4 2.4 3.4 4.2z"/>
<path d="M1297.4 513.2c0 4.3-4.9 10.1-8.6 10.1s-8.6-5.7-8.6-10.1 4.9-10.1 8.6-10.1 8.6 5.7 8.6 10.1zM1295.6 513.2c0 3.4-3.9 7.9-6.8 7.9s-6.8-4.5-6.8-7.9 3.9-7.9 6.8-7.9 6.8 4.5 6.8 7.9zM1293.8 513.2c0 2.5-2.8 5.8-5 5.8s-5-3.3-5-5.8 2.8-5.8 5-5.8 5 3.3 5 5.8zM1292 513.2c0 1.6-1.9 3.8-3.3 3.8s-3.3-2.2-3.3-3.8 1.9-3.8 3.3-3.8 3.3 2.2 3.3 3.8z"/>
<path d="M1316.6 533.8c0 4.4-5.5 10.2-9.7 10.2s-9.7-5.8-9.7-10.2 5.5-10.2 9.7-10.2 9.7 5.8 9.7 10.2zM1314.6 533.8c0 3.5-4.4 8-7.7 8s-7.7-4.6-7.7-8 4.4-8 7.7-8 7.7 4.6 7.7 8zM1312.6 533.8c0 2.5-3.2 5.9-5.6 5.9s-5.6-3.4-5.6-5.9 3.2-5.9 5.6-5.9 5.6 3.4 5.6 5.9zM1310.6 533.8c0 1.7-2.1 3.9-3.7 3.9s-3.7-2.2-3.7-3.9 2.1-3.9 3.7-3.9 3.7 2.2 3.7 3.9z"/>
<path d="M1444.9 493.3c0 4.5-4.3 10.4-7.6 10.4s-7.6-6-7.6-10.4 4.3-10.4 7.6-10.4 7.6 6 7.6 10.4zM1443.3 493.3c0 3.5-3.4 8.3-6 8.3s-6-4.7-6-8.3 3.4-8.3 6-8.3 6 4.7 6 8.3zM1441.8 493.3c0 2.6-2.5 6.1-4.4 6.1s-4.4-3.5-4.4-6.1 2.5-6.1 4.4-6.1 4.4 3.5 4.4 6.1zM1440.2 493.3c0 1.7-1.6 4-2.9 4s-2.9-2.3-2.9-4 1.6-4 2.9-4 2.9 2.3 2.9 4z"/>
<path d="M1508.2 502.8c0 4.5-5.5 10.5-9.6 10.5s-9.6-6-9.6-10.5 5.5-10.5 9.6-10.5 9.6 6 9.6 10.5zM1506.2 502.8c0 3.6-4.3 8.3-7.6 8.3s-7.6-4.7-7.6-8.3 4.3-8.3 7.6-8.3 7.6 4.7 7.6 8.3zM1504.1 502.8c0 2.6-3.2 6.1-5.5 6.1s-5.5-3.5-5.5-6.1 3.2-6.1 5.5-6.1 5.5 3.5 5.5 6.1zM1502.2 502.8c0 1.7-2.1 4-3.6 4s-3.6-2.3-3.6-4 2.1-4 3.6-4 3.6 2.3 3.6 4z"/>
<path d="M1561.4 414.2c0 4.2-4.5 9.9-7.9 9.9s-7.9-5.6-7.9-9.9 4.5-9.9 7.9-9.9 7.9 5.6 7.9 9.9zM1559.7 414.2c0 3.4-3.6 7.8-6.2 7.8s-6.2-4.4-6.2-7.8 3.6-7.8 6.2-7.8 6.2 4.4 6.2 7.8zM1558.1 414.2c0 2.5-2.6 5.7-4.6 5.7s-4.6-3.3-4.6-5.7 2.6-5.7 4.6-5.7 4.6 3.3 4.6 5.7zM1556.5 414.2c0 1.6-1.7 3.8-3 3.8s-3-2.1-3-3.8 1.7-3.8 3-3.8 3 2.1 3 3.8z"/>
<path d="M1631.1 372.5c0 2.9-2.7 6.7-4.8 6.7s-4.8-3.8-4.8-6.7 2.7-6.7 4.8-6.7 4.8 3.8 4.8 6.7zM1629 372.5c0 1.6-1.5 3.7-2.6 3.7s-2.6-2.1-2.6-3.7 1.5-3.7 2.6-3.7 2.6 2.1 2.6 3.7z"/>
<path d="M1449.8 373.1c0 5-4.4 11.5-7.7 11.5s-7.7-6.6-7.7-11.5 4.4-11.5 7.7-11.5 7.7 6.6 7.7 11.5zM1448.2 373.1c0 3.9-3.5 9.1-6.1 9.1s-6.1-5.2-6.1-9.1 3.5-9.1 6.1-9.1 6.1 5.2 6.1 9.1zM1446.6 373.1c0 2.9-2.5 6.7-4.5 6.7s-4.5-3.8-4.5-6.7 2.5-6.7 4.5-6.7 4.5 3.8 4.5 6.7zM1445.1 373.1c0 1.9-1.7 4.4-2.9 4.4s-2.9-2.5-2.9-4.4 1.7-4.4 2.9-4.4 2.9 2.5 2.9 4.4z"/>
<path d="M1088.2 662c0 4.2-5.1 9.9-8.9 9.9s-8.9-5.6-8.9-9.9 5.1-9.9 8.9-9.9 8.9 5.6 8.9 9.9zM1086.4 662c0 3.4-4 7.8-7 7.8s-7-4.4-7-7.8 4-7.8 7-7.8 7 4.4 7 7.8zM1084.5 662c0 2.5-2.9 5.7-5.1 5.7s-5.1-3.3-5.1-5.7 2.9-5.7 5.1-5.7 5.1 3.3 5.1 5.7zM1082.7 662c0 1.6-1.9 3.7-3.4 3.7s-3.4-2.1-3.4-3.7 1.9-3.7 3.4-3.7 3.4 2.1 3.4 3.7z"/>
<path d="M1157.9 601.3c0 4.3-5.1 9.9-8.9 9.9s-8.9-5.6-8.9-9.9 5.1-9.9 8.9-9.9 8.9 5.6 8.9 9.9zM1156 601.3c0 3.4-4 7.8-7 7.8s-7-4.5-7-7.8 4-7.8 7-7.8 7 4.5 7 7.8zM1154.2 601.3c0 2.5-2.9 5.7-5.2 5.7s-5.2-3.3-5.2-5.7 2.9-5.7 5.2-5.7 5.2 3.3 5.2 5.7zM1152.4 601.3c0 1.6-1.9 3.8-3.4 3.8s-3.4-2.1-3.4-3.8 1.9-3.8 3.4-3.8 3.4 2.1 3.4 3.8z"/>
<path d="M1196.3 618.6c0 4.2-4.8 9.8-8.3 9.8s-8.3-5.6-8.3-9.8 4.8-9.8 8.3-9.8 8.3 5.6 8.3 9.8zM1194.5 618.6c0 3.3-3.8 7.8-6.6 7.8s-6.6-4.4-6.6-7.8 3.8-7.8 6.6-7.8 6.6 4.4 6.6 7.8zM1192.8 618.6c0 2.4-2.8 5.7-4.8 5.7s-4.8-3.2-4.8-5.7 2.8-5.7 4.8-5.7 4.8 3.2 4.8 5.7zM1191.1 618.6c0 1.6-1.8 3.7-3.2 3.7s-3.2-2.1-3.2-3.7 1.8-3.7 3.2-3.7 3.2 2.1 3.2 3.7z"/>
<path d="M1232.2 613.7c0 4.1-5.4 9.5-9.5 9.5s-9.5-5.4-9.5-9.5 5.4-9.5 9.5-9.5 9.5 5.4 9.5 9.5zM1230.2 613.7c0 3.2-4.3 7.5-7.5 7.5s-7.5-4.3-7.5-7.5 4.3-7.5 7.5-7.5 7.5 4.3 7.5 7.5zM1228.2 613.7c0 2.4-3.1 5.5-5.5 5.5s-5.5-3.1-5.5-5.5 3.1-5.5 5.5-5.5 5.5 3.1 5.5 5.5zM1226.3 613.7c0 1.6-2.1 3.6-3.6 3.6s-3.6-2.1-3.6-3.6 2.1-3.6 3.6-3.6 3.6 2.1 3.6 3.6z"/>
</g>
<g stroke="#14508c">
<path d="M1214.3 289.9c0 4.3-5.1 10.1-9 10.1s-9-5.8-9-10.1 5.1-10.1 9-10.1 9 5.8 9 10.1zM1212.5 289.9c0 3.4-4 8-7.1 8s-7.1-4.6-7.1-8 4-8 7.1-8 7.1 4.6 7.1 8zM1210.6 289.9c0 2.5-3 5.9-5.2 5.9s-5.2-3.3-5.2-5.9 3-5.9 5.2-5.9 5.2 3.3 5.2 5.9zM1208.8 289.9c0 1.7-1.9 3.8-3.4 3.8s-3.4-2.2-3.4-3.8 1.9-3.8 3.4-3.8 3.4 2.2 3.4 3.8z"/>
<path d="M1243.6 245.7c0 5.1-5.9 11.9-10.4 11.9s-10.4-6.8-10.4-11.9 5.9-11.9 10.4-11.9 10.4 6.8 10.4 11.9zM1241.4 245.7c0 4-4.7 9.4-8.2 9.4s-8.2-5.3-8.2-9.4 4.7-9.4 8.2-9.4 8.2 5.3 8.2 9.4zM1239.2 245.7c0 3-3.4 6.9-6 6.9s-6-3.9-6-6.9 3.4-6.9 6-6.9 6 3.9 6 6.9zM1237.1 245.7c0 1.9-2.2 4.5-3.9 4.5s-3.9-2.6-3.9-4.5 2.2-4.5 3.9-4.5 3.9 2.6 3.9 4.5z"/>
<path d="M1298.6 242.8c0 4.6-5.6 10.8-9.8 10.8s-9.8-6.2-9.8-10.8 5.6-10.8 9.8-10.8 9.8 6.2 9.8 10.8zM1296.6 242.8c0 3.7-4.4 8.5-7.8 8.5s-7.8-4.9-7.8-8.5 4.4-8.5 7.8-8.5 7.8 4.9 7.8 8.5zM1294.5 242.8c0 2.7-3.2 6.3-5.7 6.3s-5.7-3.6-5.7-6.3 3.2-6.3 5.7-6.3 5.7 3.6 5.7 6.3zM1292.5 242.8c0 1.8-2.1 4.1-3.7 4.1s-3.7-2.3-3.7-4.1 2.1-4.1 3.7-4.1 3.7 2.3 3.7 4.1z"/>
<path d="M1408.9 263.1c0 5.1-5.7 11.9-9.9 11.9s-9.9-6.8-9.9-11.9 5.7-11.9 9.9-11.9 9.9 6.8 9.9 11.9zM1406.8 263.1c0 4.1-4.5 9.4-7.9 9.4s-7.9-5.4-7.9-9.4 4.5-9.4 7.9-9.4 7.9 5.4 7.9 9.4zM1404.7 263.1c0 3-3.3 6.9-5.8 6.9s-5.8-3.9-5.8-6.9 3.3-6.9 5.8-6.9 5.8 3.9 5.8 6.9zM1402.8 263.1c0 1.9-2.2 4.5-3.8 4.5s-3.8-2.6-3.8-4.5 2.2-4.5 3.8-4.5 3.8 2.6 3.8 4.5z"/>
<path d="M1327.5 278.9c0 5-5.6 11.7-9.8 11.7s-9.8-6.7-9.8-11.7 5.6-11.7 9.8-11.7 9.8 6.7 9.8 11.7zM1325.5 278.9c0 4-4.4 9.3-7.7 9.3s-7.7-5.3-7.7-9.3 4.4-9.3 7.7-9.3 7.7 5.3 7.7 9.3zM1323.4 278.9c0 2.9-3.2 6.8-5.7 6.8s-5.7-3.9-5.7-6.8 3.2-6.8 5.7-6.8 5.7 3.9 5.7 6.8zM1321.5 278.9c0 1.9-2.1 4.5-3.7 4.5s-3.7-2.5-3.7-4.5 2.1-4.5 3.7-4.5 3.7 2.5 3.7 4.5z"/>
<path d="M1325.3 298.7c0 5-5.5 11.6-9.7 11.6s-9.7-6.6-9.7-11.6 5.5-11.6 9.7-11.6 9.7 6.6 9.7 11.6zM1323.3 298.7c0 4-4.4 9.2-7.7 9.2s-7.7-5.2-7.7-9.2 4.4-9.2 7.7-9.2 7.7 5.2 7.7 9.2zM1321.2 298.7c0 2.9-3.2 6.7-5.6 6.7s-5.6-3.8-5.6-6.7 3.2-6.7 5.6-6.7 5.6 3.8 5.6 6.7zM1319.3 298.7c0 1.9-2.1 4.4-3.7 4.4s-3.7-2.5-3.7-4.4 2.1-4.4 3.7-4.4 3.7 2.5 3.7 4.4z"/>
<path d="M1302.5 307.9c0 5.1-5.6 11.8-9.9 11.8s-9.9-6.7-9.9-11.8 5.6-11.8 9.9-11.8 9.9 6.7 9.9 11.8zM1300.5 307.9c0 4-4.4 9.3-7.8 9.3s-7.8-5.3-7.8-9.3 4.4-9.3 7.8-9.3 7.8 5.3 7.8 9.3zM1298.4 307.9c0 2.9-3.3 6.9-5.7 6.9s-5.7-3.9-5.7-6.9 3.3-6.9 5.7-6.9 5.7 3.9 5.7 6.9zM1296.4 307.9c0 1.9-2.1 4.5-3.7 4.5s-3.7-2.6-3.7-4.5 2.1-4.5 3.7-4.5 3.7 2.6 3.7 4.5z"/>
<path d="M1413.4 332.1c0 4.7-5.1 10.8-8.9 10.8s-8.9-6.2-8.9-10.8 5.1-10.8 8.9-10.8 8.9 6.2 8.9 10.8zM1411.6 332.1c0 3.7-4 8.6-7 8.6s-7-4.9-7-8.6 4-8.6 7-8.6 7 4.9 7 8.6zM1409.7 332.1c0 2.7-2.9 6.3-5.1 6.3s-5.1-3.6-5.1-6.3 2.9-6.3 5.1-6.3 5.1 3.6 5.1 6.3zM1407.9 332.1c0 1.8-1.9 4.1-3.4 4.1s-3.4-2.3-3.4-4.1 1.9-4.1 3.4-4.1 3.4 2.3 3.4 4.1z"/>
<path d="M1404.1 192.7c0 3.7-4.4 8.7-7.8 8.7s-7.8-5-7.8-8.7 4.4-8.7 7.8-8.7 7.8 5 7.8 8.7zM1402.4 192.7c0 3-3.5 6.9-6.1 6.9s-6.1-3.9-6.1-6.9 3.5-6.9 6.1-6.9 6.1 3.9 6.1 6.9zM1400.8 192.7c0 2.2-2.6 5.1-4.5 5.1s-4.5-2.9-4.5-5.1 2.6-5.1 4.5-5.1 4.5 2.9 4.5 5.1zM1399.3 192.7c0 1.4-1.7 3.3-2.9 3.3s-2.9-1.9-2.9-3.3 1.7-3.3 2.9-3.3 2.9 1.9 2.9 3.3z"/>
<path d="M1475.5 231.1c0 4.4-4.8 10.3-8.5 10.3s-8.5-5.9-8.5-10.3 4.8-10.3 8.5-10.3 8.5 5.9 8.5 10.3zM1473.7 231.1c0 3.5-3.8 8.2-6.7 8.2s-6.7-4.7-6.7-8.2 3.8-8.2 6.7-8.2 6.7 4.7 6.7 8.2zM1472 231.1c0 2.6-2.8 6-4.9 6s-4.9-3.4-4.9-6 2.8-6 4.9-6 4.9 3.4 4.9 6zM1470.3 231.1c0 1.7-1.8 3.9-3.2 3.9s-3.2-2.2-3.2-3.9 1.8-3.9 3.2-3.9 3.2 2.2 3.2 3.9z"/>
<path d="M1537.7 258.1c0 4.5-4.9 10.5-8.6 10.5s-8.6-6-8.6-10.5 4.9-10.5 8.6-10.5 8.6 6 8.6 10.5zM1535.9 258.1c0 3.6-3.9 8.3-6.8 8.3s-6.8-4.7-6.8-8.3 3.9-8.3 6.8-8.3 6.8 4.7 6.8 8.3zM1534.1 258.1c0 2.6-2.8 6.1-5 6.1s-5-3.5-5-6.1 2.8-6.1 5-6.1 5 3.5 5 6.1zM1532.3 258.1c0 1.7-1.9 4-3.3 4s-3.3-2.3-3.3-4 1.9-4 3.3-4 3.3 2.3 3.3 4z"/>
<path d="M1583.7 295.2c0 4.4-5 10.1-8.7 10.1s-8.7-5.8-8.7-10.1 5-10.1 8.7-10.1 8.7 5.8 8.7 10.1zM1581.9 295.2c0 3.4-3.9 8-6.9 8s-6.9-4.6-6.9-8 3.9-8 6.9-8 6.9 4.6 6.9 8zM1580 295.2c0 2.5-2.9 5.9-5 5.9s-5-3.4-5-5.9 2.9-5.9 5-5.9 5 3.4 5 5.9zM1578.3 295.2c0 1.7-1.9 3.9-3.3 3.9s-3.3-2.2-3.3-3.9 1.9-3.9 3.3-3.9 3.3 2.2 3.3 3.9z"/>
<path d="M1542.1 313.5c0 4.6-5 10.8-8.8 10.8s-8.8-6.1-8.8-10.8 5-10.8 8.8-10.8 8.8 6.1 8.8 10.8zM1540.3 313.5c0 3.7-4 8.5-7 8.5s-7-4.8-7-8.5 4-8.5 7-8.5 7 4.8 7 8.5zM1538.4 313.5c0 2.7-2.9 6.2-5.1 6.2s-5.1-3.6-5.1-6.2 2.9-6.2 5.1-6.2 5.1 3.6 5.1 6.2zM1536.6 313.5c0 1.8-1.9 4.1-3.3 4.1s-3.3-2.3-3.3-4.1 1.9-4.1 3.3-4.1 3.3 2.3 3.3 4.1z"/>
<path d="M1596.2 317.1c0 2.1-1.7 4.9-2.9 4.9s-2.9-2.8-2.9-4.9 1.7-4.9 2.9-4.9 2.9 2.8 2.9 4.9zM1594.8 317.1c0 1.2-.9 2.7-1.6 2.7s-1.6-1.5-1.6-2.7 .9-2.7 1.6-2.7 1.6 1.5 1.6 2.7z"/>
<path d="M1496.7 307.7c0 4.1-4.9 9.6-8.7 9.6s-8.7-5.5-8.7-9.6 4.9-9.6 8.7-9.6 8.7 5.5 8.7 9.6zM1494 307.7c0 2.8-3.4 6.5-5.9 6.5s-5.9-3.7-5.9-6.5 3.4-6.5 5.9-6.5 5.9 3.7 5.9 6.5zM1491.4 307.7c0 1.6-1.9 3.7-3.3 3.7s-3.3-2.1-3.3-3.7 1.9-3.7 3.3-3.7 3.3 2.1 3.3 3.7z" stroke-opacity=".8"/>
<path d="M1346.8 530.9c0 4.2-5 9.8-8.8 9.8s-8.8-5.6-8.8-9.8 5-9.8 8.8-9.8 8.8 5.6 8.8 9.8zM1344 530.9c0 2.9-3.4 6.6-6 6.6s-6-3.8-6-6.6 3.4-6.6 6-6.6 6 3.8 6 6.6zM1341.4 530.9c0 1.6-1.9 3.7-3.3 3.7s-3.3-2.1-3.3-3.7 1.9-3.7 3.3-3.7 3.3 2.1 3.3 3.7z" stroke-opacity=".8"/>
<path d="M1446.5 348.3c0 4.4-4.8 10.3-8.5 10.3s-8.5-5.9-8.5-10.3 4.8-10.3 8.5-10.3 8.5 5.9 8.5 10.3zM1444.7 348.3c0 3.5-3.8 8.2-6.7 8.2s-6.7-4.7-6.7-8.2 3.8-8.2 6.7-8.2 6.7 4.7 6.7 8.2zM1443 348.3c0 2.6-2.8 6-4.9 6s-4.9-3.4-4.9-6 2.8-6 4.9-6 4.9 3.4 4.9 6zM1441.3 348.3c0 1.7-1.8 3.9-3.2 3.9s-3.2-2.2-3.2-3.9 1.8-3.9 3.2-3.9 3.2 2.2 3.2 3.9z"/>
<path d="M1158.5 391.4c0 4.6-5 10.8-8.8 10.8s-8.8-6.1-8.8-10.8 5-10.8 8.8-10.8 8.8 6.1 8.8 10.8zM1156.6 391.4c0 3.7-4 8.5-6.9 8.5s-6.9-4.8-6.9-8.5 4-8.5 6.9-8.5 6.9 4.8 6.9 8.5zM1154.8 391.4c0 2.7-2.9 6.2-5.1 6.2s-5.1-3.6-5.1-6.2 2.9-6.2 5.1-6.2 5.1 3.6 5.1 6.2zM1153 391.4c0 1.8-1.9 4.1-3.3 4.1s-3.3-2.3-3.3-4.1 1.9-4.1 3.3-4.1 3.3 2.3 3.3 4.1z"/>
<path d="M1168.9 403.1c0 4.1-4.9 9.5-8.5 9.5s-8.5-5.4-8.5-9.5 4.9-9.5 8.5-9.5 8.5 5.4 8.5 9.5zM1167.1 403.1c0 3.2-3.8 7.5-6.7 7.5s-6.7-4.3-6.7-7.5 3.8-7.5 6.7-7.5 6.7 4.3 6.7 7.5zM1165.3 403.1c0 2.4-2.8 5.5-4.9 5.5s-4.9-3.1-4.9-5.5 2.8-5.5 4.9-5.5 4.9 3.1 4.9 5.5zM1163.6 403.1c0 1.5-1.8 3.6-3.2 3.6s-3.2-2-3.2-3.6 1.8-3.6 3.2-3.6 3.2 2 3.2 3.6z"/>
<path d="M1173.3 427.7c0 4-4.8 9.4-8.5 9.4s-8.5-5.4-8.5-9.4 4.8-9.4 8.5-9.4 8.5 5.4 8.5 9.4zM1171.5 427.7c0 3.2-3.8 7.4-6.7 7.4s-6.7-4.2-6.7-7.4 3.8-7.4 6.7-7.4 6.7 4.2 6.7 7.4zM1169.8 427.7c0 2.3-2.8 5.5-4.9 5.5s-4.9-3.1-4.9-5.5 2.8-5.5 4.9-5.5 4.9 3.1 4.9 5.5zM1168.1 427.7c0 1.5-1.8 3.6-3.2 3.6s-3.2-2-3.2-3.6 1.8-3.6 3.2-3.6 3.2 2 3.2 3.6z"/>
<path d="M1235.8 437.9c0 4.5-4.9 10.4-8.5 10.4s-8.5-5.9-8.5-10.4 4.9-10.4 8.5-10.4 8.5 5.9 8.5 10.4zM1234 437.9c0 3.5-3.8 8.2-6.7 8.2s-6.7-4.7-6.7-8.2 3.8-8.2 6.7-8.2 6.7 4.7 6.7 8.2zM1232.2 437.9c0 2.6-2.8 6-4.9 6s-4.9-3.4-4.9-6 2.8-6 4.9-6 4.9 3.4 4.9 6zM1230.5 437.9c0 1.7-1.8 4-3.2 4s-3.2-2.3-3.2-4 1.8-4 3.2-4 3.2 2.3 3.2 4z"/>
<path d="M1302.5 362.4c0 4-4.8 9.4-8.5 9.4s-8.5-5.4-8.5-9.4 4.8-9.4 8.5-9.4 8.5 5.4 8.5 9.4zM1300.7 362.4c0 3.2-3.8 7.4-6.7 7.4s-6.7-4.2-6.7-7.4 3.8-7.4 6.7-7.4 6.7 4.2 6.7 7.4zM1298.9 362.4c0 2.3-2.8 5.5-4.9 5.5s-4.9-3.1-4.9-5.5 2.8-5.5 4.9-5.5 4.9 3.1 4.9 5.5zM1297.3 362.4c0 1.5-1.8 3.6-3.2 3.6s-3.2-2-3.2-3.6 1.8-3.6 3.2-3.6 3.2 2 3.2 3.6z"/>
<path d="M1340.2 351.3c0 4.7-5.6 10.8-9.9 10.8s-9.9-6.2-9.9-10.8 5.6-10.8 9.9-10.8 9.9 6.2 9.9 10.8zM1338.1 351.3c0 3.7-4.4 8.6-7.8 8.6s-7.8-4.9-7.8-8.6 4.4-8.6 7.8-8.6 7.8 4.9 7.8 8.6zM1336 351.3c0 2.7-3.3 6.3-5.7 6.3s-5.7-3.6-5.7-6.3 3.3-6.3 5.7-6.3 5.7 3.6 5.7 6.3zM1334.1 351.3c0 1.8-2.1 4.1-3.7 4.1s-3.7-2.3-3.7-4.1 2.1-4.1 3.7-4.1 3.7 2.3 3.7 4.1z"/>
<path d="M1321.3 385.6c0 4-4.8 9.4-8.4 9.4s-8.4-5.3-8.4-9.4 4.8-9.4 8.4-9.4 8.4 5.3 8.4 9.4zM1319.5 385.6c0 3.2-3.8 7.4-6.7 7.4s-6.7-4.2-6.7-7.4 3.8-7.4 6.7-7.4 6.7 4.2 6.7 7.4zM1317.8 385.6c0 2.3-2.8 5.4-4.9 5.4s-4.9-3.1-4.9-5.4 2.8-5.4 4.9-5.4 4.9 3.1 4.9 5.4zM1316.1 385.6c0 1.5-1.8 3.6-3.2 3.6s-3.2-2-3.2-3.6 1.8-3.6 3.2-3.6 3.2 2 3.2 3.6z"/>
<path d="M1401.7 351.8c0 4.7-5.1 10.9-8.9 10.9s-8.9-6.2-8.9-10.9 5.1-10.9 8.9-10.9 8.9 6.2 8.9 10.9zM1399.9 351.8c0 3.7-4 8.6-7 8.6s-7-4.9-7-8.6 4-8.6 7-8.6 7 4.9 7 8.6zM1398 351.8c0 2.7-2.9 6.3-5.2 6.3s-5.2-3.6-5.2-6.3 2.9-6.3 5.2-6.3 5.2 3.6 5.2 6.3zM1396.2 351.8c0 1.8-1.9 4.1-3.4 4.1s-3.4-2.4-3.4-4.1 1.9-4.1 3.4-4.1 3.4 2.4 3.4 4.1z"/>
<path d="M1378.5 386.5c0 4.6-5.2 10.6-9.1 10.6s-9.1-6-9.1-10.6 5.2-10.6 9.1-10.6 9.1 6 9.1 10.6zM1376.6 386.5c0 3.6-4.1 8.4-7.2 8.4s-7.2-4.8-7.2-8.4 4.1-8.4 7.2-8.4 7.2 4.8 7.2 8.4zM1374.6 386.5c0 2.6-3 6.1-5.3 6.1s-5.3-3.5-5.3-6.1 3-6.1 5.3-6.1 5.3 3.5 5.3 6.1zM1372.8 386.5c0 1.7-2 4-3.5 4s-3.5-2.3-3.5-4 2-4 3.5-4 3.5 2.3 3.5 4z"/>
<path d="M1274 429.7c0 4.3-4.5 9.9-7.9 9.9s-7.9-5.7-7.9-9.9 4.5-9.9 7.9-9.9 7.9 5.7 7.9 9.9zM1272.4 429.7c0 3.4-3.6 7.8-6.3 7.8s-6.3-4.5-6.3-7.8 3.6-7.8 6.3-7.8 6.3 4.5 6.3 7.8zM1270.7 429.7c0 2.5-2.6 5.8-4.6 5.8s-4.6-3.3-4.6-5.8 2.6-5.8 4.6-5.8 4.6 3.3 4.6 5.8zM1269.1 429.7c0 1.6-1.7 3.8-3 3.8s-3-2.1-3-3.8 1.7-3.8 3-3.8 3 2.1 3 3.8z"/>
<path d="M1285.7 405.5c0 4.1-4.7 9.6-8.2 9.6s-8.2-5.5-8.2-9.6 4.7-9.6 8.2-9.6 8.2 5.5 8.2 9.6zM1284 405.5c0 3.3-3.7 7.6-6.5 7.6s-6.5-4.3-6.5-7.6 3.7-7.6 6.5-7.6 6.5 4.3 6.5 7.6zM1282.3 405.5c0 2.4-2.7 5.6-4.8 5.6s-4.8-3.2-4.8-5.6 2.7-5.6 4.8-5.6 4.8 3.2 4.8 5.6zM1280.6 405.5c0 1.6-1.8 3.7-3.1 3.7s-3.1-2.1-3.1-3.7 1.8-3.7 3.1-3.7 3.1 2.1 3.1 3.7z"/>
<path d="M1339.5 399.3c0 4.3-5.1 9.9-8.9 9.9s-8.9-5.7-8.9-9.9 5.1-9.9 8.9-9.9 8.9 5.7 8.9 9.9zM1337.7 399.3c0 3.4-4 7.8-7.1 7.8s-7.1-4.5-7.1-7.8 4-7.8 7.1-7.8 7.1 4.5 7.1 7.8zM1335.8 399.3c0 2.5-3 5.8-5.2 5.8s-5.2-3.3-5.2-5.8 3-5.8 5.2-5.8 5.2 3.3 5.2 5.8zM1334 399.3c0 1.6-1.9 3.8-3.4 3.8s-3.4-2.2-3.4-3.8 1.9-3.8 3.4-3.8 3.4 2.2 3.4 3.8z"/>
<path d="M1354 391.7c0 4.2-5.1 9.9-8.9 9.9s-8.9-5.6-8.9-9.9 5.1-9.9 8.9-9.9 8.9 5.6 8.9 9.9zM1352.1 391.7c0 3.4-4 7.8-7 7.8s-7-4.4-7-7.8 4-7.8 7-7.8 7 4.4 7 7.8zM1350.3 391.7c0 2.5-2.9 5.7-5.2 5.7s-5.2-3.3-5.2-5.7 2.9-5.7 5.2-5.7 5.2 3.3 5.2 5.7zM1348.5 391.7c0 1.6-1.9 3.8-3.4 3.8s-3.4-2.1-3.4-3.8 1.9-3.8 3.4-3.8 3.4 2.1 3.4 3.8z"/>
<path d="M1278.5 459c0 4.6-5 10.8-8.8 10.8s-8.8-6.1-8.8-10.8 5-10.8 8.8-10.8 8.8 6.1 8.8 10.8zM1276.7 459c0 3.7-4 8.5-7 8.5s-7-4.8-7-8.5 4-8.5 7-8.5 7 4.8 7 8.5zM1274.8 459c0 2.7-2.9 6.2-5.1 6.2s-5.1-3.6-5.1-6.2 2.9-6.2 5.1-6.2 5.1 3.6 5.1 6.2zM1273.1 459c0 1.8-1.9 4.1-3.3 4.1s-3.3-2.3-3.3-4.1 1.9-4.1 3.3-4.1 3.3 2.3 3.3 4.1z"/>
<path d="M1268.5 471.8c0 4.3-5.1 9.9-8.9 9.9s-8.9-5.7-8.9-9.9 5.1-9.9 8.9-9.9 8.9 5.7 8.9 9.9zM1266.6 471.8c0 3.4-4 7.8-7.1 7.8s-7.1-4.5-7.1-7.8 4-7.8 7.1-7.8 7.1 4.5 7.1 7.8zM1264.7 471.8c0 2.5-3 5.8-5.2 5.8s-5.2-3.3-5.2-5.8 3-5.8 5.2-5.8 5.2 3.3 5.2 5.8zM1262.9 471.8c0 1.6-1.9 3.8-3.4 3.8s-3.4-2.1-3.4-3.8 1.9-3.8 3.4-3.8 3.4 2.1 3.4 3.8z"/>
<path d="M1344.4 455.8c0 5.7-7 13.2-12.3 13.2s-12.3-7.5-12.3-13.2 7-13.2 12.3-13.2 12.3 7.5 12.3 13.2zM1341.9 455.8c0 4.5-5.5 10.4-9.7 10.4s-9.7-6-9.7-10.4 5.5-10.4 9.7-10.4 9.7 6 9.7 10.4zM1339.3 455.8c0 3.3-4.1 7.7-7.1 7.7s-7.1-4.4-7.1-7.7 4.1-7.7 7.1-7.7 7.1 4.4 7.1 7.7zM1336.8 455.8c0 2.2-2.7 5-4.7 5s-4.7-2.9-4.7-5 2.7-5 4.7-5 4.7 2.9 4.7 5z"/>
<path d="M1393.2 459.4c0 4.1-4.9 9.6-8.7 9.6s-8.7-5.5-8.7-9.6 4.9-9.6 8.7-9.6 8.7 5.5 8.7 9.6zM1391.3 459.4c0 3.3-3.9 7.6-6.9 7.6s-6.9-4.3-6.9-7.6 3.9-7.6 6.9-7.6 6.9 4.3 6.9 7.6zM1389.5 459.4c0 2.4-2.9 5.6-5 5.6s-5-3.2-5-5.6 2.9-5.6 5-5.6 5 3.2 5 5.6zM1387.8 459.4c0 1.6-1.9 3.7-3.3 3.7s-3.3-2.1-3.3-3.7 1.9-3.7 3.3-3.7 3.3 2.1 3.3 3.7z"/>
<path d="M1344.8 457.2c0 4.2-5 9.8-8.8 9.8s-8.8-5.6-8.8-9.8 5-9.8 8.8-9.8 8.8 5.6 8.8 9.8zM1343 457.2c0 3.3-4 7.7-7 7.7s-7-4.4-7-7.7 4-7.7 7-7.7 7 4.4 7 7.7zM1341.1 457.2c0 2.4-2.9 5.7-5.1 5.7s-5.1-3.2-5.1-5.7 2.9-5.7 5.1-5.7 5.1 3.2 5.1 5.7zM1339.4 457.2c0 1.6-1.9 3.7-3.3 3.7s-3.3-2.1-3.3-3.7 1.9-3.7 3.3-3.7 3.3 2.1 3.3 3.7z"/>
<path d="M1407.2 411.2c0 5-5.5 11.5-9.6 11.5s-9.6-6.6-9.6-11.5 5.5-11.5 9.6-11.5 9.6 6.6 9.6 11.5zM1405.2 411.2c0 3.9-4.3 9.1-7.6 9.1s-7.6-5.2-7.6-9.1 4.3-9.1 7.6-9.1 7.6 5.2 7.6 9.1zM1403.2 411.2c0 2.9-3.2 6.7-5.6 6.7s-5.6-3.8-5.6-6.7 3.2-6.7 5.6-6.7 5.6 3.8 5.6 6.7zM1401.3 411.2c0 1.9-2.1 4.4-3.6 4.4s-3.6-2.5-3.6-4.4 2.1-4.4 3.6-4.4 3.6 2.5 3.6 4.4z"/>
<path d="M1418.5 414.2c0 5-5.5 11.6-9.7 11.6s-9.7-6.6-9.7-11.6 5.5-11.6 9.7-11.6 9.7 6.6 9.7 11.6zM1416.4 414.2c0 3.9-4.4 9.2-7.6 9.2s-7.6-5.2-7.6-9.2 4.4-9.2 7.6-9.2 7.6 5.2 7.6 9.2zM1414.4 414.2c0 2.9-3.2 6.7-5.6 6.7s-5.6-3.8-5.6-6.7 3.2-6.7 5.6-6.7 5.6 3.8 5.6 6.7zM1412.5 414.2c0 1.9-2.1 4.4-3.7 4.4s-3.7-2.5-3.7-4.4 2.1-4.4 3.7-4.4 3.7 2.5 3.7 4.4z"/>
<path d="M1438.6 454.5c0 4.4-4.8 10.3-8.4 10.3s-8.4-5.9-8.4-10.3 4.8-10.3 8.4-10.3 8.4 5.9 8.4 10.3zM1436.8 454.5c0 3.5-3.8 8.1-6.7 8.1s-6.7-4.6-6.7-8.1 3.8-8.1 6.7-8.1 6.7 4.6 6.7 8.1zM1435.1 454.5c0 2.6-2.8 6-4.9 6s-4.9-3.4-4.9-6 2.8-6 4.9-6 4.9 3.4 4.9 6zM1433.4 454.5c0 1.7-1.8 3.9-3.2 3.9s-3.2-2.2-3.2-3.9 1.8-3.9 3.2-3.9 3.2 2.2 3.2 3.9z"/>
<path d="M1426 471c0 4.9-4.9 11.4-8.5 11.4s-8.5-6.5-8.5-11.4 4.9-11.4 8.5-11.4 8.5 6.5 8.5 11.4zM1424.2 471c0 3.9-3.8 9-6.7 9s-6.7-5.1-6.7-9 3.8-9 6.7-9 6.7 5.1 6.7 9zM1422.4 471c0 2.8-2.8 6.6-4.9 6.6s-4.9-3.8-4.9-6.6 2.8-6.6 4.9-6.6 4.9 3.8 4.9 6.6zM1420.7 471c0 1.9-1.8 4.3-3.2 4.3s-3.2-2.5-3.2-4.3 1.8-4.3 3.2-4.3 3.2 2.5 3.2 4.3z"/>
<path d="M1281.3 499.2c0 4.7-5.1 10.9-8.9 10.9s-8.9-6.2-8.9-10.9 5.1-10.9 8.9-10.9 8.9 6.2 8.9 10.9zM1279.4 499.2c0 3.7-4 8.6-7 8.6s-7-4.9-7-8.6 4-8.6 7-8.6 7 4.9 7 8.6zM1277.5 499.2c0 2.7-2.9 6.3-5.2 6.3s-5.2-3.6-5.2-6.3 2.9-6.3 5.2-6.3 5.2 3.6 5.2 6.3zM1275.7 499.2c0 1.8-1.9 4.1-3.4 4.1s-3.4-2.4-3.4-4.1 1.9-4.1 3.4-4.1 3.4 2.4 3.4 4.1z"/>
<path d="M1298.2 513.1c0 4.3-4.9 10-8.6 10s-8.6-5.7-8.6-10 4.9-10 8.6-10 8.6 5.7 8.6 10zM1296.3 513.1c0 3.4-3.9 7.9-6.8 7.9s-6.8-4.5-6.8-7.9 3.9-7.9 6.8-7.9 6.8 4.5 6.8 7.9zM1294.5 513.1c0 2.5-2.8 5.8-5 5.8s-5-3.3-5-5.8 2.8-5.8 5-5.8 5 3.3 5 5.8zM1292.8 513.1c0 1.6-1.9 3.8-3.3 3.8s-3.3-2.2-3.3-3.8 1.9-3.8 3.3-3.8 3.3 2.2 3.3 3.8z"/>
<path d="M1316.6 533.2c0 4.4-5.6 10.3-9.8 10.3s-9.8-5.9-9.8-10.3 5.6-10.3 9.8-10.3 9.8 5.9 9.8 10.3zM1314.6 533.2c0 3.5-4.4 8.1-7.7 8.1s-7.7-4.6-7.7-8.1 4.4-8.1 7.7-8.1 7.7 4.6 7.7 8.1zM1312.5 533.2c0 2.6-3.2 6-5.7 6s-5.7-3.4-5.7-6 3.2-6 5.7-6 5.7 3.4 5.7 6zM1310.5 533.2c0 1.7-2.1 3.9-3.7 3.9s-3.7-2.2-3.7-3.9 2.1-3.9 3.7-3.9 3.7 2.2 3.7 3.9z"/>
<path d="M1445.3 493.7c0 4.5-4.3 10.4-7.5 10.4s-7.5-5.9-7.5-10.4 4.3-10.4 7.5-10.4 7.5 5.9 7.5 10.4zM1443.7 493.7c0 3.5-3.4 8.2-6 8.2s-6-4.7-6-8.2 3.4-8.2 6-8.2 6 4.7 6 8.2zM1442.2 493.7c0 2.6-2.5 6-4.4 6s-4.4-3.4-4.4-6 2.5-6 4.4-6 4.4 3.4 4.4 6zM1440.6 493.7c0 1.7-1.6 3.9-2.9 3.9s-2.9-2.2-2.9-3.9 1.6-3.9 2.9-3.9 2.9 2.2 2.9 3.9z"/>
<path d="M1508.3 502.6c0 4.6-5.5 10.6-9.6 10.6s-9.6-6-9.6-10.6 5.5-10.6 9.6-10.6 9.6 6 9.6 10.6zM1506.2 502.6c0 3.6-4.3 8.4-7.6 8.4s-7.6-4.8-7.6-8.4 4.3-8.4 7.6-8.4 7.6 4.8 7.6 8.4zM1504.2 502.6c0 2.6-3.2 6.1-5.6 6.1s-5.6-3.5-5.6-6.1 3.2-6.1 5.6-6.1 5.6 3.5 5.6 6.1zM1502.3 502.6c0 1.7-2.1 4-3.7 4s-3.7-2.3-3.7-4 2.1-4 3.7-4 3.7 2.3 3.7 4z"/>
<path d="M1560.5 415.4c0 4.2-4.4 9.7-7.7 9.7s-7.7-5.5-7.7-9.7 4.4-9.7 7.7-9.7 7.7 5.5 7.7 9.7zM1558.9 415.4c0 3.3-3.5 7.6-6.1 7.6s-6.1-4.4-6.1-7.6 3.5-7.6 6.1-7.6 6.1 4.4 6.1 7.6zM1557.3 415.4c0 2.4-2.6 5.6-4.5 5.6s-4.5-3.2-4.5-5.6 2.6-5.6 4.5-5.6 4.5 3.2 4.5 5.6zM1555.7 415.4c0 1.6-1.7 3.7-2.9 3.7s-2.9-2.1-2.9-3.7 1.7-3.7 2.9-3.7 2.9 2.1 2.9 3.7z"/>
<path d="M1630.8 372.5c0 2.8-2.7 6.6-4.7 6.6s-4.7-3.8-4.7-6.6 2.7-6.6 4.7-6.6 4.7 3.8 4.7 6.6zM1628.6 372.5c0 1.6-1.5 3.6-2.6 3.6s-2.6-2.1-2.6-3.6 1.5-3.6 2.6-3.6 2.6 2.1 2.6 3.6z"/>
<path d="M1449.5 372.9c0 5.1-4.5 11.8-7.9 11.8s-7.9-6.8-7.9-11.8 4.5-11.8 7.9-11.8 7.9 6.8 7.9 11.8zM1447.9 372.9c0 4-3.6 9.4-6.2 9.4s-6.2-5.3-6.2-9.4 3.6-9.4 6.2-9.4 6.2 5.3 6.2 9.4zM1446.2 372.9c0 3-2.6 6.9-4.6 6.9s-4.6-3.9-4.6-6.9 2.6-6.9 4.6-6.9 4.6 3.9 4.6 6.9zM1444.6 372.9c0 1.9-1.7 4.5-3 4.5s-3-2.6-3-4.5 1.7-4.5 3-4.5 3 2.6 3 4.5z"/>
<path d="M1086.9 664.8c0 4-4.8 9.4-8.5 9.4s-8.5-5.4-8.5-9.4 4.8-9.4 8.5-9.4 8.5 5.4 8.5 9.4zM1085.2 664.8c0 3.2-3.8 7.4-6.7 7.4s-6.7-4.2-6.7-7.4 3.8-7.4 6.7-7.4 6.7 4.2 6.7 7.4zM1083.4 664.8c0 2.3-2.8 5.4-4.9 5.4s-4.9-3.1-4.9-5.4 2.8-5.4 4.9-5.4 4.9 3.1 4.9 5.4zM1081.7 664.8c0 1.5-1.8 3.6-3.2 3.6s-3.2-2-3.2-3.6 1.8-3.6 3.2-3.6 3.2 2 3.2 3.6z"/>
<path d="M1158.8 601.1c0 4.1-4.9 9.6-8.7 9.6s-8.7-5.5-8.7-9.6 4.9-9.6 8.7-9.6 8.7 5.5 8.7 9.6zM1157 601.1c0 3.3-3.9 7.6-6.8 7.6s-6.8-4.3-6.8-7.6 3.9-7.6 6.8-7.6 6.8 4.3 6.8 7.6zM1155.2 601.1c0 2.4-2.9 5.6-5 5.6s-5-3.2-5-5.6 2.9-5.6 5-5.6 5 3.2 5 5.6zM1153.5 601.1c0 1.6-1.9 3.7-3.3 3.7s-3.3-2.1-3.3-3.7 1.9-3.7 3.3-3.7 3.3 2.1 3.3 3.7z"/>
<path d="M1196.2 620.5c0 4.1-4.6 9.5-8.1 9.5s-8.1-5.4-8.1-9.5 4.6-9.5 8.1-9.5 8.1 5.4 8.1 9.5zM1194.5 620.5c0 3.2-3.6 7.5-6.4 7.5s-6.4-4.3-6.4-7.5 3.6-7.5 6.4-7.5 6.4 4.3 6.4 7.5zM1192.8 620.5c0 2.4-2.7 5.5-4.7 5.5s-4.7-3.1-4.7-5.5 2.7-5.5 4.7-5.5 4.7 3.1 4.7 5.5zM1191.2 620.5c0 1.6-1.7 3.6-3.1 3.6s-3.1-2.1-3.1-3.6 1.7-3.6 3.1-3.6 3.1 2.1 3.1 3.6z"/>
<path d="M1231.9 613.1c0 4.1-5.4 9.5-9.5 9.5s-9.5-5.4-9.5-9.5 5.4-9.5 9.5-9.5 9.5 5.4 9.5 9.5zM1229.9 613.1c0 3.2-4.3 7.5-7.5 7.5s-7.5-4.3-7.5-7.5 4.3-7.5 7.5-7.5 7.5 4.3 7.5 7.5zM1227.9 613.1c0 2.4-3.1 5.5-5.5 5.5s-5.5-3.1-5.5-5.5 3.1-5.5 5.5-5.5 5.5 3.1 5.5 5.5zM1226 613.1c0 1.6-2.1 3.6-3.6 3.6s-3.6-2.1-3.6-3.6 2.1-3.6 3.6-3.6 3.6 2.1 3.6 3.6z"/>
</g>
</g>
<g stroke="#1a1a8c" fill="#1a1a8c" stroke-width=".9">
<path d="M1174.2 321.6L1205.3 290.1" stroke-dasharray="2 1.500"/>
<circle cx="1174.2" cy="321.6" r="1.100" stroke="none"/>
<circle cx="1179.4" cy="316.3" r="1.100" stroke="none"/>
<circle cx="1183.3" cy="312.4" r="1.100" stroke="none"/>
<circle cx="1188.7" cy="306.9" r="1.100" stroke="none"/>
<circle cx="1194.9" cy="300.6" r="1.100" stroke="none"/>
<circle cx="1198.4" cy="297.1" r="1.100" stroke="none"/>
<circle cx="1202.1" cy="293.3" r="1.100" stroke="none"/>
<circle cx="1204.1" cy="291.3" r="1.100" stroke="none"/>
<circle cx="1205.3" cy="290.1" r="1.100" stroke="none"/>
<path d="M1193.9 414.4L1165.3 427.7" stroke-dasharray="2 1.500"/>
<circle cx="1193.9" cy="414.4" r="1.100" stroke="none"/>
<circle cx="1189.1" cy="416.6" r="1.100" stroke="none"/>
<circle cx="1185.5" cy="418.3" r="1.100" stroke="none"/>
<circle cx="1180.5" cy="420.6" r="1.100" stroke="none"/>
<circle cx="1174.8" cy="423.3" r="1.100" stroke="none"/>
<circle cx="1171.6" cy="424.7" r="1.100" stroke="none"/>
<circle cx="1168.2" cy="426.3" r="1.100" stroke="none"/>
<circle cx="1166.4" cy="427.2" r="1.100" stroke="none"/>
<circle cx="1165.3" cy="427.7" r="1.100" stroke="none"/>
<path d="M1579.3 398.2L1552.6 415.3" stroke-dasharray="2 1.500"/>
<circle cx="1579.3" cy="398.2" r="1.100" stroke="none"/>
<circle cx="1574.8" cy="401.1" r="1.100" stroke="none"/>
<circle cx="1571.5" cy="403.2" r="1.100" stroke="none"/>
<circle cx="1566.8" cy="406.2" r="1.100" stroke="none"/>
<circle cx="1561.5" cy="409.6" r="1.100" stroke="none"/>
<circle cx="1558.5" cy="411.5" r="1.100" stroke="none"/>
<circle cx="1555.4" cy="413.5" r="1.100" stroke="none"/>
<circle cx="1553.6" cy="414.6" r="1.100" stroke="none"/>
<circle cx="1552.6" cy="415.3" r="1.100" stroke="none"/>
<path d="M1104.9 600.1L1078.2 664.9" stroke-dasharray="2 1.500"/>
<circle cx="1104.9" cy="600.1" r="1.100" stroke="none"/>
<circle cx="1100.4" cy="610.9" r="1.100" stroke="none"/>
<circle cx="1097.1" cy="619" r="1.100" stroke="none"/>
<circle cx="1092.4" cy="630.4" r="1.100" stroke="none"/>
<circle cx="1087.1" cy="643.3" r="1.100" stroke="none"/>
<circle cx="1084.1" cy="650.5" r="1.100" stroke="none"/>
<circle cx="1081" cy="658.2" r="1.100" stroke="none"/>
<circle cx="1079.2" cy="662.4" r="1.100" stroke="none"/>
<circle cx="1078.2" cy="664.9" r="1.100" stroke="none"/>
<path d="M1185 560L1187.9 621" stroke-dasharray="2 1.500"/>
<circle cx="1185" cy="560" r="1.100" stroke="none"/>
<circle cx="1185.5" cy="570.2" r="1.100" stroke="none"/>
<circle cx="1185.8" cy="577.8" r="1.100" stroke="none"/>
<circle cx="1186.4" cy="588.5" r="1.100" stroke="none"/>
<circle cx="1186.9" cy="600.7" r="1.100" stroke="none"/>
<circle cx="1187.3" cy="607.5" r="1.100" stroke="none"/>
<circle cx="1187.6" cy="614.7" r="1.100" stroke="none"/>
<circle cx="1187.8" cy="618.6" r="1.100" stroke="none"/>
<circle cx="1187.9" cy="621" r="1.100" stroke="none"/>
</g>
<text x="909" y="231.5" font-size="15" fill="#8b1a1a">T=298 K</text>
<text x="909" y="250.2" font-size="15" fill="#8b1a1a">15N_Ub (wt) 0.5mM</text>
<text x="909" y="268.9" font-size="15" fill="#8b1a1a">Buffer 10mM KPi pH 6.8</text>
<text x="909" y="287.6" font-size="15" fill="#8b1a1a">tubo 5mm</text>
<text x="909" y="306.3" font-size="15" fill="#8b1a1a">600ul</text>
<rect x="1211.500" y="285.500" width="52.500" height="33.500" fill="#ffb6c1"/>
<text x="1238" y="307" text-anchor="middle" font-size="11" fill="#7a2a86" letter-spacing=".6">68N-H</text>
<text x="1176.3" y="457" text-anchor="middle" font-size="11" fill="#1a1a8c" letter-spacing=".6">44N-H</text>
<text x="1563.2" y="444" text-anchor="middle" font-size="11" fill="#1a1a8c" letter-spacing=".6">11N-H</text>
<text x="1044.8" y="644.5" text-anchor="middle" font-size="11" fill="#1a1a8c" letter-spacing=".6">13N-H</text>
<text x="1152" y="601" text-anchor="middle" font-size="11" fill="#1a1a8c" letter-spacing=".6">70N-H</text>
<path d="M868.8 198.4C870.2 199.8 878.4 203 877.5 207C876.6 211 864.1 218.7 863.6 222.6C863.1 226.5 876.5 227 874.4 230.3C872.3 233.7 851.4 238.6 851.2 242.7C851.1 246.8 872.7 251.5 873.5 255.1C874.3 258.7 855.6 261.3 855.8 264.4C855.9 267.5 872.6 270.6 874.4 273.7C876.2 276.8 870.6 279.6 866.7 283C862.8 286.4 852.5 291.3 851.2 293.9C849.9 296.5 859.4 296.2 858.9 298.5C858.4 300.8 848 304.9 848 307.8C848 310.7 858.6 313 858.9 315.6C859.2 318.2 847 320.5 849.6 323.3C852.2 326.1 877.2 329.5 874.4 332.6C871.6 335.7 836.7 339.1 832.6 342C828.5 344.9 845.5 347.4 849.6 349.7C853.7 352 853.4 353.4 857.4 355.9C861.4 358.4 877.9 361 873.5 364.6C869.1 368.2 831.6 372.6 831 377.6C830.4 382.6 868.8 389.5 869.8 394.7C870.8 399.9 839.8 403.2 837.2 408.6C834.6 414 856.9 422 854.3 427.2C851.7 432.4 822.7 435.7 821.7 439.6C820.7 443.6 846.6 446.9 848.1 450.9C849.6 454.8 826.6 458.6 831 463.3C835.4 468 871.5 474.4 874.4 478.8C877.2 483.2 851.3 486.8 848.1 489.6C844.9 492.4 856.1 493.2 855.2 495.8C854.3 498.4 839.9 500.7 842.5 505.1C845.1 509.5 867.7 517.8 870.7 522.2C873.7 526.6 860 527.4 860.5 531.5C861 535.6 873.5 542.1 873.5 547C873.5 551.9 858.9 555.5 860.5 560.9C862.1 566.3 885.3 571.5 883.1 579.5C880.9 587.5 848.7 601.8 847.1 609C845.5 616.2 869.1 617.6 873.5 623C877.9 628.4 872.5 635.4 873.5 641.6C874.5 647.8 880.5 651.9 879.7 660.2C878.9 668.5 870.6 686 868.8 691.2" fill="none" stroke="#a84848" stroke-width="1"/>
<path d="M909 154C930.4 154 1056.3 154 1080 154C1103.7 154 1095 154.5 1098.3 154C1101.6 153.4 1104.8 149.3 1106.6 149.3C1108.5 149.3 1110.6 153 1113.3 153.6C1116 154.2 1125.4 154.4 1128.3 154C1131.2 153.5 1134.7 150.4 1136.6 150.3C1138.5 150.2 1141.8 152.9 1143.3 153.3C1144.7 153.7 1146.8 153.9 1148.3 153.3C1149.7 152.7 1153.7 149.1 1154.9 148.6C1156.2 148.1 1157.4 149.3 1158.3 149.3C1159.1 149.3 1160.3 148 1161.6 148.3C1162.8 148.5 1166.6 151.2 1168.2 151.3C1169.9 151.4 1173.4 149 1174.9 149C1176.4 148.9 1178.7 150.8 1179.9 150.6C1181.1 150.5 1183.6 147.8 1184.9 147.6C1186.1 147.4 1188.6 149.3 1189.9 149C1191.1 148.7 1193.4 144.8 1194.9 145.3C1196.3 145.8 1199.3 151.7 1201.5 152.6C1203.8 153.6 1210.7 153.1 1213.2 153C1215.7 152.8 1219.2 153.1 1221.5 151.6C1223.8 150.2 1229.2 141.2 1231.5 141.3C1233.8 141.4 1238.2 150.9 1239.8 152.3C1241.5 153.7 1243 153.6 1244.8 152.3C1246.7 151 1252.3 142 1254.8 142C1257.3 141.9 1262.2 153 1264.8 152C1267.4 150.9 1272.8 133.5 1275.5 133.3C1278.2 133.1 1284.3 150 1286.5 150.6C1288.7 151.3 1291.7 139 1293.1 138.3C1294.6 137.6 1296.9 144.5 1298.1 145C1299.4 145.5 1301.9 142.5 1303.1 142.3C1304.3 142.1 1306.3 144.4 1307.4 143.3C1308.6 142.2 1311 133.6 1312.1 133.3C1313.2 133 1315.1 141.7 1316.4 141C1317.8 140.3 1321.8 129.4 1323.1 127.6C1324.3 125.9 1325.4 124.9 1326.4 127.3C1327.5 129.7 1329.5 143.6 1331.4 146.6C1333.3 149.7 1338.9 151.7 1341.4 151.6C1343.9 151.5 1349.3 146 1351.4 146C1353.5 145.9 1356 151.6 1358.1 151.3C1360.1 151 1366 144 1368 143.3C1370.1 142.6 1373.2 144.9 1374.7 146C1376.2 147 1378 151.2 1379.7 152C1381.4 152.7 1386.2 154.1 1388 152C1389.9 149.8 1393.2 136.1 1394.7 135C1396.1 133.9 1398.3 143.3 1399.7 143.3C1401.1 143.3 1404 134.8 1405.7 135C1407.3 135.2 1411.7 143.9 1413 145C1414.3 146 1415.3 142.8 1416.3 143.3C1417.4 143.8 1420.3 148.9 1421.3 149C1422.4 149 1423.8 144.3 1424.7 144C1425.5 143.7 1426.9 147.2 1428 146.6C1429 146 1431.9 140.3 1433 139.3C1434.1 138.3 1436.1 139.4 1437 138.6C1437.9 137.9 1439.1 132 1440.3 133.3C1441.5 134.6 1444.9 147.4 1446.3 149C1447.7 150.5 1450.3 146.3 1451.3 146C1452.3 145.6 1453.3 146.9 1454.6 146C1456 145 1460.3 138.2 1462 138.3C1463.6 138.4 1466.5 145 1467.9 146.6C1469.4 148.3 1472.1 152 1473.6 151.6C1475.1 151.2 1478.4 143.4 1479.6 143.3C1480.8 143.2 1482.1 149.7 1482.9 150.6C1483.8 151.5 1485.3 151.6 1486.3 150.6C1487.2 149.6 1489.6 143.4 1490.6 142.6C1491.5 141.9 1493 145.4 1493.9 144.6C1494.9 143.9 1497.2 136.5 1498.2 136.6C1499.3 136.8 1501.3 144.9 1502.2 146C1503.2 147 1504.7 145 1505.6 145.3C1506.5 145.6 1508.2 147.5 1509.6 148.3C1511 149.1 1515.4 152 1516.9 151.6C1518.4 151.3 1520.7 145.3 1521.9 145.3C1523.1 145.3 1524.6 151.5 1526.2 151.6C1527.8 151.7 1532.7 146.5 1534.5 146C1536.4 145.5 1539.7 147.7 1541.2 147.6C1542.7 147.5 1544.7 144.8 1546.2 145.3C1547.7 145.8 1549.7 151.1 1552.9 152C1556 152.8 1568.3 153.2 1571.2 152C1574.1 150.8 1574.7 143.5 1576.2 142.3C1577.6 141.1 1581 141.1 1582.8 142.3C1584.7 143.5 1586.6 150.6 1591.2 152C1595.7 153.3 1614.9 153.7 1619.5 153.3C1624 152.8 1625.9 148.3 1627.8 148.3C1629.7 148.3 1631.5 152.7 1634.4 153.3C1637.4 153.9 1648.2 154.4 1651.1 153.3C1654 152.2 1656.5 144.9 1657.8 144.6C1659 144.4 1660.4 150.4 1661.1 151.3C1661.8 152.2 1663.1 151.9 1663.4 152" fill="none" stroke="#a84848" stroke-width="1" stroke-linejoin="round"/>
<path d="M909.500 696.5H1665" stroke="#444" stroke-width="1"/>
<path d="M917 696.5v4.5M937.6 696.5v2.5M958.3 696.5v4.5M979 696.5v2.5M999.6 696.5v4.5M1020.2 696.5v2.5M1040.9 696.5v4.5M1061.5 696.5v2.5M1082.2 696.5v4.5M1102.8 696.5v2.5M1123.5 696.5v4.5M1144.2 696.5v2.5M1164.8 696.5v4.5M1185.5 696.5v2.5M1206.1 696.5v4.5M1226.8 696.5v2.5M1247.4 696.5v4.5M1268 696.5v2.5M1288.7 696.5v4.5M1309.3 696.5v2.5M1330 696.5v4.5M1350.7 696.5v2.5M1371.3 696.5v4.5M1392 696.5v2.5M1412.6 696.5v4.5M1433.2 696.5v2.5M1453.9 696.5v4.5M1474.6 696.5v2.5M1495.2 696.5v4.5M1515.8 696.5v2.5M1536.5 696.5v4.5M1557.2 696.5v2.5M1577.8 696.5v4.5M1598.5 696.5v2.5M1619.1 696.5v4.5M1639.8 696.5v2.5M1660.4 696.5v4.5" stroke="#444" stroke-width="1"/>
<text x="917" y="720.500" text-anchor="middle" font-size="14.300">10.4</text>
<text x="958.3" y="720.500" text-anchor="middle" font-size="14.300">10.2</text>
<text x="999.6" y="720.500" text-anchor="middle" font-size="14.300">10.0</text>
<text x="1040.9" y="720.500" text-anchor="middle" font-size="14.300">9.8</text>
<text x="1082.2" y="720.500" text-anchor="middle" font-size="14.300">9.6</text>
<text x="1123.5" y="720.500" text-anchor="middle" font-size="14.300">9.4</text>
<text x="1164.8" y="720.500" text-anchor="middle" font-size="14.300">9.2</text>
<text x="1206.1" y="720.500" text-anchor="middle" font-size="14.300">9.0</text>
<text x="1247.4" y="720.500" text-anchor="middle" font-size="14.300">8.8</text>
<text x="1288.7" y="720.500" text-anchor="middle" font-size="14.300">8.6</text>
<text x="1330" y="720.500" text-anchor="middle" font-size="14.300">8.4</text>
<text x="1371.3" y="720.500" text-anchor="middle" font-size="14.300">8.2</text>
<text x="1412.6" y="720.500" text-anchor="middle" font-size="14.300">8.0</text>
<text x="1453.9" y="720.500" text-anchor="middle" font-size="14.300">7.8</text>
<text x="1495.2" y="720.500" text-anchor="middle" font-size="14.300">7.6</text>
<text x="1536.5" y="720.500" text-anchor="middle" font-size="14.300">7.4</text>
<text x="1577.8" y="720.500" text-anchor="middle" font-size="14.300">7.2</text>
<text x="1619.1" y="720.500" text-anchor="middle" font-size="14.300">7.0</text>
<text x="1660.4" y="720.500" text-anchor="middle" font-size="14.300">6.8</text>
<text x="1286" y="736" text-anchor="middle" font-size="16">f2 (ppm)</text>
<path d="M1668.5 198.500V693" stroke="#444" stroke-width="1"/>
<path d="M1668.5 206.8h2.5M1668.5 224.3h4M1668.5 241.8h2.5M1668.5 259.4h4M1668.5 276.9h2.5M1668.5 294.4h4M1668.5 311.9h2.5M1668.5 329.4h4M1668.5 347h2.5M1668.5 364.5h4M1668.5 382h2.5M1668.5 399.6h4M1668.5 417.1h2.5M1668.5 434.6h4M1668.5 452.1h2.5M1668.5 469.6h4M1668.5 487.2h2.5M1668.5 504.7h4M1668.5 522.2h2.5M1668.5 539.8h4M1668.5 557.3h2.5M1668.5 574.8h4M1668.5 592.3h2.5M1668.5 609.8h4M1668.5 627.4h2.5M1668.5 644.9h4M1668.5 662.4h2.5M1668.5 680h4" stroke="#444" stroke-width="1"/>
<text x="1673.500" y="228.3" font-size="14.300">117</text>
<text x="1673.500" y="263.4" font-size="14.300">118</text>
<text x="1673.500" y="298.4" font-size="14.300">119</text>
<text x="1673.500" y="333.4" font-size="14.300">120</text>
<text x="1673.500" y="368.5" font-size="14.300">121</text>
<text x="1673.500" y="403.6" font-size="14.300">122</text>
<text x="1673.500" y="438.6" font-size="14.300">123</text>
<text x="1673.500" y="473.6" font-size="14.300">124</text>
<text x="1673.500" y="508.7" font-size="14.300">125</text>
<text x="1673.500" y="543.8" font-size="14.300">126</text>
<text x="1673.500" y="578.8" font-size="14.300">127</text>
<text x="1673.500" y="613.8" font-size="14.300">128</text>
<text x="1673.500" y="648.9" font-size="14.300">129</text>
<text x="1673.500" y="684" font-size="14.300">130</text>
<text transform="translate(1722,446) rotate(-90)" text-anchor="middle" font-size="16">f1 (ppm)</text>
<rect x="808" y="97.5" width="10" height="10" fill="#08e408"/>
<rect x="1264.5" y="97.5" width="10" height="10" fill="#08e408"/>
<rect x="1720" y="97.5" width="10" height="10" fill="#08e408"/>
<rect x="808" y="416" width="10" height="10" fill="#08e408"/>
<rect x="1720" y="416" width="10" height="10" fill="#08e408"/>
<rect x="808" y="734.5" width="10" height="10" fill="#08e408"/>
<rect x="1264.5" y="734.5" width="10" height="10" fill="#08e408"/>
<rect x="1720" y="734.5" width="10" height="10" fill="#08e408"/>
</svg></div>
<div class="abs" style="left:975.5px;top:31px;width:5px;height:727px;background:#cacaca;"></div>
<div class="abs" style="left:975.5px;top:31px;width:5px;height:19px;background:#fff;border-left:1px solid #e0e0e0"></div>
<div class="abs" style="left:975.5px;top:287.5px;width:5px;height:147.5px;background:#fbfbfb;border-left:1px solid #e0e0e0"></div>
<div class="abs" style="left:975.5px;top:701px;width:5px;height:57px;background:#fbfbfb;border-left:1px solid #d8d8d8"></div>
<div class="abs" style="left:975.5px;top:720px;width:5px;height:1px;background:#c8c8c8"></div>
<div class="abs" style="left:975.5px;top:739px;width:5px;height:1px;background:#c8c8c8"></div>
<div class="abs" style="left:975.5px;top:757px;width:5px;height:1px;background:#c8c8c8"></div>
<div class="abs" style="left:975.5px;top:758px;width:5px;height:12px;background:#c8d4e4"></div>
<div class="abs" style="left:4px;top:758px;width:971px;height:13px;background:#cdcdcd;"></div>
<div class="abs" style="left:4px;top:758px;width:20px;height:13px;background:#fdfdfd;border:1px solid #e4e4e4"><svg style="position:absolute;left:6px;top:4px" width="7" height="9"><path d="M0 5L6 0v10z" fill="#606060"/></svg></div>
<div class="abs" style="left:955px;top:758px;width:20px;height:13px;background:#fdfdfd;border:1px solid #e4e4e4"><svg style="position:absolute;left:7px;top:4px" width="7" height="9"><path d="M6 5L0 0v10z" fill="#606060"/></svg></div>
<div class="abs" style="left:370px;top:758px;width:239px;height:13px;background:#f2f2f2;"></div>
  </div>
</div>
</body>
</html>
